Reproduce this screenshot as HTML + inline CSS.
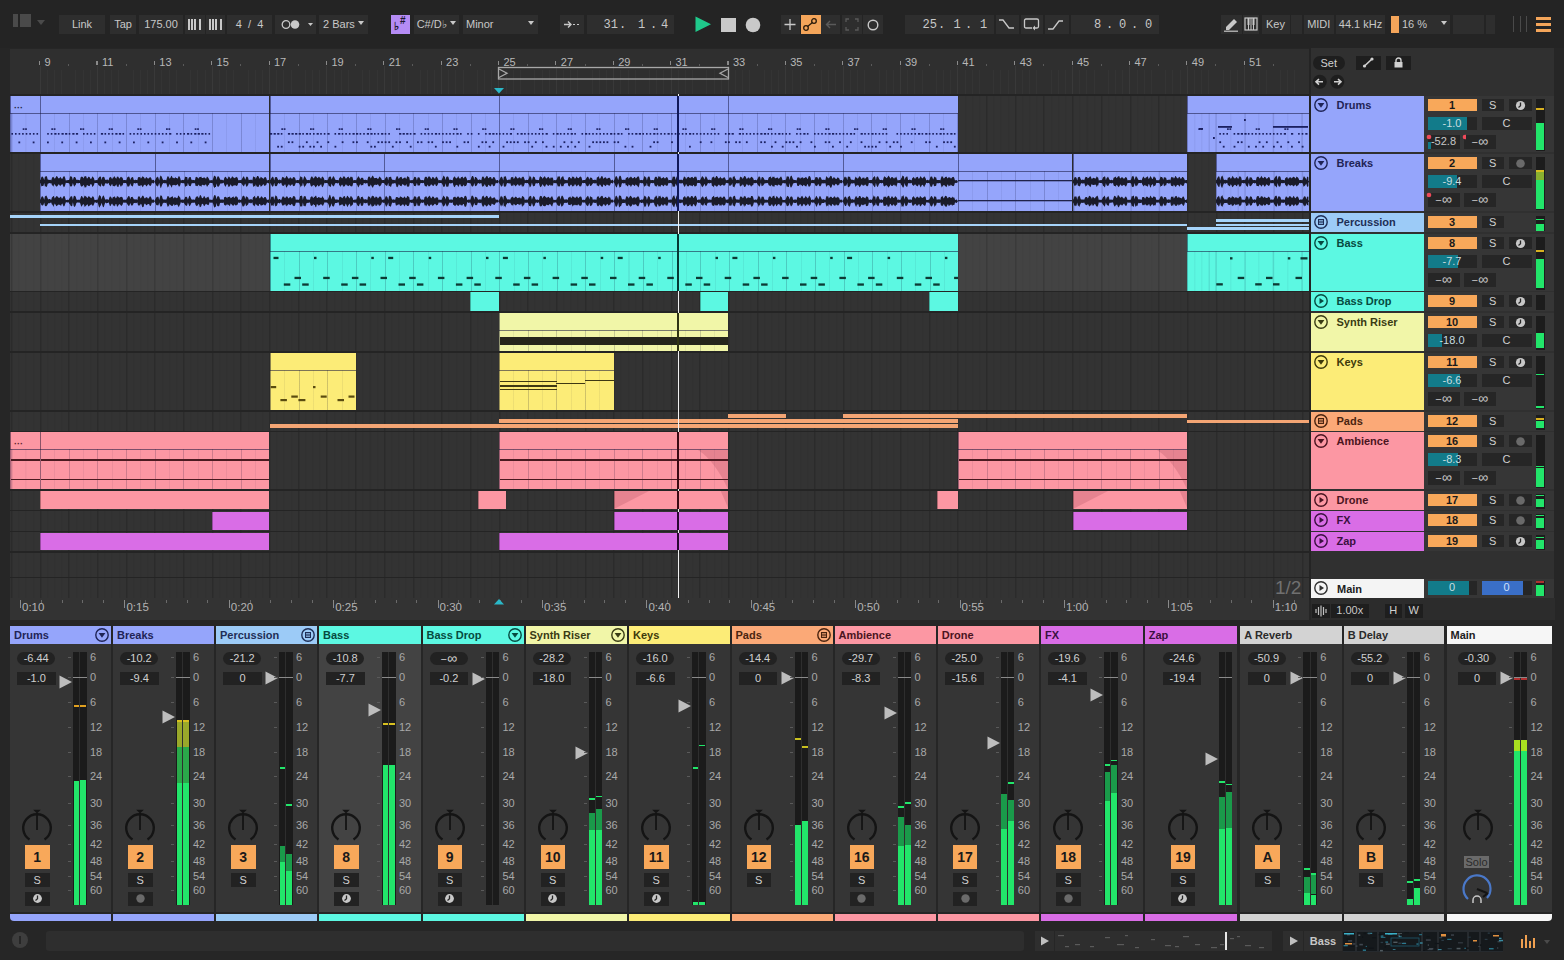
<!DOCTYPE html><html><head><meta charset="utf-8"><style>
*{margin:0;padding:0;box-sizing:border-box}
html,body{width:1564px;height:960px;overflow:hidden;background:#262626}
body{position:relative;font-family:"Liberation Sans",sans-serif}
div,svg{position:absolute}
</style></head><body><div style="left:0.0px;top:0.0px;width:1564.0px;height:48.0px;background:#242424;"></div><div style="left:13.0px;top:14.0px;width:5.0px;height:13.0px;background:#4a4a4a;"></div><div style="left:20.0px;top:14.0px;width:11.0px;height:13.0px;background:#4a4a4a;"></div><svg style="left:37px;top:20px" width="8" height="5"><path d="M0 0 L8 0 L4 5Z" fill="#4a4a4a"/></svg><div style="left:59.0px;top:15.0px;width:46.0px;height:19.0px;line-height:19.0px;background:#2e2e2e;color:#c8c8c8;font-size:11px;font-weight:normal;font-family:'Liberation Sans', sans-serif;text-align:center;white-space:nowrap;">Link</div><div style="left:110.0px;top:15.0px;width:26.0px;height:19.0px;line-height:19.0px;background:#2e2e2e;color:#c8c8c8;font-size:11px;font-weight:normal;font-family:'Liberation Sans', sans-serif;text-align:center;white-space:nowrap;">Tap</div><div style="left:139.0px;top:15.0px;width:44.0px;height:19.0px;line-height:19.0px;background:#2e2e2e;color:#c8c8c8;font-size:11px;font-weight:normal;font-family:'Liberation Sans', sans-serif;text-align:center;white-space:nowrap;">175.00</div><div style="left:184.5px;top:15.0px;width:20.0px;height:19.0px;background:#2e2e2e;"></div><div style="left:206.0px;top:15.0px;width:18.5px;height:19.0px;background:#2e2e2e;"></div><div style="left:188.0px;top:19.0px;width:1.6px;height:11.0px;background:#c8c8c8;"></div><div style="left:191.0px;top:19.0px;width:1.6px;height:11.0px;background:#c8c8c8;"></div><div style="left:194.0px;top:19.0px;width:1.6px;height:11.0px;background:#c8c8c8;"></div><div style="left:199.0px;top:19.0px;width:1.6px;height:11.0px;background:#c8c8c8;"></div><div style="left:209.0px;top:19.0px;width:1.6px;height:11.0px;background:#c8c8c8;"></div><div style="left:212.0px;top:19.0px;width:1.6px;height:11.0px;background:#c8c8c8;"></div><div style="left:215.0px;top:19.0px;width:1.6px;height:11.0px;background:#c8c8c8;"></div><div style="left:220.0px;top:19.0px;width:1.6px;height:11.0px;background:#c8c8c8;"></div><div style="left:227.0px;top:15.0px;width:45.0px;height:19.0px;line-height:19.0px;background:#2e2e2e;color:#c8c8c8;font-size:11px;font-weight:normal;font-family:'Liberation Sans', sans-serif;text-align:center;white-space:nowrap;">4&nbsp;&nbsp;/&nbsp;&nbsp;4</div><div style="left:275.0px;top:15.0px;width:40.5px;height:19.0px;background:#2e2e2e;"></div><svg style="left:281px;top:19px" width="40" height="11"><circle cx="5" cy="5.5" r="3.8" fill="none" stroke="#c8c8c8" stroke-width="1.3"/><circle cx="14" cy="5.5" r="4.3" fill="#c8c8c8"/><path d="M27 4 L32 4 L29.5 7Z" fill="#c8c8c8"/></svg><div style="left:319.0px;top:15.0px;width:49.0px;height:19.0px;line-height:19.0px;background:#2e2e2e;color:#c8c8c8;font-size:11px;font-weight:normal;font-family:'Liberation Sans', sans-serif;text-align:center;white-space:nowrap;">2 Bars&nbsp;&nbsp;&nbsp;</div><svg style="left:358px;top:21px" width="6" height="4"><path d="M0 0 L6 0 L3 4Z" fill="#c8c8c8"/></svg><div style="left:390.5px;top:15.0px;width:19.5px;height:18.5px;background:#b58cf5;"></div><div style="left:393.5px;top:20.5px;color:#1e1830;font-size:11px;font-weight:bold;font-family:'Liberation Sans', sans-serif;line-height:1;white-space:nowrap;">&#9837;</div><div style="left:400.0px;top:15.5px;color:#1e1830;font-size:10px;font-weight:bold;font-family:'Liberation Sans', sans-serif;line-height:1;white-space:nowrap;">#</div><div style="left:413.5px;top:15.0px;width:45.5px;height:19.0px;line-height:19.0px;background:#2e2e2e;color:#c8c8c8;font-size:11px;font-weight:normal;font-family:'Liberation Sans', sans-serif;text-align:center;white-space:nowrap;">C#/D&#9837;&nbsp;&nbsp;&nbsp;</div><svg style="left:450px;top:21px" width="6" height="4"><path d="M0 0 L6 0 L3 4Z" fill="#c8c8c8"/></svg><div style="left:462.5px;top:15.0px;width:75.0px;height:19.0px;background:#2e2e2e;"></div><div style="left:466.0px;top:19.0px;color:#c8c8c8;font-size:11px;font-weight:normal;font-family:'Liberation Sans', sans-serif;line-height:1;white-space:nowrap;">Minor</div><svg style="left:528px;top:21px" width="6" height="4"><path d="M0 0 L6 0 L3 4Z" fill="#c8c8c8"/></svg><div style="left:560.0px;top:15.0px;width:23.5px;height:19.0px;background:#2e2e2e;"></div><svg style="left:563px;top:19px" width="18" height="11"><path d="M1 5.5 L8 5.5 M5 2.5 L8 5.5 L5 8.5" stroke="#c8c8c8" stroke-width="1.4" fill="none"/><path d="M10 5.5 H12 M14 5.5 H16" stroke="#c8c8c8" stroke-width="1.2"/></svg><div style="left:587.0px;top:15.0px;width:87.0px;height:19.0px;background:#2e2e2e;"></div><div style="left:603.5px;top:19.0px;color:#c8c8c8;font-size:12px;font-weight:normal;font-family:'Liberation Mono', monospace;line-height:1;white-space:nowrap;">31</div><div style="left:619.0px;top:19.0px;color:#c8c8c8;font-size:12px;font-weight:normal;font-family:'Liberation Mono', monospace;line-height:1;white-space:nowrap;">.</div><div style="left:638.0px;top:19.0px;color:#c8c8c8;font-size:12px;font-weight:normal;font-family:'Liberation Mono', monospace;line-height:1;white-space:nowrap;">1</div><div style="left:650.0px;top:19.0px;color:#c8c8c8;font-size:12px;font-weight:normal;font-family:'Liberation Mono', monospace;line-height:1;white-space:nowrap;">.</div><div style="left:661.0px;top:19.0px;color:#c8c8c8;font-size:12px;font-weight:normal;font-family:'Liberation Mono', monospace;line-height:1;white-space:nowrap;">4</div><svg style="left:695px;top:16px" width="17" height="17"><path d="M0.5 0.5 L16 8.3 L0.5 16Z" fill="#1fc98b"/></svg><div style="left:721.0px;top:17.5px;width:14.5px;height:14.0px;background:#c9c9c9;"></div><svg style="left:745px;top:16.5px" width="16" height="16"><circle cx="8" cy="8" r="7.3" fill="#c9c9c9"/></svg><div style="left:780.5px;top:15.0px;width:19.0px;height:19.0px;background:#2e2e2e;"></div><svg style="left:783px;top:17px" width="14" height="15"><path d="M7 2 V13 M1.5 7.5 H12.5" stroke="#c8c8c8" stroke-width="1.3"/></svg><div style="left:800.5px;top:15.0px;width:20.0px;height:19.0px;background:#f4a55a;"></div><svg style="left:802px;top:17px" width="16" height="15"><circle cx="4" cy="11" r="2.3" fill="none" stroke="#2a1a0a" stroke-width="1.3"/><circle cx="12" cy="4" r="2.3" fill="none" stroke="#2a1a0a" stroke-width="1.3"/><path d="M5.6 9.4 L10.4 5.6" stroke="#2a1a0a" stroke-width="1.3"/></svg><div style="left:821.0px;top:15.0px;width:19.0px;height:19.0px;background:#2e2e2e;"></div><svg style="left:824px;top:18px" width="14" height="13"><path d="M12 6.5 H3 M6 3 L2.5 6.5 L6 10" stroke="#5a5a5a" stroke-width="1.4" fill="none"/></svg><div style="left:842.0px;top:15.0px;width:20.0px;height:19.0px;background:#2e2e2e;"></div><svg style="left:845px;top:18px" width="14" height="13"><path d="M1 4 V1 H4 M10 1 H13 V4 M13 9 V12 H10 M4 12 H1 V9" stroke="#5a5a5a" stroke-width="1.3" fill="none"/></svg><div style="left:863.0px;top:15.0px;width:20.0px;height:19.0px;background:#2e2e2e;"></div><svg style="left:866px;top:18px" width="14" height="14"><circle cx="7" cy="7" r="4.8" fill="none" stroke="#c8c8c8" stroke-width="1.4"/></svg><div style="left:904.5px;top:15.0px;width:89.0px;height:19.0px;background:#2e2e2e;"></div><div style="left:922.5px;top:19.0px;color:#c8c8c8;font-size:12px;font-weight:normal;font-family:'Liberation Mono', monospace;line-height:1;white-space:nowrap;">25</div><div style="left:938.0px;top:19.0px;color:#c8c8c8;font-size:12px;font-weight:normal;font-family:'Liberation Mono', monospace;line-height:1;white-space:nowrap;">.</div><div style="left:953.5px;top:19.0px;color:#c8c8c8;font-size:12px;font-weight:normal;font-family:'Liberation Mono', monospace;line-height:1;white-space:nowrap;">1</div><div style="left:965.0px;top:19.0px;color:#c8c8c8;font-size:12px;font-weight:normal;font-family:'Liberation Mono', monospace;line-height:1;white-space:nowrap;">.</div><div style="left:980.0px;top:19.0px;color:#c8c8c8;font-size:12px;font-weight:normal;font-family:'Liberation Mono', monospace;line-height:1;white-space:nowrap;">1</div><div style="left:995.5px;top:15.0px;width:23.5px;height:19.0px;background:#2e2e2e;"></div><svg style="left:998px;top:18px" width="18" height="13"><path d="M1 2 H5 L11 10 H16" stroke="#c8c8c8" stroke-width="1.3" fill="none"/></svg><div style="left:1021.0px;top:15.0px;width:21.5px;height:19.0px;background:#2e2e2e;"></div><svg style="left:1023px;top:17px" width="18" height="15"><path d="M9 11 H3 Q1.5 11 1.5 9.5 V3.5 Q1.5 2 3 2 H14 Q15.5 2 15.5 3.5 V9.5 Q15.5 11 14 11 H12" stroke="#c8c8c8" stroke-width="1.3" fill="none"/><path d="M12 8.5 L9.5 11 L12 13.5Z" fill="#c8c8c8"/></svg><div style="left:1044.5px;top:15.0px;width:24.5px;height:19.0px;background:#2e2e2e;"></div><svg style="left:1047px;top:18px" width="18" height="13"><path d="M1 11 H6 L12 3 H16" stroke="#c8c8c8" stroke-width="1.3" fill="none"/></svg><div style="left:1071.0px;top:15.0px;width:88.0px;height:19.0px;background:#2e2e2e;"></div><div style="left:1094.0px;top:19.0px;color:#c8c8c8;font-size:12px;font-weight:normal;font-family:'Liberation Mono', monospace;line-height:1;white-space:nowrap;">8</div><div style="left:1106.0px;top:19.0px;color:#c8c8c8;font-size:12px;font-weight:normal;font-family:'Liberation Mono', monospace;line-height:1;white-space:nowrap;">.</div><div style="left:1119.0px;top:19.0px;color:#c8c8c8;font-size:12px;font-weight:normal;font-family:'Liberation Mono', monospace;line-height:1;white-space:nowrap;">0</div><div style="left:1131.0px;top:19.0px;color:#c8c8c8;font-size:12px;font-weight:normal;font-family:'Liberation Mono', monospace;line-height:1;white-space:nowrap;">.</div><div style="left:1145.0px;top:19.0px;color:#c8c8c8;font-size:12px;font-weight:normal;font-family:'Liberation Mono', monospace;line-height:1;white-space:nowrap;">0</div><div style="left:1221.0px;top:15.0px;width:21.0px;height:19.0px;background:#2e2e2e;"></div><svg style="left:1223px;top:17px" width="17" height="15"><path d="M3 10 L11 2 L14 5 L6 13 L3 13Z" fill="#c8c8c8"/><path d="M1 14.2 H15" stroke="#c8c8c8" stroke-width="1.2"/></svg><div style="left:1243.0px;top:15.0px;width:16.0px;height:19.0px;background:#2e2e2e;"></div><svg style="left:1244px;top:17px" width="14" height="14"><rect x="1" y="1" width="12" height="12" fill="none" stroke="#c8c8c8" stroke-width="1.2"/><path d="M4.5 1 V13 M7 1 V13 M9.5 1 V13" stroke="#c8c8c8" stroke-width="1"/><rect x="3.5" y="1" width="2" height="7" fill="#c8c8c8"/><rect x="8.5" y="1" width="2" height="7" fill="#c8c8c8"/></svg><div style="left:1261.5px;top:15.0px;width:28.0px;height:19.0px;line-height:19.0px;background:#2e2e2e;color:#c8c8c8;font-size:11px;font-weight:normal;font-family:'Liberation Sans', sans-serif;text-align:center;white-space:nowrap;">Key</div><div style="left:1291.0px;top:15.0px;width:11.0px;height:19.0px;background:#2e2e2e;"></div><div style="left:1303.5px;top:15.0px;width:30.5px;height:19.0px;line-height:19.0px;background:#2e2e2e;color:#c8c8c8;font-size:11px;font-weight:normal;font-family:'Liberation Sans', sans-serif;text-align:center;white-space:nowrap;">MIDI</div><div style="left:1336.0px;top:15.0px;width:49.0px;height:19.0px;line-height:19.0px;background:#2e2e2e;color:#c8c8c8;font-size:11px;font-weight:normal;font-family:'Liberation Sans', sans-serif;text-align:center;white-space:nowrap;">44.1 kHz</div><div style="left:1390.5px;top:16.0px;width:8.5px;height:16.5px;background:#f4a55a;"></div><div style="left:1399.0px;top:15.0px;width:51.0px;height:19.0px;background:#2e2e2e;"></div><div style="left:1402.0px;top:19.0px;color:#c8c8c8;font-size:11px;font-weight:normal;font-family:'Liberation Sans', sans-serif;line-height:1;white-space:nowrap;">16 %</div><svg style="left:1441px;top:21px" width="6" height="4"><path d="M0 0 L6 0 L3 4Z" fill="#c8c8c8"/></svg><div style="left:1453.0px;top:15.0px;width:31.0px;height:19.0px;background:#2e2e2e;"></div><div style="left:1485.5px;top:15.0px;width:9.5px;height:19.0px;background:#2e2e2e;"></div><div style="left:1513.0px;top:16.0px;width:1.3px;height:16.0px;background:#4a4a4a;"></div><div style="left:1519.5px;top:16.0px;width:1.3px;height:16.0px;background:#4a4a4a;"></div><div style="left:1526.0px;top:16.0px;width:1.3px;height:16.0px;background:#4a4a4a;"></div><div style="left:1536.0px;top:16.5px;width:15.0px;height:3.0px;background:#f4a55a;"></div><div style="left:1536.0px;top:22.8px;width:15.0px;height:3.0px;background:#f4a55a;"></div><div style="left:1536.0px;top:29.0px;width:15.0px;height:3.0px;background:#f4a55a;"></div><div style="left:10.0px;top:49.0px;width:1544.0px;height:44.5px;background:#2f2f2f;"></div><div style="left:39.6px;top:66.0px;width:1.0px;height:27.5px;background:#393939;"></div><div style="left:44.6px;top:57.0px;color:#b8b8b8;font-size:11px;font-weight:normal;font-family:'Liberation Sans', sans-serif;line-height:1;white-space:nowrap;">9</div><div style="left:39.1px;top:61.0px;width:1.2px;height:4.0px;background:#8a8a8a;"></div><div style="left:68.2px;top:64.0px;width:1.0px;height:2.0px;background:#5a5a5a;"></div><div style="left:96.9px;top:66.0px;width:1.0px;height:27.5px;background:#393939;"></div><div style="left:101.9px;top:57.0px;color:#b8b8b8;font-size:11px;font-weight:normal;font-family:'Liberation Sans', sans-serif;line-height:1;white-space:nowrap;">11</div><div style="left:96.4px;top:61.0px;width:1.2px;height:4.0px;background:#8a8a8a;"></div><div style="left:125.6px;top:64.0px;width:1.0px;height:2.0px;background:#5a5a5a;"></div><div style="left:154.3px;top:66.0px;width:1.0px;height:27.5px;background:#393939;"></div><div style="left:159.3px;top:57.0px;color:#b8b8b8;font-size:11px;font-weight:normal;font-family:'Liberation Sans', sans-serif;line-height:1;white-space:nowrap;">13</div><div style="left:153.8px;top:61.0px;width:1.2px;height:4.0px;background:#8a8a8a;"></div><div style="left:183.0px;top:64.0px;width:1.0px;height:2.0px;background:#5a5a5a;"></div><div style="left:211.6px;top:66.0px;width:1.0px;height:27.5px;background:#393939;"></div><div style="left:216.6px;top:57.0px;color:#b8b8b8;font-size:11px;font-weight:normal;font-family:'Liberation Sans', sans-serif;line-height:1;white-space:nowrap;">15</div><div style="left:211.1px;top:61.0px;width:1.2px;height:4.0px;background:#8a8a8a;"></div><div style="left:240.3px;top:64.0px;width:1.0px;height:2.0px;background:#5a5a5a;"></div><div style="left:269.0px;top:66.0px;width:1.0px;height:27.5px;background:#393939;"></div><div style="left:274.0px;top:57.0px;color:#b8b8b8;font-size:11px;font-weight:normal;font-family:'Liberation Sans', sans-serif;line-height:1;white-space:nowrap;">17</div><div style="left:268.5px;top:61.0px;width:1.2px;height:4.0px;background:#8a8a8a;"></div><div style="left:297.7px;top:64.0px;width:1.0px;height:2.0px;background:#5a5a5a;"></div><div style="left:326.4px;top:66.0px;width:1.0px;height:27.5px;background:#393939;"></div><div style="left:331.4px;top:57.0px;color:#b8b8b8;font-size:11px;font-weight:normal;font-family:'Liberation Sans', sans-serif;line-height:1;white-space:nowrap;">19</div><div style="left:325.9px;top:61.0px;width:1.2px;height:4.0px;background:#8a8a8a;"></div><div style="left:355.0px;top:64.0px;width:1.0px;height:2.0px;background:#5a5a5a;"></div><div style="left:383.7px;top:66.0px;width:1.0px;height:27.5px;background:#393939;"></div><div style="left:388.7px;top:57.0px;color:#b8b8b8;font-size:11px;font-weight:normal;font-family:'Liberation Sans', sans-serif;line-height:1;white-space:nowrap;">21</div><div style="left:383.2px;top:61.0px;width:1.2px;height:4.0px;background:#8a8a8a;"></div><div style="left:412.4px;top:64.0px;width:1.0px;height:2.0px;background:#5a5a5a;"></div><div style="left:441.1px;top:66.0px;width:1.0px;height:27.5px;background:#393939;"></div><div style="left:446.1px;top:57.0px;color:#b8b8b8;font-size:11px;font-weight:normal;font-family:'Liberation Sans', sans-serif;line-height:1;white-space:nowrap;">23</div><div style="left:440.6px;top:61.0px;width:1.2px;height:4.0px;background:#8a8a8a;"></div><div style="left:469.8px;top:64.0px;width:1.0px;height:2.0px;background:#5a5a5a;"></div><div style="left:498.4px;top:66.0px;width:1.0px;height:27.5px;background:#393939;"></div><div style="left:503.4px;top:57.0px;color:#b8b8b8;font-size:11px;font-weight:normal;font-family:'Liberation Sans', sans-serif;line-height:1;white-space:nowrap;">25</div><div style="left:497.9px;top:61.0px;width:1.2px;height:4.0px;background:#8a8a8a;"></div><div style="left:527.1px;top:64.0px;width:1.0px;height:2.0px;background:#5a5a5a;"></div><div style="left:555.8px;top:66.0px;width:1.0px;height:27.5px;background:#393939;"></div><div style="left:560.8px;top:57.0px;color:#b8b8b8;font-size:11px;font-weight:normal;font-family:'Liberation Sans', sans-serif;line-height:1;white-space:nowrap;">27</div><div style="left:555.3px;top:61.0px;width:1.2px;height:4.0px;background:#8a8a8a;"></div><div style="left:584.5px;top:64.0px;width:1.0px;height:2.0px;background:#5a5a5a;"></div><div style="left:613.2px;top:66.0px;width:1.0px;height:27.5px;background:#393939;"></div><div style="left:618.2px;top:57.0px;color:#b8b8b8;font-size:11px;font-weight:normal;font-family:'Liberation Sans', sans-serif;line-height:1;white-space:nowrap;">29</div><div style="left:612.7px;top:61.0px;width:1.2px;height:4.0px;background:#8a8a8a;"></div><div style="left:641.8px;top:64.0px;width:1.0px;height:2.0px;background:#5a5a5a;"></div><div style="left:670.5px;top:66.0px;width:1.0px;height:27.5px;background:#393939;"></div><div style="left:675.5px;top:57.0px;color:#b8b8b8;font-size:11px;font-weight:normal;font-family:'Liberation Sans', sans-serif;line-height:1;white-space:nowrap;">31</div><div style="left:670.0px;top:61.0px;width:1.2px;height:4.0px;background:#8a8a8a;"></div><div style="left:699.2px;top:64.0px;width:1.0px;height:2.0px;background:#5a5a5a;"></div><div style="left:727.9px;top:66.0px;width:1.0px;height:27.5px;background:#393939;"></div><div style="left:732.9px;top:57.0px;color:#b8b8b8;font-size:11px;font-weight:normal;font-family:'Liberation Sans', sans-serif;line-height:1;white-space:nowrap;">33</div><div style="left:727.4px;top:61.0px;width:1.2px;height:4.0px;background:#8a8a8a;"></div><div style="left:756.6px;top:64.0px;width:1.0px;height:2.0px;background:#5a5a5a;"></div><div style="left:785.2px;top:66.0px;width:1.0px;height:27.5px;background:#393939;"></div><div style="left:790.2px;top:57.0px;color:#b8b8b8;font-size:11px;font-weight:normal;font-family:'Liberation Sans', sans-serif;line-height:1;white-space:nowrap;">35</div><div style="left:784.7px;top:61.0px;width:1.2px;height:4.0px;background:#8a8a8a;"></div><div style="left:813.9px;top:64.0px;width:1.0px;height:2.0px;background:#5a5a5a;"></div><div style="left:842.6px;top:66.0px;width:1.0px;height:27.5px;background:#393939;"></div><div style="left:847.6px;top:57.0px;color:#b8b8b8;font-size:11px;font-weight:normal;font-family:'Liberation Sans', sans-serif;line-height:1;white-space:nowrap;">37</div><div style="left:842.1px;top:61.0px;width:1.2px;height:4.0px;background:#8a8a8a;"></div><div style="left:871.3px;top:64.0px;width:1.0px;height:2.0px;background:#5a5a5a;"></div><div style="left:900.0px;top:66.0px;width:1.0px;height:27.5px;background:#393939;"></div><div style="left:905.0px;top:57.0px;color:#b8b8b8;font-size:11px;font-weight:normal;font-family:'Liberation Sans', sans-serif;line-height:1;white-space:nowrap;">39</div><div style="left:899.5px;top:61.0px;width:1.2px;height:4.0px;background:#8a8a8a;"></div><div style="left:928.6px;top:64.0px;width:1.0px;height:2.0px;background:#5a5a5a;"></div><div style="left:957.3px;top:66.0px;width:1.0px;height:27.5px;background:#393939;"></div><div style="left:962.3px;top:57.0px;color:#b8b8b8;font-size:11px;font-weight:normal;font-family:'Liberation Sans', sans-serif;line-height:1;white-space:nowrap;">41</div><div style="left:956.8px;top:61.0px;width:1.2px;height:4.0px;background:#8a8a8a;"></div><div style="left:986.0px;top:64.0px;width:1.0px;height:2.0px;background:#5a5a5a;"></div><div style="left:1014.7px;top:66.0px;width:1.0px;height:27.5px;background:#393939;"></div><div style="left:1019.7px;top:57.0px;color:#b8b8b8;font-size:11px;font-weight:normal;font-family:'Liberation Sans', sans-serif;line-height:1;white-space:nowrap;">43</div><div style="left:1014.2px;top:61.0px;width:1.2px;height:4.0px;background:#8a8a8a;"></div><div style="left:1043.4px;top:64.0px;width:1.0px;height:2.0px;background:#5a5a5a;"></div><div style="left:1072.0px;top:66.0px;width:1.0px;height:27.5px;background:#393939;"></div><div style="left:1077.0px;top:57.0px;color:#b8b8b8;font-size:11px;font-weight:normal;font-family:'Liberation Sans', sans-serif;line-height:1;white-space:nowrap;">45</div><div style="left:1071.5px;top:61.0px;width:1.2px;height:4.0px;background:#8a8a8a;"></div><div style="left:1100.7px;top:64.0px;width:1.0px;height:2.0px;background:#5a5a5a;"></div><div style="left:1129.4px;top:66.0px;width:1.0px;height:27.5px;background:#393939;"></div><div style="left:1134.4px;top:57.0px;color:#b8b8b8;font-size:11px;font-weight:normal;font-family:'Liberation Sans', sans-serif;line-height:1;white-space:nowrap;">47</div><div style="left:1128.9px;top:61.0px;width:1.2px;height:4.0px;background:#8a8a8a;"></div><div style="left:1158.1px;top:64.0px;width:1.0px;height:2.0px;background:#5a5a5a;"></div><div style="left:1186.8px;top:66.0px;width:1.0px;height:27.5px;background:#393939;"></div><div style="left:1191.8px;top:57.0px;color:#b8b8b8;font-size:11px;font-weight:normal;font-family:'Liberation Sans', sans-serif;line-height:1;white-space:nowrap;">49</div><div style="left:1186.3px;top:61.0px;width:1.2px;height:4.0px;background:#8a8a8a;"></div><div style="left:1215.4px;top:64.0px;width:1.0px;height:2.0px;background:#5a5a5a;"></div><div style="left:1244.1px;top:66.0px;width:1.0px;height:27.5px;background:#393939;"></div><div style="left:1249.1px;top:57.0px;color:#b8b8b8;font-size:11px;font-weight:normal;font-family:'Liberation Sans', sans-serif;line-height:1;white-space:nowrap;">51</div><div style="left:1243.6px;top:61.0px;width:1.2px;height:4.0px;background:#8a8a8a;"></div><div style="left:1272.8px;top:64.0px;width:1.0px;height:2.0px;background:#5a5a5a;"></div><div style="left:46.7px;top:70.0px;width:1.0px;height:23.5px;background:#343434;"></div><div style="left:53.9px;top:70.0px;width:1.0px;height:23.5px;background:#343434;"></div><div style="left:61.1px;top:70.0px;width:1.0px;height:23.5px;background:#343434;"></div><div style="left:75.4px;top:70.0px;width:1.0px;height:23.5px;background:#343434;"></div><div style="left:82.6px;top:70.0px;width:1.0px;height:23.5px;background:#343434;"></div><div style="left:89.8px;top:70.0px;width:1.0px;height:23.5px;background:#343434;"></div><div style="left:104.1px;top:70.0px;width:1.0px;height:23.5px;background:#343434;"></div><div style="left:111.3px;top:70.0px;width:1.0px;height:23.5px;background:#343434;"></div><div style="left:118.4px;top:70.0px;width:1.0px;height:23.5px;background:#343434;"></div><div style="left:132.8px;top:70.0px;width:1.0px;height:23.5px;background:#343434;"></div><div style="left:139.9px;top:70.0px;width:1.0px;height:23.5px;background:#343434;"></div><div style="left:147.1px;top:70.0px;width:1.0px;height:23.5px;background:#343434;"></div><div style="left:161.4px;top:70.0px;width:1.0px;height:23.5px;background:#343434;"></div><div style="left:168.6px;top:70.0px;width:1.0px;height:23.5px;background:#343434;"></div><div style="left:175.8px;top:70.0px;width:1.0px;height:23.5px;background:#343434;"></div><div style="left:190.1px;top:70.0px;width:1.0px;height:23.5px;background:#343434;"></div><div style="left:197.3px;top:70.0px;width:1.0px;height:23.5px;background:#343434;"></div><div style="left:204.5px;top:70.0px;width:1.0px;height:23.5px;background:#343434;"></div><div style="left:218.8px;top:70.0px;width:1.0px;height:23.5px;background:#343434;"></div><div style="left:226.0px;top:70.0px;width:1.0px;height:23.5px;background:#343434;"></div><div style="left:233.2px;top:70.0px;width:1.0px;height:23.5px;background:#343434;"></div><div style="left:247.5px;top:70.0px;width:1.0px;height:23.5px;background:#343434;"></div><div style="left:254.7px;top:70.0px;width:1.0px;height:23.5px;background:#343434;"></div><div style="left:261.8px;top:70.0px;width:1.0px;height:23.5px;background:#343434;"></div><div style="left:276.2px;top:70.0px;width:1.0px;height:23.5px;background:#343434;"></div><div style="left:283.3px;top:70.0px;width:1.0px;height:23.5px;background:#343434;"></div><div style="left:290.5px;top:70.0px;width:1.0px;height:23.5px;background:#343434;"></div><div style="left:304.9px;top:70.0px;width:1.0px;height:23.5px;background:#343434;"></div><div style="left:312.0px;top:70.0px;width:1.0px;height:23.5px;background:#343434;"></div><div style="left:319.2px;top:70.0px;width:1.0px;height:23.5px;background:#343434;"></div><div style="left:333.5px;top:70.0px;width:1.0px;height:23.5px;background:#343434;"></div><div style="left:340.7px;top:70.0px;width:1.0px;height:23.5px;background:#343434;"></div><div style="left:347.9px;top:70.0px;width:1.0px;height:23.5px;background:#343434;"></div><div style="left:362.2px;top:70.0px;width:1.0px;height:23.5px;background:#343434;"></div><div style="left:369.4px;top:70.0px;width:1.0px;height:23.5px;background:#343434;"></div><div style="left:376.6px;top:70.0px;width:1.0px;height:23.5px;background:#343434;"></div><div style="left:390.9px;top:70.0px;width:1.0px;height:23.5px;background:#343434;"></div><div style="left:398.1px;top:70.0px;width:1.0px;height:23.5px;background:#343434;"></div><div style="left:405.2px;top:70.0px;width:1.0px;height:23.5px;background:#343434;"></div><div style="left:419.6px;top:70.0px;width:1.0px;height:23.5px;background:#343434;"></div><div style="left:426.7px;top:70.0px;width:1.0px;height:23.5px;background:#343434;"></div><div style="left:433.9px;top:70.0px;width:1.0px;height:23.5px;background:#343434;"></div><div style="left:448.2px;top:70.0px;width:1.0px;height:23.5px;background:#343434;"></div><div style="left:455.4px;top:70.0px;width:1.0px;height:23.5px;background:#343434;"></div><div style="left:462.6px;top:70.0px;width:1.0px;height:23.5px;background:#343434;"></div><div style="left:476.9px;top:70.0px;width:1.0px;height:23.5px;background:#343434;"></div><div style="left:484.1px;top:70.0px;width:1.0px;height:23.5px;background:#343434;"></div><div style="left:491.3px;top:70.0px;width:1.0px;height:23.5px;background:#343434;"></div><div style="left:505.6px;top:70.0px;width:1.0px;height:23.5px;background:#343434;"></div><div style="left:512.8px;top:70.0px;width:1.0px;height:23.5px;background:#343434;"></div><div style="left:520.0px;top:70.0px;width:1.0px;height:23.5px;background:#343434;"></div><div style="left:534.3px;top:70.0px;width:1.0px;height:23.5px;background:#343434;"></div><div style="left:541.5px;top:70.0px;width:1.0px;height:23.5px;background:#343434;"></div><div style="left:548.6px;top:70.0px;width:1.0px;height:23.5px;background:#343434;"></div><div style="left:563.0px;top:70.0px;width:1.0px;height:23.5px;background:#343434;"></div><div style="left:570.1px;top:70.0px;width:1.0px;height:23.5px;background:#343434;"></div><div style="left:577.3px;top:70.0px;width:1.0px;height:23.5px;background:#343434;"></div><div style="left:591.6px;top:70.0px;width:1.0px;height:23.5px;background:#343434;"></div><div style="left:598.8px;top:70.0px;width:1.0px;height:23.5px;background:#343434;"></div><div style="left:606.0px;top:70.0px;width:1.0px;height:23.5px;background:#343434;"></div><div style="left:620.3px;top:70.0px;width:1.0px;height:23.5px;background:#343434;"></div><div style="left:627.5px;top:70.0px;width:1.0px;height:23.5px;background:#343434;"></div><div style="left:634.7px;top:70.0px;width:1.0px;height:23.5px;background:#343434;"></div><div style="left:649.0px;top:70.0px;width:1.0px;height:23.5px;background:#343434;"></div><div style="left:656.2px;top:70.0px;width:1.0px;height:23.5px;background:#343434;"></div><div style="left:663.4px;top:70.0px;width:1.0px;height:23.5px;background:#343434;"></div><div style="left:677.7px;top:70.0px;width:1.0px;height:23.5px;background:#343434;"></div><div style="left:684.9px;top:70.0px;width:1.0px;height:23.5px;background:#343434;"></div><div style="left:692.0px;top:70.0px;width:1.0px;height:23.5px;background:#343434;"></div><div style="left:706.4px;top:70.0px;width:1.0px;height:23.5px;background:#343434;"></div><div style="left:713.5px;top:70.0px;width:1.0px;height:23.5px;background:#343434;"></div><div style="left:720.7px;top:70.0px;width:1.0px;height:23.5px;background:#343434;"></div><div style="left:735.0px;top:70.0px;width:1.0px;height:23.5px;background:#343434;"></div><div style="left:742.2px;top:70.0px;width:1.0px;height:23.5px;background:#343434;"></div><div style="left:749.4px;top:70.0px;width:1.0px;height:23.5px;background:#343434;"></div><div style="left:763.7px;top:70.0px;width:1.0px;height:23.5px;background:#343434;"></div><div style="left:770.9px;top:70.0px;width:1.0px;height:23.5px;background:#343434;"></div><div style="left:778.1px;top:70.0px;width:1.0px;height:23.5px;background:#343434;"></div><div style="left:792.4px;top:70.0px;width:1.0px;height:23.5px;background:#343434;"></div><div style="left:799.6px;top:70.0px;width:1.0px;height:23.5px;background:#343434;"></div><div style="left:806.8px;top:70.0px;width:1.0px;height:23.5px;background:#343434;"></div><div style="left:821.1px;top:70.0px;width:1.0px;height:23.5px;background:#343434;"></div><div style="left:828.3px;top:70.0px;width:1.0px;height:23.5px;background:#343434;"></div><div style="left:835.4px;top:70.0px;width:1.0px;height:23.5px;background:#343434;"></div><div style="left:849.8px;top:70.0px;width:1.0px;height:23.5px;background:#343434;"></div><div style="left:856.9px;top:70.0px;width:1.0px;height:23.5px;background:#343434;"></div><div style="left:864.1px;top:70.0px;width:1.0px;height:23.5px;background:#343434;"></div><div style="left:878.5px;top:70.0px;width:1.0px;height:23.5px;background:#343434;"></div><div style="left:885.6px;top:70.0px;width:1.0px;height:23.5px;background:#343434;"></div><div style="left:892.8px;top:70.0px;width:1.0px;height:23.5px;background:#343434;"></div><div style="left:907.1px;top:70.0px;width:1.0px;height:23.5px;background:#343434;"></div><div style="left:914.3px;top:70.0px;width:1.0px;height:23.5px;background:#343434;"></div><div style="left:921.5px;top:70.0px;width:1.0px;height:23.5px;background:#343434;"></div><div style="left:935.8px;top:70.0px;width:1.0px;height:23.5px;background:#343434;"></div><div style="left:943.0px;top:70.0px;width:1.0px;height:23.5px;background:#343434;"></div><div style="left:950.1px;top:70.0px;width:1.0px;height:23.5px;background:#343434;"></div><div style="left:964.5px;top:70.0px;width:1.0px;height:23.5px;background:#343434;"></div><div style="left:971.7px;top:70.0px;width:1.0px;height:23.5px;background:#343434;"></div><div style="left:978.8px;top:70.0px;width:1.0px;height:23.5px;background:#343434;"></div><div style="left:993.2px;top:70.0px;width:1.0px;height:23.5px;background:#343434;"></div><div style="left:1000.3px;top:70.0px;width:1.0px;height:23.5px;background:#343434;"></div><div style="left:1007.5px;top:70.0px;width:1.0px;height:23.5px;background:#343434;"></div><div style="left:1021.9px;top:70.0px;width:1.0px;height:23.5px;background:#343434;"></div><div style="left:1029.0px;top:70.0px;width:1.0px;height:23.5px;background:#343434;"></div><div style="left:1036.2px;top:70.0px;width:1.0px;height:23.5px;background:#343434;"></div><div style="left:1050.5px;top:70.0px;width:1.0px;height:23.5px;background:#343434;"></div><div style="left:1057.7px;top:70.0px;width:1.0px;height:23.5px;background:#343434;"></div><div style="left:1064.9px;top:70.0px;width:1.0px;height:23.5px;background:#343434;"></div><div style="left:1079.2px;top:70.0px;width:1.0px;height:23.5px;background:#343434;"></div><div style="left:1086.4px;top:70.0px;width:1.0px;height:23.5px;background:#343434;"></div><div style="left:1093.5px;top:70.0px;width:1.0px;height:23.5px;background:#343434;"></div><div style="left:1107.9px;top:70.0px;width:1.0px;height:23.5px;background:#343434;"></div><div style="left:1115.1px;top:70.0px;width:1.0px;height:23.5px;background:#343434;"></div><div style="left:1122.2px;top:70.0px;width:1.0px;height:23.5px;background:#343434;"></div><div style="left:1136.6px;top:70.0px;width:1.0px;height:23.5px;background:#343434;"></div><div style="left:1143.7px;top:70.0px;width:1.0px;height:23.5px;background:#343434;"></div><div style="left:1150.9px;top:70.0px;width:1.0px;height:23.5px;background:#343434;"></div><div style="left:1165.2px;top:70.0px;width:1.0px;height:23.5px;background:#343434;"></div><div style="left:1172.4px;top:70.0px;width:1.0px;height:23.5px;background:#343434;"></div><div style="left:1179.6px;top:70.0px;width:1.0px;height:23.5px;background:#343434;"></div><div style="left:1193.9px;top:70.0px;width:1.0px;height:23.5px;background:#343434;"></div><div style="left:1201.1px;top:70.0px;width:1.0px;height:23.5px;background:#343434;"></div><div style="left:1208.3px;top:70.0px;width:1.0px;height:23.5px;background:#343434;"></div><div style="left:1222.6px;top:70.0px;width:1.0px;height:23.5px;background:#343434;"></div><div style="left:1229.8px;top:70.0px;width:1.0px;height:23.5px;background:#343434;"></div><div style="left:1237.0px;top:70.0px;width:1.0px;height:23.5px;background:#343434;"></div><div style="left:1251.3px;top:70.0px;width:1.0px;height:23.5px;background:#343434;"></div><div style="left:1258.5px;top:70.0px;width:1.0px;height:23.5px;background:#343434;"></div><div style="left:1265.6px;top:70.0px;width:1.0px;height:23.5px;background:#343434;"></div><div style="left:1280.0px;top:70.0px;width:1.0px;height:23.5px;background:#343434;"></div><div style="left:1287.1px;top:70.0px;width:1.0px;height:23.5px;background:#343434;"></div><div style="left:1294.3px;top:70.0px;width:1.0px;height:23.5px;background:#343434;"></div><div style="left:1308.7px;top:70.0px;width:1.0px;height:23.5px;background:#343434;"></div><div style="left:1315.8px;top:70.0px;width:1.0px;height:23.5px;background:#343434;"></div><div style="left:1323.0px;top:70.0px;width:1.0px;height:23.5px;background:#343434;"></div><svg style="left:497px;top:66px" width="234" height="16"><rect x="1.5" y="1.5" width="230" height="11.5" fill="none" stroke="#a8a8a8" stroke-width="1.3"/><path d="M2 3 L10 7.2 L2 11.5" fill="none" stroke="#a8a8a8" stroke-width="1.3"/><path d="M231 3 L223 7.2 L231 11.5" fill="none" stroke="#a8a8a8" stroke-width="1.3"/></svg><svg style="left:494px;top:88px" width="10" height="6"><path d="M0 0 L10 0 L5 5.5Z" fill="#2ab8c8"/></svg><div style="left:10.0px;top:94.0px;width:1299.0px;height:506.0px;background:#242424;"></div><div style="left:10.0px;top:96.0px;width:1299.0px;height:56.0px;background:#333333;"></div><div style="left:10px;top:96px;width:1299px;height:56px;background:repeating-linear-gradient(90deg, rgba(0,0,0,0.18) 0px, rgba(0,0,0,0.18) 1px, transparent 1px, transparent 28.68px),repeating-linear-gradient(90deg, rgba(0,0,0,0.06) 0px, rgba(0,0,0,0.06) 1px, transparent 1px, transparent 7.17px);background-position:1.38px 0;"></div><div style="left:10.0px;top:154.0px;width:1299.0px;height:57.0px;background:#333333;"></div><div style="left:10px;top:154px;width:1299px;height:57px;background:repeating-linear-gradient(90deg, rgba(0,0,0,0.18) 0px, rgba(0,0,0,0.18) 1px, transparent 1px, transparent 28.68px),repeating-linear-gradient(90deg, rgba(0,0,0,0.06) 0px, rgba(0,0,0,0.06) 1px, transparent 1px, transparent 7.17px);background-position:1.38px 0;"></div><div style="left:10.0px;top:213.0px;width:1299.0px;height:19.0px;background:#333333;"></div><div style="left:10px;top:213px;width:1299px;height:19px;background:repeating-linear-gradient(90deg, rgba(0,0,0,0.18) 0px, rgba(0,0,0,0.18) 1px, transparent 1px, transparent 28.68px),repeating-linear-gradient(90deg, rgba(0,0,0,0.06) 0px, rgba(0,0,0,0.06) 1px, transparent 1px, transparent 7.17px);background-position:1.38px 0;"></div><div style="left:10.0px;top:234.0px;width:1299.0px;height:57.0px;background:#434343;"></div><div style="left:10px;top:234px;width:1299px;height:57px;background:repeating-linear-gradient(90deg, rgba(0,0,0,0.18) 0px, rgba(0,0,0,0.18) 1px, transparent 1px, transparent 28.68px),repeating-linear-gradient(90deg, rgba(0,0,0,0.06) 0px, rgba(0,0,0,0.06) 1px, transparent 1px, transparent 7.17px);background-position:1.38px 0;"></div><div style="left:10.0px;top:292.0px;width:1299.0px;height:19.0px;background:#333333;"></div><div style="left:10px;top:292px;width:1299px;height:19px;background:repeating-linear-gradient(90deg, rgba(0,0,0,0.18) 0px, rgba(0,0,0,0.18) 1px, transparent 1px, transparent 28.68px),repeating-linear-gradient(90deg, rgba(0,0,0,0.06) 0px, rgba(0,0,0,0.06) 1px, transparent 1px, transparent 7.17px);background-position:1.38px 0;"></div><div style="left:10.0px;top:313.0px;width:1299.0px;height:38.0px;background:#333333;"></div><div style="left:10px;top:313px;width:1299px;height:38px;background:repeating-linear-gradient(90deg, rgba(0,0,0,0.18) 0px, rgba(0,0,0,0.18) 1px, transparent 1px, transparent 28.68px),repeating-linear-gradient(90deg, rgba(0,0,0,0.06) 0px, rgba(0,0,0,0.06) 1px, transparent 1px, transparent 7.17px);background-position:1.38px 0;"></div><div style="left:10.0px;top:353.0px;width:1299.0px;height:57.0px;background:#333333;"></div><div style="left:10px;top:353px;width:1299px;height:57px;background:repeating-linear-gradient(90deg, rgba(0,0,0,0.18) 0px, rgba(0,0,0,0.18) 1px, transparent 1px, transparent 28.68px),repeating-linear-gradient(90deg, rgba(0,0,0,0.06) 0px, rgba(0,0,0,0.06) 1px, transparent 1px, transparent 7.17px);background-position:1.38px 0;"></div><div style="left:10.0px;top:412.0px;width:1299.0px;height:19.0px;background:#333333;"></div><div style="left:10px;top:412px;width:1299px;height:19px;background:repeating-linear-gradient(90deg, rgba(0,0,0,0.18) 0px, rgba(0,0,0,0.18) 1px, transparent 1px, transparent 28.68px),repeating-linear-gradient(90deg, rgba(0,0,0,0.06) 0px, rgba(0,0,0,0.06) 1px, transparent 1px, transparent 7.17px);background-position:1.38px 0;"></div><div style="left:10.0px;top:432.0px;width:1299.0px;height:57.0px;background:#333333;"></div><div style="left:10px;top:432px;width:1299px;height:57px;background:repeating-linear-gradient(90deg, rgba(0,0,0,0.18) 0px, rgba(0,0,0,0.18) 1px, transparent 1px, transparent 28.68px),repeating-linear-gradient(90deg, rgba(0,0,0,0.06) 0px, rgba(0,0,0,0.06) 1px, transparent 1px, transparent 7.17px);background-position:1.38px 0;"></div><div style="left:10.0px;top:491.0px;width:1299.0px;height:19.0px;background:#333333;"></div><div style="left:10px;top:491px;width:1299px;height:19px;background:repeating-linear-gradient(90deg, rgba(0,0,0,0.18) 0px, rgba(0,0,0,0.18) 1px, transparent 1px, transparent 28.68px),repeating-linear-gradient(90deg, rgba(0,0,0,0.06) 0px, rgba(0,0,0,0.06) 1px, transparent 1px, transparent 7.17px);background-position:1.38px 0;"></div><div style="left:10.0px;top:511.0px;width:1299.0px;height:20.0px;background:#333333;"></div><div style="left:10px;top:511px;width:1299px;height:20px;background:repeating-linear-gradient(90deg, rgba(0,0,0,0.18) 0px, rgba(0,0,0,0.18) 1px, transparent 1px, transparent 28.68px),repeating-linear-gradient(90deg, rgba(0,0,0,0.06) 0px, rgba(0,0,0,0.06) 1px, transparent 1px, transparent 7.17px);background-position:1.38px 0;"></div><div style="left:10.0px;top:532.0px;width:1299.0px;height:19.0px;background:#333333;"></div><div style="left:10px;top:532px;width:1299px;height:19px;background:repeating-linear-gradient(90deg, rgba(0,0,0,0.18) 0px, rgba(0,0,0,0.18) 1px, transparent 1px, transparent 28.68px),repeating-linear-gradient(90deg, rgba(0,0,0,0.06) 0px, rgba(0,0,0,0.06) 1px, transparent 1px, transparent 7.17px);background-position:1.38px 0;"></div><div style="left:10.0px;top:553.0px;width:1299.0px;height:24.0px;background:#333333;"></div><div style="left:10px;top:553px;width:1299px;height:24px;background:repeating-linear-gradient(90deg, rgba(0,0,0,0.18) 0px, rgba(0,0,0,0.18) 1px, transparent 1px, transparent 28.68px),repeating-linear-gradient(90deg, rgba(0,0,0,0.06) 0px, rgba(0,0,0,0.06) 1px, transparent 1px, transparent 7.17px);background-position:1.38px 0;"></div><div style="left:10.0px;top:578.0px;width:1299.0px;height:20.0px;background:#333333;"></div><div style="left:10px;top:578px;width:1299px;height:20px;background:repeating-linear-gradient(90deg, rgba(0,0,0,0.18) 0px, rgba(0,0,0,0.18) 1px, transparent 1px, transparent 28.68px),repeating-linear-gradient(90deg, rgba(0,0,0,0.06) 0px, rgba(0,0,0,0.06) 1px, transparent 1px, transparent 7.17px);background-position:1.38px 0;"></div><div style="left:10.0px;top:96.0px;width:30.1px;height:56.0px;background:#95a5fb;"></div><div style="left:10.0px;top:113.0px;width:30.1px;height:39.0px;background:repeating-linear-gradient(90deg, rgba(0,0,40,0.06) 0px, rgba(0,0,40,0.06) 1px, transparent 1px, transparent 14.34px);background-position:1.38px 0"></div><div style="left:10.0px;top:113.0px;width:30.1px;height:39.0px;background:repeating-linear-gradient(90deg, rgba(0,0,40,0.13) 0px, rgba(0,0,40,0.13) 1px, transparent 1px, transparent 28.68px);background-position:1.38px 0"></div><div style="left:10.0px;top:113.0px;width:30.1px;height:1.0px;background:rgba(20,20,60,0.55);"></div><div style="left:10.0px;top:96.0px;width:1.0px;height:17.0px;background:rgba(0,0,30,0.45);"></div><div style="left:10.0px;top:113.0px;width:1.0px;height:39.0px;background:rgba(0,0,30,0.25);"></div><div style="left:14.0px;top:104.0px;color:#202040;font-size:9px;font-weight:bold;font-family:'Liberation Sans', sans-serif;line-height:1;white-space:nowrap;">&middot;&middot;&middot;</div><svg style="left:10.0px;top:96px" width="30.1" height="56" fill="#1b2060"><rect x="12.7" y="32.3" width="1.8" height="1.6"/><rect x="15.1" y="32.3" width="1.8" height="1.6"/><rect x="1.4" y="37" width="1.6" height="1.7"/><rect x="5.0" y="37" width="1.6" height="1.7"/><rect x="8.6" y="37" width="1.6" height="1.7"/><rect x="12.1" y="37" width="1.6" height="1.7"/><rect x="15.7" y="37" width="1.6" height="1.7"/><rect x="19.3" y="37" width="1.6" height="1.7"/><rect x="22.9" y="37" width="1.6" height="1.7"/><rect x="26.5" y="37" width="1.6" height="1.7"/><rect x="8.4" y="45.5" width="1.8" height="1.8"/><rect x="22.7" y="45.5" width="1.8" height="1.8"/></svg><div style="left:40.1px;top:96.0px;width:229.4px;height:56.0px;background:#95a5fb;"></div><div style="left:40.1px;top:113.0px;width:229.4px;height:39.0px;background:repeating-linear-gradient(90deg, rgba(0,0,40,0.06) 0px, rgba(0,0,40,0.06) 1px, transparent 1px, transparent 14.34px);background-position:0.00px 0"></div><div style="left:40.1px;top:113.0px;width:229.4px;height:39.0px;background:repeating-linear-gradient(90deg, rgba(0,0,40,0.13) 0px, rgba(0,0,40,0.13) 1px, transparent 1px, transparent 28.68px);background-position:0.00px 0"></div><div style="left:40.1px;top:113.0px;width:229.4px;height:1.0px;background:rgba(20,20,60,0.55);"></div><div style="left:40.1px;top:96.0px;width:1.0px;height:17.0px;background:rgba(0,0,30,0.45);"></div><div style="left:40.1px;top:113.0px;width:1.0px;height:39.0px;background:rgba(0,0,30,0.25);"></div><svg style="left:40.1px;top:96px" width="229.4" height="56" fill="#1b2060"><rect x="11.3" y="32.3" width="1.8" height="1.6"/><rect x="13.7" y="32.3" width="1.8" height="1.6"/><rect x="40.0" y="32.3" width="1.8" height="1.6"/><rect x="42.4" y="32.3" width="1.8" height="1.6"/><rect x="68.7" y="32.3" width="1.8" height="1.6"/><rect x="71.1" y="32.3" width="1.8" height="1.6"/><rect x="97.3" y="32.3" width="1.8" height="1.6"/><rect x="99.7" y="32.3" width="1.8" height="1.6"/><rect x="126.0" y="32.3" width="1.8" height="1.6"/><rect x="128.4" y="32.3" width="1.8" height="1.6"/><rect x="154.7" y="32.3" width="1.8" height="1.6"/><rect x="157.1" y="32.3" width="1.8" height="1.6"/><rect x="7.2" y="37" width="1.6" height="1.7"/><rect x="10.8" y="37" width="1.6" height="1.7"/><rect x="14.3" y="37" width="2.2" height="1.7"/><rect x="17.9" y="37" width="1.6" height="1.7"/><rect x="21.5" y="37" width="2.2" height="1.7"/><rect x="25.1" y="37" width="2.2" height="1.7"/><rect x="28.7" y="37" width="1.6" height="1.7"/><rect x="32.3" y="37" width="2.2" height="1.7"/><rect x="35.9" y="37" width="2.2" height="1.7"/><rect x="43.0" y="37" width="1.6" height="1.7"/><rect x="46.6" y="37" width="1.6" height="1.7"/><rect x="50.2" y="37" width="1.6" height="1.7"/><rect x="53.8" y="37" width="1.6" height="1.7"/><rect x="60.9" y="37" width="2.2" height="1.7"/><rect x="64.5" y="37" width="1.6" height="1.7"/><rect x="68.1" y="37" width="1.6" height="1.7"/><rect x="71.7" y="37" width="1.6" height="1.7"/><rect x="75.3" y="37" width="2.2" height="1.7"/><rect x="78.9" y="37" width="2.2" height="1.7"/><rect x="82.5" y="37" width="1.6" height="1.7"/><rect x="89.6" y="37" width="1.6" height="1.7"/><rect x="93.2" y="37" width="1.6" height="1.7"/><rect x="96.8" y="37" width="1.6" height="1.7"/><rect x="100.4" y="37" width="1.6" height="1.7"/><rect x="104.0" y="37" width="1.6" height="1.7"/><rect x="107.5" y="37" width="1.6" height="1.7"/><rect x="111.1" y="37" width="1.6" height="1.7"/><rect x="114.7" y="37" width="1.6" height="1.7"/><rect x="118.3" y="37" width="1.6" height="1.7"/><rect x="121.9" y="37" width="1.6" height="1.7"/><rect x="125.5" y="37" width="1.6" height="1.7"/><rect x="129.1" y="37" width="2.2" height="1.7"/><rect x="136.2" y="37" width="1.6" height="1.7"/><rect x="139.8" y="37" width="1.6" height="1.7"/><rect x="143.4" y="37" width="1.6" height="1.7"/><rect x="147.0" y="37" width="2.2" height="1.7"/><rect x="150.6" y="37" width="1.6" height="1.7"/><rect x="154.2" y="37" width="2.2" height="1.7"/><rect x="157.7" y="37" width="2.2" height="1.7"/><rect x="161.3" y="37" width="2.2" height="1.7"/><rect x="164.9" y="37" width="1.6" height="1.7"/><rect x="168.5" y="37" width="1.6" height="1.7"/><rect x="7.0" y="45.5" width="1.8" height="1.8"/><rect x="21.3" y="45.5" width="1.8" height="1.8"/><rect x="35.7" y="45.5" width="1.8" height="1.8"/><rect x="50.0" y="45.5" width="1.8" height="1.8"/><rect x="64.4" y="45.5" width="1.8" height="1.8"/><rect x="78.7" y="45.5" width="1.8" height="1.8"/><rect x="93.0" y="45.5" width="1.8" height="1.8"/><rect x="107.4" y="45.5" width="1.8" height="1.8"/><rect x="121.7" y="45.5" width="1.8" height="1.8"/><rect x="136.1" y="45.5" width="1.8" height="1.8"/><rect x="150.4" y="45.5" width="1.8" height="1.8"/><rect x="164.7" y="45.5" width="1.8" height="1.8"/></svg><div style="left:269.5px;top:96.0px;width:229.4px;height:56.0px;background:#95a5fb;"></div><div style="left:269.5px;top:113.0px;width:229.4px;height:39.0px;background:repeating-linear-gradient(90deg, rgba(0,0,40,0.06) 0px, rgba(0,0,40,0.06) 1px, transparent 1px, transparent 14.34px);background-position:0.00px 0"></div><div style="left:269.5px;top:113.0px;width:229.4px;height:39.0px;background:repeating-linear-gradient(90deg, rgba(0,0,40,0.13) 0px, rgba(0,0,40,0.13) 1px, transparent 1px, transparent 28.68px);background-position:0.00px 0"></div><div style="left:269.5px;top:113.0px;width:229.4px;height:1.0px;background:rgba(20,20,60,0.55);"></div><div style="left:269.5px;top:96.0px;width:1.0px;height:17.0px;background:rgba(0,0,30,0.45);"></div><div style="left:269.5px;top:113.0px;width:1.0px;height:39.0px;background:rgba(0,0,30,0.25);"></div><svg style="left:269.5px;top:96px" width="229.4" height="56" fill="#1b2060"><rect x="11.3" y="32.3" width="1.8" height="1.6"/><rect x="13.7" y="32.3" width="1.8" height="1.6"/><rect x="40.0" y="32.3" width="1.8" height="1.6"/><rect x="42.4" y="32.3" width="1.8" height="1.6"/><rect x="68.7" y="32.3" width="1.8" height="1.6"/><rect x="71.1" y="32.3" width="1.8" height="1.6"/><rect x="97.3" y="32.3" width="1.8" height="1.6"/><rect x="99.7" y="32.3" width="1.8" height="1.6"/><rect x="126.0" y="32.3" width="1.8" height="1.6"/><rect x="128.4" y="32.3" width="1.8" height="1.6"/><rect x="154.7" y="32.3" width="1.8" height="1.6"/><rect x="157.1" y="32.3" width="1.8" height="1.6"/><rect x="183.4" y="32.3" width="1.8" height="1.6"/><rect x="185.8" y="32.3" width="1.8" height="1.6"/><rect x="212.1" y="32.3" width="1.8" height="1.6"/><rect x="214.5" y="32.3" width="1.8" height="1.6"/><rect x="0.0" y="37" width="2.2" height="1.7"/><rect x="3.6" y="37" width="2.2" height="1.7"/><rect x="7.2" y="37" width="2.2" height="1.7"/><rect x="10.8" y="37" width="1.6" height="1.7"/><rect x="17.9" y="37" width="2.2" height="1.7"/><rect x="21.5" y="37" width="2.2" height="1.7"/><rect x="25.1" y="37" width="2.2" height="1.7"/><rect x="28.7" y="37" width="2.2" height="1.7"/><rect x="32.3" y="37" width="1.6" height="1.7"/><rect x="35.9" y="37" width="2.2" height="1.7"/><rect x="39.4" y="37" width="1.6" height="1.7"/><rect x="43.0" y="37" width="1.6" height="1.7"/><rect x="46.6" y="37" width="2.2" height="1.7"/><rect x="50.2" y="37" width="1.6" height="1.7"/><rect x="53.8" y="37" width="1.6" height="1.7"/><rect x="57.4" y="37" width="2.2" height="1.7"/><rect x="64.5" y="37" width="1.6" height="1.7"/><rect x="68.1" y="37" width="2.2" height="1.7"/><rect x="71.7" y="37" width="1.6" height="1.7"/><rect x="75.3" y="37" width="1.6" height="1.7"/><rect x="78.9" y="37" width="1.6" height="1.7"/><rect x="82.5" y="37" width="2.2" height="1.7"/><rect x="86.0" y="37" width="2.2" height="1.7"/><rect x="89.6" y="37" width="1.6" height="1.7"/><rect x="93.2" y="37" width="1.6" height="1.7"/><rect x="96.8" y="37" width="2.2" height="1.7"/><rect x="100.4" y="37" width="2.2" height="1.7"/><rect x="104.0" y="37" width="1.6" height="1.7"/><rect x="107.5" y="37" width="1.6" height="1.7"/><rect x="111.1" y="37" width="2.2" height="1.7"/><rect x="114.7" y="37" width="1.6" height="1.7"/><rect x="118.3" y="37" width="1.6" height="1.7"/><rect x="129.1" y="37" width="2.2" height="1.7"/><rect x="132.6" y="37" width="2.2" height="1.7"/><rect x="136.2" y="37" width="2.2" height="1.7"/><rect x="139.8" y="37" width="1.6" height="1.7"/><rect x="143.4" y="37" width="2.2" height="1.7"/><rect x="150.6" y="37" width="1.6" height="1.7"/><rect x="154.2" y="37" width="1.6" height="1.7"/><rect x="157.7" y="37" width="1.6" height="1.7"/><rect x="161.3" y="37" width="1.6" height="1.7"/><rect x="164.9" y="37" width="2.2" height="1.7"/><rect x="168.5" y="37" width="1.6" height="1.7"/><rect x="172.1" y="37" width="1.6" height="1.7"/><rect x="175.7" y="37" width="1.6" height="1.7"/><rect x="179.2" y="37" width="1.6" height="1.7"/><rect x="182.8" y="37" width="1.6" height="1.7"/><rect x="186.4" y="37" width="2.2" height="1.7"/><rect x="190.0" y="37" width="1.6" height="1.7"/><rect x="197.2" y="37" width="1.6" height="1.7"/><rect x="200.8" y="37" width="1.6" height="1.7"/><rect x="207.9" y="37" width="1.6" height="1.7"/><rect x="215.1" y="37" width="1.6" height="1.7"/><rect x="218.7" y="37" width="2.2" height="1.7"/><rect x="222.3" y="37" width="2.2" height="1.7"/><rect x="225.9" y="37" width="1.6" height="1.7"/><rect x="7.2" y="49.8" width="1.8" height="1.8"/><rect x="10.8" y="49.8" width="1.8" height="1.8"/><rect x="17.9" y="45.3" width="1.8" height="1.8"/><rect x="21.5" y="45.3" width="1.8" height="1.8"/><rect x="28.7" y="49.8" width="1.8" height="1.8"/><rect x="32.3" y="49.8" width="1.8" height="1.8"/><rect x="35.9" y="45.3" width="1.8" height="1.8"/><rect x="39.4" y="49.8" width="1.8" height="1.8"/><rect x="43.0" y="49.8" width="1.8" height="1.8"/><rect x="46.6" y="45.3" width="1.8" height="1.8"/><rect x="50.2" y="49.8" width="1.8" height="1.8"/><rect x="57.4" y="45.3" width="1.8" height="1.8"/><rect x="64.5" y="49.8" width="1.8" height="1.8"/><rect x="71.7" y="45.3" width="1.8" height="1.8"/><rect x="82.5" y="45.3" width="1.8" height="1.8"/><rect x="86.0" y="45.3" width="1.8" height="1.8"/><rect x="96.8" y="45.3" width="1.8" height="1.8"/><rect x="100.4" y="49.8" width="1.8" height="1.8"/><rect x="104.0" y="49.8" width="1.8" height="1.8"/><rect x="107.5" y="45.3" width="1.8" height="1.8"/><rect x="111.1" y="45.3" width="1.8" height="1.8"/><rect x="114.7" y="45.3" width="1.8" height="1.8"/><rect x="118.3" y="45.3" width="1.8" height="1.8"/><rect x="121.9" y="49.8" width="1.8" height="1.8"/><rect x="125.5" y="45.3" width="1.8" height="1.8"/><rect x="129.1" y="45.3" width="1.8" height="1.8"/><rect x="136.2" y="45.3" width="1.8" height="1.8"/><rect x="139.8" y="49.8" width="1.8" height="1.8"/><rect x="147.0" y="45.3" width="1.8" height="1.8"/><rect x="150.6" y="45.3" width="1.8" height="1.8"/><rect x="157.7" y="45.3" width="1.8" height="1.8"/><rect x="161.3" y="45.3" width="1.8" height="1.8"/><rect x="164.9" y="49.8" width="1.8" height="1.8"/><rect x="172.1" y="45.3" width="1.8" height="1.8"/><rect x="175.7" y="45.3" width="1.8" height="1.8"/><rect x="179.2" y="45.3" width="1.8" height="1.8"/><rect x="186.4" y="49.8" width="1.8" height="1.8"/><rect x="193.6" y="45.3" width="1.8" height="1.8"/><rect x="197.2" y="45.3" width="1.8" height="1.8"/><rect x="207.9" y="49.8" width="1.8" height="1.8"/><rect x="211.5" y="45.3" width="1.8" height="1.8"/><rect x="215.1" y="45.3" width="1.8" height="1.8"/><rect x="218.7" y="49.8" width="1.8" height="1.8"/><rect x="222.3" y="45.3" width="1.8" height="1.8"/></svg><div style="left:498.9px;top:96.0px;width:229.4px;height:56.0px;background:#95a5fb;"></div><div style="left:498.9px;top:113.0px;width:229.4px;height:39.0px;background:repeating-linear-gradient(90deg, rgba(0,0,40,0.06) 0px, rgba(0,0,40,0.06) 1px, transparent 1px, transparent 14.34px);background-position:0.00px 0"></div><div style="left:498.9px;top:113.0px;width:229.4px;height:39.0px;background:repeating-linear-gradient(90deg, rgba(0,0,40,0.13) 0px, rgba(0,0,40,0.13) 1px, transparent 1px, transparent 28.68px);background-position:0.00px 0"></div><div style="left:498.9px;top:113.0px;width:229.4px;height:1.0px;background:rgba(20,20,60,0.55);"></div><div style="left:498.9px;top:96.0px;width:1.0px;height:17.0px;background:rgba(0,0,30,0.45);"></div><div style="left:498.9px;top:113.0px;width:1.0px;height:39.0px;background:rgba(0,0,30,0.25);"></div><svg style="left:498.9px;top:96px" width="229.4" height="56" fill="#1b2060"><rect x="11.3" y="32.3" width="1.8" height="1.6"/><rect x="13.7" y="32.3" width="1.8" height="1.6"/><rect x="40.0" y="32.3" width="1.8" height="1.6"/><rect x="42.4" y="32.3" width="1.8" height="1.6"/><rect x="68.7" y="32.3" width="1.8" height="1.6"/><rect x="71.1" y="32.3" width="1.8" height="1.6"/><rect x="97.3" y="32.3" width="1.8" height="1.6"/><rect x="99.7" y="32.3" width="1.8" height="1.6"/><rect x="126.0" y="32.3" width="1.8" height="1.6"/><rect x="128.4" y="32.3" width="1.8" height="1.6"/><rect x="154.7" y="32.3" width="1.8" height="1.6"/><rect x="157.1" y="32.3" width="1.8" height="1.6"/><rect x="183.4" y="32.3" width="1.8" height="1.6"/><rect x="185.8" y="32.3" width="1.8" height="1.6"/><rect x="212.1" y="32.3" width="1.8" height="1.6"/><rect x="214.5" y="32.3" width="1.8" height="1.6"/><rect x="0.0" y="37" width="1.6" height="1.7"/><rect x="3.6" y="37" width="1.6" height="1.7"/><rect x="7.2" y="37" width="1.6" height="1.7"/><rect x="10.8" y="37" width="2.2" height="1.7"/><rect x="17.9" y="37" width="1.6" height="1.7"/><rect x="21.5" y="37" width="2.2" height="1.7"/><rect x="25.1" y="37" width="1.6" height="1.7"/><rect x="28.7" y="37" width="1.6" height="1.7"/><rect x="32.3" y="37" width="1.6" height="1.7"/><rect x="35.9" y="37" width="1.6" height="1.7"/><rect x="39.4" y="37" width="1.6" height="1.7"/><rect x="43.0" y="37" width="1.6" height="1.7"/><rect x="46.6" y="37" width="2.2" height="1.7"/><rect x="53.8" y="37" width="1.6" height="1.7"/><rect x="57.4" y="37" width="2.2" height="1.7"/><rect x="60.9" y="37" width="1.6" height="1.7"/><rect x="64.5" y="37" width="1.6" height="1.7"/><rect x="68.1" y="37" width="1.6" height="1.7"/><rect x="71.7" y="37" width="2.2" height="1.7"/><rect x="75.3" y="37" width="1.6" height="1.7"/><rect x="82.5" y="37" width="1.6" height="1.7"/><rect x="86.0" y="37" width="2.2" height="1.7"/><rect x="89.6" y="37" width="1.6" height="1.7"/><rect x="93.2" y="37" width="1.6" height="1.7"/><rect x="96.8" y="37" width="1.6" height="1.7"/><rect x="100.4" y="37" width="1.6" height="1.7"/><rect x="104.0" y="37" width="1.6" height="1.7"/><rect x="107.5" y="37" width="1.6" height="1.7"/><rect x="111.1" y="37" width="2.2" height="1.7"/><rect x="114.7" y="37" width="1.6" height="1.7"/><rect x="118.3" y="37" width="2.2" height="1.7"/><rect x="121.9" y="37" width="1.6" height="1.7"/><rect x="129.1" y="37" width="1.6" height="1.7"/><rect x="132.6" y="37" width="1.6" height="1.7"/><rect x="136.2" y="37" width="2.2" height="1.7"/><rect x="139.8" y="37" width="2.2" height="1.7"/><rect x="143.4" y="37" width="1.6" height="1.7"/><rect x="147.0" y="37" width="1.6" height="1.7"/><rect x="150.6" y="37" width="1.6" height="1.7"/><rect x="154.2" y="37" width="2.2" height="1.7"/><rect x="157.7" y="37" width="1.6" height="1.7"/><rect x="161.3" y="37" width="1.6" height="1.7"/><rect x="164.9" y="37" width="1.6" height="1.7"/><rect x="168.5" y="37" width="2.2" height="1.7"/><rect x="172.1" y="37" width="1.6" height="1.7"/><rect x="175.7" y="37" width="1.6" height="1.7"/><rect x="179.2" y="37" width="1.6" height="1.7"/><rect x="182.8" y="37" width="1.6" height="1.7"/><rect x="186.4" y="37" width="1.6" height="1.7"/><rect x="190.0" y="37" width="2.2" height="1.7"/><rect x="193.6" y="37" width="1.6" height="1.7"/><rect x="197.2" y="37" width="1.6" height="1.7"/><rect x="200.8" y="37" width="1.6" height="1.7"/><rect x="204.3" y="37" width="1.6" height="1.7"/><rect x="207.9" y="37" width="1.6" height="1.7"/><rect x="211.5" y="37" width="1.6" height="1.7"/><rect x="215.1" y="37" width="1.6" height="1.7"/><rect x="218.7" y="37" width="1.6" height="1.7"/><rect x="225.9" y="37" width="1.6" height="1.7"/><rect x="3.6" y="49.8" width="1.8" height="1.8"/><rect x="7.2" y="45.3" width="1.8" height="1.8"/><rect x="10.8" y="45.3" width="1.8" height="1.8"/><rect x="14.3" y="45.3" width="1.8" height="1.8"/><rect x="17.9" y="45.3" width="1.8" height="1.8"/><rect x="25.1" y="45.3" width="1.8" height="1.8"/><rect x="28.7" y="45.3" width="1.8" height="1.8"/><rect x="32.3" y="49.8" width="1.8" height="1.8"/><rect x="35.9" y="45.3" width="1.8" height="1.8"/><rect x="43.0" y="45.3" width="1.8" height="1.8"/><rect x="46.6" y="49.8" width="1.8" height="1.8"/><rect x="53.8" y="49.8" width="1.8" height="1.8"/><rect x="60.9" y="49.8" width="1.8" height="1.8"/><rect x="64.5" y="45.3" width="1.8" height="1.8"/><rect x="68.1" y="49.8" width="1.8" height="1.8"/><rect x="71.7" y="45.3" width="1.8" height="1.8"/><rect x="75.3" y="49.8" width="1.8" height="1.8"/><rect x="78.9" y="45.3" width="1.8" height="1.8"/><rect x="89.6" y="49.8" width="1.8" height="1.8"/><rect x="93.2" y="45.3" width="1.8" height="1.8"/><rect x="96.8" y="45.3" width="1.8" height="1.8"/><rect x="100.4" y="45.3" width="1.8" height="1.8"/><rect x="104.0" y="45.3" width="1.8" height="1.8"/><rect x="107.5" y="45.3" width="1.8" height="1.8"/><rect x="114.7" y="45.3" width="1.8" height="1.8"/><rect x="118.3" y="45.3" width="1.8" height="1.8"/><rect x="125.5" y="49.8" width="1.8" height="1.8"/><rect x="132.6" y="49.8" width="1.8" height="1.8"/><rect x="150.6" y="49.8" width="1.8" height="1.8"/><rect x="154.2" y="45.3" width="1.8" height="1.8"/><rect x="157.7" y="45.3" width="1.8" height="1.8"/><rect x="172.1" y="45.3" width="1.8" height="1.8"/><rect x="190.0" y="49.8" width="1.8" height="1.8"/><rect x="200.8" y="45.3" width="1.8" height="1.8"/><rect x="211.5" y="45.3" width="1.8" height="1.8"/><rect x="225.9" y="45.3" width="1.8" height="1.8"/></svg><div style="left:728.4px;top:96.0px;width:229.4px;height:56.0px;background:#95a5fb;"></div><div style="left:728.4px;top:113.0px;width:229.4px;height:39.0px;background:repeating-linear-gradient(90deg, rgba(0,0,40,0.06) 0px, rgba(0,0,40,0.06) 1px, transparent 1px, transparent 14.34px);background-position:0.00px 0"></div><div style="left:728.4px;top:113.0px;width:229.4px;height:39.0px;background:repeating-linear-gradient(90deg, rgba(0,0,40,0.13) 0px, rgba(0,0,40,0.13) 1px, transparent 1px, transparent 28.68px);background-position:0.00px 0"></div><div style="left:728.4px;top:113.0px;width:229.4px;height:1.0px;background:rgba(20,20,60,0.55);"></div><div style="left:728.4px;top:96.0px;width:1.0px;height:17.0px;background:rgba(0,0,30,0.45);"></div><div style="left:728.4px;top:113.0px;width:1.0px;height:39.0px;background:rgba(0,0,30,0.25);"></div><svg style="left:728.4px;top:96px" width="229.4" height="56" fill="#1b2060"><rect x="11.3" y="32.3" width="1.8" height="1.6"/><rect x="13.7" y="32.3" width="1.8" height="1.6"/><rect x="40.0" y="32.3" width="1.8" height="1.6"/><rect x="42.4" y="32.3" width="1.8" height="1.6"/><rect x="68.7" y="32.3" width="1.8" height="1.6"/><rect x="71.1" y="32.3" width="1.8" height="1.6"/><rect x="97.3" y="32.3" width="1.8" height="1.6"/><rect x="99.7" y="32.3" width="1.8" height="1.6"/><rect x="126.0" y="32.3" width="1.8" height="1.6"/><rect x="128.4" y="32.3" width="1.8" height="1.6"/><rect x="154.7" y="32.3" width="1.8" height="1.6"/><rect x="157.1" y="32.3" width="1.8" height="1.6"/><rect x="183.4" y="32.3" width="1.8" height="1.6"/><rect x="185.8" y="32.3" width="1.8" height="1.6"/><rect x="212.1" y="32.3" width="1.8" height="1.6"/><rect x="214.5" y="32.3" width="1.8" height="1.6"/><rect x="0.0" y="37" width="2.2" height="1.7"/><rect x="3.6" y="37" width="2.2" height="1.7"/><rect x="10.8" y="37" width="2.2" height="1.7"/><rect x="14.3" y="37" width="1.6" height="1.7"/><rect x="17.9" y="37" width="1.6" height="1.7"/><rect x="21.5" y="37" width="1.6" height="1.7"/><rect x="25.1" y="37" width="1.6" height="1.7"/><rect x="28.7" y="37" width="1.6" height="1.7"/><rect x="32.3" y="37" width="2.2" height="1.7"/><rect x="35.9" y="37" width="2.2" height="1.7"/><rect x="39.4" y="37" width="1.6" height="1.7"/><rect x="43.0" y="37" width="1.6" height="1.7"/><rect x="46.6" y="37" width="1.6" height="1.7"/><rect x="50.2" y="37" width="2.2" height="1.7"/><rect x="53.8" y="37" width="1.6" height="1.7"/><rect x="57.4" y="37" width="1.6" height="1.7"/><rect x="60.9" y="37" width="1.6" height="1.7"/><rect x="68.1" y="37" width="1.6" height="1.7"/><rect x="71.7" y="37" width="1.6" height="1.7"/><rect x="75.3" y="37" width="2.2" height="1.7"/><rect x="78.9" y="37" width="1.6" height="1.7"/><rect x="86.0" y="37" width="1.6" height="1.7"/><rect x="89.6" y="37" width="1.6" height="1.7"/><rect x="93.2" y="37" width="1.6" height="1.7"/><rect x="96.8" y="37" width="1.6" height="1.7"/><rect x="100.4" y="37" width="2.2" height="1.7"/><rect x="104.0" y="37" width="2.2" height="1.7"/><rect x="107.6" y="37" width="1.6" height="1.7"/><rect x="111.1" y="37" width="1.6" height="1.7"/><rect x="114.7" y="37" width="1.6" height="1.7"/><rect x="118.3" y="37" width="1.6" height="1.7"/><rect x="121.9" y="37" width="2.2" height="1.7"/><rect x="125.5" y="37" width="1.6" height="1.7"/><rect x="132.6" y="37" width="2.2" height="1.7"/><rect x="136.2" y="37" width="1.6" height="1.7"/><rect x="139.8" y="37" width="1.6" height="1.7"/><rect x="143.4" y="37" width="2.2" height="1.7"/><rect x="147.0" y="37" width="1.6" height="1.7"/><rect x="150.6" y="37" width="1.6" height="1.7"/><rect x="154.2" y="37" width="1.6" height="1.7"/><rect x="157.7" y="37" width="1.6" height="1.7"/><rect x="168.5" y="37" width="1.6" height="1.7"/><rect x="172.1" y="37" width="1.6" height="1.7"/><rect x="175.7" y="37" width="1.6" height="1.7"/><rect x="179.3" y="37" width="1.6" height="1.7"/><rect x="182.8" y="37" width="1.6" height="1.7"/><rect x="186.4" y="37" width="1.6" height="1.7"/><rect x="190.0" y="37" width="2.2" height="1.7"/><rect x="193.6" y="37" width="1.6" height="1.7"/><rect x="197.2" y="37" width="2.2" height="1.7"/><rect x="200.8" y="37" width="1.6" height="1.7"/><rect x="204.3" y="37" width="1.6" height="1.7"/><rect x="207.9" y="37" width="1.6" height="1.7"/><rect x="211.5" y="37" width="2.2" height="1.7"/><rect x="215.1" y="37" width="1.6" height="1.7"/><rect x="218.7" y="37" width="1.6" height="1.7"/><rect x="222.3" y="37" width="2.2" height="1.7"/><rect x="225.9" y="37" width="1.6" height="1.7"/><rect x="0.0" y="45.3" width="1.8" height="1.8"/><rect x="7.2" y="45.3" width="1.8" height="1.8"/><rect x="10.8" y="45.3" width="1.8" height="1.8"/><rect x="17.9" y="45.3" width="1.8" height="1.8"/><rect x="32.3" y="45.3" width="1.8" height="1.8"/><rect x="35.9" y="45.3" width="1.8" height="1.8"/><rect x="43.0" y="49.8" width="1.8" height="1.8"/><rect x="46.6" y="45.3" width="1.8" height="1.8"/><rect x="53.8" y="49.8" width="1.8" height="1.8"/><rect x="57.4" y="45.3" width="1.8" height="1.8"/><rect x="60.9" y="45.3" width="1.8" height="1.8"/><rect x="64.5" y="45.3" width="1.8" height="1.8"/><rect x="68.1" y="49.8" width="1.8" height="1.8"/><rect x="71.7" y="45.3" width="1.8" height="1.8"/><rect x="82.5" y="45.3" width="1.8" height="1.8"/><rect x="86.0" y="49.8" width="1.8" height="1.8"/><rect x="96.8" y="45.3" width="1.8" height="1.8"/><rect x="100.4" y="45.3" width="1.8" height="1.8"/><rect x="104.0" y="49.8" width="1.8" height="1.8"/><rect x="111.1" y="45.3" width="1.8" height="1.8"/><rect x="118.3" y="49.8" width="1.8" height="1.8"/><rect x="121.9" y="45.3" width="1.8" height="1.8"/><rect x="132.6" y="45.3" width="1.8" height="1.8"/><rect x="136.2" y="49.8" width="1.8" height="1.8"/><rect x="139.8" y="49.8" width="1.8" height="1.8"/><rect x="143.4" y="49.8" width="1.8" height="1.8"/><rect x="147.0" y="49.8" width="1.8" height="1.8"/><rect x="150.6" y="45.3" width="1.8" height="1.8"/><rect x="157.7" y="45.3" width="1.8" height="1.8"/><rect x="161.3" y="49.8" width="1.8" height="1.8"/><rect x="164.9" y="45.3" width="1.8" height="1.8"/><rect x="168.5" y="45.3" width="1.8" height="1.8"/><rect x="172.1" y="49.8" width="1.8" height="1.8"/><rect x="182.8" y="45.3" width="1.8" height="1.8"/><rect x="197.2" y="45.3" width="1.8" height="1.8"/><rect x="200.8" y="45.3" width="1.8" height="1.8"/><rect x="207.9" y="49.8" width="1.8" height="1.8"/><rect x="215.1" y="45.3" width="1.8" height="1.8"/><rect x="218.7" y="45.3" width="1.8" height="1.8"/><rect x="222.3" y="45.3" width="1.8" height="1.8"/><rect x="225.9" y="49.8" width="1.8" height="1.8"/></svg><div style="left:1187.3px;top:96.0px;width:121.7px;height:56.0px;background:#95a5fb;"></div><div style="left:1187.3px;top:113.0px;width:121.7px;height:39.0px;background:repeating-linear-gradient(90deg, rgba(0,0,40,0.06) 0px, rgba(0,0,40,0.06) 1px, transparent 1px, transparent 14.34px);background-position:14.34px 0"></div><div style="left:1187.3px;top:113.0px;width:121.7px;height:39.0px;background:repeating-linear-gradient(90deg, rgba(0,0,40,0.13) 0px, rgba(0,0,40,0.13) 1px, transparent 1px, transparent 28.68px);background-position:28.68px 0"></div><div style="left:1187.3px;top:113.0px;width:121.7px;height:1.0px;background:rgba(20,20,60,0.55);"></div><div style="left:1187.3px;top:96.0px;width:1.0px;height:17.0px;background:rgba(0,0,30,0.45);"></div><div style="left:1187.3px;top:113.0px;width:1.0px;height:39.0px;background:rgba(0,0,30,0.25);"></div><svg style="left:1187.3px;top:96px" width="121.7" height="56" fill="#1b2060"><rect x="11.3" y="32.3" width="1.8" height="1.6"/><rect x="13.7" y="32.3" width="1.8" height="1.6"/><rect x="40.0" y="32.3" width="1.8" height="1.6"/><rect x="42.4" y="32.3" width="1.8" height="1.6"/><rect x="68.7" y="32.3" width="1.8" height="1.6"/><rect x="71.1" y="32.3" width="1.8" height="1.6"/><rect x="97.3" y="32.3" width="1.8" height="1.6"/><rect x="99.7" y="32.3" width="1.8" height="1.6"/><rect x="32.3" y="37" width="1.6" height="1.7"/><rect x="35.8" y="37" width="1.6" height="1.7"/><rect x="39.4" y="37" width="1.6" height="1.7"/><rect x="46.6" y="37" width="1.6" height="1.7"/><rect x="50.2" y="37" width="2.2" height="1.7"/><rect x="53.8" y="37" width="2.2" height="1.7"/><rect x="57.4" y="37" width="2.2" height="1.7"/><rect x="60.9" y="37" width="1.6" height="1.7"/><rect x="64.5" y="37" width="1.6" height="1.7"/><rect x="68.1" y="37" width="1.6" height="1.7"/><rect x="71.7" y="37" width="1.6" height="1.7"/><rect x="75.3" y="37" width="1.6" height="1.7"/><rect x="78.9" y="37" width="1.6" height="1.7"/><rect x="82.5" y="37" width="1.6" height="1.7"/><rect x="86.0" y="37" width="1.6" height="1.7"/><rect x="89.6" y="37" width="1.6" height="1.7"/><rect x="93.2" y="37" width="1.6" height="1.7"/><rect x="96.8" y="37" width="2.2" height="1.7"/><rect x="104.0" y="37" width="2.2" height="1.7"/><rect x="111.1" y="37" width="1.6" height="1.7"/><rect x="114.7" y="37" width="1.6" height="1.7"/><rect x="118.3" y="37" width="2.2" height="1.7"/><rect x="32.3" y="45.3" width="1.8" height="1.8"/><rect x="35.8" y="49.8" width="1.8" height="1.8"/><rect x="46.6" y="49.8" width="1.8" height="1.8"/><rect x="50.2" y="45.3" width="1.8" height="1.8"/><rect x="53.8" y="45.3" width="1.8" height="1.8"/><rect x="60.9" y="49.8" width="1.8" height="1.8"/><rect x="68.1" y="49.8" width="1.8" height="1.8"/><rect x="71.7" y="45.3" width="1.8" height="1.8"/><rect x="75.3" y="49.8" width="1.8" height="1.8"/><rect x="78.9" y="45.3" width="1.8" height="1.8"/><rect x="86.0" y="49.8" width="1.8" height="1.8"/><rect x="89.6" y="45.3" width="1.8" height="1.8"/><rect x="93.2" y="49.8" width="1.8" height="1.8"/><rect x="100.4" y="45.3" width="1.8" height="1.8"/><rect x="104.0" y="49.8" width="1.8" height="1.8"/><rect x="111.1" y="45.3" width="1.8" height="1.8"/><rect x="114.7" y="49.8" width="1.8" height="1.8"/></svg><svg style="left:1187.3px;top:96px" width="122" height="56" fill="#1b2060"><rect x="31" y="30" width="14" height="1.8"/><rect x="86" y="30" width="35" height="1.8"/><rect x="12" y="32" width="4" height="1.8"/><rect x="57" y="23" width="1.8" height="2"/><rect x="26" y="41" width="1.8" height="2"/></svg><div style="left:40.1px;top:154.0px;width:114.7px;height:57.0px;background:#95a5fb;"></div><div style="left:40.1px;top:171.0px;width:114.7px;height:40.0px;background:repeating-linear-gradient(90deg, rgba(0,0,40,0.06) 0px, rgba(0,0,40,0.06) 1px, transparent 1px, transparent 14.34px);background-position:0.00px 0"></div><div style="left:40.1px;top:171.0px;width:114.7px;height:40.0px;background:repeating-linear-gradient(90deg, rgba(0,0,40,0.13) 0px, rgba(0,0,40,0.13) 1px, transparent 1px, transparent 28.68px);background-position:0.00px 0"></div><div style="left:40.1px;top:171.0px;width:114.7px;height:1.0px;background:rgba(20,20,60,0.55);"></div><div style="left:40.1px;top:154.0px;width:1.0px;height:17.0px;background:rgba(0,0,30,0.45);"></div><div style="left:40.1px;top:171.0px;width:1.0px;height:40.0px;background:rgba(0,0,30,0.25);"></div><svg style="left:40.1px;top:154px" width="114.7" height="57" fill="#1a1b2a"><polygon points="0.0,26.2 0.7,25.5 1.4,23.0 2.1,22.6 2.8,22.8 3.5,23.9 4.2,26.1 4.9,22.7 5.6,22.6 6.3,22.0 7.0,22.7 7.7,25.5 8.4,25.8 9.1,25.7 9.8,26.0 10.5,25.7 11.2,26.4 11.9,24.2 12.6,23.1 13.3,22.7 14.0,23.8 14.7,24.7 15.4,24.0 16.1,22.6 16.8,22.0 17.5,22.8 18.2,24.1 18.9,24.5 19.6,24.1 20.3,22.8 21.0,23.7 21.7,24.8 22.4,24.8 23.1,23.0 23.8,22.3 24.5,22.3 25.2,23.9 25.9,26.7 26.6,26.2 27.3,26.2 28.0,26.0 28.7,26.0 29.4,25.4 30.1,22.5 30.8,22.3 31.5,22.5 32.2,23.4 32.9,26.3 33.6,23.6 34.3,23.0 35.0,23.0 35.7,24.1 36.4,25.8 37.1,26.3 37.8,25.6 38.5,25.9 39.2,26.0 39.9,26.4 40.6,23.4 41.3,22.5 42.0,23.1 42.7,22.8 43.4,24.4 44.1,23.3 44.8,22.0 45.5,22.3 46.2,22.3 46.9,24.6 47.6,24.2 48.3,22.7 49.0,22.8 49.7,23.2 50.4,24.7 51.1,25.1 51.8,23.8 52.5,22.3 53.2,23.3 53.9,23.9 54.6,26.5 55.3,26.2 56.0,26.2 56.7,26.1 57.4,26.3 58.1,24.6 58.8,23.4 59.5,22.8 60.2,22.6 60.9,22.7 61.6,26.0 62.3,23.3 63.0,22.9 63.7,22.8 64.4,23.2 65.1,25.6 65.8,25.9 66.5,25.7 67.2,25.6 67.9,25.7 68.6,26.6 69.3,23.6 70.0,23.4 70.7,22.7 71.4,23.8 72.1,25.2 72.8,23.7 73.5,23.4 74.2,22.0 74.9,23.0 75.6,24.0 76.3,24.7 77.0,22.6 77.7,22.7 78.4,22.7 79.1,24.4 79.8,24.2 80.5,23.0 81.2,22.8 81.9,23.4 82.6,23.8 83.3,26.3 84.0,25.9 84.7,26.1 85.4,26.0 86.1,26.4 86.8,24.9 87.5,22.9 88.2,23.1 88.9,22.2 89.6,23.4 90.3,26.0 91.0,24.1 91.7,23.5 92.4,22.9 93.1,23.3 93.8,26.0 94.5,26.2 95.2,25.5 95.9,25.9 96.6,26.0 97.3,26.3 98.0,23.6 98.7,23.1 99.4,23.2 100.1,22.8 100.8,24.5 101.5,24.1 102.2,22.5 102.9,22.4 103.6,23.0 104.3,23.8 105.0,24.9 105.7,23.7 106.4,23.0 107.1,23.7 107.8,24.4 108.5,24.6 109.2,24.0 109.9,22.9 110.6,23.2 111.3,24.3 112.0,26.5 112.7,25.8 113.4,25.8 114.1,26.2 114.1,29.1 113.4,29.4 112.7,29.2 112.0,28.6 111.3,30.8 110.6,31.9 109.9,31.7 109.2,31.3 108.5,30.1 107.8,30.8 107.1,31.8 106.4,32.5 105.7,31.2 105.0,30.4 104.3,30.9 103.6,31.6 102.9,33.2 102.2,32.5 101.5,31.3 100.8,30.9 100.1,32.2 99.4,31.8 98.7,31.7 98.0,31.4 97.3,28.8 96.6,29.1 95.9,29.3 95.2,29.4 94.5,28.9 93.8,29.0 93.1,31.6 92.4,32.7 91.7,31.8 91.0,31.4 90.3,29.2 89.6,31.6 88.9,32.7 88.2,32.3 87.5,32.8 86.8,30.3 86.1,28.9 85.4,29.1 84.7,29.0 84.0,29.2 83.3,28.7 82.6,31.6 81.9,31.3 81.2,32.4 80.5,32.5 79.8,30.5 79.1,30.4 78.4,33.0 77.7,32.8 77.0,32.6 76.3,30.2 75.6,31.5 74.9,32.0 74.2,32.6 73.5,31.9 72.8,31.9 72.1,29.7 71.4,31.0 70.7,32.6 70.0,31.5 69.3,31.0 68.6,28.7 67.9,29.6 67.2,29.7 66.5,29.5 65.8,29.3 65.1,29.5 64.4,31.8 63.7,32.6 63.0,32.1 62.3,31.8 61.6,29.2 60.9,32.6 60.2,32.5 59.5,31.8 58.8,31.6 58.1,30.6 57.4,29.0 56.7,29.0 56.0,29.0 55.3,28.9 54.6,28.7 53.9,31.2 53.2,32.1 52.5,33.3 51.8,30.9 51.1,29.9 50.4,30.3 49.7,32.3 49.0,31.8 48.3,32.1 47.6,31.3 46.9,30.9 46.2,33.3 45.5,33.2 44.8,33.7 44.1,31.8 43.4,30.8 42.7,32.5 42.0,31.7 41.3,33.1 40.6,31.6 39.9,28.9 39.2,29.1 38.5,29.2 37.8,29.5 37.1,28.8 36.4,29.1 35.7,31.0 35.0,31.6 34.3,32.7 33.6,31.2 32.9,28.9 32.2,31.6 31.5,32.5 30.8,32.2 30.1,32.6 29.4,29.7 28.7,29.2 28.0,29.1 27.3,28.9 26.6,28.9 25.9,28.6 25.2,31.1 24.5,32.8 23.8,33.2 23.1,31.7 22.4,30.1 21.7,30.5 21.0,31.1 20.3,32.2 19.6,31.3 18.9,30.3 18.2,30.7 17.5,32.1 16.8,32.6 16.1,32.5 15.4,31.4 14.7,30.1 14.0,31.1 13.3,32.8 12.6,31.5 11.9,31.0 11.2,28.9 10.5,29.4 9.8,29.0 9.1,29.2 8.4,29.6 7.7,29.8 7.0,32.5 6.3,33.0 5.6,32.2 4.9,32.5 4.2,28.9 3.5,31.7 2.8,32.1 2.1,32.1 1.4,32.4 0.7,29.5 0.0,28.9"/><rect x="0" y="26.8" width="114.7" height="1.6"/><polygon points="0.0,45.7 0.7,44.9 1.4,43.1 2.1,42.3 2.8,42.6 3.5,43.8 4.2,45.7 4.9,42.6 5.6,42.1 6.3,41.6 7.0,42.8 7.7,44.4 8.4,45.5 9.1,45.1 9.8,45.1 10.5,45.6 11.2,46.0 11.9,43.6 12.6,43.1 13.3,41.9 14.0,42.3 14.7,44.5 15.4,43.6 16.1,42.5 16.8,41.9 17.5,42.5 18.2,43.3 18.9,44.0 19.6,43.8 20.3,43.0 21.0,42.6 21.7,44.5 22.4,44.4 23.1,43.1 23.8,41.9 24.5,42.0 25.2,43.9 25.9,46.2 26.6,45.9 27.3,45.7 28.0,45.8 28.7,46.0 29.4,44.6 30.1,43.4 30.8,42.3 31.5,42.2 32.2,42.6 32.9,46.0 33.6,42.5 34.3,41.8 35.0,42.0 35.7,42.8 36.4,45.3 37.1,45.9 37.8,45.7 38.5,45.8 39.2,45.5 39.9,46.0 40.6,43.7 41.3,42.1 42.0,41.9 42.7,43.3 43.4,44.5 44.1,42.8 44.8,41.6 45.5,42.3 46.2,42.6 46.9,43.4 47.6,44.1 48.3,42.5 49.0,42.1 49.7,43.1 50.4,43.6 51.1,44.2 51.8,43.5 52.5,42.2 53.2,42.6 53.9,43.6 54.6,45.9 55.3,46.0 56.0,45.7 56.7,45.7 57.4,46.0 58.1,44.6 58.8,42.3 59.5,41.1 60.2,41.7 60.9,42.5 61.6,45.5 62.3,43.1 63.0,41.8 63.7,41.5 64.4,43.3 65.1,45.3 65.8,45.8 66.5,45.2 67.2,45.2 67.9,45.4 68.6,46.1 69.3,43.8 70.0,42.2 70.7,42.7 71.4,43.6 72.1,44.9 72.8,43.2 73.5,42.9 74.2,42.8 74.9,42.2 75.6,44.2 76.3,44.1 77.0,42.0 77.7,42.4 78.4,42.8 79.1,43.8 79.8,43.6 80.5,42.9 81.2,42.7 81.9,43.0 82.6,43.4 83.3,45.9 84.0,45.6 84.7,45.7 85.4,45.7 86.1,45.8 86.8,45.0 87.5,43.4 88.2,42.2 88.9,42.0 89.6,42.5 90.3,45.3 91.0,43.0 91.7,43.1 92.4,42.7 93.1,43.8 93.8,45.3 94.5,45.3 95.2,45.6 95.9,45.3 96.6,45.3 97.3,46.2 98.0,43.0 98.7,42.3 99.4,42.2 100.1,43.5 100.8,44.5 101.5,43.3 102.2,42.0 102.9,41.5 103.6,42.2 104.3,44.0 105.0,44.4 105.7,43.5 106.4,43.3 107.1,43.3 107.8,44.5 108.5,44.5 109.2,43.6 109.9,42.3 110.6,42.5 111.3,43.7 112.0,45.9 112.7,45.5 113.4,45.5 114.1,45.7 114.1,48.6 113.4,48.7 112.7,49.1 112.0,48.3 111.3,50.4 110.6,52.0 109.9,52.0 109.2,50.2 108.5,50.1 107.8,50.0 107.1,50.9 106.4,51.3 105.7,50.5 105.0,49.6 104.3,50.0 103.6,52.7 102.9,53.3 102.2,52.9 101.5,50.6 100.8,49.7 100.1,51.0 99.4,51.5 98.7,51.5 98.0,51.3 97.3,48.2 96.6,49.1 95.9,49.3 95.2,48.8 94.5,49.1 93.8,49.1 93.1,50.6 92.4,51.5 91.7,51.7 91.0,50.8 90.3,49.0 89.6,51.3 88.9,52.0 88.2,51.6 87.5,50.5 86.8,49.2 86.1,48.5 85.4,48.7 84.7,48.6 84.0,49.0 83.3,48.3 82.6,50.5 81.9,51.6 81.2,52.0 80.5,50.9 79.8,50.3 79.1,50.2 78.4,51.2 77.7,52.4 77.0,52.4 76.3,50.1 75.6,50.0 74.9,52.4 74.2,51.5 73.5,51.8 72.8,50.7 72.1,49.4 71.4,50.3 70.7,51.7 70.0,52.2 69.3,50.3 68.6,48.3 67.9,48.9 67.2,48.9 66.5,49.4 65.8,48.5 65.1,49.1 64.4,51.1 63.7,53.2 63.0,53.1 62.3,51.2 61.6,48.7 60.9,51.3 60.2,51.9 59.5,53.8 58.8,52.4 58.1,50.0 57.4,48.3 56.7,48.9 56.0,48.8 55.3,48.3 54.6,48.4 53.9,50.5 53.2,51.8 52.5,51.8 51.8,50.5 51.1,50.5 50.4,51.0 49.7,51.6 49.0,52.1 48.3,52.4 47.6,50.3 46.9,50.7 46.2,51.6 45.5,52.0 44.8,53.2 44.1,51.0 43.4,50.1 42.7,50.7 42.0,51.9 41.3,52.7 40.6,50.6 39.9,48.5 39.2,48.7 38.5,48.5 37.8,48.5 37.1,48.4 36.4,49.0 35.7,51.3 35.0,52.5 34.3,53.0 33.6,51.8 32.9,48.3 32.2,51.9 31.5,52.2 30.8,51.9 30.1,50.5 29.4,49.9 28.7,48.3 28.0,48.4 27.3,48.4 26.6,48.3 25.9,48.2 25.2,50.1 24.5,52.0 23.8,52.4 23.1,51.6 22.4,49.6 21.7,50.1 21.0,52.2 20.3,51.0 19.6,50.9 18.9,50.2 18.2,50.9 17.5,51.2 16.8,52.3 16.1,51.8 15.4,50.4 14.7,49.6 14.0,51.3 13.3,52.9 12.6,50.8 11.9,50.6 11.2,48.5 10.5,48.7 9.8,49.1 9.1,49.4 8.4,48.9 7.7,50.2 7.0,51.5 6.3,52.3 5.6,52.3 4.9,51.7 4.2,48.5 3.5,50.8 2.8,51.5 2.1,51.4 1.4,51.0 0.7,49.3 0.0,48.7"/><rect x="0" y="46.400000000000006" width="114.7" height="1.6"/></svg><div style="left:154.8px;top:154.0px;width:114.7px;height:57.0px;background:#95a5fb;"></div><div style="left:154.8px;top:171.0px;width:114.7px;height:40.0px;background:repeating-linear-gradient(90deg, rgba(0,0,40,0.06) 0px, rgba(0,0,40,0.06) 1px, transparent 1px, transparent 14.34px);background-position:0.00px 0"></div><div style="left:154.8px;top:171.0px;width:114.7px;height:40.0px;background:repeating-linear-gradient(90deg, rgba(0,0,40,0.13) 0px, rgba(0,0,40,0.13) 1px, transparent 1px, transparent 28.68px);background-position:0.00px 0"></div><div style="left:154.8px;top:171.0px;width:114.7px;height:1.0px;background:rgba(20,20,60,0.55);"></div><div style="left:154.8px;top:154.0px;width:1.0px;height:17.0px;background:rgba(0,0,30,0.45);"></div><div style="left:154.8px;top:171.0px;width:1.0px;height:40.0px;background:rgba(0,0,30,0.25);"></div><svg style="left:154.8px;top:154px" width="114.7" height="57" fill="#1a1b2a"><polygon points="0.0,26.3 0.7,25.2 1.4,23.4 2.1,23.3 2.8,22.6 3.5,24.1 4.2,26.5 4.9,22.9 5.6,21.6 6.3,22.0 7.0,23.5 7.7,25.2 8.4,26.2 9.1,26.1 9.8,25.8 10.5,25.9 11.2,26.4 11.9,24.0 12.6,22.3 13.3,22.3 14.0,23.5 14.7,24.8 15.4,23.7 16.1,22.3 16.8,21.8 17.5,23.7 18.2,23.8 18.9,24.3 19.6,24.2 20.3,23.0 21.0,24.1 21.7,24.1 22.4,24.8 23.1,23.6 23.8,22.0 24.5,22.6 25.2,24.1 25.9,26.6 26.6,26.3 27.3,26.1 28.0,25.8 28.7,26.3 29.4,25.5 30.1,22.6 30.8,23.1 31.5,23.0 32.2,22.9 32.9,26.4 33.6,24.1 34.3,23.3 35.0,23.0 35.7,22.9 36.4,25.5 37.1,26.3 37.8,25.7 38.5,26.0 39.2,25.9 39.9,26.6 40.6,23.2 41.3,22.8 42.0,23.3 42.7,23.4 43.4,24.8 44.1,23.6 44.8,23.0 45.5,22.9 46.2,22.5 46.9,23.9 47.6,24.1 48.3,24.0 49.0,23.1 49.7,23.8 50.4,24.3 51.1,24.8 51.8,22.8 52.5,22.7 53.2,23.7 53.9,24.7 54.6,26.4 55.3,26.4 56.0,26.1 56.7,26.2 57.4,26.5 58.1,24.8 58.8,22.4 59.5,21.5 60.2,22.4 60.9,22.4 61.6,25.9 62.3,22.8 63.0,22.3 63.7,22.4 64.4,23.8 65.1,25.3 65.8,25.9 66.5,25.7 67.2,25.8 67.9,26.2 68.6,26.6 69.3,24.0 70.0,22.9 70.7,22.8 71.4,23.8 72.1,25.1 72.8,24.4 73.5,22.4 74.2,22.8 74.9,23.4 75.6,24.8 76.3,23.9 77.0,22.5 77.7,22.6 78.4,23.6 79.1,23.8 79.8,24.2 80.5,23.4 81.2,22.7 81.9,23.3 82.6,23.8 83.3,26.5 84.0,25.9 84.7,26.2 85.4,25.9 86.1,26.2 86.8,25.2 87.5,23.9 88.2,22.7 88.9,22.2 89.6,24.0 90.3,25.7 91.0,23.5 91.7,22.6 92.4,22.8 93.1,23.7 93.8,26.2 94.5,25.8 95.2,25.9 95.9,25.6 96.6,25.8 97.3,26.5 98.0,23.2 98.7,22.2 99.4,23.3 100.1,23.0 100.8,24.9 101.5,23.2 102.2,21.9 102.9,22.1 103.6,22.5 104.3,24.2 105.0,24.8 105.7,22.8 106.4,23.2 107.1,23.7 107.8,24.2 108.5,25.1 109.2,23.4 109.9,23.2 110.6,23.0 111.3,24.0 112.0,26.5 112.7,26.2 113.4,25.9 114.1,25.8 114.1,29.4 113.4,29.3 112.7,28.8 112.0,28.8 111.3,30.8 110.6,31.6 109.9,31.4 109.2,31.9 108.5,30.0 107.8,30.8 107.1,31.7 106.4,32.3 105.7,32.8 105.0,30.6 104.3,31.1 103.6,33.0 102.9,32.5 102.2,33.1 101.5,32.2 100.8,30.3 100.1,32.5 99.4,31.8 98.7,33.2 98.0,31.4 97.3,28.8 96.6,29.4 95.9,29.6 95.2,29.2 94.5,29.2 93.8,29.0 93.1,31.1 92.4,32.0 91.7,33.1 91.0,31.8 90.3,29.4 89.6,30.7 88.9,32.5 88.2,31.8 87.5,30.9 86.8,30.1 86.1,29.0 85.4,29.1 84.7,28.8 84.0,29.2 83.3,28.7 82.6,31.3 81.9,31.7 81.2,32.1 80.5,31.3 79.8,31.3 79.1,31.6 78.4,31.5 77.7,32.2 77.0,32.4 76.3,31.6 75.6,30.3 74.9,31.9 74.2,32.7 73.5,32.9 72.8,30.5 72.1,30.2 71.4,30.8 70.7,32.7 70.0,32.2 69.3,30.8 68.6,28.6 67.9,29.1 67.2,29.5 66.5,29.5 65.8,29.2 65.1,30.1 64.4,31.4 63.7,32.8 63.0,32.6 62.3,32.4 61.6,29.4 60.9,33.1 60.2,32.9 59.5,34.1 58.8,32.9 58.1,30.7 57.4,28.7 56.7,29.1 56.0,29.1 55.3,28.8 54.6,28.9 53.9,30.8 53.2,30.9 52.5,32.5 51.8,32.5 51.1,30.6 50.4,30.5 49.7,31.2 49.0,31.5 48.3,30.9 47.6,30.8 46.9,31.0 46.2,33.0 45.5,31.8 44.8,32.3 44.1,31.3 43.4,30.6 42.7,31.9 42.0,32.3 41.3,31.8 40.6,32.0 39.9,28.7 39.2,29.4 38.5,29.0 37.8,29.6 37.1,28.8 36.4,29.9 35.7,32.2 35.0,32.0 34.3,31.9 33.6,31.1 32.9,28.7 32.2,32.0 31.5,31.8 30.8,32.5 30.1,32.7 29.4,29.6 28.7,29.0 28.0,29.5 27.3,28.9 26.6,28.9 25.9,28.6 25.2,31.2 24.5,32.4 23.8,32.6 23.1,31.1 22.4,30.1 21.7,31.3 21.0,30.8 20.3,31.8 19.6,31.0 18.9,30.8 18.2,31.3 17.5,31.1 16.8,33.7 16.1,32.6 15.4,31.3 14.7,30.0 14.0,31.3 13.3,33.0 12.6,33.4 11.9,30.9 11.2,28.9 10.5,29.3 9.8,29.5 9.1,29.1 8.4,28.9 7.7,29.7 7.0,31.1 6.3,33.2 5.6,34.2 4.9,31.6 4.2,28.8 3.5,30.9 2.8,32.8 2.1,31.8 1.4,31.7 0.7,29.9 0.0,28.9"/><rect x="0" y="26.8" width="114.7" height="1.6"/><polygon points="0.0,45.7 0.7,44.8 1.4,43.2 2.1,42.9 2.8,42.6 3.5,42.9 4.2,45.9 4.9,43.2 5.6,41.3 6.3,41.4 7.0,42.2 7.7,44.7 8.4,45.4 9.1,45.6 9.8,45.4 10.5,45.6 11.2,45.8 11.9,44.1 12.6,42.0 13.3,42.1 14.0,42.9 14.7,43.9 15.4,43.4 16.1,43.0 16.8,42.7 17.5,42.1 18.2,43.7 18.9,44.4 19.6,43.0 20.3,43.4 21.0,43.4 21.7,44.2 22.4,44.0 23.1,41.9 23.8,41.4 24.5,42.9 25.2,43.6 25.9,46.2 26.6,45.5 27.3,45.5 28.0,45.7 28.7,45.8 29.4,44.9 30.1,42.9 30.8,42.7 31.5,42.7 32.2,43.4 32.9,45.8 33.6,43.8 34.3,41.8 35.0,42.0 35.7,43.7 36.4,45.2 37.1,45.7 37.8,45.5 38.5,45.5 39.2,45.6 39.9,46.0 40.6,43.5 41.3,42.9 42.0,42.1 42.7,42.5 43.4,43.8 44.1,43.7 44.8,41.4 45.5,41.1 46.2,42.1 46.9,44.0 47.6,44.2 48.3,43.6 49.0,42.1 49.7,42.6 50.4,44.0 51.1,44.4 51.8,43.3 52.5,43.3 53.2,42.6 53.9,43.8 54.6,46.0 55.3,45.8 56.0,45.6 56.7,46.0 57.4,46.0 58.1,44.8 58.8,42.3 59.5,41.1 60.2,41.1 60.9,42.4 61.6,45.3 62.3,42.4 63.0,42.2 63.7,42.2 64.4,43.2 65.1,45.4 65.8,45.5 66.5,45.5 67.2,45.4 67.9,45.6 68.6,46.1 69.3,43.1 70.0,43.1 70.7,42.7 71.4,43.3 72.1,44.5 72.8,43.1 73.5,43.0 74.2,43.1 74.9,42.2 75.6,44.3 76.3,43.9 77.0,43.3 77.7,42.9 78.4,42.2 79.1,43.9 79.8,43.6 80.5,42.4 81.2,42.1 81.9,43.2 82.6,43.3 83.3,46.0 84.0,45.6 84.7,45.5 85.4,45.9 86.1,46.0 86.8,44.5 87.5,42.3 88.2,42.1 88.9,41.5 89.6,42.8 90.3,45.1 91.0,42.6 91.7,42.4 92.4,43.1 93.1,43.8 93.8,45.7 94.5,45.5 95.2,45.6 95.9,45.1 96.6,45.3 97.3,46.2 98.0,43.2 98.7,43.1 99.4,41.7 100.1,42.8 100.8,44.5 101.5,43.8 102.2,42.6 102.9,41.8 103.6,42.0 104.3,44.1 105.0,44.5 105.7,43.0 106.4,42.2 107.1,42.7 107.8,43.8 108.5,44.4 109.2,43.2 109.9,42.9 110.6,43.0 111.3,44.3 112.0,45.9 112.7,45.8 113.4,45.4 114.1,45.7 114.1,48.6 113.4,48.9 112.7,48.6 112.0,48.5 111.3,50.1 110.6,51.3 109.9,51.6 109.2,50.7 108.5,50.2 107.8,50.9 107.1,51.3 106.4,51.6 105.7,51.5 105.0,50.0 104.3,50.1 103.6,51.9 102.9,52.0 102.2,51.3 101.5,50.9 100.8,49.6 100.1,51.1 99.4,52.5 98.7,51.3 98.0,51.2 97.3,48.2 96.6,48.9 95.9,49.4 95.2,48.7 94.5,48.9 93.8,48.5 93.1,50.6 92.4,50.9 91.7,51.8 91.0,52.1 90.3,49.3 89.6,51.3 88.9,52.6 88.2,52.2 87.5,52.5 86.8,50.1 86.1,48.3 85.4,48.5 84.7,48.7 84.0,49.0 83.3,48.3 82.6,50.7 81.9,50.8 81.2,51.6 80.5,51.6 79.8,50.4 79.1,50.4 78.4,52.1 77.7,51.4 77.0,51.1 76.3,50.1 75.6,49.6 74.9,52.3 74.2,51.4 73.5,50.8 72.8,51.1 72.1,49.9 71.4,51.1 70.7,51.7 70.0,51.1 69.3,51.3 68.6,48.4 67.9,48.7 67.2,49.1 66.5,48.7 65.8,48.9 65.1,48.8 64.4,51.6 63.7,52.6 63.0,52.0 62.3,52.2 61.6,49.0 60.9,52.4 60.2,53.0 59.5,53.7 58.8,52.3 58.1,49.7 57.4,48.5 56.7,48.4 56.0,48.9 55.3,48.6 54.6,48.3 53.9,50.4 53.2,51.3 52.5,50.8 51.8,50.6 51.1,49.7 50.4,50.6 49.7,51.8 49.0,52.3 48.3,50.4 47.6,49.8 46.9,50.0 46.2,52.3 45.5,52.9 44.8,53.2 44.1,50.6 43.4,50.1 42.7,51.3 42.0,52.3 41.3,51.7 40.6,50.9 39.9,48.5 39.2,48.7 38.5,48.7 37.8,48.8 37.1,48.7 36.4,49.0 35.7,50.5 35.0,51.8 34.3,52.3 33.6,50.3 32.9,48.6 32.2,51.2 31.5,52.1 30.8,51.4 30.1,51.1 29.4,49.8 28.7,48.7 28.0,48.8 27.3,49.0 26.6,48.7 25.9,48.1 25.2,50.3 24.5,51.5 23.8,53.2 23.1,51.9 22.4,50.7 21.7,50.5 21.0,51.1 20.3,51.1 19.6,51.7 18.9,49.7 18.2,51.0 17.5,52.1 16.8,52.1 16.1,51.6 15.4,51.1 14.7,50.1 14.0,51.4 13.3,52.4 12.6,52.8 11.9,50.3 11.2,48.4 10.5,48.9 9.8,48.9 9.1,48.6 8.4,49.0 7.7,49.5 7.0,51.7 6.3,52.6 5.6,52.7 4.9,51.3 4.2,48.4 3.5,51.3 2.8,51.4 2.1,51.1 1.4,51.2 0.7,49.5 0.0,48.5"/><rect x="0" y="46.400000000000006" width="114.7" height="1.6"/></svg><div style="left:269.5px;top:154.0px;width:114.7px;height:57.0px;background:#95a5fb;"></div><div style="left:269.5px;top:171.0px;width:114.7px;height:40.0px;background:repeating-linear-gradient(90deg, rgba(0,0,40,0.06) 0px, rgba(0,0,40,0.06) 1px, transparent 1px, transparent 14.34px);background-position:0.00px 0"></div><div style="left:269.5px;top:171.0px;width:114.7px;height:40.0px;background:repeating-linear-gradient(90deg, rgba(0,0,40,0.13) 0px, rgba(0,0,40,0.13) 1px, transparent 1px, transparent 28.68px);background-position:0.00px 0"></div><div style="left:269.5px;top:171.0px;width:114.7px;height:1.0px;background:rgba(20,20,60,0.55);"></div><div style="left:269.5px;top:154.0px;width:1.0px;height:17.0px;background:rgba(0,0,30,0.45);"></div><div style="left:269.5px;top:171.0px;width:1.0px;height:40.0px;background:rgba(0,0,30,0.25);"></div><svg style="left:269.5px;top:154px" width="114.7" height="57" fill="#1a1b2a"><polygon points="0.0,26.3 0.7,25.4 1.4,24.1 2.1,23.2 2.8,22.5 3.5,23.5 4.2,26.4 4.9,23.7 5.6,23.1 6.3,23.0 7.0,23.2 7.7,24.9 8.4,26.2 9.1,25.8 9.8,25.5 10.5,26.1 11.2,26.5 11.9,23.8 12.6,22.7 13.3,23.3 14.0,23.4 14.7,24.6 15.4,24.1 16.1,22.5 16.8,21.8 17.5,23.2 18.2,24.0 18.9,25.1 19.6,23.9 20.3,22.9 21.0,24.2 21.7,24.6 22.4,24.7 23.1,23.1 23.8,23.2 24.5,23.2 25.2,24.3 25.9,26.5 26.6,26.3 27.3,26.1 28.0,26.0 28.7,26.2 29.4,25.5 30.1,23.3 30.8,22.0 31.5,23.3 32.2,22.9 32.9,26.4 33.6,24.2 34.3,22.1 35.0,22.8 35.7,23.7 36.4,25.3 37.1,26.2 37.8,25.9 38.5,26.0 39.2,25.8 39.9,26.5 40.6,24.0 41.3,22.7 42.0,22.2 42.7,23.3 43.4,24.4 44.1,24.1 44.8,22.6 45.5,22.3 46.2,22.5 46.9,23.6 47.6,24.2 48.3,23.3 49.0,22.6 49.7,23.5 50.4,24.1 51.1,25.1 51.8,22.9 52.5,22.4 53.2,23.2 53.9,24.3 54.6,26.6 55.3,26.0 56.0,26.1 56.7,26.3 57.4,26.2 58.1,25.2 58.8,23.0 59.5,22.7 60.2,22.5 60.9,22.7 61.6,25.6 62.3,23.9 63.0,22.6 63.7,22.2 64.4,23.6 65.1,25.3 65.8,26.1 66.5,26.0 67.2,26.0 67.9,26.0 68.6,26.6 69.3,23.9 70.0,23.5 70.7,22.5 71.4,23.8 72.1,24.6 72.8,23.8 73.5,22.3 74.2,22.5 74.9,22.8 75.6,24.5 76.3,24.4 77.0,23.5 77.7,23.1 78.4,22.6 79.1,23.7 79.8,24.5 80.5,22.5 81.2,23.3 81.9,22.4 82.6,23.6 83.3,26.4 84.0,26.2 84.7,26.1 85.4,25.9 86.1,26.4 86.8,24.7 87.5,23.8 88.2,22.0 88.9,22.9 89.6,23.8 90.3,25.6 91.0,24.0 91.7,23.7 92.4,23.7 93.1,24.1 93.8,26.0 94.5,26.1 95.2,25.5 95.9,26.0 96.6,25.9 97.3,26.4 98.0,23.4 98.7,22.6 99.4,22.5 100.1,23.3 100.8,24.6 101.5,23.2 102.2,22.1 102.9,21.6 103.6,22.9 104.3,24.2 105.0,24.1 105.7,24.1 106.4,23.8 107.1,24.2 107.8,24.9 108.5,24.5 109.2,22.9 109.9,22.5 110.6,23.8 111.3,24.4 112.0,26.3 112.7,26.0 113.4,26.1 114.1,25.9 114.1,29.4 113.4,28.9 112.7,29.1 112.0,28.8 111.3,30.5 110.6,31.8 109.9,32.0 109.2,32.5 108.5,30.9 107.8,30.3 107.1,30.7 106.4,30.9 105.7,30.7 105.0,30.7 104.3,31.1 103.6,32.0 102.9,33.7 102.2,33.3 101.5,31.9 100.8,30.4 100.1,31.8 99.4,32.5 98.7,32.4 98.0,31.7 97.3,28.8 96.6,29.3 95.9,29.3 95.2,29.7 94.5,29.0 93.8,29.0 93.1,31.2 92.4,31.0 91.7,31.2 91.0,31.4 90.3,29.7 89.6,31.0 88.9,32.4 88.2,33.5 87.5,31.6 86.8,30.5 86.1,28.7 85.4,29.1 84.7,29.0 84.0,28.9 83.3,28.7 82.6,31.4 81.9,32.8 81.2,32.0 80.5,32.3 79.8,30.9 79.1,31.5 78.4,32.2 77.7,31.5 77.0,31.7 76.3,30.4 75.6,30.6 74.9,32.1 74.2,32.4 73.5,32.8 72.8,31.4 72.1,30.4 71.4,31.3 70.7,33.0 70.0,31.5 69.3,31.5 68.6,28.6 67.9,29.3 67.2,29.4 66.5,29.1 65.8,29.0 65.1,29.6 64.4,31.3 63.7,32.6 63.0,32.1 62.3,31.2 61.6,29.4 60.9,32.6 60.2,32.9 59.5,31.9 58.8,32.3 58.1,29.9 57.4,28.9 56.7,28.9 56.0,29.1 55.3,29.2 54.6,28.6 53.9,30.5 53.2,32.3 52.5,33.2 51.8,32.6 51.1,30.1 50.4,31.0 49.7,31.4 49.0,32.5 48.3,32.3 47.6,30.8 46.9,32.0 46.2,32.7 45.5,33.4 44.8,32.1 44.1,31.3 43.4,30.9 42.7,31.5 42.0,32.5 41.3,32.6 40.6,31.5 39.9,28.7 39.2,29.2 38.5,29.3 37.8,29.3 37.1,28.9 36.4,29.9 35.7,31.7 35.0,31.7 34.3,33.6 33.6,31.0 32.9,28.6 32.2,32.0 31.5,31.5 30.8,33.6 30.1,31.5 29.4,29.9 28.7,29.1 28.0,29.3 27.3,28.9 26.6,28.8 25.9,28.7 25.2,30.6 24.5,32.1 23.8,32.0 23.1,32.2 22.4,30.3 21.7,30.5 21.0,31.2 20.3,32.1 19.6,31.3 18.9,29.9 18.2,31.3 17.5,31.8 16.8,33.5 16.1,33.2 15.4,30.6 14.7,30.5 14.0,31.6 13.3,32.1 12.6,31.8 11.9,31.0 11.2,28.6 10.5,29.0 9.8,29.9 9.1,29.2 8.4,29.1 7.7,29.9 7.0,31.7 6.3,32.3 5.6,32.3 4.9,31.8 4.2,28.7 3.5,31.8 2.8,32.7 2.1,32.3 1.4,30.9 0.7,29.5 0.0,29.0"/><rect x="0" y="26.8" width="114.7" height="1.6"/><polygon points="0.0,45.9 0.7,45.0 1.4,42.5 2.1,42.9 2.8,42.5 3.5,42.6 4.2,45.9 4.9,43.2 5.6,41.3 6.3,42.0 7.0,42.4 7.7,45.1 8.4,45.7 9.1,45.1 9.8,45.1 10.5,45.7 11.2,45.9 11.9,44.2 12.6,42.4 13.3,42.4 14.0,42.8 14.7,44.1 15.4,43.9 16.1,42.3 16.8,42.7 17.5,42.4 18.2,44.3 18.9,44.2 19.6,43.2 20.3,43.0 21.0,43.2 21.7,44.6 22.4,43.9 23.1,41.9 23.8,42.3 24.5,42.3 25.2,42.9 25.9,46.0 26.6,45.6 27.3,45.8 28.0,45.6 28.7,45.9 29.4,44.9 30.1,42.0 30.8,42.1 31.5,41.6 32.2,42.3 32.9,45.9 33.6,42.7 34.3,42.2 35.0,41.9 35.7,42.5 36.4,45.0 37.1,45.7 37.8,45.4 38.5,45.7 39.2,45.6 39.9,46.0 40.6,42.9 41.3,42.7 42.0,42.1 42.7,43.2 43.4,44.2 44.1,43.1 44.8,42.8 45.5,41.7 46.2,41.8 46.9,44.1 47.6,43.9 48.3,43.1 49.0,43.3 49.7,43.4 50.4,43.8 51.1,44.1 51.8,43.4 52.5,41.9 53.2,43.4 53.9,44.2 54.6,46.1 55.3,45.7 56.0,45.6 56.7,45.9 57.4,45.8 58.1,44.7 58.8,43.0 59.5,40.8 60.2,41.0 60.9,43.3 61.6,45.4 62.3,42.3 63.0,42.9 63.7,42.0 64.4,43.2 65.1,45.4 65.8,45.6 66.5,45.4 67.2,45.5 67.9,45.8 68.6,46.2 69.3,43.3 70.0,42.4 70.7,43.1 71.4,43.3 72.1,44.2 72.8,43.7 73.5,42.4 74.2,42.2 74.9,42.1 75.6,44.5 76.3,43.7 77.0,42.0 77.7,41.7 78.4,42.9 79.1,43.6 79.8,44.4 80.5,42.2 81.2,41.9 81.9,43.2 82.6,43.7 83.3,46.1 84.0,45.9 84.7,45.5 85.4,45.5 86.1,45.8 86.8,44.4 87.5,42.3 88.2,42.0 88.9,41.8 89.6,43.6 90.3,45.4 91.0,42.9 91.7,42.9 92.4,42.4 93.1,43.8 93.8,45.6 94.5,45.4 95.2,45.1 95.9,45.4 96.6,45.5 97.3,45.9 98.0,42.7 98.7,42.2 99.4,42.7 100.1,43.3 100.8,44.7 101.5,42.8 102.2,41.5 102.9,42.3 103.6,42.0 104.3,43.5 105.0,44.1 105.7,42.6 106.4,42.8 107.1,42.9 107.8,44.4 108.5,43.9 109.2,42.6 109.9,42.8 110.6,42.5 111.3,43.6 112.0,45.9 112.7,45.7 113.4,45.5 114.1,45.4 114.1,48.9 113.4,48.8 112.7,48.5 112.0,48.3 111.3,50.3 110.6,51.2 109.9,51.3 109.2,52.2 108.5,50.7 107.8,49.9 107.1,51.4 106.4,51.7 105.7,52.1 105.0,49.9 104.3,51.2 103.6,52.3 102.9,51.8 102.2,53.1 101.5,51.9 100.8,49.6 100.1,51.2 99.4,51.6 98.7,51.8 98.0,51.5 97.3,48.4 96.6,48.9 95.9,49.2 95.2,49.3 94.5,49.1 93.8,48.6 93.1,50.9 92.4,52.0 91.7,51.7 91.0,51.8 90.3,48.8 89.6,50.3 88.9,52.3 88.2,52.1 87.5,51.5 86.8,50.0 86.1,48.5 85.4,48.8 84.7,48.9 84.0,48.3 83.3,48.4 82.6,51.0 81.9,51.2 81.2,51.9 80.5,52.7 79.8,49.6 79.1,50.6 78.4,51.1 77.7,53.0 77.0,52.3 76.3,50.6 75.6,49.6 74.9,52.0 74.2,52.3 73.5,51.9 72.8,50.7 72.1,50.3 71.4,50.7 70.7,51.1 70.0,51.6 69.3,51.4 68.6,48.2 67.9,48.4 67.2,48.7 66.5,49.1 65.8,48.9 65.1,49.0 64.4,50.9 63.7,52.9 63.0,51.8 62.3,52.4 61.6,49.2 60.9,51.5 60.2,52.8 59.5,54.2 58.8,50.9 58.1,49.5 57.4,48.8 56.7,48.4 56.0,48.6 55.3,48.6 54.6,48.2 53.9,49.8 53.2,51.4 52.5,51.8 51.8,51.1 51.1,50.1 50.4,50.6 49.7,51.0 49.0,51.5 48.3,51.6 47.6,50.4 46.9,50.0 46.2,53.0 45.5,53.2 44.8,51.0 44.1,51.0 43.4,50.1 42.7,51.0 42.0,51.9 41.3,51.7 40.6,51.2 39.9,48.3 39.2,48.7 38.5,48.8 37.8,48.9 37.1,48.7 36.4,49.6 35.7,52.1 35.0,52.6 34.3,51.8 33.6,52.0 32.9,48.5 32.2,52.4 31.5,52.3 30.8,52.7 30.1,52.1 29.4,49.1 28.7,48.4 28.0,48.9 27.3,48.5 26.6,48.7 25.9,48.4 25.2,51.0 24.5,52.2 23.8,51.8 23.1,52.2 22.4,50.6 21.7,49.8 21.0,50.8 20.3,51.3 19.6,50.7 18.9,50.2 18.2,50.2 17.5,51.5 16.8,51.5 16.1,52.4 15.4,50.2 14.7,50.6 14.0,51.1 13.3,51.5 12.6,51.8 11.9,50.4 11.2,48.5 10.5,48.5 9.8,49.4 9.1,49.2 8.4,48.7 7.7,49.3 7.0,51.5 6.3,52.1 5.6,52.5 4.9,51.2 4.2,48.4 3.5,52.0 2.8,51.7 2.1,51.1 1.4,52.1 0.7,49.4 0.0,48.6"/><rect x="0" y="46.400000000000006" width="114.7" height="1.6"/></svg><div style="left:384.2px;top:154.0px;width:114.7px;height:57.0px;background:#95a5fb;"></div><div style="left:384.2px;top:171.0px;width:114.7px;height:40.0px;background:repeating-linear-gradient(90deg, rgba(0,0,40,0.06) 0px, rgba(0,0,40,0.06) 1px, transparent 1px, transparent 14.34px);background-position:14.34px 0"></div><div style="left:384.2px;top:171.0px;width:114.7px;height:40.0px;background:repeating-linear-gradient(90deg, rgba(0,0,40,0.13) 0px, rgba(0,0,40,0.13) 1px, transparent 1px, transparent 28.68px);background-position:28.68px 0"></div><div style="left:384.2px;top:171.0px;width:114.7px;height:1.0px;background:rgba(20,20,60,0.55);"></div><div style="left:384.2px;top:154.0px;width:1.0px;height:17.0px;background:rgba(0,0,30,0.45);"></div><div style="left:384.2px;top:171.0px;width:1.0px;height:40.0px;background:rgba(0,0,30,0.25);"></div><svg style="left:384.2px;top:154px" width="114.7" height="57" fill="#1a1b2a"><polygon points="0.0,26.4 0.7,25.4 1.4,23.9 2.1,23.3 2.8,22.5 3.5,23.5 4.2,26.4 4.9,22.7 5.6,23.2 6.3,22.9 7.0,22.6 7.7,24.9 8.4,25.8 9.1,25.9 9.8,25.8 10.5,25.9 11.2,26.4 11.9,24.2 12.6,22.6 13.3,22.1 14.0,23.2 14.7,25.0 15.4,24.0 16.1,23.3 16.8,23.0 17.5,22.8 18.2,24.6 18.9,25.0 19.6,24.1 20.3,23.9 21.0,23.0 21.7,24.3 22.4,24.9 23.1,22.5 23.8,22.3 24.5,22.9 25.2,23.3 25.9,26.6 26.6,26.2 27.3,26.2 28.0,26.0 28.7,26.3 29.4,25.2 30.1,23.3 30.8,22.7 31.5,23.0 32.2,23.8 32.9,26.5 33.6,23.5 34.3,23.6 35.0,23.1 35.7,24.1 36.4,25.8 37.1,26.2 37.8,26.1 38.5,26.0 39.2,26.3 39.9,26.5 40.6,23.7 41.3,22.4 42.0,23.3 42.7,22.4 43.4,24.8 44.1,23.2 44.8,22.3 45.5,22.6 46.2,23.1 46.9,24.6 47.6,24.9 48.3,23.2 49.0,22.7 49.7,23.4 50.4,24.5 51.1,24.7 51.8,22.9 52.5,22.5 53.2,23.5 53.9,24.7 54.6,26.6 55.3,26.0 56.0,26.3 56.7,26.3 57.4,26.4 58.1,24.9 58.8,23.5 59.5,21.4 60.2,22.2 60.9,23.3 61.6,26.0 62.3,23.0 63.0,22.5 63.7,22.6 64.4,23.0 65.1,25.3 65.8,26.2 66.5,25.6 67.2,25.9 67.9,26.1 68.6,26.6 69.3,23.8 70.0,22.9 70.7,22.3 71.4,23.6 72.1,24.6 72.8,24.3 73.5,23.6 74.2,22.0 74.9,23.5 75.6,24.5 76.3,24.7 77.0,23.3 77.7,23.1 78.4,22.5 79.1,23.7 79.8,24.4 80.5,23.1 81.2,22.6 81.9,23.1 82.6,24.3 83.3,26.6 84.0,26.3 84.7,26.0 85.4,25.9 86.1,26.2 86.8,25.3 87.5,23.0 88.2,21.9 88.9,22.1 89.6,23.1 90.3,26.0 91.0,23.1 91.7,23.0 92.4,23.4 93.1,24.3 93.8,25.8 94.5,26.1 95.2,25.6 95.9,25.5 96.6,26.1 97.3,26.3 98.0,23.3 98.7,22.5 99.4,22.5 100.1,23.7 100.8,24.7 101.5,23.5 102.2,22.6 102.9,21.7 103.6,22.4 104.3,24.2 105.0,24.0 105.7,22.9 106.4,23.0 107.1,23.3 107.8,25.0 108.5,24.7 109.2,23.1 109.9,23.2 110.6,23.3 111.3,24.8 112.0,26.5 112.7,26.2 113.4,26.1 114.1,26.1 114.1,29.0 113.4,29.2 112.7,29.2 112.0,28.6 111.3,30.2 110.6,32.1 109.9,31.8 109.2,32.5 108.5,30.6 107.8,30.1 107.1,31.7 106.4,32.6 105.7,32.0 105.0,31.0 104.3,30.8 103.6,32.7 102.9,33.1 102.2,32.8 101.5,31.7 100.8,30.1 100.1,31.6 99.4,32.2 98.7,32.8 98.0,32.0 97.3,29.0 96.6,29.2 95.9,29.8 95.2,29.5 94.5,28.9 93.8,29.3 93.1,30.8 92.4,31.7 91.7,32.2 91.0,31.7 90.3,29.1 89.6,31.6 88.9,32.5 88.2,32.5 87.5,32.0 86.8,30.0 86.1,29.0 85.4,29.3 84.7,29.1 84.0,28.8 83.3,28.6 82.6,30.9 81.9,32.0 81.2,32.1 80.5,32.4 79.8,30.5 79.1,31.7 78.4,32.4 77.7,32.3 77.0,32.3 76.3,30.2 75.6,30.2 74.9,31.9 74.2,33.0 73.5,31.3 72.8,31.1 72.1,30.7 71.4,31.7 70.7,33.2 70.0,32.7 69.3,31.0 68.6,28.5 67.9,28.9 67.2,29.4 66.5,29.5 65.8,29.0 65.1,29.6 64.4,32.4 63.7,32.6 63.0,33.1 62.3,32.6 61.6,29.2 60.9,32.2 60.2,32.7 59.5,33.1 58.8,31.3 58.1,30.0 57.4,28.9 56.7,29.0 56.0,28.9 55.3,29.3 54.6,28.6 53.9,30.2 53.2,31.5 52.5,32.2 51.8,31.7 51.1,30.1 50.4,30.4 49.7,31.8 49.0,32.0 48.3,31.3 47.6,30.4 46.9,30.5 46.2,31.8 45.5,32.2 44.8,32.5 44.1,31.6 43.4,30.5 42.7,33.0 42.0,31.8 41.3,32.4 40.6,31.4 39.9,28.9 39.2,28.8 38.5,29.3 37.8,29.0 37.1,29.0 36.4,29.3 35.7,31.4 35.0,31.5 34.3,31.5 33.6,31.6 32.9,28.7 32.2,31.0 31.5,32.3 30.8,32.1 30.1,32.0 29.4,30.0 28.7,28.9 28.0,29.3 27.3,29.2 26.6,29.1 25.9,28.7 25.2,32.2 24.5,32.7 23.8,32.3 23.1,33.0 22.4,30.0 21.7,31.2 21.0,31.9 20.3,31.3 19.6,30.9 18.9,30.0 18.2,30.5 17.5,32.2 16.8,32.1 16.1,31.8 15.4,30.8 14.7,30.3 14.0,32.2 13.3,33.2 12.6,32.9 11.9,30.6 11.2,28.7 10.5,29.3 9.8,29.5 9.1,29.4 8.4,29.5 7.7,30.4 7.0,32.9 6.3,32.6 5.6,31.7 4.9,32.5 4.2,28.8 3.5,31.3 2.8,32.1 2.1,31.5 1.4,31.0 0.7,29.9 0.0,28.9"/><rect x="0" y="26.8" width="114.7" height="1.6"/><polygon points="0.0,46.1 0.7,45.0 1.4,43.0 2.1,41.8 2.8,42.7 3.5,43.2 4.2,45.9 4.9,42.8 5.6,41.6 6.3,42.2 7.0,42.2 7.7,44.7 8.4,45.8 9.1,45.5 9.8,45.2 10.5,45.7 11.2,45.8 11.9,43.2 12.6,43.1 13.3,42.9 14.0,43.5 14.7,44.1 15.4,44.0 16.1,42.3 16.8,42.7 17.5,43.1 18.2,43.6 18.9,43.9 19.6,43.7 20.3,42.4 21.0,42.8 21.7,44.3 22.4,43.9 23.1,42.2 23.8,41.9 24.5,42.7 25.2,43.1 25.9,46.2 26.6,45.7 27.3,45.7 28.0,45.7 28.7,45.6 29.4,44.8 30.1,42.2 30.8,42.5 31.5,42.5 32.2,42.9 32.9,45.7 33.6,43.1 34.3,42.8 35.0,41.8 35.7,42.6 36.4,44.8 37.1,45.5 37.8,45.7 38.5,45.5 39.2,45.6 39.9,46.1 40.6,43.1 41.3,43.0 42.0,41.8 42.7,42.9 43.4,44.6 44.1,42.7 44.8,42.7 45.5,41.6 46.2,42.6 46.9,44.1 47.6,44.2 48.3,42.3 49.0,42.9 49.7,42.4 50.4,44.3 51.1,44.5 51.8,43.4 52.5,43.3 53.2,43.4 53.9,43.6 54.6,46.0 55.3,45.8 56.0,45.6 56.7,45.9 57.4,45.9 58.1,44.6 58.8,43.0 59.5,41.6 60.2,42.5 60.9,43.3 61.6,45.4 62.3,42.6 63.0,42.1 63.7,42.7 64.4,42.9 65.1,45.4 65.8,45.8 66.5,45.5 67.2,45.4 67.9,45.6 68.6,46.1 69.3,43.3 70.0,43.0 70.7,42.8 71.4,42.8 72.1,44.1 72.8,43.5 73.5,42.4 74.2,42.4 74.9,42.7 75.6,43.9 76.3,43.8 77.0,42.8 77.7,43.1 78.4,43.1 79.1,44.3 79.8,44.2 80.5,42.2 81.2,41.7 81.9,41.9 82.6,43.1 83.3,46.2 84.0,45.7 84.7,45.4 85.4,45.4 86.1,46.1 86.8,44.4 87.5,42.1 88.2,41.5 88.9,41.9 89.6,42.9 90.3,45.7 91.0,43.0 91.7,42.8 92.4,43.3 93.1,43.4 93.8,45.3 94.5,45.8 95.2,45.5 95.9,45.3 96.6,45.4 97.3,45.8 98.0,43.1 98.7,42.0 99.4,41.6 100.1,43.1 100.8,43.9 101.5,43.1 102.2,41.9 102.9,41.7 103.6,42.5 104.3,44.2 105.0,44.0 105.7,43.1 106.4,42.2 107.1,42.8 107.8,44.6 108.5,44.3 109.2,43.7 109.9,43.4 110.6,43.2 111.3,44.4 112.0,45.9 112.7,45.6 113.4,45.7 114.1,45.8 114.1,48.4 113.4,48.5 112.7,48.6 112.0,48.4 111.3,49.7 110.6,50.9 109.9,50.7 109.2,50.6 108.5,50.0 107.8,49.5 107.1,51.5 106.4,52.3 105.7,51.4 105.0,50.7 104.3,50.3 103.6,51.8 102.9,52.2 102.2,52.6 101.5,51.2 100.8,50.6 100.1,51.5 99.4,52.7 98.7,52.6 98.0,50.9 97.3,48.4 96.6,49.1 95.9,49.2 95.2,48.7 94.5,48.7 93.8,48.8 93.1,51.1 92.4,51.3 91.7,51.0 91.0,51.2 90.3,48.8 89.6,51.1 88.9,52.5 88.2,53.5 87.5,51.6 86.8,49.8 86.1,48.3 85.4,48.8 84.7,49.0 84.0,48.6 83.3,48.1 82.6,50.9 81.9,53.0 81.2,52.6 80.5,52.4 79.8,50.1 79.1,50.1 78.4,51.4 77.7,51.3 77.0,51.5 76.3,50.6 75.6,50.5 74.9,51.5 74.2,52.1 73.5,51.4 72.8,50.7 72.1,50.4 71.4,51.9 70.7,52.0 70.0,51.1 69.3,51.1 68.6,48.2 67.9,48.7 67.2,48.9 66.5,48.8 65.8,48.6 65.1,49.0 64.4,51.0 63.7,51.7 63.0,52.8 62.3,51.6 61.6,49.0 60.9,51.4 60.2,51.6 59.5,52.8 58.8,51.8 58.1,49.7 57.4,48.4 56.7,48.5 56.0,48.7 55.3,48.6 54.6,48.5 53.9,50.8 53.2,50.9 52.5,51.4 51.8,50.4 51.1,49.7 50.4,49.9 49.7,51.5 49.0,51.0 48.3,52.2 47.6,50.4 46.9,50.4 46.2,51.1 45.5,52.4 44.8,51.8 44.1,51.4 43.4,49.8 42.7,51.5 42.0,52.4 41.3,51.0 40.6,51.4 39.9,48.2 39.2,48.7 38.5,48.9 37.8,48.6 37.1,48.8 36.4,49.6 35.7,51.8 35.0,52.3 34.3,51.5 33.6,51.7 32.9,48.6 32.2,51.2 31.5,52.2 30.8,52.0 30.1,52.5 29.4,49.3 28.7,48.7 28.0,48.7 27.3,48.9 26.6,48.6 25.9,48.2 25.2,50.7 24.5,51.9 23.8,52.0 23.1,52.1 22.4,50.7 21.7,50.3 21.0,51.6 20.3,52.4 19.6,50.8 18.9,50.2 18.2,50.8 17.5,51.6 16.8,51.8 16.1,52.1 15.4,50.2 14.7,50.5 14.0,50.5 13.3,51.3 12.6,51.6 11.9,51.5 11.2,48.5 10.5,48.8 9.8,48.9 9.1,48.7 8.4,48.5 7.7,49.8 7.0,52.2 6.3,52.7 5.6,52.0 4.9,51.9 4.2,48.4 3.5,50.9 2.8,51.7 2.1,52.9 1.4,51.0 0.7,49.1 0.0,48.4"/><rect x="0" y="46.400000000000006" width="114.7" height="1.6"/></svg><div style="left:498.9px;top:154.0px;width:114.7px;height:57.0px;background:#95a5fb;"></div><div style="left:498.9px;top:171.0px;width:114.7px;height:40.0px;background:repeating-linear-gradient(90deg, rgba(0,0,40,0.06) 0px, rgba(0,0,40,0.06) 1px, transparent 1px, transparent 14.34px);background-position:0.00px 0"></div><div style="left:498.9px;top:171.0px;width:114.7px;height:40.0px;background:repeating-linear-gradient(90deg, rgba(0,0,40,0.13) 0px, rgba(0,0,40,0.13) 1px, transparent 1px, transparent 28.68px);background-position:0.00px 0"></div><div style="left:498.9px;top:171.0px;width:114.7px;height:1.0px;background:rgba(20,20,60,0.55);"></div><div style="left:498.9px;top:154.0px;width:1.0px;height:17.0px;background:rgba(0,0,30,0.45);"></div><div style="left:498.9px;top:171.0px;width:1.0px;height:40.0px;background:rgba(0,0,30,0.25);"></div><svg style="left:498.9px;top:154px" width="114.7" height="57" fill="#1a1b2a"><polygon points="0.0,26.4 0.7,25.4 1.4,23.8 2.1,22.4 2.8,23.1 3.5,23.7 4.2,26.5 4.9,22.6 5.6,22.8 6.3,22.1 7.0,22.9 7.7,25.5 8.4,26.2 9.1,26.0 9.8,25.5 10.5,25.6 11.2,26.3 11.9,23.8 12.6,22.9 13.3,23.3 14.0,22.8 14.7,24.9 15.4,24.3 16.1,22.9 16.8,22.0 17.5,23.3 18.2,24.0 18.9,24.7 19.6,23.7 20.3,23.3 21.0,23.6 21.7,24.4 22.4,24.5 23.1,22.4 23.8,23.2 24.5,22.4 25.2,24.3 25.9,26.3 26.6,26.2 27.3,25.8 28.0,26.1 28.7,26.1 29.4,25.4 30.1,23.8 30.8,21.6 31.5,22.8 32.2,23.5 32.9,26.5 33.6,24.0 34.3,22.3 35.0,23.2 35.7,22.9 36.4,25.4 37.1,26.1 37.8,25.7 38.5,25.9 39.2,26.1 39.9,26.3 40.6,23.3 41.3,22.1 42.0,22.9 42.7,23.0 43.4,24.8 44.1,24.1 44.8,23.1 45.5,22.3 46.2,22.8 46.9,24.3 47.6,24.6 48.3,23.8 49.0,22.7 49.7,23.1 50.4,24.2 51.1,24.8 51.8,23.2 52.5,23.7 53.2,23.5 53.9,23.7 54.6,26.7 55.3,26.0 56.0,26.3 56.7,26.2 57.4,26.1 58.1,24.6 58.8,22.3 59.5,22.7 60.2,22.0 60.9,23.1 61.6,25.9 62.3,23.5 63.0,22.9 63.7,22.3 64.4,22.5 65.1,25.3 65.8,25.8 66.5,25.9 67.2,25.9 67.9,26.2 68.6,26.3 69.3,23.8 70.0,23.1 70.7,23.1 71.4,24.0 72.1,24.8 72.8,24.1 73.5,22.3 74.2,23.2 74.9,22.6 75.6,24.6 76.3,24.6 77.0,23.5 77.7,22.2 78.4,23.7 79.1,24.1 79.8,24.2 80.5,22.9 81.2,22.8 81.9,22.5 82.6,23.7 83.3,26.5 84.0,26.2 84.7,26.0 85.4,26.1 86.1,26.1 86.8,25.3 87.5,23.7 88.2,23.0 88.9,22.6 89.6,23.5 90.3,25.8 91.0,23.8 91.7,23.5 92.4,23.7 93.1,24.2 93.8,25.9 94.5,26.1 95.2,25.7 95.9,25.8 96.6,25.7 97.3,26.5 98.0,23.1 98.7,23.6 99.4,22.1 100.1,23.6 100.8,25.1 101.5,24.0 102.2,22.5 102.9,21.9 103.6,22.4 104.3,24.8 105.0,24.2 105.7,23.4 106.4,23.2 107.1,23.7 107.8,24.9 108.5,24.5 109.2,24.1 109.9,23.7 110.6,23.8 111.3,24.7 112.0,26.4 112.7,26.3 113.4,25.7 114.1,25.8 114.1,29.3 113.4,29.4 112.7,28.9 112.0,28.7 111.3,30.4 110.6,31.7 109.9,31.4 109.2,31.3 108.5,30.8 107.8,30.5 107.1,31.5 106.4,32.2 105.7,31.4 105.0,30.7 104.3,30.6 103.6,33.0 102.9,33.1 102.2,32.1 101.5,31.0 100.8,30.2 100.1,31.8 99.4,32.6 98.7,31.3 98.0,31.9 97.3,28.8 96.6,29.5 95.9,29.3 95.2,29.5 94.5,29.1 93.8,29.4 93.1,30.6 92.4,31.4 91.7,31.9 91.0,31.7 90.3,29.4 89.6,31.8 88.9,32.0 88.2,32.6 87.5,31.7 86.8,29.9 86.1,29.0 85.4,29.0 84.7,29.2 84.0,29.0 83.3,28.7 82.6,31.1 81.9,32.7 81.2,32.0 80.5,32.5 79.8,31.0 79.1,30.6 78.4,31.8 77.7,32.5 77.0,31.4 76.3,30.3 75.6,30.6 74.9,32.4 74.2,31.4 73.5,32.7 72.8,31.2 72.1,30.5 71.4,31.0 70.7,32.4 70.0,32.3 69.3,31.8 68.6,29.0 67.9,28.8 67.2,29.5 66.5,29.3 65.8,29.5 65.1,30.1 64.4,32.2 63.7,32.1 63.0,32.4 62.3,32.0 61.6,29.3 60.9,32.3 60.2,32.4 59.5,32.2 58.8,32.5 58.1,30.2 57.4,29.1 56.7,29.2 56.0,29.0 55.3,29.2 54.6,28.6 53.9,31.8 53.2,31.5 52.5,31.3 51.8,32.0 51.1,30.6 50.4,31.0 49.7,31.7 49.0,31.9 48.3,31.0 47.6,30.3 46.9,30.7 46.2,32.6 45.5,32.8 44.8,31.7 44.1,31.2 43.4,30.1 42.7,31.9 42.0,32.7 41.3,33.2 40.6,31.6 39.9,28.9 39.2,29.0 38.5,29.4 37.8,29.6 37.1,29.1 36.4,29.7 35.7,31.9 35.0,32.0 34.3,32.5 33.6,30.9 32.9,28.6 32.2,31.4 31.5,32.8 30.8,33.5 30.1,31.1 29.4,29.7 28.7,29.0 28.0,28.9 27.3,29.3 26.6,29.0 25.9,28.8 25.2,31.0 24.5,32.8 23.8,31.5 23.1,33.2 22.4,30.4 21.7,30.4 21.0,31.4 20.3,31.7 19.6,31.6 18.9,30.1 18.2,30.8 17.5,31.3 16.8,32.5 16.1,31.8 15.4,31.1 14.7,30.2 14.0,32.3 13.3,31.3 12.6,32.3 11.9,31.0 11.2,29.0 10.5,29.5 9.8,29.6 9.1,29.0 8.4,28.9 7.7,29.8 7.0,32.3 6.3,32.5 5.6,32.7 4.9,32.3 4.2,28.6 3.5,31.7 2.8,32.2 2.1,32.8 1.4,31.1 0.7,30.0 0.0,28.8"/><rect x="0" y="26.8" width="114.7" height="1.6"/><polygon points="0.0,46.0 0.7,45.0 1.4,42.9 2.1,41.7 2.8,42.7 3.5,42.7 4.2,46.0 4.9,42.1 5.6,42.0 6.3,41.5 7.0,42.9 7.7,44.5 8.4,45.4 9.1,45.5 9.8,45.2 10.5,45.6 11.2,45.8 11.9,44.0 12.6,43.2 13.3,42.8 14.0,42.8 14.7,44.3 15.4,44.0 16.1,42.7 16.8,42.8 17.5,43.0 18.2,44.3 18.9,44.1 19.6,43.8 20.3,43.5 21.0,43.5 21.7,44.6 22.4,44.6 23.1,41.9 23.8,42.2 24.5,42.7 25.2,43.4 25.9,46.2 26.6,45.5 27.3,45.6 28.0,45.8 28.7,45.8 29.4,44.5 30.1,42.4 30.8,42.5 31.5,41.7 32.2,42.3 32.9,45.7 33.6,43.7 34.3,41.9 35.0,42.5 35.7,42.9 36.4,45.2 37.1,45.8 37.8,45.8 38.5,45.4 39.2,45.8 39.9,46.2 40.6,43.1 41.3,41.7 42.0,42.2 42.7,42.0 43.4,44.4 44.1,43.0 44.8,42.3 45.5,41.7 46.2,42.5 46.9,43.3 47.6,43.8 48.3,43.6 49.0,43.1 49.7,42.7 50.4,43.7 51.1,44.6 51.8,43.2 52.5,42.4 53.2,42.3 53.9,44.0 54.6,46.1 55.3,45.9 56.0,45.7 56.7,45.9 57.4,45.8 58.1,44.2 58.8,42.7 59.5,42.5 60.2,41.7 60.9,43.1 61.6,45.5 62.3,42.4 63.0,41.4 63.7,41.9 64.4,43.2 65.1,45.5 65.8,45.6 66.5,45.5 67.2,45.3 67.9,45.4 68.6,46.1 69.3,43.4 70.0,43.4 70.7,42.7 71.4,42.5 72.1,44.3 72.8,43.4 73.5,42.1 74.2,43.1 74.9,42.6 75.6,43.7 76.3,44.0 77.0,42.9 77.7,42.6 78.4,42.6 79.1,44.3 79.8,43.8 80.5,42.7 81.2,42.7 81.9,42.3 82.6,43.5 83.3,46.2 84.0,45.8 84.7,45.8 85.4,45.9 86.1,45.8 86.8,44.3 87.5,43.3 88.2,42.5 88.9,41.8 89.6,42.7 90.3,45.4 91.0,42.7 91.7,42.2 92.4,43.2 93.1,43.0 93.8,45.8 94.5,45.5 95.2,45.4 95.9,45.5 96.6,45.4 97.3,45.9 98.0,43.0 98.7,42.5 99.4,42.0 100.1,43.4 100.8,44.2 101.5,42.8 102.2,42.3 102.9,41.7 103.6,42.0 104.3,43.9 105.0,44.2 105.7,43.5 106.4,42.7 107.1,43.2 107.8,44.0 108.5,44.2 109.2,43.4 109.9,42.3 110.6,43.5 111.3,43.6 112.0,46.1 112.7,45.6 113.4,45.7 114.1,45.5 114.1,48.7 113.4,48.5 112.7,48.6 112.0,48.4 111.3,50.5 110.6,50.8 109.9,51.5 109.2,51.3 108.5,49.7 107.8,50.3 107.1,51.3 106.4,52.1 105.7,51.2 105.0,50.0 104.3,50.4 103.6,51.7 102.9,52.7 102.2,52.1 101.5,52.0 100.8,50.4 100.1,51.2 99.4,52.2 98.7,52.2 98.0,51.2 97.3,48.4 96.6,49.0 95.9,49.0 95.2,48.8 94.5,48.6 93.8,48.7 93.1,51.1 92.4,51.5 91.7,52.3 91.0,51.4 90.3,48.8 89.6,51.1 88.9,52.3 88.2,51.7 87.5,51.3 86.8,50.0 86.1,48.5 85.4,48.4 84.7,48.5 84.0,48.7 83.3,48.1 82.6,50.7 81.9,51.9 81.2,51.6 80.5,51.7 79.8,50.7 79.1,50.2 78.4,51.6 77.7,51.1 77.0,51.5 76.3,50.7 75.6,50.7 74.9,51.8 74.2,51.0 73.5,52.8 72.8,50.5 72.1,50.1 71.4,51.3 70.7,51.1 70.0,51.1 69.3,50.8 68.6,48.3 67.9,48.8 67.2,48.9 66.5,48.7 65.8,48.9 65.1,48.7 64.4,51.0 63.7,51.8 63.0,52.5 62.3,52.4 61.6,49.0 60.9,51.6 60.2,52.0 59.5,51.7 58.8,51.6 58.1,50.4 57.4,48.7 56.7,48.3 56.0,48.8 55.3,48.5 54.6,48.4 53.9,50.0 53.2,52.4 52.5,51.9 51.8,51.1 51.1,49.9 50.4,50.2 49.7,51.2 49.0,51.3 48.3,51.0 47.6,50.6 46.9,51.4 46.2,52.2 45.5,52.3 44.8,51.9 44.1,51.8 43.4,50.2 42.7,52.5 42.0,51.8 41.3,52.7 40.6,51.6 39.9,48.0 39.2,48.7 38.5,49.0 37.8,48.5 37.1,48.5 36.4,49.0 35.7,51.6 35.0,51.9 34.3,52.8 33.6,50.9 32.9,48.7 32.2,51.6 31.5,52.6 30.8,52.1 30.1,52.0 29.4,49.9 28.7,48.4 28.0,48.7 27.3,48.7 26.6,49.1 25.9,48.2 25.2,50.7 24.5,51.6 23.8,51.8 23.1,52.9 22.4,49.7 21.7,49.8 21.0,51.2 20.3,50.4 19.6,50.5 18.9,50.1 18.2,50.1 17.5,51.0 16.8,51.3 16.1,51.3 15.4,50.2 14.7,49.8 14.0,51.9 13.3,51.1 12.6,51.3 11.9,49.9 11.2,48.7 10.5,48.7 9.8,49.4 9.1,49.0 8.4,49.0 7.7,50.0 7.0,51.3 6.3,53.4 5.6,51.7 4.9,52.7 4.2,48.3 3.5,52.0 2.8,51.1 2.1,52.8 1.4,51.0 0.7,49.2 0.0,48.3"/><rect x="0" y="46.400000000000006" width="114.7" height="1.6"/></svg><div style="left:613.7px;top:154.0px;width:114.7px;height:57.0px;background:#95a5fb;"></div><div style="left:613.7px;top:171.0px;width:114.7px;height:40.0px;background:repeating-linear-gradient(90deg, rgba(0,0,40,0.06) 0px, rgba(0,0,40,0.06) 1px, transparent 1px, transparent 14.34px);background-position:0.00px 0"></div><div style="left:613.7px;top:171.0px;width:114.7px;height:40.0px;background:repeating-linear-gradient(90deg, rgba(0,0,40,0.13) 0px, rgba(0,0,40,0.13) 1px, transparent 1px, transparent 28.68px);background-position:0.00px 0"></div><div style="left:613.7px;top:171.0px;width:114.7px;height:1.0px;background:rgba(20,20,60,0.55);"></div><div style="left:613.7px;top:154.0px;width:1.0px;height:17.0px;background:rgba(0,0,30,0.45);"></div><div style="left:613.7px;top:171.0px;width:1.0px;height:40.0px;background:rgba(0,0,30,0.25);"></div><svg style="left:613.7px;top:154px" width="114.7" height="57" fill="#1a1b2a"><polygon points="0.0,26.1 0.7,25.4 1.4,22.8 2.1,22.2 2.8,22.3 3.5,23.9 4.2,26.2 4.9,23.5 5.6,21.8 6.3,21.8 7.0,22.4 7.7,25.4 8.4,26.1 9.1,25.7 9.8,25.7 10.5,25.8 11.2,26.2 11.9,24.0 12.6,23.7 13.3,23.3 14.0,23.0 14.7,24.9 15.4,23.5 16.1,23.4 16.8,22.6 17.5,22.9 18.2,24.2 18.9,24.3 19.6,24.0 20.3,22.9 21.0,23.1 21.7,24.6 22.4,24.1 23.1,23.0 23.8,22.5 24.5,22.2 25.2,23.4 25.9,26.6 26.6,25.9 27.3,26.0 28.0,25.8 28.7,26.4 29.4,25.2 30.1,22.7 30.8,22.1 31.5,23.2 32.2,23.5 32.9,26.4 33.6,23.4 34.3,22.7 35.0,22.3 35.7,23.0 36.4,25.9 37.1,26.2 37.8,25.9 38.5,26.0 39.2,26.1 39.9,26.4 40.6,23.9 41.3,22.4 42.0,23.2 42.7,22.5 43.4,24.9 44.1,23.6 44.8,21.8 45.5,22.9 46.2,22.2 46.9,24.1 47.6,24.6 48.3,24.0 49.0,23.6 49.7,22.9 50.4,24.3 51.1,24.4 51.8,23.8 52.5,23.0 53.2,23.2 53.9,24.5 54.6,26.4 55.3,26.0 56.0,26.0 56.7,26.2 57.4,26.4 58.1,25.3 58.8,22.5 59.5,22.8 60.2,22.7 60.9,22.6 61.6,25.9 62.3,23.6 63.0,21.9 63.7,22.6 64.4,22.7 65.1,25.5 65.8,26.1 66.5,25.8 67.2,25.8 67.9,25.7 68.6,26.5 69.3,24.6 70.0,22.6 70.7,22.8 71.4,23.3 72.1,25.3 72.8,24.1 73.5,23.2 74.2,22.9 74.9,22.8 75.6,24.0 76.3,24.2 77.0,23.0 77.7,23.2 78.4,22.7 79.1,24.0 79.8,24.2 80.5,22.6 81.2,23.2 81.9,22.3 82.6,23.5 83.3,26.5 84.0,25.9 84.7,25.9 85.4,26.2 86.1,26.0 86.8,24.8 87.5,23.3 88.2,22.1 88.9,22.7 89.6,23.6 90.3,25.6 91.0,23.9 91.7,22.3 92.4,22.8 93.1,24.1 93.8,25.8 94.5,25.9 95.2,25.6 95.9,25.9 96.6,26.0 97.3,26.5 98.0,23.3 98.7,23.4 99.4,22.4 100.1,23.1 100.8,24.5 101.5,23.4 102.2,22.1 102.9,21.9 103.6,23.1 104.3,24.3 105.0,24.4 105.7,23.7 106.4,22.6 107.1,24.2 107.8,24.2 108.5,24.5 109.2,24.1 109.9,23.3 110.6,23.2 111.3,24.5 112.0,26.3 112.7,26.2 113.4,25.8 114.1,26.2 114.1,28.9 113.4,29.2 112.7,28.9 112.0,28.8 111.3,30.8 110.6,31.4 109.9,31.4 109.2,31.4 108.5,30.5 107.8,31.2 107.1,31.3 106.4,32.3 105.7,31.6 105.0,30.6 104.3,30.9 103.6,31.9 102.9,32.7 102.2,32.3 101.5,31.8 100.8,30.8 100.1,32.0 99.4,33.2 98.7,31.8 98.0,32.2 97.3,28.6 96.6,29.1 95.9,29.2 95.2,29.6 94.5,29.1 93.8,29.2 93.1,30.7 92.4,31.8 91.7,32.6 91.0,31.1 90.3,29.7 89.6,31.8 88.9,32.5 88.2,33.2 87.5,31.9 86.8,30.2 86.1,29.2 85.4,29.1 84.7,29.1 84.0,29.1 83.3,28.7 82.6,31.8 81.9,32.3 81.2,32.3 80.5,32.5 79.8,30.7 79.1,31.2 78.4,32.4 77.7,31.6 77.0,32.1 76.3,31.3 75.6,31.1 74.9,31.9 74.2,32.4 73.5,32.3 72.8,31.3 72.1,29.8 71.4,31.7 70.7,32.9 70.0,32.1 69.3,30.4 68.6,28.8 67.9,29.6 67.2,29.3 66.5,29.4 65.8,29.1 65.1,29.6 64.4,32.2 63.7,32.3 63.0,32.5 62.3,31.1 61.6,29.5 60.9,32.7 60.2,32.6 59.5,32.5 58.8,33.0 58.1,30.0 57.4,28.9 56.7,28.8 56.0,29.1 55.3,29.3 54.6,28.7 53.9,30.8 53.2,31.9 52.5,31.7 51.8,31.4 51.1,30.6 50.4,30.9 49.7,32.4 49.0,31.7 48.3,31.3 47.6,30.8 46.9,31.4 46.2,32.9 45.5,32.0 44.8,32.7 44.1,31.4 43.4,30.4 42.7,32.9 42.0,31.5 41.3,32.5 40.6,31.3 39.9,28.7 39.2,29.2 38.5,29.3 37.8,29.1 37.1,28.9 36.4,29.4 35.7,32.6 35.0,33.1 34.3,32.1 33.6,31.9 32.9,28.8 32.2,31.7 31.5,31.4 30.8,32.6 30.1,32.5 29.4,29.9 28.7,28.9 28.0,29.2 27.3,29.2 26.6,29.1 25.9,28.6 25.2,31.4 24.5,33.5 23.8,32.4 23.1,31.6 22.4,31.3 21.7,30.2 21.0,31.8 20.3,31.9 19.6,30.9 18.9,30.7 18.2,30.6 17.5,32.1 16.8,32.9 16.1,31.2 15.4,31.2 14.7,30.3 14.0,32.3 13.3,32.2 12.6,31.0 11.9,31.5 11.2,29.1 10.5,29.3 9.8,29.6 9.1,29.3 8.4,28.9 7.7,29.7 7.0,32.7 6.3,32.9 5.6,33.8 4.9,31.3 4.2,28.9 3.5,31.1 2.8,33.4 2.1,33.1 1.4,31.7 0.7,29.6 0.0,28.9"/><rect x="0" y="26.8" width="114.7" height="1.6"/><polygon points="0.0,45.7 0.7,45.4 1.4,42.7 2.1,41.6 2.8,42.2 3.5,43.2 4.2,46.0 4.9,42.3 5.6,41.2 6.3,41.8 7.0,42.1 7.7,44.5 8.4,45.5 9.1,45.2 9.8,45.2 10.5,45.4 11.2,45.8 11.9,43.5 12.6,42.1 13.3,42.6 14.0,42.9 14.7,44.5 15.4,43.1 16.1,41.9 16.8,41.8 17.5,42.8 18.2,43.7 18.9,44.5 19.6,43.2 20.3,43.6 21.0,43.1 21.7,44.5 22.4,43.6 23.1,42.9 23.8,42.3 24.5,42.6 25.2,43.7 25.9,46.2 26.6,45.9 27.3,45.4 28.0,45.4 28.7,45.8 29.4,45.0 30.1,42.6 30.8,41.4 31.5,42.4 32.2,43.1 32.9,46.1 33.6,43.7 34.3,41.9 35.0,42.4 35.7,43.1 36.4,45.4 37.1,45.6 37.8,45.3 38.5,45.7 39.2,45.5 39.9,46.0 40.6,43.2 41.3,43.0 42.0,41.6 42.7,41.9 43.4,44.5 44.1,43.9 44.8,41.4 45.5,42.5 46.2,41.6 46.9,43.3 47.6,44.5 48.3,42.3 49.0,43.4 49.7,42.7 50.4,44.3 51.1,44.3 51.8,42.8 52.5,42.8 53.2,42.5 53.9,44.0 54.6,46.3 55.3,45.8 56.0,45.5 56.7,45.6 57.4,46.0 58.1,44.4 58.8,42.7 59.5,41.7 60.2,41.2 60.9,43.4 61.6,45.5 62.3,42.4 63.0,41.3 63.7,42.5 64.4,42.7 65.1,45.3 65.8,45.6 66.5,45.4 67.2,45.4 67.9,45.8 68.6,46.1 69.3,43.3 70.0,43.0 70.7,42.0 71.4,42.8 72.1,44.5 72.8,43.0 73.5,42.2 74.2,42.3 74.9,42.6 75.6,43.7 76.3,43.8 77.0,42.3 77.7,42.0 78.4,41.9 79.1,43.4 79.8,44.0 80.5,42.6 81.2,41.8 81.9,42.0 82.6,43.5 83.3,46.2 84.0,45.7 84.7,45.4 85.4,45.6 86.1,45.7 86.8,44.9 87.5,43.3 88.2,43.0 88.9,42.1 89.6,43.4 90.3,45.5 91.0,43.0 91.7,43.1 92.4,42.0 93.1,43.9 93.8,45.4 94.5,45.7 95.2,45.4 95.9,45.5 96.6,45.7 97.3,46.1 98.0,43.2 98.7,42.9 99.4,41.8 100.1,42.5 100.8,43.9 101.5,43.1 102.2,42.9 102.9,42.7 103.6,42.4 104.3,43.6 105.0,44.2 105.7,42.8 106.4,42.8 107.1,42.6 107.8,44.0 108.5,44.1 109.2,42.5 109.9,42.8 110.6,42.5 111.3,43.9 112.0,46.1 112.7,45.6 113.4,45.4 114.1,45.4 114.1,49.0 113.4,49.2 112.7,49.0 112.0,48.3 111.3,50.4 110.6,51.3 109.9,51.6 109.2,51.6 108.5,50.6 107.8,50.6 107.1,52.2 106.4,51.1 105.7,51.9 105.0,49.8 104.3,50.3 103.6,51.4 102.9,51.3 102.2,51.5 101.5,51.5 100.8,50.3 100.1,51.7 99.4,51.9 98.7,51.6 98.0,51.4 97.3,48.2 96.6,48.7 95.9,48.6 95.2,48.8 94.5,48.7 93.8,48.8 93.1,50.1 92.4,52.3 91.7,50.8 91.0,51.5 90.3,48.7 89.6,51.1 88.9,52.1 88.2,51.1 87.5,51.0 86.8,49.4 86.1,48.8 85.4,48.7 84.7,49.0 84.0,48.5 83.3,48.1 82.6,50.5 81.9,52.0 81.2,52.5 80.5,51.3 79.8,50.1 79.1,50.6 78.4,52.4 77.7,51.9 77.0,52.6 76.3,50.3 75.6,50.7 74.9,51.9 74.2,52.0 73.5,52.6 72.8,51.3 72.1,49.7 71.4,51.0 70.7,52.1 70.0,51.4 69.3,51.0 68.6,48.4 67.9,48.4 67.2,49.1 66.5,49.2 65.8,48.8 65.1,49.2 64.4,51.7 63.7,52.3 63.0,53.5 62.3,52.2 61.6,49.0 60.9,51.1 60.2,53.3 59.5,52.7 58.8,51.6 58.1,50.2 57.4,48.3 56.7,48.8 56.0,48.9 55.3,48.4 54.6,48.2 53.9,50.2 53.2,51.9 52.5,51.4 51.8,51.4 51.1,50.0 50.4,50.2 49.7,52.1 49.0,50.5 48.3,51.8 47.6,49.9 46.9,51.2 46.2,52.3 45.5,52.2 44.8,52.5 44.1,50.6 43.4,49.9 42.7,52.7 42.0,53.2 41.3,51.7 40.6,51.3 39.9,48.4 39.2,49.0 38.5,48.5 37.8,49.3 37.1,48.8 36.4,49.0 35.7,50.7 35.0,52.2 34.3,52.9 33.6,50.3 32.9,48.4 32.2,51.2 31.5,52.4 30.8,53.3 30.1,51.7 29.4,49.3 28.7,48.6 28.0,49.0 27.3,49.1 26.6,48.5 25.9,48.2 25.2,50.2 24.5,52.2 23.8,52.3 23.1,51.9 22.4,51.1 21.7,50.1 21.0,50.7 20.3,50.4 19.6,51.2 18.9,49.7 18.2,51.0 17.5,51.9 16.8,52.4 16.1,52.4 15.4,51.4 14.7,50.0 14.0,51.6 13.3,52.1 12.6,52.0 11.9,50.6 11.2,48.6 10.5,49.1 9.8,49.1 9.1,49.1 8.4,48.9 7.7,50.0 7.0,52.2 6.3,52.0 5.6,53.4 4.9,52.4 4.2,48.2 3.5,51.2 2.8,52.3 2.1,52.9 1.4,52.0 0.7,48.8 0.0,48.6"/><rect x="0" y="46.400000000000006" width="114.7" height="1.6"/></svg><div style="left:728.4px;top:154.0px;width:114.7px;height:57.0px;background:#95a5fb;"></div><div style="left:728.4px;top:171.0px;width:114.7px;height:40.0px;background:repeating-linear-gradient(90deg, rgba(0,0,40,0.06) 0px, rgba(0,0,40,0.06) 1px, transparent 1px, transparent 14.34px);background-position:0.00px 0"></div><div style="left:728.4px;top:171.0px;width:114.7px;height:40.0px;background:repeating-linear-gradient(90deg, rgba(0,0,40,0.13) 0px, rgba(0,0,40,0.13) 1px, transparent 1px, transparent 28.68px);background-position:0.00px 0"></div><div style="left:728.4px;top:171.0px;width:114.7px;height:1.0px;background:rgba(20,20,60,0.55);"></div><div style="left:728.4px;top:154.0px;width:1.0px;height:17.0px;background:rgba(0,0,30,0.45);"></div><div style="left:728.4px;top:171.0px;width:1.0px;height:40.0px;background:rgba(0,0,30,0.25);"></div><svg style="left:728.4px;top:154px" width="114.7" height="57" fill="#1a1b2a"><polygon points="0.0,26.3 0.7,25.6 1.4,23.6 2.1,23.2 2.8,23.6 3.5,23.8 4.2,26.2 4.9,22.8 5.6,22.8 6.3,21.8 7.0,23.7 7.7,25.1 8.4,26.2 9.1,25.9 9.8,25.8 10.5,25.8 11.2,26.4 11.9,23.4 12.6,22.6 13.3,23.2 14.0,23.5 14.7,25.1 15.4,23.7 16.1,22.3 16.8,21.9 17.5,22.5 18.2,24.1 18.9,25.2 19.6,24.0 20.3,23.5 21.0,23.4 21.7,24.7 22.4,24.0 23.1,22.7 23.8,22.9 24.5,23.4 25.2,24.3 25.9,26.3 26.6,26.0 27.3,25.8 28.0,25.9 28.7,26.4 29.4,25.2 30.1,23.7 30.8,22.6 31.5,22.5 32.2,23.3 32.9,26.5 33.6,23.4 34.3,22.9 35.0,23.3 35.7,24.0 36.4,25.6 37.1,26.2 37.8,25.7 38.5,26.0 39.2,25.9 39.9,26.3 40.6,23.8 41.3,23.0 42.0,23.1 42.7,22.3 43.4,24.5 44.1,23.7 44.8,22.5 45.5,22.9 46.2,22.4 46.9,24.3 47.6,24.2 48.3,24.0 49.0,23.5 49.7,23.5 50.4,24.7 51.1,24.5 51.8,23.8 52.5,22.8 53.2,22.6 53.9,24.0 54.6,26.4 55.3,26.3 56.0,25.9 56.7,26.0 57.4,26.2 58.1,24.9 58.8,22.3 59.5,22.6 60.2,22.4 60.9,22.7 61.6,26.1 62.3,22.7 63.0,21.7 63.7,21.8 64.4,23.7 65.1,25.4 65.8,25.8 66.5,26.0 67.2,26.0 67.9,26.2 68.6,26.6 69.3,23.7 70.0,23.3 70.7,23.6 71.4,23.6 72.1,25.0 72.8,23.7 73.5,23.7 74.2,23.4 74.9,23.3 75.6,24.4 76.3,24.0 77.0,23.7 77.7,23.0 78.4,23.2 79.1,24.6 79.8,24.9 80.5,22.6 81.2,22.0 81.9,22.2 82.6,23.5 83.3,26.4 84.0,25.9 84.7,25.8 85.4,25.9 86.1,26.2 86.8,25.2 87.5,23.1 88.2,23.2 88.9,23.0 89.6,23.6 90.3,25.7 91.0,23.5 91.7,23.3 92.4,23.1 93.1,24.2 93.8,25.7 94.5,26.1 95.2,25.5 95.9,26.0 96.6,25.7 97.3,26.3 98.0,23.3 98.7,22.1 99.4,23.5 100.1,23.8 100.8,24.4 101.5,23.2 102.2,22.2 102.9,21.8 103.6,22.3 104.3,24.5 105.0,24.6 105.7,23.1 106.4,23.6 107.1,24.1 107.8,25.1 108.5,25.0 109.2,23.8 109.9,23.2 110.6,24.1 111.3,24.6 112.0,26.5 112.7,26.1 113.4,25.9 114.1,26.1 114.1,28.9 113.4,29.2 112.7,29.3 112.0,28.6 111.3,30.5 110.6,30.7 109.9,31.8 109.2,30.9 108.5,30.3 107.8,29.8 107.1,30.6 106.4,31.7 105.7,31.6 105.0,30.4 104.3,30.4 103.6,33.1 102.9,33.9 102.2,33.2 101.5,31.8 100.8,31.1 100.1,31.2 99.4,31.3 98.7,32.9 98.0,31.5 97.3,28.9 96.6,29.4 95.9,29.0 95.2,29.8 94.5,29.2 93.8,29.3 93.1,31.2 92.4,32.2 91.7,32.3 91.0,31.4 90.3,29.7 89.6,31.1 88.9,32.2 88.2,31.8 87.5,31.8 86.8,30.0 86.1,29.1 85.4,29.3 84.7,29.1 84.0,29.2 83.3,28.8 82.6,31.3 81.9,32.4 81.2,32.6 80.5,32.4 79.8,30.2 79.1,30.2 78.4,32.4 77.7,32.3 77.0,31.9 76.3,31.2 75.6,30.7 74.9,32.1 74.2,32.2 73.5,31.1 72.8,31.2 72.1,30.0 71.4,31.1 70.7,31.9 70.0,32.1 69.3,31.7 68.6,28.7 67.9,28.8 67.2,29.0 66.5,29.1 65.8,29.2 65.1,29.5 64.4,31.6 63.7,32.8 63.0,33.8 62.3,32.7 61.6,28.9 60.9,32.9 60.2,32.9 59.5,32.6 58.8,32.8 58.1,30.3 57.4,29.1 56.7,29.2 56.0,29.4 55.3,28.8 54.6,28.9 53.9,30.8 53.2,31.8 52.5,31.7 51.8,31.2 51.1,30.8 50.4,30.4 49.7,31.5 49.0,31.8 48.3,31.0 47.6,31.1 46.9,30.8 46.2,33.0 45.5,32.3 44.8,32.6 44.1,31.5 43.4,30.6 42.7,32.5 42.0,31.5 41.3,31.8 40.6,30.9 39.9,28.8 39.2,29.3 38.5,29.0 37.8,29.4 37.1,29.0 36.4,29.7 35.7,30.8 35.0,31.7 34.3,31.7 33.6,32.2 32.9,28.6 32.2,31.3 31.5,32.8 30.8,31.9 30.1,31.1 29.4,30.2 28.7,28.7 28.0,29.1 27.3,29.2 26.6,29.3 25.9,28.7 25.2,30.9 24.5,31.3 23.8,31.7 23.1,32.7 22.4,31.4 21.7,30.4 21.0,31.6 20.3,31.6 19.6,31.0 18.9,29.8 18.2,31.0 17.5,32.5 16.8,33.1 16.1,32.7 15.4,30.9 14.7,30.2 14.0,31.5 13.3,31.5 12.6,32.5 11.9,32.0 11.2,28.6 10.5,29.5 9.8,29.3 9.1,29.4 8.4,28.9 7.7,29.9 7.0,31.4 6.3,33.5 5.6,32.8 4.9,32.8 4.2,28.9 3.5,31.0 2.8,31.3 2.1,32.1 1.4,31.7 0.7,29.5 0.0,28.8"/><rect x="0" y="26.8" width="114.7" height="1.6"/><polygon points="0.0,45.7 0.7,45.0 1.4,42.9 2.1,42.4 2.8,42.8 3.5,43.0 4.2,45.9 4.9,43.1 5.6,42.3 6.3,41.8 7.0,42.1 7.7,44.7 8.4,45.6 9.1,45.4 9.8,45.4 10.5,45.4 11.2,46.0 11.9,43.4 12.6,42.3 13.3,42.7 14.0,42.7 14.7,44.3 15.4,43.7 16.1,41.8 16.8,42.5 17.5,42.2 18.2,44.3 18.9,44.6 19.6,43.6 20.3,43.6 21.0,43.2 21.7,44.0 22.4,44.1 23.1,41.9 23.8,42.0 24.5,42.1 25.2,43.5 25.9,46.0 26.6,45.8 27.3,45.6 28.0,45.5 28.7,45.9 29.4,45.1 30.1,42.9 30.8,41.5 31.5,42.8 32.2,43.5 32.9,45.8 33.6,42.8 34.3,42.7 35.0,42.6 35.7,43.0 36.4,45.4 37.1,45.8 37.8,45.8 38.5,45.7 39.2,45.7 39.9,46.2 40.6,43.3 41.3,42.4 42.0,42.3 42.7,42.7 43.4,43.9 44.1,43.7 44.8,42.1 45.5,42.0 46.2,41.5 46.9,43.9 47.6,44.4 48.3,42.3 49.0,42.2 49.7,43.3 50.4,44.0 51.1,44.7 51.8,43.2 52.5,42.0 53.2,42.8 53.9,43.5 54.6,46.1 55.3,45.9 56.0,45.9 56.7,46.0 57.4,45.8 58.1,44.3 58.8,42.4 59.5,41.7 60.2,42.5 60.9,42.9 61.6,45.6 62.3,42.9 63.0,42.4 63.7,42.6 64.4,43.1 65.1,45.5 65.8,45.9 66.5,45.5 67.2,45.5 67.9,45.5 68.6,46.0 69.3,43.2 70.0,42.3 70.7,43.2 71.4,43.7 72.1,44.2 72.8,43.4 73.5,42.2 74.2,41.7 74.9,43.0 75.6,44.5 76.3,44.0 77.0,43.2 77.7,41.8 78.4,42.9 79.1,43.5 79.8,44.4 80.5,43.3 81.2,41.6 81.9,42.5 82.6,43.8 83.3,46.2 84.0,45.8 84.7,45.5 85.4,45.7 86.1,46.0 86.8,44.6 87.5,43.4 88.2,41.8 88.9,42.5 89.6,43.7 90.3,45.6 91.0,43.7 91.7,42.0 92.4,42.3 93.1,43.7 93.8,45.3 94.5,45.4 95.2,45.2 95.9,45.1 96.6,45.7 97.3,46.2 98.0,43.4 98.7,41.8 99.4,42.6 100.1,42.2 100.8,44.4 101.5,43.4 102.2,42.9 102.9,42.4 103.6,42.9 104.3,44.1 105.0,43.9 105.7,43.1 106.4,42.3 107.1,42.7 107.8,44.1 108.5,43.8 109.2,42.5 109.9,43.4 110.6,43.2 111.3,44.2 112.0,46.2 112.7,45.6 113.4,45.8 114.1,45.4 114.1,48.8 113.4,48.5 112.7,48.6 112.0,48.2 111.3,50.1 110.6,51.5 109.9,51.0 109.2,51.8 108.5,50.4 107.8,50.6 107.1,52.1 106.4,51.6 105.7,51.3 105.0,50.2 104.3,50.1 103.6,51.9 102.9,52.2 102.2,51.0 101.5,50.8 100.8,49.9 100.1,52.4 99.4,51.2 98.7,52.8 98.0,50.9 97.3,48.1 96.6,48.6 95.9,49.0 95.2,48.9 94.5,48.9 93.8,49.1 93.1,50.4 92.4,51.4 91.7,51.7 91.0,50.8 90.3,48.5 89.6,50.8 88.9,52.1 88.2,52.9 87.5,50.6 86.8,49.4 86.1,48.4 85.4,48.5 84.7,48.7 84.0,48.6 83.3,48.1 82.6,50.4 81.9,51.8 81.2,52.1 80.5,50.6 79.8,49.6 79.1,51.0 78.4,51.2 77.7,52.3 77.0,50.9 76.3,50.2 75.6,49.8 74.9,51.3 74.2,52.2 73.5,52.3 72.8,50.6 72.1,49.8 71.4,50.9 70.7,51.4 70.0,52.3 69.3,51.1 68.6,48.3 67.9,48.9 67.2,48.9 66.5,48.9 65.8,48.5 65.1,48.7 64.4,51.0 63.7,51.7 63.0,52.4 62.3,50.9 61.6,48.6 60.9,51.5 60.2,51.4 59.5,52.2 58.8,52.1 58.1,50.0 57.4,48.7 56.7,48.4 56.0,48.5 55.3,48.4 54.6,48.2 53.9,50.7 53.2,51.8 52.5,51.7 51.8,51.3 51.1,49.8 50.4,50.2 49.7,50.6 49.0,51.8 48.3,52.3 47.6,50.1 46.9,50.4 46.2,52.1 45.5,52.6 44.8,51.9 44.1,50.3 43.4,50.4 42.7,51.7 42.0,51.9 41.3,51.8 40.6,51.2 39.9,48.3 39.2,48.7 38.5,48.5 37.8,48.7 37.1,48.6 36.4,48.9 35.7,50.9 35.0,51.8 34.3,51.5 33.6,51.1 32.9,48.4 32.2,50.8 31.5,51.1 30.8,53.1 30.1,51.0 29.4,49.5 28.7,48.4 28.0,48.8 27.3,48.6 26.6,48.5 25.9,48.5 25.2,50.9 24.5,52.2 23.8,52.8 23.1,52.2 22.4,50.3 21.7,50.6 21.0,50.6 20.3,51.0 19.6,50.7 18.9,50.0 18.2,49.9 17.5,52.0 16.8,51.3 16.1,52.9 15.4,50.5 14.7,49.8 14.0,51.1 13.3,51.7 12.6,52.3 11.9,50.8 11.2,48.3 10.5,48.9 9.8,48.8 9.1,48.8 8.4,48.6 7.7,49.6 7.0,52.1 6.3,52.5 5.6,51.5 4.9,51.5 4.2,48.5 3.5,51.6 2.8,51.4 2.1,51.8 1.4,51.7 0.7,49.1 0.0,48.7"/><rect x="0" y="46.400000000000006" width="114.7" height="1.6"/></svg><div style="left:843.1px;top:154.0px;width:114.7px;height:57.0px;background:#95a5fb;"></div><div style="left:843.1px;top:171.0px;width:114.7px;height:40.0px;background:repeating-linear-gradient(90deg, rgba(0,0,40,0.06) 0px, rgba(0,0,40,0.06) 1px, transparent 1px, transparent 14.34px);background-position:0.00px 0"></div><div style="left:843.1px;top:171.0px;width:114.7px;height:40.0px;background:repeating-linear-gradient(90deg, rgba(0,0,40,0.13) 0px, rgba(0,0,40,0.13) 1px, transparent 1px, transparent 28.68px);background-position:0.00px 0"></div><div style="left:843.1px;top:171.0px;width:114.7px;height:1.0px;background:rgba(20,20,60,0.55);"></div><div style="left:843.1px;top:154.0px;width:1.0px;height:17.0px;background:rgba(0,0,30,0.45);"></div><div style="left:843.1px;top:171.0px;width:1.0px;height:40.0px;background:rgba(0,0,30,0.25);"></div><svg style="left:843.1px;top:154px" width="114.7" height="57" fill="#1a1b2a"><polygon points="0.0,26.2 0.7,25.2 1.4,23.1 2.1,22.6 2.8,23.6 3.5,23.2 4.2,26.3 4.9,22.7 5.6,22.5 6.3,23.1 7.0,22.5 7.7,25.0 8.4,25.8 9.1,25.8 9.8,25.7 10.5,26.1 11.2,26.4 11.9,24.4 12.6,22.6 13.3,23.6 14.0,23.9 14.7,24.8 15.4,24.1 16.1,22.3 16.8,22.5 17.5,22.9 18.2,24.5 18.9,25.0 19.6,23.6 20.3,23.9 21.0,23.1 21.7,24.7 22.4,24.4 23.1,23.7 23.8,22.8 24.5,23.1 25.2,23.4 25.9,26.6 26.6,25.9 27.3,26.0 28.0,26.1 28.7,26.0 29.4,25.3 30.1,23.5 30.8,23.1 31.5,21.9 32.2,22.9 32.9,26.2 33.6,23.0 34.3,22.5 35.0,22.6 35.7,24.0 36.4,25.4 37.1,26.1 37.8,26.1 38.5,25.8 39.2,26.1 39.9,26.4 40.6,23.8 41.3,22.3 42.0,22.8 42.7,23.2 43.4,24.3 44.1,23.8 44.8,22.8 45.5,21.4 46.2,22.4 46.9,23.5 47.6,24.7 48.3,23.2 49.0,23.0 49.7,23.2 50.4,24.1 51.1,24.7 51.8,23.4 52.5,23.7 53.2,22.5 53.9,24.2 54.6,26.6 55.3,26.2 56.0,26.3 56.7,25.9 57.4,26.1 58.1,24.6 58.8,23.5 59.5,21.6 60.2,21.9 60.9,22.6 61.6,26.1 62.3,23.7 63.0,22.9 63.7,22.4 64.4,22.6 65.1,25.9 65.8,26.1 66.5,25.6 67.2,25.7 67.9,26.1 68.6,26.4 69.3,24.0 70.0,23.7 70.7,22.7 71.4,23.9 72.1,25.1 72.8,23.7 73.5,23.3 74.2,22.7 74.9,23.1 75.6,24.8 76.3,24.6 77.0,23.3 77.7,22.1 78.4,23.2 79.1,24.6 79.8,24.1 80.5,23.3 81.2,22.3 81.9,23.2 82.6,24.2 83.3,26.6 84.0,26.1 84.7,25.8 85.4,26.2 86.1,26.4 86.8,24.9 87.5,22.6 88.2,22.9 88.9,22.0 89.6,24.0 90.3,25.6 91.0,23.5 91.7,22.6 92.4,23.4 93.1,23.3 93.8,26.1 94.5,26.0 95.2,25.9 95.9,26.0 96.6,26.1 97.3,26.4 98.0,24.0 98.7,22.2 99.4,22.3 100.1,23.6 100.8,24.4 101.5,24.0 102.2,22.8 102.9,22.9 103.6,22.4 104.3,24.3 105.0,24.3 105.7,23.0 106.4,23.6 107.1,23.5 107.8,24.4 108.5,24.2 109.2,23.0 109.9,23.2 110.6,22.7 111.3,23.9 112.0,26.6 112.7,26.2 113.4,26.2 114.1,26.0 114.1,29.0 113.4,28.8 112.7,28.9 112.0,28.6 111.3,31.0 110.6,32.3 109.9,31.8 109.2,32.0 108.5,31.2 107.8,30.5 107.1,31.9 106.4,31.4 105.7,32.4 105.0,30.5 104.3,30.7 103.6,33.2 102.9,32.5 102.2,32.2 101.5,31.2 100.8,31.0 100.1,31.4 99.4,32.4 98.7,33.4 98.0,30.9 97.3,28.7 96.6,29.1 95.9,29.2 95.2,29.2 94.5,29.3 93.8,28.9 93.1,31.8 92.4,32.0 91.7,32.2 91.0,31.9 90.3,29.7 89.6,30.8 88.9,33.1 88.2,32.6 87.5,32.8 86.8,30.2 86.1,28.7 85.4,29.1 84.7,29.3 84.0,29.0 83.3,28.4 82.6,30.6 81.9,31.6 81.2,33.2 80.5,32.0 79.8,30.9 79.1,30.7 78.4,32.0 77.7,33.5 77.0,32.1 76.3,30.6 75.6,30.4 74.9,32.3 74.2,32.2 73.5,31.7 72.8,31.1 72.1,30.3 71.4,31.1 70.7,32.1 70.0,31.2 69.3,30.9 68.6,28.7 67.9,29.0 67.2,29.4 66.5,29.3 65.8,29.1 65.1,29.4 64.4,32.4 63.7,33.1 63.0,32.0 62.3,31.4 61.6,29.1 60.9,32.4 60.2,33.7 59.5,33.0 58.8,31.6 58.1,30.8 57.4,28.9 56.7,29.3 56.0,28.8 55.3,29.0 54.6,28.5 53.9,31.2 53.2,33.0 52.5,31.2 51.8,31.7 51.1,30.4 50.4,31.0 49.7,32.1 49.0,31.7 48.3,31.9 47.6,30.3 46.9,31.9 46.2,32.5 45.5,33.7 44.8,32.4 44.1,31.7 43.4,30.9 42.7,31.4 42.0,31.9 41.3,32.4 40.6,31.8 39.9,28.7 39.2,29.1 38.5,29.4 37.8,29.0 37.1,29.0 36.4,29.6 35.7,30.7 35.0,32.4 34.3,33.1 33.6,31.6 32.9,28.8 32.2,32.7 31.5,33.2 30.8,31.7 30.1,31.3 29.4,29.6 28.7,29.2 28.0,29.2 27.3,29.3 26.6,29.0 25.9,28.7 25.2,31.4 24.5,32.2 23.8,32.3 23.1,31.6 22.4,30.6 21.7,30.7 21.0,31.8 20.3,31.4 19.6,31.5 18.9,30.2 18.2,30.9 17.5,32.0 16.8,33.2 16.1,32.4 15.4,31.2 14.7,30.7 14.0,31.4 13.3,31.4 12.6,33.0 11.9,31.0 11.2,28.9 10.5,29.2 9.8,29.4 9.1,29.6 8.4,29.2 7.7,30.1 7.0,32.2 6.3,32.4 5.6,33.2 4.9,32.9 4.2,28.8 3.5,31.6 2.8,31.4 2.1,32.0 1.4,32.2 0.7,29.8 0.0,29.0"/><rect x="0" y="26.8" width="114.7" height="1.6"/><polygon points="0.0,46.0 0.7,45.2 1.4,43.2 2.1,42.4 2.8,42.7 3.5,43.8 4.2,45.9 4.9,43.0 5.6,42.8 6.3,41.7 7.0,42.4 7.7,44.8 8.4,45.4 9.1,45.6 9.8,45.1 10.5,45.8 11.2,46.0 11.9,43.9 12.6,42.6 13.3,42.1 14.0,43.6 14.7,43.9 15.4,43.8 16.1,41.9 16.8,41.9 17.5,42.2 18.2,43.9 18.9,44.2 19.6,42.8 20.3,43.0 21.0,43.7 21.7,43.7 22.4,44.5 23.1,42.4 23.8,42.4 24.5,42.7 25.2,43.4 25.9,45.9 26.6,45.7 27.3,45.6 28.0,45.4 28.7,45.9 29.4,44.9 30.1,43.0 30.8,41.2 31.5,42.7 32.2,42.6 32.9,46.0 33.6,43.2 34.3,42.3 35.0,42.3 35.7,42.4 36.4,45.1 37.1,45.8 37.8,45.5 38.5,45.3 39.2,45.8 39.9,45.9 40.6,42.7 41.3,42.8 42.0,42.7 42.7,42.5 43.4,43.7 44.1,43.4 44.8,41.9 45.5,41.8 46.2,41.9 46.9,44.1 47.6,44.5 48.3,42.9 49.0,42.1 49.7,42.9 50.4,43.9 51.1,44.0 51.8,42.8 52.5,41.9 53.2,43.5 53.9,43.2 54.6,46.3 55.3,45.6 56.0,45.6 56.7,45.9 57.4,46.1 58.1,44.4 58.8,41.9 59.5,42.5 60.2,41.1 60.9,42.8 61.6,45.6 62.3,42.6 63.0,42.6 63.7,42.8 64.4,43.4 65.1,45.3 65.8,45.8 66.5,45.4 67.2,45.4 67.9,45.5 68.6,46.2 69.3,43.2 70.0,43.0 70.7,42.1 71.4,43.3 72.1,44.4 72.8,44.2 73.5,42.9 74.2,42.4 74.9,43.0 75.6,43.7 76.3,44.0 77.0,42.1 77.7,42.4 78.4,43.3 79.1,43.9 79.8,43.8 80.5,43.3 81.2,42.8 81.9,42.3 82.6,43.0 83.3,46.0 84.0,45.9 84.7,45.9 85.4,45.7 86.1,45.8 86.8,44.5 87.5,42.9 88.2,41.9 88.9,42.2 89.6,43.3 90.3,45.3 91.0,43.2 91.7,41.9 92.4,42.7 93.1,42.7 93.8,45.8 94.5,45.5 95.2,45.3 95.9,45.5 96.6,45.3 97.3,46.0 98.0,43.1 98.7,42.7 99.4,41.8 100.1,43.4 100.8,44.6 101.5,43.0 102.2,42.0 102.9,41.8 103.6,42.2 104.3,43.7 105.0,44.4 105.7,42.9 106.4,42.9 107.1,43.2 107.8,43.9 108.5,44.1 109.2,42.6 109.9,43.4 110.6,43.6 111.3,43.6 112.0,45.8 112.7,45.9 113.4,45.4 114.1,45.8 114.1,48.7 113.4,49.1 112.7,48.4 112.0,48.5 111.3,51.0 110.6,51.0 109.9,50.7 109.2,52.0 108.5,50.5 107.8,50.8 107.1,50.8 106.4,51.7 105.7,51.9 105.0,50.0 104.3,51.0 103.6,52.7 102.9,52.7 102.2,52.3 101.5,51.6 100.8,49.7 100.1,51.3 99.4,52.1 98.7,51.8 98.0,51.6 97.3,48.3 96.6,49.1 95.9,48.8 95.2,48.9 94.5,48.7 93.8,48.8 93.1,51.3 92.4,51.4 91.7,53.0 91.0,50.9 90.3,49.0 89.6,51.3 88.9,52.2 88.2,52.6 87.5,51.7 86.8,49.7 86.1,48.6 85.4,48.7 84.7,48.4 84.0,48.4 83.3,48.3 82.6,50.9 81.9,52.0 81.2,51.4 80.5,50.9 79.8,50.2 79.1,50.0 78.4,51.2 77.7,52.2 77.0,52.2 76.3,50.1 75.6,50.6 74.9,51.1 74.2,52.1 73.5,51.4 72.8,50.3 72.1,49.7 71.4,50.7 70.7,51.7 70.0,51.4 69.3,51.5 68.6,48.2 67.9,48.8 67.2,49.1 66.5,49.1 65.8,48.4 65.1,48.8 64.4,51.0 63.7,51.7 63.0,52.2 62.3,51.4 61.6,48.6 60.9,51.1 60.2,53.0 59.5,52.1 58.8,52.9 58.1,50.1 57.4,48.4 56.7,48.5 56.0,48.9 55.3,48.8 54.6,48.2 53.9,51.3 53.2,50.6 52.5,52.2 51.8,52.0 51.1,50.7 50.4,50.3 49.7,51.6 49.0,51.8 48.3,51.3 47.6,49.7 46.9,50.3 46.2,52.4 45.5,52.6 44.8,52.7 44.1,50.7 43.4,50.6 42.7,51.8 42.0,51.9 41.3,51.8 40.6,51.8 39.9,48.4 39.2,48.5 38.5,48.9 37.8,48.7 37.1,48.4 36.4,49.0 35.7,51.8 35.0,52.2 34.3,51.4 33.6,51.1 32.9,48.5 32.2,51.2 31.5,51.1 30.8,52.7 30.1,51.4 29.4,49.7 28.7,48.4 28.0,48.9 27.3,48.9 26.6,48.7 25.9,48.5 25.2,51.2 24.5,52.1 23.8,52.1 23.1,52.3 22.4,49.8 21.7,50.5 21.0,50.4 20.3,51.2 19.6,51.3 18.9,50.4 18.2,50.7 17.5,52.4 16.8,52.7 16.1,53.0 15.4,50.3 14.7,50.5 14.0,50.6 13.3,52.7 12.6,52.2 11.9,50.3 11.2,48.3 10.5,48.5 9.8,49.3 9.1,48.6 8.4,49.1 7.7,49.6 7.0,52.4 6.3,52.7 5.6,51.7 4.9,51.3 4.2,48.3 3.5,51.0 2.8,52.0 2.1,52.0 1.4,50.7 0.7,49.0 0.0,48.3"/><rect x="0" y="46.400000000000006" width="114.7" height="1.6"/></svg><div style="left:957.8px;top:154.0px;width:114.7px;height:57.0px;background:#95a5fb;"></div><div style="left:957.8px;top:171.0px;width:114.7px;height:40.0px;background:repeating-linear-gradient(90deg, rgba(0,0,40,0.06) 0px, rgba(0,0,40,0.06) 1px, transparent 1px, transparent 14.34px);background-position:0.00px 0"></div><div style="left:957.8px;top:171.0px;width:114.7px;height:40.0px;background:repeating-linear-gradient(90deg, rgba(0,0,40,0.13) 0px, rgba(0,0,40,0.13) 1px, transparent 1px, transparent 28.68px);background-position:0.00px 0"></div><div style="left:957.8px;top:171.0px;width:114.7px;height:1.0px;background:rgba(20,20,60,0.55);"></div><div style="left:957.8px;top:154.0px;width:1.0px;height:17.0px;background:rgba(0,0,30,0.45);"></div><div style="left:957.8px;top:171.0px;width:1.0px;height:40.0px;background:rgba(0,0,30,0.25);"></div><svg style="left:957.8px;top:154px" width="114.7" height="57"><rect x="0" y="26" width="114.7" height="1.3" fill="#20234a"/><rect x="0" y="46" width="114.7" height="1.3" fill="#20234a"/></svg><div style="left:1072.5px;top:154.0px;width:114.7px;height:57.0px;background:#95a5fb;"></div><div style="left:1072.5px;top:171.0px;width:114.7px;height:40.0px;background:repeating-linear-gradient(90deg, rgba(0,0,40,0.06) 0px, rgba(0,0,40,0.06) 1px, transparent 1px, transparent 14.34px);background-position:14.34px 0"></div><div style="left:1072.5px;top:171.0px;width:114.7px;height:40.0px;background:repeating-linear-gradient(90deg, rgba(0,0,40,0.13) 0px, rgba(0,0,40,0.13) 1px, transparent 1px, transparent 28.68px);background-position:28.68px 0"></div><div style="left:1072.5px;top:171.0px;width:114.7px;height:1.0px;background:rgba(20,20,60,0.55);"></div><div style="left:1072.5px;top:154.0px;width:1.0px;height:17.0px;background:rgba(0,0,30,0.45);"></div><div style="left:1072.5px;top:171.0px;width:1.0px;height:40.0px;background:rgba(0,0,30,0.25);"></div><svg style="left:1072.5px;top:154px" width="114.7" height="57" fill="#1a1b2a"><polygon points="0.0,26.2 0.7,25.5 1.4,23.6 2.1,23.1 2.8,23.2 3.5,23.8 4.2,26.5 4.9,23.5 5.6,22.9 6.3,22.8 7.0,23.2 7.7,25.0 8.4,26.2 9.1,25.6 9.8,25.7 10.5,25.7 11.2,26.2 11.9,24.3 12.6,22.7 13.3,23.0 14.0,23.1 14.7,24.5 15.4,24.0 16.1,23.4 16.8,22.6 17.5,22.3 18.2,23.8 18.9,25.2 19.6,24.2 20.3,23.7 21.0,23.9 21.7,24.3 22.4,24.7 23.1,23.7 23.8,22.2 24.5,23.3 25.2,23.7 25.9,26.7 26.6,26.2 27.3,26.2 28.0,26.0 28.7,26.2 29.4,25.1 30.1,22.9 30.8,23.2 31.5,22.2 32.2,22.7 32.9,26.3 33.6,24.0 34.3,23.5 35.0,22.6 35.7,23.9 36.4,25.4 37.1,26.2 37.8,26.0 38.5,25.8 39.2,26.0 39.9,26.5 40.6,23.8 41.3,23.4 42.0,23.1 42.7,22.4 43.4,24.2 44.1,23.7 44.8,22.8 45.5,22.3 46.2,21.9 46.9,23.9 47.6,24.6 48.3,23.6 49.0,23.2 49.7,23.5 50.4,24.6 51.1,24.8 51.8,23.9 52.5,22.9 53.2,23.2 53.9,24.0 54.6,26.4 55.3,26.3 56.0,25.9 56.7,26.3 57.4,26.3 58.1,25.3 58.8,22.7 59.5,22.3 60.2,21.8 60.9,23.3 61.6,26.0 62.3,23.5 63.0,22.0 63.7,23.0 64.4,23.7 65.1,25.6 65.8,26.1 66.5,26.1 67.2,25.9 67.9,25.8 68.6,26.6 69.3,24.4 70.0,23.0 70.7,22.6 71.4,24.0 72.1,24.5 72.8,23.6 73.5,23.3 74.2,22.4 74.9,22.5 75.6,24.9 76.3,24.3 77.0,22.9 77.7,22.1 78.4,23.4 79.1,24.7 79.8,24.9 80.5,22.8 81.2,22.6 81.9,23.6 82.6,23.7 83.3,26.3 84.0,26.3 84.7,26.2 85.4,26.2 86.1,26.3 86.8,25.0 87.5,22.5 88.2,23.1 88.9,23.0 89.6,23.8 90.3,25.8 91.0,23.0 91.7,23.4 92.4,23.5 93.1,23.8 93.8,26.2 94.5,26.1 95.2,25.7 95.9,25.8 96.6,25.6 97.3,26.5 98.0,23.7 98.7,22.7 99.4,23.5 100.1,22.9 100.8,24.5 101.5,24.1 102.2,22.0 102.9,22.2 103.6,23.6 104.3,24.1 105.0,24.7 105.7,23.3 106.4,22.8 107.1,23.7 107.8,25.0 108.5,24.3 109.2,22.9 109.9,22.9 110.6,23.8 111.3,24.8 112.0,26.5 112.7,26.1 113.4,25.9 114.1,26.0 114.1,29.0 113.4,29.4 112.7,29.1 112.0,28.6 111.3,30.1 110.6,31.7 109.9,32.1 109.2,31.7 108.5,31.2 107.8,29.9 107.1,31.5 106.4,32.8 105.7,31.6 105.0,30.7 104.3,30.9 103.6,31.6 102.9,32.9 102.2,32.5 101.5,31.4 100.8,30.6 100.1,32.6 99.4,32.1 98.7,32.0 98.0,31.5 97.3,28.6 96.6,29.5 95.9,29.4 95.2,29.6 94.5,28.9 93.8,29.1 93.1,31.5 92.4,31.3 91.7,31.8 91.0,32.4 90.3,29.2 89.6,31.1 88.9,32.1 88.2,32.1 87.5,32.9 86.8,29.9 86.1,28.8 85.4,29.0 84.7,28.9 84.0,29.0 83.3,28.8 82.6,31.2 81.9,31.8 81.2,31.9 80.5,32.8 79.8,29.9 79.1,30.8 78.4,31.3 77.7,33.7 77.0,32.8 76.3,30.4 75.6,29.9 74.9,32.5 74.2,32.6 73.5,31.8 72.8,31.9 72.1,30.8 71.4,31.2 70.7,32.4 70.0,31.6 69.3,30.5 68.6,28.6 67.9,29.3 67.2,29.1 66.5,29.0 65.8,29.1 65.1,29.8 64.4,31.4 63.7,31.6 63.0,32.5 62.3,31.6 61.6,29.1 60.9,32.3 60.2,32.9 59.5,33.1 58.8,32.5 58.1,29.8 57.4,28.9 56.7,28.8 56.0,29.1 55.3,28.9 54.6,28.8 53.9,30.7 53.2,32.3 52.5,32.4 51.8,31.4 51.1,30.7 50.4,30.9 49.7,31.4 49.0,31.9 48.3,31.4 47.6,30.2 46.9,31.3 46.2,32.6 45.5,33.2 44.8,32.1 44.1,31.3 43.4,30.7 42.7,32.7 42.0,32.0 41.3,32.1 40.6,31.3 39.9,28.6 39.2,29.3 38.5,29.6 37.8,29.3 37.1,29.0 36.4,29.6 35.7,31.2 35.0,32.1 34.3,31.8 33.6,31.2 32.9,29.1 32.2,32.5 31.5,33.4 30.8,31.7 30.1,32.3 29.4,29.8 28.7,29.1 28.0,29.0 27.3,28.9 26.6,28.8 25.9,28.5 25.2,31.5 24.5,31.3 23.8,33.2 23.1,31.2 22.4,30.6 21.7,30.8 21.0,31.1 20.3,31.0 19.6,31.1 18.9,29.9 18.2,31.1 17.5,33.2 16.8,32.4 16.1,31.6 15.4,31.1 14.7,30.3 14.0,31.5 13.3,31.7 12.6,32.8 11.9,30.9 11.2,29.1 10.5,29.6 9.8,29.4 9.1,29.5 8.4,29.0 7.7,30.1 7.0,32.2 6.3,32.3 5.6,31.7 4.9,31.7 4.2,28.7 3.5,31.1 2.8,31.6 2.1,31.6 1.4,32.0 0.7,29.6 0.0,29.1"/><rect x="0" y="26.8" width="114.7" height="1.6"/><polygon points="0.0,45.7 0.7,44.9 1.4,42.4 2.1,42.5 2.8,42.5 3.5,42.5 4.2,45.8 4.9,42.7 5.6,42.4 6.3,41.5 7.0,42.8 7.7,45.2 8.4,45.6 9.1,45.4 9.8,45.5 10.5,45.6 11.2,45.8 11.9,43.9 12.6,43.1 13.3,42.9 14.0,43.1 14.7,44.4 15.4,43.6 16.1,41.7 16.8,41.9 17.5,42.5 18.2,43.3 18.9,44.8 19.6,42.7 20.3,42.9 21.0,43.7 21.7,44.5 22.4,43.6 23.1,42.5 23.8,42.2 24.5,41.6 25.2,43.5 25.9,46.2 26.6,45.5 27.3,45.8 28.0,45.9 28.7,45.7 29.4,44.6 30.1,43.1 30.8,42.7 31.5,41.4 32.2,42.9 32.9,45.9 33.6,43.5 34.3,43.2 35.0,42.3 35.7,42.6 36.4,45.4 37.1,45.9 37.8,45.3 38.5,45.7 39.2,45.4 39.9,46.1 40.6,43.6 41.3,41.8 42.0,42.1 42.7,42.6 43.4,43.8 44.1,43.8 44.8,41.3 45.5,41.3 46.2,42.3 46.9,43.3 47.6,43.7 48.3,43.0 49.0,42.5 49.7,43.4 50.4,44.2 51.1,44.7 51.8,43.6 52.5,42.5 53.2,42.7 53.9,43.9 54.6,46.0 55.3,46.0 56.0,45.5 56.7,45.9 57.4,45.9 58.1,44.7 58.8,42.0 59.5,42.4 60.2,41.6 60.9,42.1 61.6,45.3 62.3,42.2 63.0,42.2 63.7,42.6 64.4,42.7 65.1,44.9 65.8,45.6 66.5,45.2 67.2,45.5 67.9,45.4 68.6,45.9 69.3,43.1 70.0,43.0 70.7,43.0 71.4,43.6 72.1,44.8 72.8,43.6 73.5,42.6 74.2,42.7 74.9,42.9 75.6,43.9 76.3,44.1 77.0,42.4 77.7,41.6 78.4,43.2 79.1,43.9 79.8,43.7 80.5,42.2 81.2,42.7 81.9,42.7 82.6,43.3 83.3,46.1 84.0,45.5 84.7,45.9 85.4,45.8 86.1,45.7 86.8,44.3 87.5,42.6 88.2,42.6 88.9,42.1 89.6,42.9 90.3,45.2 91.0,43.3 91.7,43.1 92.4,42.9 93.1,43.4 93.8,45.6 94.5,45.7 95.2,45.5 95.9,45.3 96.6,45.6 97.3,46.2 98.0,43.3 98.7,42.6 99.4,43.0 100.1,42.3 100.8,44.6 101.5,43.7 102.2,42.1 102.9,42.5 103.6,41.7 104.3,43.4 105.0,43.9 105.7,42.4 106.4,43.5 107.1,43.7 107.8,44.0 108.5,44.4 109.2,43.6 109.9,42.6 110.6,42.5 111.3,44.0 112.0,46.0 112.7,45.9 113.4,45.4 114.1,45.5 114.1,49.0 113.4,49.1 112.7,48.6 112.0,48.3 111.3,50.7 110.6,52.1 109.9,51.4 109.2,50.3 108.5,49.6 107.8,50.5 107.1,50.2 106.4,51.1 105.7,51.7 105.0,50.1 104.3,51.0 103.6,52.1 102.9,51.6 102.2,52.1 101.5,50.5 100.8,49.7 100.1,51.8 99.4,51.2 98.7,51.9 98.0,51.4 97.3,48.3 96.6,48.7 95.9,48.9 95.2,49.0 94.5,48.6 93.8,48.9 93.1,51.4 92.4,51.4 91.7,51.7 91.0,51.0 90.3,49.2 89.6,51.7 88.9,52.7 88.2,51.4 87.5,52.2 86.8,50.2 86.1,48.5 85.4,48.6 84.7,48.6 84.0,48.7 83.3,48.3 82.6,51.2 81.9,51.4 81.2,51.0 80.5,52.0 79.8,50.4 79.1,50.2 78.4,51.0 77.7,52.1 77.0,52.4 76.3,50.2 75.6,50.2 74.9,51.8 74.2,51.1 73.5,51.4 72.8,50.9 72.1,49.8 71.4,51.2 70.7,50.8 70.0,51.6 69.3,50.8 68.6,48.4 67.9,48.9 67.2,49.0 66.5,49.3 65.8,48.8 65.1,49.5 64.4,51.9 63.7,51.6 63.0,52.4 62.3,52.6 61.6,48.8 60.9,52.2 60.2,53.0 59.5,51.8 58.8,52.6 58.1,49.6 57.4,48.4 56.7,48.5 56.0,49.0 55.3,48.5 54.6,48.3 53.9,50.7 53.2,52.0 52.5,51.7 51.8,50.7 51.1,49.6 50.4,50.1 49.7,51.0 49.0,51.7 48.3,50.8 47.6,50.5 46.9,51.1 46.2,52.4 45.5,53.5 44.8,52.3 44.1,50.6 43.4,50.7 42.7,51.2 42.0,52.5 41.3,52.3 40.6,50.6 39.9,48.1 39.2,48.7 38.5,48.5 37.8,49.1 37.1,48.4 36.4,49.0 35.7,51.9 35.0,51.5 34.3,51.3 33.6,50.5 32.9,48.5 32.2,51.2 31.5,52.8 30.8,51.6 30.1,50.8 29.4,49.8 28.7,48.6 28.0,48.6 27.3,48.6 26.6,48.7 25.9,48.1 25.2,51.1 24.5,52.8 23.8,52.5 23.1,52.0 22.4,50.6 21.7,49.7 21.0,50.8 20.3,51.8 19.6,51.8 18.9,49.4 18.2,51.4 17.5,51.2 16.8,52.2 16.1,52.2 15.4,50.5 14.7,49.9 14.0,51.2 13.3,51.0 12.6,50.8 11.9,50.0 11.2,48.6 10.5,48.8 9.8,49.1 9.1,48.7 8.4,48.7 7.7,49.4 7.0,51.0 6.3,53.0 5.6,51.8 4.9,51.5 4.2,48.5 3.5,51.5 2.8,52.3 2.1,51.3 1.4,51.9 0.7,49.4 0.0,48.6"/><rect x="0" y="46.400000000000006" width="114.7" height="1.6"/></svg><div style="left:1215.9px;top:154.0px;width:93.1px;height:57.0px;background:#95a5fb;"></div><div style="left:1215.9px;top:171.0px;width:93.1px;height:40.0px;background:repeating-linear-gradient(90deg, rgba(0,0,40,0.06) 0px, rgba(0,0,40,0.06) 1px, transparent 1px, transparent 14.34px);background-position:14.34px 0"></div><div style="left:1215.9px;top:171.0px;width:93.1px;height:40.0px;background:repeating-linear-gradient(90deg, rgba(0,0,40,0.13) 0px, rgba(0,0,40,0.13) 1px, transparent 1px, transparent 28.68px);background-position:28.68px 0"></div><div style="left:1215.9px;top:171.0px;width:93.1px;height:1.0px;background:rgba(20,20,60,0.55);"></div><div style="left:1215.9px;top:154.0px;width:1.0px;height:17.0px;background:rgba(0,0,30,0.45);"></div><div style="left:1215.9px;top:171.0px;width:1.0px;height:40.0px;background:rgba(0,0,30,0.25);"></div><svg style="left:1215.9px;top:154px" width="93.1" height="57" fill="#1a1b2a"><polygon points="0.0,26.2 0.7,25.8 1.4,23.8 2.1,23.0 2.8,22.1 3.5,22.9 4.2,26.4 4.9,23.7 5.6,22.2 6.3,21.5 7.0,23.0 7.7,25.6 8.4,25.9 9.1,25.7 9.8,25.7 10.5,26.1 11.2,26.4 11.9,23.5 12.6,23.7 13.3,23.1 14.0,23.4 14.7,24.8 15.4,24.3 16.1,22.8 16.8,21.8 17.5,23.6 18.2,23.7 18.9,24.7 19.6,24.0 20.3,23.1 21.0,23.4 21.7,24.5 22.4,24.7 23.1,23.2 23.8,22.1 24.5,22.7 25.2,23.6 25.9,26.4 26.6,26.0 27.3,26.0 28.0,25.8 28.7,26.3 29.4,25.5 30.1,23.8 30.8,22.8 31.5,22.0 32.2,23.9 32.9,26.5 33.6,23.6 34.3,23.2 35.0,23.4 35.7,23.6 36.4,25.3 37.1,26.3 37.8,25.9 38.5,25.9 39.2,26.1 39.9,26.4 40.6,23.5 41.3,23.0 42.0,22.6 42.7,23.0 43.4,24.5 44.1,24.0 44.8,23.1 45.5,21.8 46.2,23.2 46.9,24.0 47.6,24.3 48.3,23.0 49.0,22.7 49.7,23.6 50.4,24.7 51.1,24.5 51.8,23.9 52.5,22.9 53.2,23.0 53.9,24.5 54.6,26.6 55.3,26.2 56.0,25.9 56.7,26.0 57.4,26.4 58.1,24.8 58.8,23.4 59.5,22.8 60.2,21.4 60.9,22.5 61.6,26.1 62.3,22.9 63.0,22.1 63.7,22.5 64.4,22.8 65.1,25.6 65.8,25.9 66.5,25.8 67.2,26.0 67.9,26.1 68.6,26.4 69.3,24.0 70.0,23.8 70.7,23.0 71.4,23.3 72.1,25.2 72.8,24.1 73.5,23.6 74.2,23.4 74.9,23.3 75.6,24.4 76.3,23.8 77.0,22.9 77.7,22.8 78.4,23.1 79.1,24.3 79.8,24.2 80.5,22.4 81.2,23.1 81.9,23.6 82.6,24.4 83.3,26.3 84.0,26.1 84.7,26.0 85.4,26.0 86.1,26.4 86.8,25.4 87.5,22.7 88.2,22.2 88.9,23.4 89.6,24.0 90.3,25.9 91.0,23.3 91.7,22.5 92.4,23.5 92.4,32.1 91.7,33.1 91.0,32.2 90.3,29.4 89.6,30.8 88.9,31.7 88.2,32.3 87.5,32.8 86.8,29.8 86.1,28.9 85.4,29.0 84.7,29.3 84.0,29.2 83.3,28.9 82.6,30.8 81.9,31.6 81.2,31.7 80.5,32.5 79.8,31.2 79.1,30.5 78.4,31.8 77.7,32.2 77.0,32.3 76.3,30.9 75.6,31.0 74.9,31.4 74.2,31.8 73.5,31.2 72.8,30.8 72.1,30.0 71.4,32.0 70.7,32.5 70.0,31.6 69.3,31.0 68.6,28.8 67.9,29.1 67.2,29.2 66.5,29.2 65.8,29.1 65.1,29.3 64.4,32.2 63.7,32.4 63.0,32.8 62.3,31.6 61.6,29.1 60.9,32.7 60.2,33.5 59.5,31.7 58.8,32.2 58.1,30.3 57.4,28.7 56.7,29.0 56.0,29.4 55.3,28.9 54.6,28.6 53.9,30.5 53.2,31.7 52.5,31.9 51.8,31.2 51.1,30.7 50.4,30.2 49.7,31.6 49.0,32.4 48.3,32.4 47.6,30.9 46.9,30.6 46.2,31.5 45.5,32.7 44.8,31.6 44.1,31.1 43.4,30.4 42.7,32.4 42.0,32.0 41.3,32.1 40.6,32.0 39.9,28.9 39.2,29.2 38.5,29.4 37.8,29.1 37.1,28.9 36.4,30.1 35.7,31.1 35.0,32.1 34.3,32.2 33.6,31.9 32.9,28.8 32.2,31.1 31.5,33.2 30.8,32.1 30.1,31.4 29.4,29.5 28.7,28.9 28.0,29.4 27.3,29.3 26.6,29.1 25.9,28.8 25.2,31.4 24.5,32.2 23.8,33.1 23.1,31.8 22.4,30.2 21.7,30.5 21.0,32.1 20.3,32.2 19.6,30.9 18.9,30.7 18.2,31.3 17.5,32.0 16.8,33.3 16.1,32.7 15.4,30.9 14.7,30.3 14.0,32.0 13.3,32.3 12.6,31.2 11.9,31.3 11.2,28.8 10.5,29.0 9.8,29.7 9.1,29.5 8.4,29.3 7.7,29.7 7.0,31.6 6.3,33.8 5.6,33.4 4.9,31.8 4.2,28.6 3.5,32.7 2.8,32.9 2.1,32.3 1.4,31.0 0.7,29.4 0.0,28.9"/><rect x="0" y="26.8" width="93.1" height="1.6"/><polygon points="0.0,45.8 0.7,45.0 1.4,42.9 2.1,42.8 2.8,41.7 3.5,43.1 4.2,46.1 4.9,42.6 5.6,42.2 6.3,41.1 7.0,43.3 7.7,44.5 8.4,45.5 9.1,45.4 9.8,45.3 10.5,45.5 11.2,45.8 11.9,44.0 12.6,43.2 13.3,43.0 14.0,43.0 14.7,44.3 15.4,43.7 16.1,42.1 16.8,42.7 17.5,42.9 18.2,43.4 18.9,44.4 19.6,43.1 20.3,43.4 21.0,43.4 21.7,44.2 22.4,44.3 23.1,43.1 23.8,42.4 24.5,42.3 25.2,43.2 25.9,46.1 26.6,45.6 27.3,45.8 28.0,45.8 28.7,45.9 29.4,45.1 30.1,42.2 30.8,42.3 31.5,42.6 32.2,43.2 32.9,45.7 33.6,43.7 34.3,42.1 35.0,43.0 35.7,42.5 36.4,44.9 37.1,45.7 37.8,45.8 38.5,45.3 39.2,45.6 39.9,46.1 40.6,43.1 41.3,41.9 42.0,42.2 42.7,42.1 43.4,44.1 44.1,43.9 44.8,42.5 45.5,42.2 46.2,42.3 46.9,43.2 47.6,44.1 48.3,42.4 49.0,43.4 49.7,43.4 50.4,44.1 51.1,44.1 51.8,43.5 52.5,42.5 53.2,43.2 53.9,43.7 54.6,46.0 55.3,45.6 56.0,45.6 56.7,45.7 57.4,45.8 58.1,44.5 58.8,42.5 59.5,41.9 60.2,41.4 60.9,42.6 61.6,45.3 62.3,42.3 63.0,42.6 63.7,42.6 64.4,43.0 65.1,45.2 65.8,45.8 66.5,45.6 67.2,45.5 67.9,45.6 68.6,46.0 69.3,43.7 70.0,42.2 70.7,42.8 71.4,43.4 72.1,44.1 72.8,43.2 73.5,42.1 74.2,42.6 74.9,42.6 75.6,43.7 76.3,44.1 77.0,42.7 77.7,41.8 78.4,43.0 79.1,44.2 79.8,44.0 80.5,42.7 81.2,42.6 81.9,42.8 82.6,44.0 83.3,46.2 84.0,45.5 84.7,45.6 85.4,45.5 86.1,45.8 86.8,45.0 87.5,43.4 88.2,42.0 88.9,42.7 89.6,42.5 90.3,45.4 91.0,43.0 91.7,42.6 92.4,42.8 92.4,51.8 91.7,51.1 91.0,51.2 90.3,48.9 89.6,52.2 88.9,51.2 88.2,52.6 87.5,51.1 86.8,49.4 86.1,48.7 85.4,49.1 84.7,48.8 84.0,49.0 83.3,48.2 82.6,50.3 81.9,51.1 81.2,51.4 80.5,51.7 79.8,50.4 79.1,50.2 78.4,51.4 77.7,52.3 77.0,51.2 76.3,50.5 75.6,50.4 74.9,51.9 74.2,52.2 73.5,52.6 72.8,50.8 72.1,50.3 71.4,51.1 70.7,51.6 70.0,52.0 69.3,50.5 68.6,48.3 67.9,48.8 67.2,48.9 66.5,48.7 65.8,48.6 65.1,49.0 64.4,51.8 63.7,51.9 63.0,51.2 62.3,52.5 61.6,48.9 60.9,52.0 60.2,52.8 59.5,51.9 58.8,51.2 58.1,50.1 57.4,48.5 56.7,48.6 56.0,48.9 55.3,48.7 54.6,48.4 53.9,50.5 53.2,50.9 52.5,51.3 51.8,50.4 51.1,50.2 50.4,49.8 49.7,51.4 49.0,51.1 48.3,51.7 47.6,49.9 46.9,51.4 46.2,51.7 45.5,51.6 44.8,51.5 44.1,50.4 43.4,49.9 42.7,51.8 42.0,51.9 41.3,52.6 40.6,50.9 39.9,48.2 39.2,48.7 38.5,49.3 37.8,48.6 37.1,48.8 36.4,49.2 35.7,51.4 35.0,51.1 34.3,51.9 33.6,50.3 32.9,48.7 32.2,51.5 31.5,51.3 30.8,52.1 30.1,51.7 29.4,49.1 28.7,48.3 28.0,48.6 27.3,48.5 26.6,48.6 25.9,48.2 25.2,50.9 24.5,51.4 23.8,52.2 23.1,51.3 22.4,50.0 21.7,50.2 21.0,50.9 20.3,50.6 19.6,51.6 18.9,49.8 18.2,50.6 17.5,51.5 16.8,51.4 16.1,52.2 15.4,50.3 14.7,50.3 14.0,50.9 13.3,50.9 12.6,50.8 11.9,50.6 11.2,48.7 10.5,49.0 9.8,49.1 9.1,49.0 8.4,49.0 7.7,49.7 7.0,51.3 6.3,52.9 5.6,52.0 4.9,51.4 4.2,48.4 3.5,51.4 2.8,52.8 2.1,51.3 1.4,50.9 0.7,49.6 0.0,48.4"/><rect x="0" y="46.400000000000006" width="93.1" height="1.6"/></svg><div style="left:10.0px;top:215.3px;width:488.9px;height:2.5px;background:#a6d4fa;"></div><div style="left:40.1px;top:224.0px;width:1147.2px;height:2.0px;background:#a6d4fa;"></div><div style="left:1215.9px;top:219.2px;width:93.1px;height:3.0px;background:#a6d4fa;"></div><div style="left:1215.9px;top:224.0px;width:93.1px;height:2.0px;background:#a6d4fa;"></div><div style="left:1187.3px;top:227.3px;width:121.7px;height:2.5px;background:#a6d4fa;"></div><div style="left:269.5px;top:234.0px;width:688.3px;height:57.0px;background:#5cf8e2;"></div><div style="left:269.5px;top:251.0px;width:688.3px;height:40.0px;background:repeating-linear-gradient(90deg, rgba(0,0,40,0.06) 0px, rgba(0,0,40,0.06) 1px, transparent 1px, transparent 14.34px);background-position:0.00px 0"></div><div style="left:269.5px;top:251.0px;width:688.3px;height:40.0px;background:repeating-linear-gradient(90deg, rgba(0,0,40,0.13) 0px, rgba(0,0,40,0.13) 1px, transparent 1px, transparent 28.68px);background-position:0.00px 0"></div><div style="left:269.5px;top:251.0px;width:688.3px;height:1.0px;background:rgba(20,20,60,0.55);"></div><div style="left:269.5px;top:234.0px;width:1.0px;height:17.0px;background:rgba(0,0,30,0.45);"></div><div style="left:269.5px;top:251.0px;width:1.0px;height:40.0px;background:rgba(0,0,30,0.25);"></div><svg style="left:269.5px;top:234px" width="688.3" height="57" fill="#0d3a34"><rect x="3.5" y="22.8" width="5.0" height="2.3"/><rect x="44.0" y="22.8" width="2.5" height="2.3"/><rect x="101.3" y="22.8" width="2.5" height="2.3"/><rect x="118.2" y="22.8" width="5.0" height="2.3"/><rect x="158.7" y="22.8" width="2.5" height="2.3"/><rect x="216.0" y="22.8" width="2.5" height="2.3"/><rect x="232.9" y="22.8" width="5.0" height="2.3"/><rect x="273.4" y="22.8" width="2.5" height="2.3"/><rect x="330.7" y="22.8" width="2.5" height="2.3"/><rect x="347.7" y="22.8" width="5.0" height="2.3"/><rect x="388.2" y="22.8" width="2.5" height="2.3"/><rect x="445.5" y="22.8" width="2.5" height="2.3"/><rect x="462.4" y="22.8" width="5.0" height="2.3"/><rect x="502.9" y="22.8" width="2.5" height="2.3"/><rect x="560.2" y="22.8" width="2.5" height="2.3"/><rect x="577.1" y="22.8" width="5.0" height="2.3"/><rect x="617.6" y="22.8" width="2.5" height="2.3"/><rect x="674.9" y="22.8" width="2.5" height="2.3"/><rect x="24.5" y="42.8" width="6.5" height="2.3"/><rect x="53.2" y="42.8" width="6.5" height="2.3"/><rect x="81.9" y="42.8" width="6.5" height="2.3"/><rect x="110.5" y="42.8" width="6.5" height="2.3"/><rect x="139.2" y="42.8" width="6.5" height="2.3"/><rect x="167.9" y="42.8" width="6.5" height="2.3"/><rect x="196.6" y="42.8" width="6.5" height="2.3"/><rect x="225.3" y="42.8" width="6.5" height="2.3"/><rect x="253.9" y="42.8" width="6.5" height="2.3"/><rect x="282.6" y="42.8" width="6.5" height="2.3"/><rect x="311.3" y="42.8" width="6.5" height="2.3"/><rect x="340.0" y="42.8" width="6.5" height="2.3"/><rect x="368.7" y="42.8" width="6.5" height="2.3"/><rect x="397.3" y="42.8" width="6.5" height="2.3"/><rect x="426.0" y="42.8" width="6.5" height="2.3"/><rect x="454.7" y="42.8" width="6.5" height="2.3"/><rect x="483.4" y="42.8" width="6.5" height="2.3"/><rect x="512.1" y="42.8" width="6.5" height="2.3"/><rect x="540.7" y="42.8" width="6.5" height="2.3"/><rect x="569.4" y="42.8" width="6.5" height="2.3"/><rect x="598.1" y="42.8" width="6.5" height="2.3"/><rect x="626.8" y="42.8" width="6.5" height="2.3"/><rect x="655.5" y="42.8" width="6.5" height="2.3"/><rect x="684.1" y="42.8" width="4.2" height="2.3"/><rect x="13.8" y="49.4" width="6.5" height="2.3"/><rect x="32.2" y="49.4" width="6.5" height="2.3"/><rect x="71.2" y="49.4" width="6.5" height="2.3"/><rect x="89.6" y="49.4" width="6.5" height="2.3"/><rect x="128.5" y="49.4" width="6.5" height="2.3"/><rect x="146.9" y="49.4" width="6.5" height="2.3"/><rect x="185.9" y="49.4" width="6.5" height="2.3"/><rect x="204.3" y="49.4" width="6.5" height="2.3"/><rect x="243.2" y="49.4" width="6.5" height="2.3"/><rect x="261.6" y="49.4" width="6.5" height="2.3"/><rect x="300.6" y="49.4" width="6.5" height="2.3"/><rect x="319.0" y="49.4" width="6.5" height="2.3"/><rect x="358.0" y="49.4" width="6.5" height="2.3"/><rect x="376.4" y="49.4" width="6.5" height="2.3"/><rect x="415.3" y="49.4" width="6.5" height="2.3"/><rect x="433.7" y="49.4" width="6.5" height="2.3"/><rect x="472.7" y="49.4" width="6.5" height="2.3"/><rect x="491.1" y="49.4" width="6.5" height="2.3"/><rect x="530.0" y="49.4" width="6.5" height="2.3"/><rect x="548.4" y="49.4" width="6.5" height="2.3"/><rect x="587.4" y="49.4" width="6.5" height="2.3"/><rect x="605.8" y="49.4" width="6.5" height="2.3"/><rect x="644.8" y="49.4" width="6.5" height="2.3"/><rect x="663.2" y="49.4" width="6.5" height="2.3"/></svg><div style="left:1187.3px;top:234.0px;width:121.7px;height:57.0px;background:#5cf8e2;"></div><div style="left:1187.3px;top:251.0px;width:121.7px;height:40.0px;background:repeating-linear-gradient(90deg, rgba(0,0,40,0.06) 0px, rgba(0,0,40,0.06) 1px, transparent 1px, transparent 14.34px);background-position:14.34px 0"></div><div style="left:1187.3px;top:251.0px;width:121.7px;height:40.0px;background:repeating-linear-gradient(90deg, rgba(0,0,40,0.13) 0px, rgba(0,0,40,0.13) 1px, transparent 1px, transparent 28.68px);background-position:28.68px 0"></div><div style="left:1187.3px;top:251.0px;width:121.7px;height:1.0px;background:rgba(20,20,60,0.55);"></div><div style="left:1187.3px;top:234.0px;width:1.0px;height:17.0px;background:rgba(0,0,30,0.45);"></div><div style="left:1187.3px;top:251.0px;width:1.0px;height:40.0px;background:rgba(0,0,30,0.25);"></div><svg style="left:1187.3px;top:234px" width="122" height="57" fill="#0d3a34"><rect x="43" y="23.2" width="2.5" height="2.3"/><rect x="100.8" y="23.2" width="2.5" height="2.3"/><rect x="113.5" y="23.2" width="7" height="2.3"/><rect x="50.7" y="42.8" width="6.5" height="2.3"/><rect x="79" y="42.8" width="6.5" height="2.3"/><rect x="108.5" y="42.8" width="6.5" height="2.3"/><rect x="29.3" y="49.2" width="6.5" height="2.3"/><rect x="68.2" y="49.2" width="6.5" height="2.3"/><rect x="86" y="49.2" width="6.5" height="2.3"/></svg><div style="left:470.3px;top:292.0px;width:28.7px;height:18.5px;background:#5cf8e2;"></div><div style="left:470.3px;top:292.0px;width:1.0px;height:18.5px;background:rgba(0,0,0,0.3);"></div><div style="left:699.7px;top:292.0px;width:28.7px;height:18.5px;background:#5cf8e2;"></div><div style="left:699.7px;top:292.0px;width:1.0px;height:18.5px;background:rgba(0,0,0,0.3);"></div><div style="left:929.1px;top:292.0px;width:28.7px;height:18.5px;background:#5cf8e2;"></div><div style="left:929.1px;top:292.0px;width:1.0px;height:18.5px;background:rgba(0,0,0,0.3);"></div><div style="left:498.9px;top:313.0px;width:229.4px;height:38.0px;background:#f1f6a8;"></div><div style="left:498.9px;top:330.0px;width:229.4px;height:21.0px;background:repeating-linear-gradient(90deg, rgba(0,0,40,0.06) 0px, rgba(0,0,40,0.06) 1px, transparent 1px, transparent 14.34px);background-position:0.00px 0"></div><div style="left:498.9px;top:330.0px;width:229.4px;height:21.0px;background:repeating-linear-gradient(90deg, rgba(0,0,40,0.13) 0px, rgba(0,0,40,0.13) 1px, transparent 1px, transparent 28.68px);background-position:0.00px 0"></div><div style="left:498.9px;top:330.0px;width:229.4px;height:1.0px;background:rgba(20,20,60,0.55);"></div><div style="left:498.9px;top:313.0px;width:1.0px;height:17.0px;background:rgba(0,0,30,0.45);"></div><div style="left:498.9px;top:330.0px;width:1.0px;height:21.0px;background:rgba(0,0,30,0.25);"></div><div style="left:499.9px;top:337.0px;width:228.4px;height:7.5px;background:#25261c;"></div><div style="left:269.5px;top:353.0px;width:86.0px;height:57.0px;background:#fcec77;"></div><div style="left:269.5px;top:370.0px;width:86.0px;height:40.0px;background:repeating-linear-gradient(90deg, rgba(0,0,40,0.06) 0px, rgba(0,0,40,0.06) 1px, transparent 1px, transparent 14.34px);background-position:0.00px 0"></div><div style="left:269.5px;top:370.0px;width:86.0px;height:40.0px;background:repeating-linear-gradient(90deg, rgba(0,0,40,0.13) 0px, rgba(0,0,40,0.13) 1px, transparent 1px, transparent 28.68px);background-position:0.00px 0"></div><div style="left:269.5px;top:370.0px;width:86.0px;height:1.0px;background:rgba(20,20,60,0.55);"></div><div style="left:269.5px;top:353.0px;width:1.0px;height:17.0px;background:rgba(0,0,30,0.45);"></div><div style="left:269.5px;top:370.0px;width:1.0px;height:40.0px;background:rgba(0,0,30,0.25);"></div><svg style="left:269.5px;top:353px" width="90" height="57" fill="#5a4c10"><rect x="0.7" y="33" width="5.5" height="2.2"/><rect x="43" y="33" width="2.5" height="2.2"/><rect x="21.3" y="42.5" width="6.5" height="2.2"/><rect x="50.7" y="42.5" width="6" height="2.2"/><rect x="78.5" y="42.5" width="6" height="2.2"/><rect x="10.4" y="46" width="6.5" height="2.2"/><rect x="28.4" y="46" width="7" height="2.2"/><rect x="67.5" y="46" width="6.5" height="2.2"/></svg><div style="left:498.9px;top:353.0px;width:114.7px;height:57.0px;background:#fcec77;"></div><div style="left:498.9px;top:370.0px;width:114.7px;height:40.0px;background:repeating-linear-gradient(90deg, rgba(0,0,40,0.06) 0px, rgba(0,0,40,0.06) 1px, transparent 1px, transparent 14.34px);background-position:0.00px 0"></div><div style="left:498.9px;top:370.0px;width:114.7px;height:40.0px;background:repeating-linear-gradient(90deg, rgba(0,0,40,0.13) 0px, rgba(0,0,40,0.13) 1px, transparent 1px, transparent 28.68px);background-position:0.00px 0"></div><div style="left:498.9px;top:370.0px;width:114.7px;height:1.0px;background:rgba(20,20,60,0.55);"></div><div style="left:498.9px;top:353.0px;width:1.0px;height:17.0px;background:rgba(0,0,30,0.45);"></div><div style="left:498.9px;top:370.0px;width:1.0px;height:40.0px;background:rgba(0,0,30,0.25);"></div><div style="left:499.9px;top:380.5px;width:57.4px;height:1.5px;background:#3e3812;"></div><div style="left:499.9px;top:385.0px;width:57.4px;height:1.5px;background:#3e3812;"></div><div style="left:499.9px;top:388.7px;width:57.4px;height:1.5px;background:#3e3812;"></div><div style="left:556.3px;top:382.8px;width:28.7px;height:1.5px;background:#3e3812;"></div><div style="left:585.0px;top:379.6px;width:28.7px;height:1.5px;background:#3e3812;"></div><div style="left:728.4px;top:414.3px;width:57.4px;height:3.5px;background:#f4a574;"></div><div style="left:843.1px;top:414.3px;width:344.2px;height:3.5px;background:#f4a574;"></div><div style="left:498.9px;top:419.2px;width:458.9px;height:3.5px;background:#f4a574;"></div><div style="left:269.5px;top:424.2px;width:688.3px;height:4.0px;background:#f4a574;"></div><div style="left:1187.3px;top:419.5px;width:121.7px;height:3.8px;background:#f4a574;"></div><div style="left:10.0px;top:432.0px;width:30.1px;height:57.0px;background:#fc97a3;"></div><div style="left:10.0px;top:449.0px;width:30.1px;height:40.0px;background:repeating-linear-gradient(90deg, rgba(0,0,40,0.06) 0px, rgba(0,0,40,0.06) 1px, transparent 1px, transparent 14.34px);background-position:1.38px 0"></div><div style="left:10.0px;top:449.0px;width:30.1px;height:40.0px;background:repeating-linear-gradient(90deg, rgba(0,0,40,0.13) 0px, rgba(0,0,40,0.13) 1px, transparent 1px, transparent 28.68px);background-position:1.38px 0"></div><div style="left:10.0px;top:449.0px;width:30.1px;height:1.0px;background:rgba(20,20,60,0.55);"></div><div style="left:10.0px;top:432.0px;width:1.0px;height:17.0px;background:rgba(0,0,30,0.45);"></div><div style="left:10.0px;top:449.0px;width:1.0px;height:40.0px;background:rgba(0,0,30,0.25);"></div><div style="left:14.0px;top:440.0px;color:#5a1a28;font-size:9px;font-weight:bold;font-family:'Liberation Sans', sans-serif;line-height:1;white-space:nowrap;">&middot;&middot;&middot;</div><div style="left:11.0px;top:459.2px;width:29.1px;height:1.6px;background:#4a1a20;"></div><div style="left:11.0px;top:478.5px;width:29.1px;height:1.6px;background:#4a1a20;"></div><div style="left:40.1px;top:432.0px;width:229.4px;height:57.0px;background:#fc97a3;"></div><div style="left:40.1px;top:449.0px;width:229.4px;height:40.0px;background:repeating-linear-gradient(90deg, rgba(0,0,40,0.06) 0px, rgba(0,0,40,0.06) 1px, transparent 1px, transparent 14.34px);background-position:0.00px 0"></div><div style="left:40.1px;top:449.0px;width:229.4px;height:40.0px;background:repeating-linear-gradient(90deg, rgba(0,0,40,0.13) 0px, rgba(0,0,40,0.13) 1px, transparent 1px, transparent 28.68px);background-position:0.00px 0"></div><div style="left:40.1px;top:449.0px;width:229.4px;height:1.0px;background:rgba(20,20,60,0.55);"></div><div style="left:40.1px;top:432.0px;width:1.0px;height:17.0px;background:rgba(0,0,30,0.45);"></div><div style="left:40.1px;top:449.0px;width:1.0px;height:40.0px;background:rgba(0,0,30,0.25);"></div><div style="left:41.1px;top:459.2px;width:228.4px;height:1.6px;background:#4a1a20;"></div><div style="left:41.1px;top:478.5px;width:228.4px;height:1.6px;background:#4a1a20;"></div><div style="left:498.9px;top:432.0px;width:229.4px;height:57.0px;background:#fc97a3;"></div><div style="left:498.9px;top:449.0px;width:229.4px;height:40.0px;background:repeating-linear-gradient(90deg, rgba(0,0,40,0.06) 0px, rgba(0,0,40,0.06) 1px, transparent 1px, transparent 14.34px);background-position:0.00px 0"></div><div style="left:498.9px;top:449.0px;width:229.4px;height:40.0px;background:repeating-linear-gradient(90deg, rgba(0,0,40,0.13) 0px, rgba(0,0,40,0.13) 1px, transparent 1px, transparent 28.68px);background-position:0.00px 0"></div><div style="left:498.9px;top:449.0px;width:229.4px;height:1.0px;background:rgba(20,20,60,0.55);"></div><div style="left:498.9px;top:432.0px;width:1.0px;height:17.0px;background:rgba(0,0,30,0.45);"></div><div style="left:498.9px;top:449.0px;width:1.0px;height:40.0px;background:rgba(0,0,30,0.25);"></div><div style="left:499.9px;top:459.2px;width:228.4px;height:1.6px;background:#4a1a20;"></div><div style="left:499.9px;top:478.5px;width:228.4px;height:1.6px;background:#4a1a20;"></div><svg style="left:694.4px;top:450px" width="34" height="39"><path d="M4 0 L34 0 L34 39 Q20 10 4 0Z" fill="rgba(120,30,50,0.16)"/></svg><div style="left:957.8px;top:432.0px;width:229.4px;height:57.0px;background:#fc97a3;"></div><div style="left:957.8px;top:449.0px;width:229.4px;height:40.0px;background:repeating-linear-gradient(90deg, rgba(0,0,40,0.06) 0px, rgba(0,0,40,0.06) 1px, transparent 1px, transparent 14.34px);background-position:0.00px 0"></div><div style="left:957.8px;top:449.0px;width:229.4px;height:40.0px;background:repeating-linear-gradient(90deg, rgba(0,0,40,0.13) 0px, rgba(0,0,40,0.13) 1px, transparent 1px, transparent 28.68px);background-position:0.00px 0"></div><div style="left:957.8px;top:449.0px;width:229.4px;height:1.0px;background:rgba(20,20,60,0.55);"></div><div style="left:957.8px;top:432.0px;width:1.0px;height:17.0px;background:rgba(0,0,30,0.45);"></div><div style="left:957.8px;top:449.0px;width:1.0px;height:40.0px;background:rgba(0,0,30,0.25);"></div><div style="left:958.8px;top:459.2px;width:228.4px;height:1.6px;background:#4a1a20;"></div><div style="left:958.8px;top:478.5px;width:228.4px;height:1.6px;background:#4a1a20;"></div><svg style="left:1153.3px;top:450px" width="34" height="39"><path d="M4 0 L34 0 L34 39 Q20 10 4 0Z" fill="rgba(120,30,50,0.16)"/></svg><div style="left:40.1px;top:491.0px;width:229.4px;height:18.0px;background:#fc97a3;"></div><div style="left:40.1px;top:491.0px;width:1.0px;height:18.0px;background:rgba(0,0,0,0.3);"></div><svg style="left:40.1px;top:491px" width="229.4" height="18"></svg><div style="left:478.0px;top:491.0px;width:28.0px;height:18.0px;background:#fc97a3;"></div><div style="left:478.0px;top:491.0px;width:1.0px;height:18.0px;background:rgba(0,0,0,0.3);"></div><svg style="left:478.0px;top:491px" width="28.0" height="18"></svg><div style="left:613.7px;top:491.0px;width:114.7px;height:18.0px;background:#fc97a3;"></div><div style="left:613.7px;top:491.0px;width:1.0px;height:18.0px;background:rgba(0,0,0,0.3);"></div><svg style="left:613.7px;top:491px" width="114.7" height="18"><path d="M0 0 L35.0 0 L0 18Z" fill="rgba(120,30,50,0.16)"/><path d="M106.7 0 L114.7 0 L114.7 18Z" fill="rgba(120,30,50,0.16)"/></svg><div style="left:936.5px;top:491.0px;width:21.3px;height:18.0px;background:#fc97a3;"></div><div style="left:936.5px;top:491.0px;width:1.0px;height:18.0px;background:rgba(0,0,0,0.3);"></div><svg style="left:936.5px;top:491px" width="21.3" height="18"></svg><div style="left:1072.5px;top:491.0px;width:114.7px;height:18.0px;background:#fc97a3;"></div><div style="left:1072.5px;top:491.0px;width:1.0px;height:18.0px;background:rgba(0,0,0,0.3);"></div><svg style="left:1072.5px;top:491px" width="114.7" height="18"><path d="M0 0 L35.0 0 L0 18Z" fill="rgba(120,30,50,0.16)"/><path d="M106.7 0 L114.7 0 L114.7 18Z" fill="rgba(120,30,50,0.16)"/></svg><div style="left:212.1px;top:511.5px;width:57.4px;height:18.0px;background:#d96de6;"></div><div style="left:212.1px;top:511.5px;width:1.0px;height:18.0px;background:rgba(0,0,0,0.3);"></div><div style="left:613.7px;top:511.5px;width:114.7px;height:18.0px;background:#d96de6;"></div><div style="left:613.7px;top:511.5px;width:1.0px;height:18.0px;background:rgba(0,0,0,0.3);"></div><div style="left:1072.5px;top:511.5px;width:114.7px;height:18.0px;background:#d96de6;"></div><div style="left:1072.5px;top:511.5px;width:1.0px;height:18.0px;background:rgba(0,0,0,0.3);"></div><div style="left:40.1px;top:532.5px;width:229.4px;height:17.5px;background:#d96de6;"></div><div style="left:40.1px;top:532.5px;width:1.0px;height:17.5px;background:rgba(0,0,0,0.3);"></div><div style="left:498.9px;top:532.5px;width:229.4px;height:17.5px;background:#d96de6;"></div><div style="left:498.9px;top:532.5px;width:1.0px;height:17.5px;background:rgba(0,0,0,0.3);"></div><div style="left:677.6px;top:94.0px;width:1.6px;height:504.0px;background:#f2f2f2;"></div><div style="left:677.4px;top:96.0px;width:2.0px;height:56.0px;background:#10185a;"></div><div style="left:677.4px;top:154.0px;width:2.0px;height:57.0px;background:#10185a;"></div><div style="left:677.4px;top:234.0px;width:2.0px;height:57.0px;background:#063a34;"></div><div style="left:677.4px;top:313.0px;width:2.0px;height:38.0px;background:#303414;"></div><div style="left:677.4px;top:432.0px;width:2.0px;height:57.0px;background:#3a0a14;"></div><div style="left:677.4px;top:491.0px;width:2.0px;height:18.0px;background:#3a0a14;"></div><div style="left:677.4px;top:511.5px;width:2.0px;height:18.0px;background:#2a0830;"></div><div style="left:677.4px;top:532.5px;width:2.0px;height:17.5px;background:#2a0830;"></div><div style="left:1309.0px;top:48.0px;width:3.0px;height:552.0px;background:#242424;"></div><div style="left:1310.5px;top:48.0px;width:244.0px;height:552.0px;background:#303030;"></div><div style="left:1554.0px;top:48.0px;width:10.0px;height:912.0px;background:#262626;"></div><div style="left:1313px;top:55.5px;width:31.5px;height:14px;border-radius:7px;background:#1e1e1e;color:#d0d0d0;font-size:11px;line-height:14px;text-align:center;font-family:'Liberation Sans',sans-serif">Set</div><div style="left:1356.0px;top:55.5px;width:25.0px;height:14.5px;background:#1e1e1e;"></div><svg style="left:1362px;top:57px" width="13" height="11"><path d="M2.5 9 L10 2" stroke="#d0d0d0" stroke-width="1.6"/><circle cx="2.5" cy="9" r="1.6" fill="#d0d0d0"/><circle cx="10" cy="2" r="1.6" fill="#d0d0d0"/></svg><div style="left:1386.0px;top:55.5px;width:25.0px;height:14.5px;background:#1e1e1e;"></div><svg style="left:1393px;top:57px" width="11" height="11"><path d="M3 5 V3.5 A2.5 2.5 0 0 1 8 3.5 V5" stroke="#d0d0d0" stroke-width="1.4" fill="none"/><rect x="1.5" y="5" width="8" height="5.5" fill="#d0d0d0"/></svg><svg style="left:1312px;top:74px" width="34" height="16"><circle cx="7.8" cy="7.8" r="7" fill="#1e1e1e"/><circle cx="25.3" cy="7.8" r="7" fill="#1e1e1e"/><path d="M4 7.8 H11 M7 5 L4 7.8 L7 10.6" stroke="#d0d0d0" stroke-width="1.6" fill="none"/><path d="M22 7.8 H29 M26 5 L29 7.8 L26 10.6" stroke="#d0d0d0" stroke-width="1.6" fill="none"/></svg><div style="left:1310.5px;top:96.0px;width:113.0px;height:56.0px;background:#95a5fb;"></div><svg style="left:1314px;top:98px" width="14" height="14"><circle cx="7" cy="7" r="6.2" fill="none" stroke="#1f2456" stroke-width="1.4"/><path d="M3.6 5 L10.4 5 L7 9.8Z" fill="#1f2456"/></svg><div style="left:1336.5px;top:100.0px;color:#1f2456;font-size:11px;font-weight:bold;font-family:'Liberation Sans', sans-serif;line-height:1;white-space:nowrap;">Drums</div><div style="left:1424.0px;top:96.0px;width:130.0px;height:56.0px;background:#363636;"></div><div style="left:1427.5px;top:98.5px;width:49.0px;height:12.5px;line-height:12.5px;background:#f8a85a;color:#1a1a1a;font-size:11px;font-weight:bold;font-family:'Liberation Sans', sans-serif;text-align:center;white-space:nowrap;">1</div><div style="left:1481.5px;top:98.5px;width:22.5px;height:12.5px;line-height:12.5px;background:#262626;color:#d0d0d0;font-size:11px;font-weight:normal;font-family:'Liberation Sans', sans-serif;text-align:center;white-space:nowrap;">S</div><div style="left:1509.0px;top:98.5px;width:22.5px;height:12.5px;background:#262626;"></div><svg style="left:1515px;top:99.5px" width="11" height="11"><circle cx="5.5" cy="5.5" r="4.6" fill="#c8c8c8"/><path d="M5.5 2.5 V5.8 L3.5 7.5" stroke="#262626" stroke-width="1.3" fill="none"/></svg><div style="left:1427.5px;top:117.0px;width:49.0px;height:12.5px;background:#262626;"></div><div style="left:1427.5px;top:117.0px;width:39.2px;height:12.5px;background:#127b8a;"></div><div style="left:1427.5px;top:117.0px;width:49.0px;height:12.5px;line-height:12.5px;background:transparent;color:#c8dde0;font-size:11px;font-weight:normal;font-family:'Liberation Sans', sans-serif;text-align:center;white-space:nowrap;">-1.0</div><div style="left:1481.5px;top:117.0px;width:50.0px;height:12.5px;line-height:12.5px;background:#262626;color:#d0d0d0;font-size:11px;font-weight:normal;font-family:'Liberation Sans', sans-serif;text-align:center;white-space:nowrap;">C</div><div style="left:1427.5px;top:135.0px;width:32.0px;height:13.5px;background:#262626;"></div><div style="left:1463.5px;top:135.0px;width:32.5px;height:13.5px;background:#262626;"></div><div style="left:1427.5px;top:135.0px;width:32.0px;height:13.5px;line-height:13.5px;background:transparent;color:#c8c8c8;font-size:11px;font-weight:normal;font-family:'Liberation Sans', sans-serif;text-align:center;white-space:nowrap;">-52.8</div><div style="left:1463.5px;top:135.0px;width:32.5px;height:13.5px;line-height:13.5px;background:transparent;color:#c8c8c8;font-size:11px;font-weight:normal;font-family:'Liberation Sans', sans-serif;text-align:center;white-space:nowrap;">−<span style="font-size:14px">∞</span></div><div style="left:1427.5px;top:142.0px;width:3.0px;height:7.0px;background:#127b8a;"></div><svg style="left:1426px;top:134px" width="40" height="6"><circle cx="3" cy="3" r="2.3" fill="#f04a5a"/><circle cx="39" cy="3" r="2.3" fill="#f04a5a"/></svg><div style="left:1535.5px;top:98.5px;width:9.0px;height:52.0px;background:#1c1c1c;"></div><div style="left:1536.0px;top:108.2px;width:3.5px;height:1.4px;background:#d8b020;"></div><div style="left:1540.3px;top:108.2px;width:3.5px;height:1.4px;background:#d8b020;"></div><div style="left:1536.0px;top:123.3px;width:3.5px;height:26.7px;background:#22e56a;"></div><div style="left:1540.3px;top:123.3px;width:3.5px;height:26.7px;background:#22e56a;"></div><div style="left:1310.5px;top:154.0px;width:113.0px;height:57.0px;background:#95a5fb;"></div><svg style="left:1314px;top:156px" width="14" height="14"><circle cx="7" cy="7" r="6.2" fill="none" stroke="#1f2456" stroke-width="1.4"/><path d="M3.6 5 L10.4 5 L7 9.8Z" fill="#1f2456"/></svg><div style="left:1336.5px;top:158.0px;color:#1f2456;font-size:11px;font-weight:bold;font-family:'Liberation Sans', sans-serif;line-height:1;white-space:nowrap;">Breaks</div><div style="left:1424.0px;top:154.0px;width:130.0px;height:57.0px;background:#363636;"></div><div style="left:1427.5px;top:156.5px;width:49.0px;height:12.5px;line-height:12.5px;background:#f8a85a;color:#1a1a1a;font-size:11px;font-weight:bold;font-family:'Liberation Sans', sans-serif;text-align:center;white-space:nowrap;">2</div><div style="left:1481.5px;top:156.5px;width:22.5px;height:12.5px;line-height:12.5px;background:#262626;color:#d0d0d0;font-size:11px;font-weight:normal;font-family:'Liberation Sans', sans-serif;text-align:center;white-space:nowrap;">S</div><div style="left:1509.0px;top:156.5px;width:22.5px;height:12.5px;background:#262626;"></div><svg style="left:1515px;top:157.5px" width="11" height="11"><circle cx="5.5" cy="5.5" r="4.3" fill="#6a6a6a"/></svg><div style="left:1427.5px;top:175.0px;width:49.0px;height:12.5px;background:#262626;"></div><div style="left:1427.5px;top:175.0px;width:29.4px;height:12.5px;background:#127b8a;"></div><div style="left:1427.5px;top:175.0px;width:49.0px;height:12.5px;line-height:12.5px;background:transparent;color:#c8dde0;font-size:11px;font-weight:normal;font-family:'Liberation Sans', sans-serif;text-align:center;white-space:nowrap;">-9.4</div><div style="left:1481.5px;top:175.0px;width:50.0px;height:12.5px;line-height:12.5px;background:#262626;color:#d0d0d0;font-size:11px;font-weight:normal;font-family:'Liberation Sans', sans-serif;text-align:center;white-space:nowrap;">C</div><div style="left:1427.5px;top:193.0px;width:32.0px;height:13.5px;background:#262626;"></div><div style="left:1463.5px;top:193.0px;width:32.5px;height:13.5px;background:#262626;"></div><div style="left:1427.5px;top:193.0px;width:32.0px;height:13.5px;line-height:13.5px;background:transparent;color:#c8c8c8;font-size:11px;font-weight:normal;font-family:'Liberation Sans', sans-serif;text-align:center;white-space:nowrap;">−<span style="font-size:14px">∞</span></div><div style="left:1463.5px;top:193.0px;width:32.5px;height:13.5px;line-height:13.5px;background:transparent;color:#c8c8c8;font-size:11px;font-weight:normal;font-family:'Liberation Sans', sans-serif;text-align:center;white-space:nowrap;">−<span style="font-size:14px">∞</span></div><svg style="left:1426px;top:192px" width="6" height="6"><circle cx="3" cy="3" r="2.3" fill="#f04a5a"/></svg><div style="left:1535.5px;top:156.5px;width:9.0px;height:53.0px;background:#1c1c1c;"></div><div style="left:1536.0px;top:170.0px;width:3.5px;height:2.0px;background:#d8c020;"></div><div style="left:1540.3px;top:170.0px;width:3.5px;height:2.0px;background:#d8c020;"></div><div style="left:1536.0px;top:172.0px;width:3.5px;height:8.0px;background:#8ab030;"></div><div style="left:1540.3px;top:172.0px;width:3.5px;height:8.0px;background:#8ab030;"></div><div style="left:1536.0px;top:180.0px;width:3.5px;height:28.5px;background:#22e56a;"></div><div style="left:1540.3px;top:180.0px;width:3.5px;height:28.5px;background:#22e56a;"></div><div style="left:1310.5px;top:213.0px;width:113.0px;height:19.0px;background:#9ccbf7;"></div><svg style="left:1314px;top:215px" width="14" height="14"><circle cx="7" cy="7" r="6.2" fill="none" stroke="#1f2f56" stroke-width="1.4"/><rect x="4.5" y="4.5" width="5" height="5" fill="none" stroke="#1f2f56" stroke-width="1"/><path d="M4.5 6.2 H9.5 M4.5 7.8 H9.5" stroke="#1f2f56" stroke-width="0.9"/></svg><div style="left:1336.5px;top:217.0px;color:#1f2f56;font-size:11px;font-weight:bold;font-family:'Liberation Sans', sans-serif;line-height:1;white-space:nowrap;">Percussion</div><div style="left:1424.0px;top:213.0px;width:130.0px;height:19.0px;background:#363636;"></div><div style="left:1427.5px;top:215.5px;width:49.0px;height:12.5px;line-height:12.5px;background:#f8a85a;color:#1a1a1a;font-size:11px;font-weight:bold;font-family:'Liberation Sans', sans-serif;text-align:center;white-space:nowrap;">3</div><div style="left:1481.5px;top:215.5px;width:22.5px;height:12.5px;line-height:12.5px;background:#262626;color:#d0d0d0;font-size:11px;font-weight:normal;font-family:'Liberation Sans', sans-serif;text-align:center;white-space:nowrap;">S</div><div style="left:1535.5px;top:215.5px;width:9.0px;height:15.0px;background:#1c1c1c;"></div><div style="left:1536.0px;top:218.5px;width:3.5px;height:1.5px;background:#22e56a;"></div><div style="left:1540.3px;top:218.5px;width:3.5px;height:1.5px;background:#22e56a;"></div><div style="left:1536.0px;top:224.0px;width:3.5px;height:6.5px;background:#22e56a;"></div><div style="left:1540.3px;top:224.0px;width:3.5px;height:6.5px;background:#22e56a;"></div><div style="left:1310.5px;top:234.0px;width:113.0px;height:57.0px;background:#5cf8e2;"></div><svg style="left:1314px;top:236px" width="14" height="14"><circle cx="7" cy="7" r="6.2" fill="none" stroke="#064a40" stroke-width="1.4"/><path d="M3.6 5 L10.4 5 L7 9.8Z" fill="#064a40"/></svg><div style="left:1336.5px;top:238.0px;color:#064a40;font-size:11px;font-weight:bold;font-family:'Liberation Sans', sans-serif;line-height:1;white-space:nowrap;">Bass</div><div style="left:1424.0px;top:234.0px;width:130.0px;height:57.0px;background:#363636;"></div><div style="left:1427.5px;top:236.5px;width:49.0px;height:12.5px;line-height:12.5px;background:#f8a85a;color:#1a1a1a;font-size:11px;font-weight:bold;font-family:'Liberation Sans', sans-serif;text-align:center;white-space:nowrap;">8</div><div style="left:1481.5px;top:236.5px;width:22.5px;height:12.5px;line-height:12.5px;background:#262626;color:#d0d0d0;font-size:11px;font-weight:normal;font-family:'Liberation Sans', sans-serif;text-align:center;white-space:nowrap;">S</div><div style="left:1509.0px;top:236.5px;width:22.5px;height:12.5px;background:#262626;"></div><svg style="left:1515px;top:237.5px" width="11" height="11"><circle cx="5.5" cy="5.5" r="4.6" fill="#c8c8c8"/><path d="M5.5 2.5 V5.8 L3.5 7.5" stroke="#262626" stroke-width="1.3" fill="none"/></svg><div style="left:1427.5px;top:255.0px;width:49.0px;height:12.5px;background:#262626;"></div><div style="left:1427.5px;top:255.0px;width:30.4px;height:12.5px;background:#127b8a;"></div><div style="left:1427.5px;top:255.0px;width:49.0px;height:12.5px;line-height:12.5px;background:transparent;color:#c8dde0;font-size:11px;font-weight:normal;font-family:'Liberation Sans', sans-serif;text-align:center;white-space:nowrap;">-7.7</div><div style="left:1481.5px;top:255.0px;width:50.0px;height:12.5px;line-height:12.5px;background:#262626;color:#d0d0d0;font-size:11px;font-weight:normal;font-family:'Liberation Sans', sans-serif;text-align:center;white-space:nowrap;">C</div><div style="left:1427.5px;top:273.0px;width:32.0px;height:13.5px;background:#262626;"></div><div style="left:1463.5px;top:273.0px;width:32.5px;height:13.5px;background:#262626;"></div><div style="left:1427.5px;top:273.0px;width:32.0px;height:13.5px;line-height:13.5px;background:transparent;color:#c8c8c8;font-size:11px;font-weight:normal;font-family:'Liberation Sans', sans-serif;text-align:center;white-space:nowrap;">−<span style="font-size:14px">∞</span></div><div style="left:1463.5px;top:273.0px;width:32.5px;height:13.5px;line-height:13.5px;background:transparent;color:#c8c8c8;font-size:11px;font-weight:normal;font-family:'Liberation Sans', sans-serif;text-align:center;white-space:nowrap;">−<span style="font-size:14px">∞</span></div><div style="left:1535.5px;top:236.5px;width:9.0px;height:53.0px;background:#1c1c1c;"></div><div style="left:1536.0px;top:250.0px;width:3.5px;height:1.5px;background:#d8b020;"></div><div style="left:1540.3px;top:250.0px;width:3.5px;height:1.5px;background:#d8b020;"></div><div style="left:1536.0px;top:258.7px;width:3.5px;height:29.3px;background:#22e56a;"></div><div style="left:1540.3px;top:258.7px;width:3.5px;height:29.3px;background:#22e56a;"></div><div style="left:1310.5px;top:292.0px;width:113.0px;height:19.0px;background:#5cf8e2;"></div><svg style="left:1314px;top:294px" width="14" height="14"><circle cx="7" cy="7" r="6.2" fill="none" stroke="#064a40" stroke-width="1.4"/><path d="M5.5 4 L10 7 L5.5 10Z" fill="#064a40"/></svg><div style="left:1336.5px;top:296.0px;color:#064a40;font-size:11px;font-weight:bold;font-family:'Liberation Sans', sans-serif;line-height:1;white-space:nowrap;">Bass Drop</div><div style="left:1424.0px;top:292.0px;width:130.0px;height:19.0px;background:#363636;"></div><div style="left:1427.5px;top:294.5px;width:49.0px;height:12.5px;line-height:12.5px;background:#f8a85a;color:#1a1a1a;font-size:11px;font-weight:bold;font-family:'Liberation Sans', sans-serif;text-align:center;white-space:nowrap;">9</div><div style="left:1481.5px;top:294.5px;width:22.5px;height:12.5px;line-height:12.5px;background:#262626;color:#d0d0d0;font-size:11px;font-weight:normal;font-family:'Liberation Sans', sans-serif;text-align:center;white-space:nowrap;">S</div><div style="left:1509.0px;top:294.5px;width:22.5px;height:12.5px;background:#262626;"></div><svg style="left:1515px;top:295.5px" width="11" height="11"><circle cx="5.5" cy="5.5" r="4.6" fill="#c8c8c8"/><path d="M5.5 2.5 V5.8 L3.5 7.5" stroke="#262626" stroke-width="1.3" fill="none"/></svg><div style="left:1535.5px;top:294.5px;width:9.0px;height:15.0px;background:#1c1c1c;"></div><div style="left:1310.5px;top:313.0px;width:113.0px;height:38.0px;background:#f1f6a8;"></div><svg style="left:1314px;top:315px" width="14" height="14"><circle cx="7" cy="7" r="6.2" fill="none" stroke="#3a3c14" stroke-width="1.4"/><path d="M3.6 5 L10.4 5 L7 9.8Z" fill="#3a3c14"/></svg><div style="left:1336.5px;top:317.0px;color:#3a3c14;font-size:11px;font-weight:bold;font-family:'Liberation Sans', sans-serif;line-height:1;white-space:nowrap;">Synth Riser</div><div style="left:1424.0px;top:313.0px;width:130.0px;height:38.0px;background:#363636;"></div><div style="left:1427.5px;top:315.5px;width:49.0px;height:12.5px;line-height:12.5px;background:#f8a85a;color:#1a1a1a;font-size:11px;font-weight:bold;font-family:'Liberation Sans', sans-serif;text-align:center;white-space:nowrap;">10</div><div style="left:1481.5px;top:315.5px;width:22.5px;height:12.5px;line-height:12.5px;background:#262626;color:#d0d0d0;font-size:11px;font-weight:normal;font-family:'Liberation Sans', sans-serif;text-align:center;white-space:nowrap;">S</div><div style="left:1509.0px;top:315.5px;width:22.5px;height:12.5px;background:#262626;"></div><svg style="left:1515px;top:316.5px" width="11" height="11"><circle cx="5.5" cy="5.5" r="4.6" fill="#c8c8c8"/><path d="M5.5 2.5 V5.8 L3.5 7.5" stroke="#262626" stroke-width="1.3" fill="none"/></svg><div style="left:1427.5px;top:334.0px;width:49.0px;height:12.5px;background:#262626;"></div><div style="left:1427.5px;top:334.0px;width:14.7px;height:12.5px;background:#127b8a;"></div><div style="left:1427.5px;top:334.0px;width:49.0px;height:12.5px;line-height:12.5px;background:transparent;color:#c8dde0;font-size:11px;font-weight:normal;font-family:'Liberation Sans', sans-serif;text-align:center;white-space:nowrap;">-18.0</div><div style="left:1481.5px;top:334.0px;width:50.0px;height:12.5px;line-height:12.5px;background:#262626;color:#d0d0d0;font-size:11px;font-weight:normal;font-family:'Liberation Sans', sans-serif;text-align:center;white-space:nowrap;">C</div><div style="left:1535.5px;top:315.5px;width:9.0px;height:34.0px;background:#1c1c1c;"></div><div style="left:1536.0px;top:333.0px;width:3.5px;height:15.0px;background:#22e56a;"></div><div style="left:1540.3px;top:333.0px;width:3.5px;height:15.0px;background:#22e56a;"></div><div style="left:1310.5px;top:353.0px;width:113.0px;height:57.0px;background:#fcec77;"></div><svg style="left:1314px;top:355px" width="14" height="14"><circle cx="7" cy="7" r="6.2" fill="none" stroke="#3e3a0a" stroke-width="1.4"/><path d="M3.6 5 L10.4 5 L7 9.8Z" fill="#3e3a0a"/></svg><div style="left:1336.5px;top:357.0px;color:#3e3a0a;font-size:11px;font-weight:bold;font-family:'Liberation Sans', sans-serif;line-height:1;white-space:nowrap;">Keys</div><div style="left:1424.0px;top:353.0px;width:130.0px;height:57.0px;background:#363636;"></div><div style="left:1427.5px;top:355.5px;width:49.0px;height:12.5px;line-height:12.5px;background:#f8a85a;color:#1a1a1a;font-size:11px;font-weight:bold;font-family:'Liberation Sans', sans-serif;text-align:center;white-space:nowrap;">11</div><div style="left:1481.5px;top:355.5px;width:22.5px;height:12.5px;line-height:12.5px;background:#262626;color:#d0d0d0;font-size:11px;font-weight:normal;font-family:'Liberation Sans', sans-serif;text-align:center;white-space:nowrap;">S</div><div style="left:1509.0px;top:355.5px;width:22.5px;height:12.5px;background:#262626;"></div><svg style="left:1515px;top:356.5px" width="11" height="11"><circle cx="5.5" cy="5.5" r="4.6" fill="#c8c8c8"/><path d="M5.5 2.5 V5.8 L3.5 7.5" stroke="#262626" stroke-width="1.3" fill="none"/></svg><div style="left:1427.5px;top:374.0px;width:49.0px;height:12.5px;background:#262626;"></div><div style="left:1427.5px;top:374.0px;width:32.3px;height:12.5px;background:#127b8a;"></div><div style="left:1427.5px;top:374.0px;width:49.0px;height:12.5px;line-height:12.5px;background:transparent;color:#c8dde0;font-size:11px;font-weight:normal;font-family:'Liberation Sans', sans-serif;text-align:center;white-space:nowrap;">-6.6</div><div style="left:1481.5px;top:374.0px;width:50.0px;height:12.5px;line-height:12.5px;background:#262626;color:#d0d0d0;font-size:11px;font-weight:normal;font-family:'Liberation Sans', sans-serif;text-align:center;white-space:nowrap;">C</div><div style="left:1427.5px;top:392.0px;width:32.0px;height:13.5px;background:#262626;"></div><div style="left:1463.5px;top:392.0px;width:32.5px;height:13.5px;background:#262626;"></div><div style="left:1427.5px;top:392.0px;width:32.0px;height:13.5px;line-height:13.5px;background:transparent;color:#c8c8c8;font-size:11px;font-weight:normal;font-family:'Liberation Sans', sans-serif;text-align:center;white-space:nowrap;">−<span style="font-size:14px">∞</span></div><div style="left:1463.5px;top:392.0px;width:32.5px;height:13.5px;line-height:13.5px;background:transparent;color:#c8c8c8;font-size:11px;font-weight:normal;font-family:'Liberation Sans', sans-serif;text-align:center;white-space:nowrap;">−<span style="font-size:14px">∞</span></div><div style="left:1535.5px;top:355.5px;width:9.0px;height:53.0px;background:#1c1c1c;"></div><div style="left:1536.0px;top:373.6px;width:3.5px;height:1.4px;background:#22e56a;"></div><div style="left:1540.3px;top:373.6px;width:3.5px;height:1.4px;background:#22e56a;"></div><div style="left:1536.0px;top:406.0px;width:3.5px;height:2.0px;background:#22e56a;"></div><div style="left:1540.3px;top:406.0px;width:3.5px;height:2.0px;background:#22e56a;"></div><div style="left:1310.5px;top:412.0px;width:113.0px;height:19.0px;background:#fba977;"></div><svg style="left:1314px;top:414px" width="14" height="14"><circle cx="7" cy="7" r="6.2" fill="none" stroke="#4a2410" stroke-width="1.4"/><rect x="4.5" y="4.5" width="5" height="5" fill="none" stroke="#4a2410" stroke-width="1"/><path d="M4.5 6.2 H9.5 M4.5 7.8 H9.5" stroke="#4a2410" stroke-width="0.9"/></svg><div style="left:1336.5px;top:416.0px;color:#4a2410;font-size:11px;font-weight:bold;font-family:'Liberation Sans', sans-serif;line-height:1;white-space:nowrap;">Pads</div><div style="left:1424.0px;top:412.0px;width:130.0px;height:19.0px;background:#363636;"></div><div style="left:1427.5px;top:414.5px;width:49.0px;height:12.5px;line-height:12.5px;background:#f8a85a;color:#1a1a1a;font-size:11px;font-weight:bold;font-family:'Liberation Sans', sans-serif;text-align:center;white-space:nowrap;">12</div><div style="left:1481.5px;top:414.5px;width:22.5px;height:12.5px;line-height:12.5px;background:#262626;color:#d0d0d0;font-size:11px;font-weight:normal;font-family:'Liberation Sans', sans-serif;text-align:center;white-space:nowrap;">S</div><div style="left:1535.5px;top:414.5px;width:9.0px;height:15.0px;background:#1c1c1c;"></div><div style="left:1536.0px;top:418.0px;width:3.5px;height:1.5px;background:#d8b020;"></div><div style="left:1540.3px;top:418.0px;width:3.5px;height:1.5px;background:#d8b020;"></div><div style="left:1536.0px;top:421.4px;width:3.5px;height:7.0px;background:#22e56a;"></div><div style="left:1540.3px;top:421.4px;width:3.5px;height:7.0px;background:#22e56a;"></div><div style="left:1310.5px;top:432.0px;width:113.0px;height:57.0px;background:#fc97a3;"></div><svg style="left:1314px;top:434px" width="14" height="14"><circle cx="7" cy="7" r="6.2" fill="none" stroke="#4a1420" stroke-width="1.4"/><path d="M3.6 5 L10.4 5 L7 9.8Z" fill="#4a1420"/></svg><div style="left:1336.5px;top:436.0px;color:#4a1420;font-size:11px;font-weight:bold;font-family:'Liberation Sans', sans-serif;line-height:1;white-space:nowrap;">Ambience</div><div style="left:1424.0px;top:432.0px;width:130.0px;height:57.0px;background:#363636;"></div><div style="left:1427.5px;top:434.5px;width:49.0px;height:12.5px;line-height:12.5px;background:#f8a85a;color:#1a1a1a;font-size:11px;font-weight:bold;font-family:'Liberation Sans', sans-serif;text-align:center;white-space:nowrap;">16</div><div style="left:1481.5px;top:434.5px;width:22.5px;height:12.5px;line-height:12.5px;background:#262626;color:#d0d0d0;font-size:11px;font-weight:normal;font-family:'Liberation Sans', sans-serif;text-align:center;white-space:nowrap;">S</div><div style="left:1509.0px;top:434.5px;width:22.5px;height:12.5px;background:#262626;"></div><svg style="left:1515px;top:435.5px" width="11" height="11"><circle cx="5.5" cy="5.5" r="4.3" fill="#6a6a6a"/></svg><div style="left:1427.5px;top:453.0px;width:49.0px;height:12.5px;background:#262626;"></div><div style="left:1427.5px;top:453.0px;width:30.4px;height:12.5px;background:#127b8a;"></div><div style="left:1427.5px;top:453.0px;width:49.0px;height:12.5px;line-height:12.5px;background:transparent;color:#c8dde0;font-size:11px;font-weight:normal;font-family:'Liberation Sans', sans-serif;text-align:center;white-space:nowrap;">-8.3</div><div style="left:1481.5px;top:453.0px;width:50.0px;height:12.5px;line-height:12.5px;background:#262626;color:#d0d0d0;font-size:11px;font-weight:normal;font-family:'Liberation Sans', sans-serif;text-align:center;white-space:nowrap;">C</div><div style="left:1427.5px;top:471.0px;width:32.0px;height:13.5px;background:#262626;"></div><div style="left:1463.5px;top:471.0px;width:32.5px;height:13.5px;background:#262626;"></div><div style="left:1427.5px;top:471.0px;width:32.0px;height:13.5px;line-height:13.5px;background:transparent;color:#c8c8c8;font-size:11px;font-weight:normal;font-family:'Liberation Sans', sans-serif;text-align:center;white-space:nowrap;">−<span style="font-size:14px">∞</span></div><div style="left:1463.5px;top:471.0px;width:32.5px;height:13.5px;line-height:13.5px;background:transparent;color:#c8c8c8;font-size:11px;font-weight:normal;font-family:'Liberation Sans', sans-serif;text-align:center;white-space:nowrap;">−<span style="font-size:14px">∞</span></div><div style="left:1535.5px;top:434.5px;width:9.0px;height:53.0px;background:#1c1c1c;"></div><div style="left:1536.0px;top:465.5px;width:3.5px;height:1.5px;background:#22e56a;"></div><div style="left:1540.3px;top:465.5px;width:3.5px;height:1.5px;background:#22e56a;"></div><div style="left:1536.0px;top:467.8px;width:3.5px;height:19.2px;background:#22e56a;"></div><div style="left:1540.3px;top:467.8px;width:3.5px;height:19.2px;background:#22e56a;"></div><div style="left:1310.5px;top:491.0px;width:113.0px;height:19.0px;background:#fc97a3;"></div><svg style="left:1314px;top:493px" width="14" height="14"><circle cx="7" cy="7" r="6.2" fill="none" stroke="#4a1420" stroke-width="1.4"/><path d="M5.5 4 L10 7 L5.5 10Z" fill="#4a1420"/></svg><div style="left:1336.5px;top:495.0px;color:#4a1420;font-size:11px;font-weight:bold;font-family:'Liberation Sans', sans-serif;line-height:1;white-space:nowrap;">Drone</div><div style="left:1424.0px;top:491.0px;width:130.0px;height:19.0px;background:#363636;"></div><div style="left:1427.5px;top:493.5px;width:49.0px;height:12.5px;line-height:12.5px;background:#f8a85a;color:#1a1a1a;font-size:11px;font-weight:bold;font-family:'Liberation Sans', sans-serif;text-align:center;white-space:nowrap;">17</div><div style="left:1481.5px;top:493.5px;width:22.5px;height:12.5px;line-height:12.5px;background:#262626;color:#d0d0d0;font-size:11px;font-weight:normal;font-family:'Liberation Sans', sans-serif;text-align:center;white-space:nowrap;">S</div><div style="left:1509.0px;top:493.5px;width:22.5px;height:12.5px;background:#262626;"></div><svg style="left:1515px;top:494.5px" width="11" height="11"><circle cx="5.5" cy="5.5" r="4.3" fill="#6a6a6a"/></svg><div style="left:1535.5px;top:493.5px;width:9.0px;height:15.0px;background:#1c1c1c;"></div><div style="left:1536.0px;top:495.0px;width:3.5px;height:1.3px;background:#22e56a;"></div><div style="left:1540.3px;top:495.0px;width:3.5px;height:1.3px;background:#22e56a;"></div><div style="left:1536.0px;top:498.7px;width:3.5px;height:8.3px;background:#22e56a;"></div><div style="left:1540.3px;top:498.7px;width:3.5px;height:8.3px;background:#22e56a;"></div><div style="left:1310.5px;top:511.0px;width:113.0px;height:20.0px;background:#d96de6;"></div><svg style="left:1314px;top:513px" width="14" height="14"><circle cx="7" cy="7" r="6.2" fill="none" stroke="#3a1040" stroke-width="1.4"/><path d="M5.5 4 L10 7 L5.5 10Z" fill="#3a1040"/></svg><div style="left:1336.5px;top:515.0px;color:#3a1040;font-size:11px;font-weight:bold;font-family:'Liberation Sans', sans-serif;line-height:1;white-space:nowrap;">FX</div><div style="left:1424.0px;top:511.0px;width:130.0px;height:20.0px;background:#363636;"></div><div style="left:1427.5px;top:513.5px;width:49.0px;height:12.5px;line-height:12.5px;background:#f8a85a;color:#1a1a1a;font-size:11px;font-weight:bold;font-family:'Liberation Sans', sans-serif;text-align:center;white-space:nowrap;">18</div><div style="left:1481.5px;top:513.5px;width:22.5px;height:12.5px;line-height:12.5px;background:#262626;color:#d0d0d0;font-size:11px;font-weight:normal;font-family:'Liberation Sans', sans-serif;text-align:center;white-space:nowrap;">S</div><div style="left:1509.0px;top:513.5px;width:22.5px;height:12.5px;background:#262626;"></div><svg style="left:1515px;top:514.5px" width="11" height="11"><circle cx="5.5" cy="5.5" r="4.3" fill="#6a6a6a"/></svg><div style="left:1535.5px;top:513.5px;width:9.0px;height:16.0px;background:#1c1c1c;"></div><div style="left:1536.0px;top:515.0px;width:3.5px;height:1.3px;background:#22e56a;"></div><div style="left:1540.3px;top:515.0px;width:3.5px;height:1.3px;background:#22e56a;"></div><div style="left:1536.0px;top:518.4px;width:3.5px;height:9.6px;background:#22e56a;"></div><div style="left:1540.3px;top:518.4px;width:3.5px;height:9.6px;background:#22e56a;"></div><div style="left:1310.5px;top:532.0px;width:113.0px;height:19.0px;background:#d96de6;"></div><svg style="left:1314px;top:534px" width="14" height="14"><circle cx="7" cy="7" r="6.2" fill="none" stroke="#3a1040" stroke-width="1.4"/><path d="M5.5 4 L10 7 L5.5 10Z" fill="#3a1040"/></svg><div style="left:1336.5px;top:536.0px;color:#3a1040;font-size:11px;font-weight:bold;font-family:'Liberation Sans', sans-serif;line-height:1;white-space:nowrap;">Zap</div><div style="left:1424.0px;top:532.0px;width:130.0px;height:19.0px;background:#363636;"></div><div style="left:1427.5px;top:534.5px;width:49.0px;height:12.5px;line-height:12.5px;background:#f8a85a;color:#1a1a1a;font-size:11px;font-weight:bold;font-family:'Liberation Sans', sans-serif;text-align:center;white-space:nowrap;">19</div><div style="left:1481.5px;top:534.5px;width:22.5px;height:12.5px;line-height:12.5px;background:#262626;color:#d0d0d0;font-size:11px;font-weight:normal;font-family:'Liberation Sans', sans-serif;text-align:center;white-space:nowrap;">S</div><div style="left:1509.0px;top:534.5px;width:22.5px;height:12.5px;background:#262626;"></div><svg style="left:1515px;top:535.5px" width="11" height="11"><circle cx="5.5" cy="5.5" r="4.6" fill="#c8c8c8"/><path d="M5.5 2.5 V5.8 L3.5 7.5" stroke="#262626" stroke-width="1.3" fill="none"/></svg><div style="left:1535.5px;top:534.5px;width:9.0px;height:15.0px;background:#1c1c1c;"></div><div style="left:1536.0px;top:536.7px;width:3.5px;height:1.3px;background:#22e56a;"></div><div style="left:1540.3px;top:536.7px;width:3.5px;height:1.3px;background:#22e56a;"></div><div style="left:1536.0px;top:540.3px;width:3.5px;height:9.0px;background:#22e56a;"></div><div style="left:1540.3px;top:540.3px;width:3.5px;height:9.0px;background:#22e56a;"></div><div style="left:1310.5px;top:578.5px;width:113.0px;height:19.5px;background:#f4f4f4;"></div><svg style="left:1314px;top:581px" width="14" height="14"><circle cx="7" cy="7" r="6.2" fill="none" stroke="#303030" stroke-width="1.4"/><path d="M5.5 4 L10 7 L5.5 10Z" fill="#303030"/></svg><div style="left:1337.0px;top:583.5px;color:#202020;font-size:11px;font-weight:bold;font-family:'Liberation Sans', sans-serif;line-height:1;white-space:nowrap;">Main</div><div style="left:1424.0px;top:578.5px;width:130.0px;height:19.5px;background:#363636;"></div><div style="left:1427.5px;top:581.0px;width:49.0px;height:13.5px;background:#262626;"></div><div style="left:1427.5px;top:581.0px;width:41.0px;height:13.5px;background:#127b8a;"></div><div style="left:1427.5px;top:581.0px;width:49.0px;height:13.5px;line-height:13.5px;background:transparent;color:#c8dde0;font-size:11px;font-weight:normal;font-family:'Liberation Sans', sans-serif;text-align:center;white-space:nowrap;">0</div><div style="left:1481.5px;top:581.0px;width:50.0px;height:13.5px;background:#262626;"></div><div style="left:1481.5px;top:581.0px;width:41.0px;height:13.5px;background:#3a6fc8;"></div><div style="left:1481.5px;top:581.0px;width:50.0px;height:13.5px;line-height:13.5px;background:transparent;color:#d0e0f8;font-size:11px;font-weight:normal;font-family:'Liberation Sans', sans-serif;text-align:center;white-space:nowrap;">0</div><div style="left:1535.5px;top:581.0px;width:9.0px;height:15.0px;background:#1c1c1c;"></div><div style="left:1536.0px;top:581.0px;width:3.5px;height:1.5px;background:#b03030;"></div><div style="left:1540.3px;top:581.0px;width:3.5px;height:1.5px;background:#b03030;"></div><div style="left:1536.0px;top:584.5px;width:3.5px;height:11.2px;background:#22e56a;"></div><div style="left:1540.3px;top:584.5px;width:3.5px;height:11.2px;background:#22e56a;"></div><div style="left:1275.0px;top:578.0px;color:#707070;font-size:19px;font-weight:normal;font-family:'Liberation Sans', sans-serif;line-height:1;white-space:nowrap;">1/2</div><div style="left:10.0px;top:598.0px;width:1299.0px;height:24.5px;background:#333333;"></div><div style="left:20.0px;top:600.0px;width:1.0px;height:8.0px;background:#8a8a8a;"></div><div style="left:22.0px;top:602.0px;color:#b4b4b4;font-size:11.5px;font-weight:normal;font-family:'Liberation Sans', sans-serif;line-height:1;white-space:nowrap;">0:10</div><div style="left:40.8px;top:600.0px;width:1.0px;height:3.0px;background:#6a6a6a;"></div><div style="left:61.5px;top:600.0px;width:1.0px;height:3.0px;background:#6a6a6a;"></div><div style="left:82.3px;top:600.0px;width:1.0px;height:3.0px;background:#6a6a6a;"></div><div style="left:103.0px;top:600.0px;width:1.0px;height:3.0px;background:#6a6a6a;"></div><div style="left:124.4px;top:600.0px;width:1.0px;height:8.0px;background:#8a8a8a;"></div><div style="left:126.4px;top:602.0px;color:#b4b4b4;font-size:11.5px;font-weight:normal;font-family:'Liberation Sans', sans-serif;line-height:1;white-space:nowrap;">0:15</div><div style="left:145.2px;top:600.0px;width:1.0px;height:3.0px;background:#6a6a6a;"></div><div style="left:165.9px;top:600.0px;width:1.0px;height:3.0px;background:#6a6a6a;"></div><div style="left:186.7px;top:600.0px;width:1.0px;height:3.0px;background:#6a6a6a;"></div><div style="left:207.4px;top:600.0px;width:1.0px;height:3.0px;background:#6a6a6a;"></div><div style="left:228.8px;top:600.0px;width:1.0px;height:8.0px;background:#8a8a8a;"></div><div style="left:230.8px;top:602.0px;color:#b4b4b4;font-size:11.5px;font-weight:normal;font-family:'Liberation Sans', sans-serif;line-height:1;white-space:nowrap;">0:20</div><div style="left:249.6px;top:600.0px;width:1.0px;height:3.0px;background:#6a6a6a;"></div><div style="left:270.3px;top:600.0px;width:1.0px;height:3.0px;background:#6a6a6a;"></div><div style="left:291.1px;top:600.0px;width:1.0px;height:3.0px;background:#6a6a6a;"></div><div style="left:311.8px;top:600.0px;width:1.0px;height:3.0px;background:#6a6a6a;"></div><div style="left:333.2px;top:600.0px;width:1.0px;height:8.0px;background:#8a8a8a;"></div><div style="left:335.2px;top:602.0px;color:#b4b4b4;font-size:11.5px;font-weight:normal;font-family:'Liberation Sans', sans-serif;line-height:1;white-space:nowrap;">0:25</div><div style="left:354.0px;top:600.0px;width:1.0px;height:3.0px;background:#6a6a6a;"></div><div style="left:374.7px;top:600.0px;width:1.0px;height:3.0px;background:#6a6a6a;"></div><div style="left:395.5px;top:600.0px;width:1.0px;height:3.0px;background:#6a6a6a;"></div><div style="left:416.2px;top:600.0px;width:1.0px;height:3.0px;background:#6a6a6a;"></div><div style="left:437.6px;top:600.0px;width:1.0px;height:8.0px;background:#8a8a8a;"></div><div style="left:439.6px;top:602.0px;color:#b4b4b4;font-size:11.5px;font-weight:normal;font-family:'Liberation Sans', sans-serif;line-height:1;white-space:nowrap;">0:30</div><div style="left:458.4px;top:600.0px;width:1.0px;height:3.0px;background:#6a6a6a;"></div><div style="left:479.1px;top:600.0px;width:1.0px;height:3.0px;background:#6a6a6a;"></div><div style="left:499.9px;top:600.0px;width:1.0px;height:3.0px;background:#6a6a6a;"></div><div style="left:520.6px;top:600.0px;width:1.0px;height:3.0px;background:#6a6a6a;"></div><div style="left:542.0px;top:600.0px;width:1.0px;height:8.0px;background:#8a8a8a;"></div><div style="left:544.0px;top:602.0px;color:#b4b4b4;font-size:11.5px;font-weight:normal;font-family:'Liberation Sans', sans-serif;line-height:1;white-space:nowrap;">0:35</div><div style="left:562.8px;top:600.0px;width:1.0px;height:3.0px;background:#6a6a6a;"></div><div style="left:583.5px;top:600.0px;width:1.0px;height:3.0px;background:#6a6a6a;"></div><div style="left:604.3px;top:600.0px;width:1.0px;height:3.0px;background:#6a6a6a;"></div><div style="left:625.0px;top:600.0px;width:1.0px;height:3.0px;background:#6a6a6a;"></div><div style="left:646.4px;top:600.0px;width:1.0px;height:8.0px;background:#8a8a8a;"></div><div style="left:648.4px;top:602.0px;color:#b4b4b4;font-size:11.5px;font-weight:normal;font-family:'Liberation Sans', sans-serif;line-height:1;white-space:nowrap;">0:40</div><div style="left:667.2px;top:600.0px;width:1.0px;height:3.0px;background:#6a6a6a;"></div><div style="left:687.9px;top:600.0px;width:1.0px;height:3.0px;background:#6a6a6a;"></div><div style="left:708.7px;top:600.0px;width:1.0px;height:3.0px;background:#6a6a6a;"></div><div style="left:729.4px;top:600.0px;width:1.0px;height:3.0px;background:#6a6a6a;"></div><div style="left:750.8px;top:600.0px;width:1.0px;height:8.0px;background:#8a8a8a;"></div><div style="left:752.8px;top:602.0px;color:#b4b4b4;font-size:11.5px;font-weight:normal;font-family:'Liberation Sans', sans-serif;line-height:1;white-space:nowrap;">0:45</div><div style="left:771.6px;top:600.0px;width:1.0px;height:3.0px;background:#6a6a6a;"></div><div style="left:792.3px;top:600.0px;width:1.0px;height:3.0px;background:#6a6a6a;"></div><div style="left:813.1px;top:600.0px;width:1.0px;height:3.0px;background:#6a6a6a;"></div><div style="left:833.8px;top:600.0px;width:1.0px;height:3.0px;background:#6a6a6a;"></div><div style="left:855.2px;top:600.0px;width:1.0px;height:8.0px;background:#8a8a8a;"></div><div style="left:857.2px;top:602.0px;color:#b4b4b4;font-size:11.5px;font-weight:normal;font-family:'Liberation Sans', sans-serif;line-height:1;white-space:nowrap;">0:50</div><div style="left:876.0px;top:600.0px;width:1.0px;height:3.0px;background:#6a6a6a;"></div><div style="left:896.7px;top:600.0px;width:1.0px;height:3.0px;background:#6a6a6a;"></div><div style="left:917.5px;top:600.0px;width:1.0px;height:3.0px;background:#6a6a6a;"></div><div style="left:938.2px;top:600.0px;width:1.0px;height:3.0px;background:#6a6a6a;"></div><div style="left:959.6px;top:600.0px;width:1.0px;height:8.0px;background:#8a8a8a;"></div><div style="left:961.6px;top:602.0px;color:#b4b4b4;font-size:11.5px;font-weight:normal;font-family:'Liberation Sans', sans-serif;line-height:1;white-space:nowrap;">0:55</div><div style="left:980.4px;top:600.0px;width:1.0px;height:3.0px;background:#6a6a6a;"></div><div style="left:1001.1px;top:600.0px;width:1.0px;height:3.0px;background:#6a6a6a;"></div><div style="left:1021.9px;top:600.0px;width:1.0px;height:3.0px;background:#6a6a6a;"></div><div style="left:1042.6px;top:600.0px;width:1.0px;height:3.0px;background:#6a6a6a;"></div><div style="left:1064.0px;top:600.0px;width:1.0px;height:8.0px;background:#8a8a8a;"></div><div style="left:1066.0px;top:602.0px;color:#b4b4b4;font-size:11.5px;font-weight:normal;font-family:'Liberation Sans', sans-serif;line-height:1;white-space:nowrap;">1:00</div><div style="left:1084.8px;top:600.0px;width:1.0px;height:3.0px;background:#6a6a6a;"></div><div style="left:1105.5px;top:600.0px;width:1.0px;height:3.0px;background:#6a6a6a;"></div><div style="left:1126.3px;top:600.0px;width:1.0px;height:3.0px;background:#6a6a6a;"></div><div style="left:1147.0px;top:600.0px;width:1.0px;height:3.0px;background:#6a6a6a;"></div><div style="left:1168.4px;top:600.0px;width:1.0px;height:8.0px;background:#8a8a8a;"></div><div style="left:1170.4px;top:602.0px;color:#b4b4b4;font-size:11.5px;font-weight:normal;font-family:'Liberation Sans', sans-serif;line-height:1;white-space:nowrap;">1:05</div><div style="left:1189.2px;top:600.0px;width:1.0px;height:3.0px;background:#6a6a6a;"></div><div style="left:1209.9px;top:600.0px;width:1.0px;height:3.0px;background:#6a6a6a;"></div><div style="left:1230.7px;top:600.0px;width:1.0px;height:3.0px;background:#6a6a6a;"></div><div style="left:1251.4px;top:600.0px;width:1.0px;height:3.0px;background:#6a6a6a;"></div><div style="left:1272.8px;top:600.0px;width:1.0px;height:8.0px;background:#8a8a8a;"></div><div style="left:1274.8px;top:602.0px;color:#b4b4b4;font-size:11.5px;font-weight:normal;font-family:'Liberation Sans', sans-serif;line-height:1;white-space:nowrap;">1:10</div><div style="left:1293.6px;top:600.0px;width:1.0px;height:3.0px;background:#6a6a6a;"></div><div style="left:1314.3px;top:600.0px;width:1.0px;height:3.0px;background:#6a6a6a;"></div><div style="left:1335.1px;top:600.0px;width:1.0px;height:3.0px;background:#6a6a6a;"></div><div style="left:1355.8px;top:600.0px;width:1.0px;height:3.0px;background:#6a6a6a;"></div><svg style="left:494px;top:599px" width="10" height="6"><path d="M0 5.5 L10 5.5 L5 0Z" fill="#2ab8c8"/></svg><div style="left:1310.5px;top:598.0px;width:244.0px;height:27.0px;background:#2c2c2c;"></div><div style="left:1312.0px;top:604.0px;width:18.0px;height:13.5px;background:#1e1e1e;"></div><svg style="left:1314px;top:605px" width="14" height="12"><path d="M2 4 V8 M4.5 2 V10 M7 0.5 V11.5 M9.5 2 V10 M12 4 V8" stroke="#c0c0c0" stroke-width="1.2"/></svg><div style="left:1331.0px;top:604.0px;width:37.5px;height:13.5px;line-height:13.5px;background:#1e1e1e;color:#c8c8c8;font-size:11px;font-weight:normal;font-family:'Liberation Sans', sans-serif;text-align:center;white-space:nowrap;">1.00x</div><div style="left:1385.0px;top:604.0px;width:16.5px;height:13.5px;line-height:13.5px;background:#1e1e1e;color:#d0d0d0;font-size:11px;font-weight:normal;font-family:'Liberation Sans', sans-serif;text-align:center;white-space:nowrap;">H</div><div style="left:1405.0px;top:604.0px;width:17.5px;height:13.5px;line-height:13.5px;background:#1e1e1e;color:#d0d0d0;font-size:11px;font-weight:normal;font-family:'Liberation Sans', sans-serif;text-align:center;white-space:nowrap;">W</div><div style="left:0.0px;top:620.0px;width:1564.0px;height:340.0px;background:#262626;"></div><div style="left:10.0px;top:625.5px;width:101.0px;height:286.0px;background:#353535;"></div><div style="left:10.0px;top:625.5px;width:101.0px;height:18.5px;background:#95a5fb;"></div><div style="left:14.0px;top:630.0px;color:#1f2456;font-size:11px;font-weight:bold;font-family:'Liberation Sans', sans-serif;line-height:1;white-space:nowrap;">Drums</div><svg style="left:95px;top:627.5px" width="14" height="14"><circle cx="7" cy="7" r="6.2" fill="none" stroke="#1f2456" stroke-width="1.4"/><path d="M3.6 5 L10.4 5 L7 9.8Z" fill="#1f2456"/></svg><div style="left:17.2px;top:652px;width:38px;height:13px;border-radius:6.5px;background:#222;color:#d0d0d0;font-size:11px;line-height:13px;text-align:center;font-family:'Liberation Sans',sans-serif">-6.44</div><div style="left:17.2px;top:671.5px;width:38.5px;height:13.0px;line-height:13.0px;background:#222;color:#d0d0d0;font-size:11px;font-weight:normal;font-family:'Liberation Sans', sans-serif;text-align:center;white-space:nowrap;">-1.0</div><svg style="left:59.3px;top:675.2px" width="14" height="14"><path d="M0.5 0.5 L13 7 L0.5 13.5Z" fill="#bdbdbd"/></svg><div style="left:73.0px;top:652.0px;width:13.5px;height:253.0px;background:#1b1b1b;"></div><div style="left:73.5px;top:705.0px;width:6.0px;height:1.5px;background:#e0a020;"></div><div style="left:73.5px;top:780.6px;width:6.0px;height:124.4px;background:#22e56a;"></div><div style="left:80.0px;top:705.0px;width:6.0px;height:1.5px;background:#e0a020;"></div><div style="left:80.0px;top:779.8px;width:6.0px;height:125.2px;background:#22e56a;"></div><div style="left:79.2px;top:652.0px;width:1.0px;height:253.0px;background:#2e2e2e;"></div><div style="left:73.0px;top:677.2px;width:13.5px;height:1.0px;background:#8a8a8a;"></div><div style="left:90.0px;top:651.5px;color:#a8a8a8;font-size:11px;font-weight:normal;font-family:'Liberation Sans', sans-serif;line-height:1;white-space:nowrap;">6</div><div style="left:68.0px;top:656.5px;width:3.0px;height:1.0px;background:#5a5a5a;"></div><div style="left:90.0px;top:672.2px;color:#a8a8a8;font-size:11px;font-weight:normal;font-family:'Liberation Sans', sans-serif;line-height:1;white-space:nowrap;">0</div><div style="left:68.0px;top:677.2px;width:3.0px;height:1.0px;background:#5a5a5a;"></div><div style="left:90.0px;top:697.2px;color:#a8a8a8;font-size:11px;font-weight:normal;font-family:'Liberation Sans', sans-serif;line-height:1;white-space:nowrap;">6</div><div style="left:68.0px;top:702.2px;width:3.0px;height:1.0px;background:#5a5a5a;"></div><div style="left:90.0px;top:722.1px;color:#a8a8a8;font-size:11px;font-weight:normal;font-family:'Liberation Sans', sans-serif;line-height:1;white-space:nowrap;">12</div><div style="left:68.0px;top:727.1px;width:3.0px;height:1.0px;background:#5a5a5a;"></div><div style="left:90.0px;top:747.0px;color:#a8a8a8;font-size:11px;font-weight:normal;font-family:'Liberation Sans', sans-serif;line-height:1;white-space:nowrap;">18</div><div style="left:68.0px;top:752.0px;width:3.0px;height:1.0px;background:#5a5a5a;"></div><div style="left:90.0px;top:771.1px;color:#a8a8a8;font-size:11px;font-weight:normal;font-family:'Liberation Sans', sans-serif;line-height:1;white-space:nowrap;">24</div><div style="left:68.0px;top:776.1px;width:3.0px;height:1.0px;background:#5a5a5a;"></div><div style="left:90.0px;top:797.5px;color:#a8a8a8;font-size:11px;font-weight:normal;font-family:'Liberation Sans', sans-serif;line-height:1;white-space:nowrap;">30</div><div style="left:68.0px;top:802.5px;width:3.0px;height:1.0px;background:#5a5a5a;"></div><div style="left:90.0px;top:819.5px;color:#a8a8a8;font-size:11px;font-weight:normal;font-family:'Liberation Sans', sans-serif;line-height:1;white-space:nowrap;">36</div><div style="left:68.0px;top:824.5px;width:3.0px;height:1.0px;background:#5a5a5a;"></div><div style="left:90.0px;top:838.5px;color:#a8a8a8;font-size:11px;font-weight:normal;font-family:'Liberation Sans', sans-serif;line-height:1;white-space:nowrap;">42</div><div style="left:68.0px;top:843.5px;width:3.0px;height:1.0px;background:#5a5a5a;"></div><div style="left:90.0px;top:855.5px;color:#a8a8a8;font-size:11px;font-weight:normal;font-family:'Liberation Sans', sans-serif;line-height:1;white-space:nowrap;">48</div><div style="left:68.0px;top:860.5px;width:3.0px;height:1.0px;background:#5a5a5a;"></div><div style="left:90.0px;top:870.5px;color:#a8a8a8;font-size:11px;font-weight:normal;font-family:'Liberation Sans', sans-serif;line-height:1;white-space:nowrap;">54</div><div style="left:68.0px;top:875.5px;width:3.0px;height:1.0px;background:#5a5a5a;"></div><div style="left:90.0px;top:884.5px;color:#a8a8a8;font-size:11px;font-weight:normal;font-family:'Liberation Sans', sans-serif;line-height:1;white-space:nowrap;">60</div><div style="left:68.0px;top:889.5px;width:3.0px;height:1.0px;background:#5a5a5a;"></div><svg style="left:21px;top:808.5px" width="32" height="34"><path d="M8.48 30.57 A13.8 13.8 0 1 1 23.52 30.57" fill="none" stroke="#141414" stroke-width="2.4"/><path d="M16 4.5 V21" stroke="#141414" stroke-width="1.8"/><path d="M12.2 0.8 H19.8 L16 4.5Z" fill="#141414"/></svg><div style="left:25.0px;top:844.5px;width:24.5px;height:24.0px;line-height:24.0px;background:#f8a85a;color:#1a1a1a;font-size:14px;font-weight:bold;font-family:'Liberation Sans', sans-serif;text-align:center;white-space:nowrap;">1</div><div style="left:25.0px;top:873.0px;width:24.5px;height:14.0px;line-height:14.0px;background:#222;color:#d0d0d0;font-size:11px;font-weight:normal;font-family:'Liberation Sans', sans-serif;text-align:center;white-space:nowrap;">S</div><div style="left:25.0px;top:892.0px;width:24.5px;height:13.5px;background:#222;"></div><svg style="left:31.7px;top:893.3px" width="11" height="11"><circle cx="5.5" cy="5.5" r="4.4" fill="#c8c8c8"/><path d="M5.5 2.5 V5.8 L3.5 7.5" stroke="#262626" stroke-width="1.3" fill="none"/></svg><div style="left:10.0px;top:914px;width:101.0px;height:6.5px;background:#95a5fb;border-radius:0 0 0 4px"></div><div style="left:113.0px;top:625.5px;width:101.0px;height:286.0px;background:#353535;"></div><div style="left:113.0px;top:625.5px;width:101.0px;height:18.5px;background:#95a5fb;"></div><div style="left:117.0px;top:630.0px;color:#1f2456;font-size:11px;font-weight:bold;font-family:'Liberation Sans', sans-serif;line-height:1;white-space:nowrap;">Breaks</div><div style="left:120.2px;top:652px;width:38px;height:13px;border-radius:6.5px;background:#222;color:#d0d0d0;font-size:11px;line-height:13px;text-align:center;font-family:'Liberation Sans',sans-serif">-10.2</div><div style="left:120.2px;top:671.5px;width:38.5px;height:13.0px;line-height:13.0px;background:#222;color:#d0d0d0;font-size:11px;font-weight:normal;font-family:'Liberation Sans', sans-serif;text-align:center;white-space:nowrap;">-9.4</div><svg style="left:162.3px;top:709.8px" width="14" height="14"><path d="M0.5 0.5 L13 7 L0.5 13.5Z" fill="#bdbdbd"/></svg><div style="left:176.0px;top:652.0px;width:13.5px;height:253.0px;background:#1b1b1b;"></div><div style="left:176.5px;top:720.0px;width:6.0px;height:2.0px;background:#d8c020;"></div><div style="left:176.5px;top:722.0px;width:6.0px;height:25.0px;background:#9aa82a;"></div><div style="left:176.5px;top:747.0px;width:6.0px;height:36.0px;background:#2aa84a;"></div><div style="left:176.5px;top:783.4px;width:6.0px;height:121.6px;background:#22e56a;"></div><div style="left:183.0px;top:720.0px;width:6.0px;height:2.0px;background:#d8c020;"></div><div style="left:183.0px;top:722.0px;width:6.0px;height:25.0px;background:#9aa82a;"></div><div style="left:183.0px;top:747.0px;width:6.0px;height:36.0px;background:#2aa84a;"></div><div style="left:183.0px;top:783.4px;width:6.0px;height:121.6px;background:#22e56a;"></div><div style="left:182.2px;top:652.0px;width:1.0px;height:253.0px;background:#2e2e2e;"></div><div style="left:176.0px;top:677.2px;width:13.5px;height:1.0px;background:#8a8a8a;"></div><div style="left:193.0px;top:651.5px;color:#a8a8a8;font-size:11px;font-weight:normal;font-family:'Liberation Sans', sans-serif;line-height:1;white-space:nowrap;">6</div><div style="left:171.0px;top:656.5px;width:3.0px;height:1.0px;background:#5a5a5a;"></div><div style="left:193.0px;top:672.2px;color:#a8a8a8;font-size:11px;font-weight:normal;font-family:'Liberation Sans', sans-serif;line-height:1;white-space:nowrap;">0</div><div style="left:171.0px;top:677.2px;width:3.0px;height:1.0px;background:#5a5a5a;"></div><div style="left:193.0px;top:697.2px;color:#a8a8a8;font-size:11px;font-weight:normal;font-family:'Liberation Sans', sans-serif;line-height:1;white-space:nowrap;">6</div><div style="left:171.0px;top:702.2px;width:3.0px;height:1.0px;background:#5a5a5a;"></div><div style="left:193.0px;top:722.1px;color:#a8a8a8;font-size:11px;font-weight:normal;font-family:'Liberation Sans', sans-serif;line-height:1;white-space:nowrap;">12</div><div style="left:171.0px;top:727.1px;width:3.0px;height:1.0px;background:#5a5a5a;"></div><div style="left:193.0px;top:747.0px;color:#a8a8a8;font-size:11px;font-weight:normal;font-family:'Liberation Sans', sans-serif;line-height:1;white-space:nowrap;">18</div><div style="left:171.0px;top:752.0px;width:3.0px;height:1.0px;background:#5a5a5a;"></div><div style="left:193.0px;top:771.1px;color:#a8a8a8;font-size:11px;font-weight:normal;font-family:'Liberation Sans', sans-serif;line-height:1;white-space:nowrap;">24</div><div style="left:171.0px;top:776.1px;width:3.0px;height:1.0px;background:#5a5a5a;"></div><div style="left:193.0px;top:797.5px;color:#a8a8a8;font-size:11px;font-weight:normal;font-family:'Liberation Sans', sans-serif;line-height:1;white-space:nowrap;">30</div><div style="left:171.0px;top:802.5px;width:3.0px;height:1.0px;background:#5a5a5a;"></div><div style="left:193.0px;top:819.5px;color:#a8a8a8;font-size:11px;font-weight:normal;font-family:'Liberation Sans', sans-serif;line-height:1;white-space:nowrap;">36</div><div style="left:171.0px;top:824.5px;width:3.0px;height:1.0px;background:#5a5a5a;"></div><div style="left:193.0px;top:838.5px;color:#a8a8a8;font-size:11px;font-weight:normal;font-family:'Liberation Sans', sans-serif;line-height:1;white-space:nowrap;">42</div><div style="left:171.0px;top:843.5px;width:3.0px;height:1.0px;background:#5a5a5a;"></div><div style="left:193.0px;top:855.5px;color:#a8a8a8;font-size:11px;font-weight:normal;font-family:'Liberation Sans', sans-serif;line-height:1;white-space:nowrap;">48</div><div style="left:171.0px;top:860.5px;width:3.0px;height:1.0px;background:#5a5a5a;"></div><div style="left:193.0px;top:870.5px;color:#a8a8a8;font-size:11px;font-weight:normal;font-family:'Liberation Sans', sans-serif;line-height:1;white-space:nowrap;">54</div><div style="left:171.0px;top:875.5px;width:3.0px;height:1.0px;background:#5a5a5a;"></div><div style="left:193.0px;top:884.5px;color:#a8a8a8;font-size:11px;font-weight:normal;font-family:'Liberation Sans', sans-serif;line-height:1;white-space:nowrap;">60</div><div style="left:171.0px;top:889.5px;width:3.0px;height:1.0px;background:#5a5a5a;"></div><svg style="left:124px;top:808.5px" width="32" height="34"><path d="M8.48 30.57 A13.8 13.8 0 1 1 23.52 30.57" fill="none" stroke="#141414" stroke-width="2.4"/><path d="M16 4.5 V21" stroke="#141414" stroke-width="1.8"/><path d="M12.2 0.8 H19.8 L16 4.5Z" fill="#141414"/></svg><div style="left:128.0px;top:844.5px;width:24.5px;height:24.0px;line-height:24.0px;background:#f8a85a;color:#1a1a1a;font-size:14px;font-weight:bold;font-family:'Liberation Sans', sans-serif;text-align:center;white-space:nowrap;">2</div><div style="left:128.0px;top:873.0px;width:24.5px;height:14.0px;line-height:14.0px;background:#222;color:#d0d0d0;font-size:11px;font-weight:normal;font-family:'Liberation Sans', sans-serif;text-align:center;white-space:nowrap;">S</div><div style="left:128.0px;top:892.0px;width:24.5px;height:13.5px;background:#222;"></div><svg style="left:134.7px;top:893.3px" width="11" height="11"><circle cx="5.5" cy="5.5" r="4.2" fill="#6a6a6a"/></svg><div style="left:113.0px;top:914px;width:101.0px;height:6.5px;background:#95a5fb;border-radius:0"></div><div style="left:216.0px;top:625.5px;width:101.0px;height:286.0px;background:#353535;"></div><div style="left:216.0px;top:625.5px;width:101.0px;height:18.5px;background:#9ccbf7;"></div><div style="left:220.0px;top:630.0px;color:#1f2f56;font-size:11px;font-weight:bold;font-family:'Liberation Sans', sans-serif;line-height:1;white-space:nowrap;">Percussion</div><svg style="left:301px;top:627.5px" width="14" height="14"><circle cx="7" cy="7" r="6.2" fill="none" stroke="#1f2f56" stroke-width="1.4"/><rect x="4.5" y="4.5" width="5" height="5" fill="none" stroke="#1f2f56" stroke-width="1"/><path d="M4.5 6.2 H9.5 M4.5 7.8 H9.5" stroke="#1f2f56" stroke-width="0.9"/></svg><div style="left:223.2px;top:652px;width:38px;height:13px;border-radius:6.5px;background:#222;color:#d0d0d0;font-size:11px;line-height:13px;text-align:center;font-family:'Liberation Sans',sans-serif">-21.2</div><div style="left:223.2px;top:671.5px;width:38.5px;height:13.0px;line-height:13.0px;background:#222;color:#d0d0d0;font-size:11px;font-weight:normal;font-family:'Liberation Sans', sans-serif;text-align:center;white-space:nowrap;">0</div><svg style="left:265.3px;top:670.7px" width="14" height="14"><path d="M0.5 0.5 L13 7 L0.5 13.5Z" fill="#bdbdbd"/></svg><div style="left:279.0px;top:652.0px;width:13.5px;height:253.0px;background:#1b1b1b;"></div><div style="left:279.5px;top:767.0px;width:6.0px;height:1.5px;background:#22e56a;"></div><div style="left:279.5px;top:845.8px;width:6.0px;height:16.2px;background:#1a9a4a;"></div><div style="left:279.5px;top:862.0px;width:6.0px;height:43.0px;background:#22e56a;"></div><div style="left:286.0px;top:804.0px;width:6.0px;height:1.5px;background:#22e56a;"></div><div style="left:286.0px;top:853.7px;width:6.0px;height:16.9px;background:#1a9a4a;"></div><div style="left:286.0px;top:870.6px;width:6.0px;height:34.4px;background:#22e56a;"></div><div style="left:285.2px;top:652.0px;width:1.0px;height:253.0px;background:#2e2e2e;"></div><div style="left:279.0px;top:677.2px;width:13.5px;height:1.0px;background:#8a8a8a;"></div><div style="left:296.0px;top:651.5px;color:#a8a8a8;font-size:11px;font-weight:normal;font-family:'Liberation Sans', sans-serif;line-height:1;white-space:nowrap;">6</div><div style="left:274.0px;top:656.5px;width:3.0px;height:1.0px;background:#5a5a5a;"></div><div style="left:296.0px;top:672.2px;color:#a8a8a8;font-size:11px;font-weight:normal;font-family:'Liberation Sans', sans-serif;line-height:1;white-space:nowrap;">0</div><div style="left:274.0px;top:677.2px;width:3.0px;height:1.0px;background:#5a5a5a;"></div><div style="left:296.0px;top:697.2px;color:#a8a8a8;font-size:11px;font-weight:normal;font-family:'Liberation Sans', sans-serif;line-height:1;white-space:nowrap;">6</div><div style="left:274.0px;top:702.2px;width:3.0px;height:1.0px;background:#5a5a5a;"></div><div style="left:296.0px;top:722.1px;color:#a8a8a8;font-size:11px;font-weight:normal;font-family:'Liberation Sans', sans-serif;line-height:1;white-space:nowrap;">12</div><div style="left:274.0px;top:727.1px;width:3.0px;height:1.0px;background:#5a5a5a;"></div><div style="left:296.0px;top:747.0px;color:#a8a8a8;font-size:11px;font-weight:normal;font-family:'Liberation Sans', sans-serif;line-height:1;white-space:nowrap;">18</div><div style="left:274.0px;top:752.0px;width:3.0px;height:1.0px;background:#5a5a5a;"></div><div style="left:296.0px;top:771.1px;color:#a8a8a8;font-size:11px;font-weight:normal;font-family:'Liberation Sans', sans-serif;line-height:1;white-space:nowrap;">24</div><div style="left:274.0px;top:776.1px;width:3.0px;height:1.0px;background:#5a5a5a;"></div><div style="left:296.0px;top:797.5px;color:#a8a8a8;font-size:11px;font-weight:normal;font-family:'Liberation Sans', sans-serif;line-height:1;white-space:nowrap;">30</div><div style="left:274.0px;top:802.5px;width:3.0px;height:1.0px;background:#5a5a5a;"></div><div style="left:296.0px;top:819.5px;color:#a8a8a8;font-size:11px;font-weight:normal;font-family:'Liberation Sans', sans-serif;line-height:1;white-space:nowrap;">36</div><div style="left:274.0px;top:824.5px;width:3.0px;height:1.0px;background:#5a5a5a;"></div><div style="left:296.0px;top:838.5px;color:#a8a8a8;font-size:11px;font-weight:normal;font-family:'Liberation Sans', sans-serif;line-height:1;white-space:nowrap;">42</div><div style="left:274.0px;top:843.5px;width:3.0px;height:1.0px;background:#5a5a5a;"></div><div style="left:296.0px;top:855.5px;color:#a8a8a8;font-size:11px;font-weight:normal;font-family:'Liberation Sans', sans-serif;line-height:1;white-space:nowrap;">48</div><div style="left:274.0px;top:860.5px;width:3.0px;height:1.0px;background:#5a5a5a;"></div><div style="left:296.0px;top:870.5px;color:#a8a8a8;font-size:11px;font-weight:normal;font-family:'Liberation Sans', sans-serif;line-height:1;white-space:nowrap;">54</div><div style="left:274.0px;top:875.5px;width:3.0px;height:1.0px;background:#5a5a5a;"></div><div style="left:296.0px;top:884.5px;color:#a8a8a8;font-size:11px;font-weight:normal;font-family:'Liberation Sans', sans-serif;line-height:1;white-space:nowrap;">60</div><div style="left:274.0px;top:889.5px;width:3.0px;height:1.0px;background:#5a5a5a;"></div><svg style="left:227px;top:808.5px" width="32" height="34"><path d="M8.48 30.57 A13.8 13.8 0 1 1 23.52 30.57" fill="none" stroke="#141414" stroke-width="2.4"/><path d="M16 4.5 V21" stroke="#141414" stroke-width="1.8"/><path d="M12.2 0.8 H19.8 L16 4.5Z" fill="#141414"/></svg><div style="left:231.0px;top:844.5px;width:24.5px;height:24.0px;line-height:24.0px;background:#f8a85a;color:#1a1a1a;font-size:14px;font-weight:bold;font-family:'Liberation Sans', sans-serif;text-align:center;white-space:nowrap;">3</div><div style="left:231.0px;top:873.0px;width:24.5px;height:14.0px;line-height:14.0px;background:#222;color:#d0d0d0;font-size:11px;font-weight:normal;font-family:'Liberation Sans', sans-serif;text-align:center;white-space:nowrap;">S</div><div style="left:216.0px;top:914px;width:101.0px;height:6.5px;background:#9ccbf7;border-radius:0"></div><div style="left:319.0px;top:625.5px;width:101.5px;height:286.0px;background:#434343;"></div><div style="left:319.0px;top:625.5px;width:101.5px;height:18.5px;background:#5cf8e2;"></div><div style="left:323.0px;top:630.0px;color:#064a40;font-size:11px;font-weight:bold;font-family:'Liberation Sans', sans-serif;line-height:1;white-space:nowrap;">Bass</div><div style="left:326.2px;top:652px;width:38px;height:13px;border-radius:6.5px;background:#222;color:#d0d0d0;font-size:11px;line-height:13px;text-align:center;font-family:'Liberation Sans',sans-serif">-10.8</div><div style="left:326.2px;top:671.5px;width:38.5px;height:13.0px;line-height:13.0px;background:#222;color:#d0d0d0;font-size:11px;font-weight:normal;font-family:'Liberation Sans', sans-serif;text-align:center;white-space:nowrap;">-7.7</div><svg style="left:368.3px;top:703.3px" width="14" height="14"><path d="M0.5 0.5 L13 7 L0.5 13.5Z" fill="#bdbdbd"/></svg><div style="left:382.0px;top:652.0px;width:13.5px;height:253.0px;background:#1b1b1b;"></div><div style="left:382.5px;top:723.0px;width:6.0px;height:1.5px;background:#d8c020;"></div><div style="left:382.5px;top:765.0px;width:6.0px;height:140.0px;background:#22e56a;"></div><div style="left:389.0px;top:723.0px;width:6.0px;height:1.5px;background:#d8c020;"></div><div style="left:389.0px;top:765.0px;width:6.0px;height:140.0px;background:#22e56a;"></div><div style="left:388.2px;top:652.0px;width:1.0px;height:253.0px;background:#2e2e2e;"></div><div style="left:382.0px;top:677.2px;width:13.5px;height:1.0px;background:#8a8a8a;"></div><div style="left:399.0px;top:651.5px;color:#a8a8a8;font-size:11px;font-weight:normal;font-family:'Liberation Sans', sans-serif;line-height:1;white-space:nowrap;">6</div><div style="left:377.0px;top:656.5px;width:3.0px;height:1.0px;background:#5a5a5a;"></div><div style="left:399.0px;top:672.2px;color:#a8a8a8;font-size:11px;font-weight:normal;font-family:'Liberation Sans', sans-serif;line-height:1;white-space:nowrap;">0</div><div style="left:377.0px;top:677.2px;width:3.0px;height:1.0px;background:#5a5a5a;"></div><div style="left:399.0px;top:697.2px;color:#a8a8a8;font-size:11px;font-weight:normal;font-family:'Liberation Sans', sans-serif;line-height:1;white-space:nowrap;">6</div><div style="left:377.0px;top:702.2px;width:3.0px;height:1.0px;background:#5a5a5a;"></div><div style="left:399.0px;top:722.1px;color:#a8a8a8;font-size:11px;font-weight:normal;font-family:'Liberation Sans', sans-serif;line-height:1;white-space:nowrap;">12</div><div style="left:377.0px;top:727.1px;width:3.0px;height:1.0px;background:#5a5a5a;"></div><div style="left:399.0px;top:747.0px;color:#a8a8a8;font-size:11px;font-weight:normal;font-family:'Liberation Sans', sans-serif;line-height:1;white-space:nowrap;">18</div><div style="left:377.0px;top:752.0px;width:3.0px;height:1.0px;background:#5a5a5a;"></div><div style="left:399.0px;top:771.1px;color:#a8a8a8;font-size:11px;font-weight:normal;font-family:'Liberation Sans', sans-serif;line-height:1;white-space:nowrap;">24</div><div style="left:377.0px;top:776.1px;width:3.0px;height:1.0px;background:#5a5a5a;"></div><div style="left:399.0px;top:797.5px;color:#a8a8a8;font-size:11px;font-weight:normal;font-family:'Liberation Sans', sans-serif;line-height:1;white-space:nowrap;">30</div><div style="left:377.0px;top:802.5px;width:3.0px;height:1.0px;background:#5a5a5a;"></div><div style="left:399.0px;top:819.5px;color:#a8a8a8;font-size:11px;font-weight:normal;font-family:'Liberation Sans', sans-serif;line-height:1;white-space:nowrap;">36</div><div style="left:377.0px;top:824.5px;width:3.0px;height:1.0px;background:#5a5a5a;"></div><div style="left:399.0px;top:838.5px;color:#a8a8a8;font-size:11px;font-weight:normal;font-family:'Liberation Sans', sans-serif;line-height:1;white-space:nowrap;">42</div><div style="left:377.0px;top:843.5px;width:3.0px;height:1.0px;background:#5a5a5a;"></div><div style="left:399.0px;top:855.5px;color:#a8a8a8;font-size:11px;font-weight:normal;font-family:'Liberation Sans', sans-serif;line-height:1;white-space:nowrap;">48</div><div style="left:377.0px;top:860.5px;width:3.0px;height:1.0px;background:#5a5a5a;"></div><div style="left:399.0px;top:870.5px;color:#a8a8a8;font-size:11px;font-weight:normal;font-family:'Liberation Sans', sans-serif;line-height:1;white-space:nowrap;">54</div><div style="left:377.0px;top:875.5px;width:3.0px;height:1.0px;background:#5a5a5a;"></div><div style="left:399.0px;top:884.5px;color:#a8a8a8;font-size:11px;font-weight:normal;font-family:'Liberation Sans', sans-serif;line-height:1;white-space:nowrap;">60</div><div style="left:377.0px;top:889.5px;width:3.0px;height:1.0px;background:#5a5a5a;"></div><svg style="left:330px;top:808.5px" width="32" height="34"><path d="M8.48 30.57 A13.8 13.8 0 1 1 23.52 30.57" fill="none" stroke="#141414" stroke-width="2.4"/><path d="M16 4.5 V21" stroke="#141414" stroke-width="1.8"/><path d="M12.2 0.8 H19.8 L16 4.5Z" fill="#141414"/></svg><div style="left:334.0px;top:844.5px;width:24.5px;height:24.0px;line-height:24.0px;background:#f8a85a;color:#1a1a1a;font-size:14px;font-weight:bold;font-family:'Liberation Sans', sans-serif;text-align:center;white-space:nowrap;">8</div><div style="left:334.0px;top:873.0px;width:24.5px;height:14.0px;line-height:14.0px;background:#222;color:#d0d0d0;font-size:11px;font-weight:normal;font-family:'Liberation Sans', sans-serif;text-align:center;white-space:nowrap;">S</div><div style="left:334.0px;top:892.0px;width:24.5px;height:13.5px;background:#222;"></div><svg style="left:340.7px;top:893.3px" width="11" height="11"><circle cx="5.5" cy="5.5" r="4.4" fill="#c8c8c8"/><path d="M5.5 2.5 V5.8 L3.5 7.5" stroke="#262626" stroke-width="1.3" fill="none"/></svg><div style="left:319.0px;top:914px;width:101.5px;height:6.5px;background:#5cf8e2;border-radius:0"></div><div style="left:422.5px;top:625.5px;width:101.0px;height:286.0px;background:#353535;"></div><div style="left:422.5px;top:625.5px;width:101.0px;height:18.5px;background:#5cf8e2;"></div><div style="left:426.5px;top:630.0px;color:#064a40;font-size:11px;font-weight:bold;font-family:'Liberation Sans', sans-serif;line-height:1;white-space:nowrap;">Bass Drop</div><svg style="left:507.5px;top:627.5px" width="14" height="14"><circle cx="7" cy="7" r="6.2" fill="none" stroke="#064a40" stroke-width="1.4"/><path d="M3.6 5 L10.4 5 L7 9.8Z" fill="#064a40"/></svg><div style="left:429.7px;top:652px;width:38px;height:13px;border-radius:6.5px;background:#222;color:#d0d0d0;font-size:11px;line-height:13px;text-align:center;font-family:'Liberation Sans',sans-serif">−<span style="font-size:14px">∞</span></div><div style="left:429.7px;top:671.5px;width:38.5px;height:13.0px;line-height:13.0px;background:#222;color:#d0d0d0;font-size:11px;font-weight:normal;font-family:'Liberation Sans', sans-serif;text-align:center;white-space:nowrap;">-0.2</div><svg style="left:471.8px;top:671.5px" width="14" height="14"><path d="M0.5 0.5 L13 7 L0.5 13.5Z" fill="#bdbdbd"/></svg><div style="left:485.5px;top:652.0px;width:13.5px;height:253.0px;background:#1b1b1b;"></div><div style="left:491.8px;top:652.0px;width:1.0px;height:253.0px;background:#2e2e2e;"></div><div style="left:485.5px;top:677.2px;width:13.5px;height:1.0px;background:#8a8a8a;"></div><div style="left:502.5px;top:651.5px;color:#a8a8a8;font-size:11px;font-weight:normal;font-family:'Liberation Sans', sans-serif;line-height:1;white-space:nowrap;">6</div><div style="left:480.5px;top:656.5px;width:3.0px;height:1.0px;background:#5a5a5a;"></div><div style="left:502.5px;top:672.2px;color:#a8a8a8;font-size:11px;font-weight:normal;font-family:'Liberation Sans', sans-serif;line-height:1;white-space:nowrap;">0</div><div style="left:480.5px;top:677.2px;width:3.0px;height:1.0px;background:#5a5a5a;"></div><div style="left:502.5px;top:697.2px;color:#a8a8a8;font-size:11px;font-weight:normal;font-family:'Liberation Sans', sans-serif;line-height:1;white-space:nowrap;">6</div><div style="left:480.5px;top:702.2px;width:3.0px;height:1.0px;background:#5a5a5a;"></div><div style="left:502.5px;top:722.1px;color:#a8a8a8;font-size:11px;font-weight:normal;font-family:'Liberation Sans', sans-serif;line-height:1;white-space:nowrap;">12</div><div style="left:480.5px;top:727.1px;width:3.0px;height:1.0px;background:#5a5a5a;"></div><div style="left:502.5px;top:747.0px;color:#a8a8a8;font-size:11px;font-weight:normal;font-family:'Liberation Sans', sans-serif;line-height:1;white-space:nowrap;">18</div><div style="left:480.5px;top:752.0px;width:3.0px;height:1.0px;background:#5a5a5a;"></div><div style="left:502.5px;top:771.1px;color:#a8a8a8;font-size:11px;font-weight:normal;font-family:'Liberation Sans', sans-serif;line-height:1;white-space:nowrap;">24</div><div style="left:480.5px;top:776.1px;width:3.0px;height:1.0px;background:#5a5a5a;"></div><div style="left:502.5px;top:797.5px;color:#a8a8a8;font-size:11px;font-weight:normal;font-family:'Liberation Sans', sans-serif;line-height:1;white-space:nowrap;">30</div><div style="left:480.5px;top:802.5px;width:3.0px;height:1.0px;background:#5a5a5a;"></div><div style="left:502.5px;top:819.5px;color:#a8a8a8;font-size:11px;font-weight:normal;font-family:'Liberation Sans', sans-serif;line-height:1;white-space:nowrap;">36</div><div style="left:480.5px;top:824.5px;width:3.0px;height:1.0px;background:#5a5a5a;"></div><div style="left:502.5px;top:838.5px;color:#a8a8a8;font-size:11px;font-weight:normal;font-family:'Liberation Sans', sans-serif;line-height:1;white-space:nowrap;">42</div><div style="left:480.5px;top:843.5px;width:3.0px;height:1.0px;background:#5a5a5a;"></div><div style="left:502.5px;top:855.5px;color:#a8a8a8;font-size:11px;font-weight:normal;font-family:'Liberation Sans', sans-serif;line-height:1;white-space:nowrap;">48</div><div style="left:480.5px;top:860.5px;width:3.0px;height:1.0px;background:#5a5a5a;"></div><div style="left:502.5px;top:870.5px;color:#a8a8a8;font-size:11px;font-weight:normal;font-family:'Liberation Sans', sans-serif;line-height:1;white-space:nowrap;">54</div><div style="left:480.5px;top:875.5px;width:3.0px;height:1.0px;background:#5a5a5a;"></div><div style="left:502.5px;top:884.5px;color:#a8a8a8;font-size:11px;font-weight:normal;font-family:'Liberation Sans', sans-serif;line-height:1;white-space:nowrap;">60</div><div style="left:480.5px;top:889.5px;width:3.0px;height:1.0px;background:#5a5a5a;"></div><svg style="left:433.5px;top:808.5px" width="32" height="34"><path d="M8.48 30.57 A13.8 13.8 0 1 1 23.52 30.57" fill="none" stroke="#141414" stroke-width="2.4"/><path d="M16 4.5 V21" stroke="#141414" stroke-width="1.8"/><path d="M12.2 0.8 H19.8 L16 4.5Z" fill="#141414"/></svg><div style="left:437.5px;top:844.5px;width:24.5px;height:24.0px;line-height:24.0px;background:#f8a85a;color:#1a1a1a;font-size:14px;font-weight:bold;font-family:'Liberation Sans', sans-serif;text-align:center;white-space:nowrap;">9</div><div style="left:437.5px;top:873.0px;width:24.5px;height:14.0px;line-height:14.0px;background:#222;color:#d0d0d0;font-size:11px;font-weight:normal;font-family:'Liberation Sans', sans-serif;text-align:center;white-space:nowrap;">S</div><div style="left:437.5px;top:892.0px;width:24.5px;height:13.5px;background:#222;"></div><svg style="left:444.2px;top:893.3px" width="11" height="11"><circle cx="5.5" cy="5.5" r="4.4" fill="#c8c8c8"/><path d="M5.5 2.5 V5.8 L3.5 7.5" stroke="#262626" stroke-width="1.3" fill="none"/></svg><div style="left:422.5px;top:914px;width:101.0px;height:6.5px;background:#5cf8e2;border-radius:0"></div><div style="left:525.5px;top:625.5px;width:101.5px;height:286.0px;background:#353535;"></div><div style="left:525.5px;top:625.5px;width:101.5px;height:18.5px;background:#f1f6a8;"></div><div style="left:529.5px;top:630.0px;color:#3a3c14;font-size:11px;font-weight:bold;font-family:'Liberation Sans', sans-serif;line-height:1;white-space:nowrap;">Synth Riser</div><svg style="left:611px;top:627.5px" width="14" height="14"><circle cx="7" cy="7" r="6.2" fill="none" stroke="#3a3c14" stroke-width="1.4"/><path d="M3.6 5 L10.4 5 L7 9.8Z" fill="#3a3c14"/></svg><div style="left:532.7px;top:652px;width:38px;height:13px;border-radius:6.5px;background:#222;color:#d0d0d0;font-size:11px;line-height:13px;text-align:center;font-family:'Liberation Sans',sans-serif">-28.2</div><div style="left:532.7px;top:671.5px;width:38.5px;height:13.0px;line-height:13.0px;background:#222;color:#d0d0d0;font-size:11px;font-weight:normal;font-family:'Liberation Sans', sans-serif;text-align:center;white-space:nowrap;">-18.0</div><svg style="left:574.8px;top:745.5px" width="14" height="14"><path d="M0.5 0.5 L13 7 L0.5 13.5Z" fill="#bdbdbd"/></svg><div style="left:588.5px;top:652.0px;width:13.5px;height:253.0px;background:#1b1b1b;"></div><div style="left:589.0px;top:798.0px;width:6.0px;height:1.5px;background:#22e56a;"></div><div style="left:589.0px;top:813.0px;width:6.0px;height:17.0px;background:#1a9a4a;"></div><div style="left:589.0px;top:830.0px;width:6.0px;height:75.0px;background:#22e56a;"></div><div style="left:595.5px;top:795.5px;width:6.0px;height:1.5px;background:#22e56a;"></div><div style="left:595.5px;top:809.0px;width:6.0px;height:21.0px;background:#1a9a4a;"></div><div style="left:595.5px;top:830.0px;width:6.0px;height:75.0px;background:#22e56a;"></div><div style="left:594.8px;top:652.0px;width:1.0px;height:253.0px;background:#2e2e2e;"></div><div style="left:588.5px;top:677.2px;width:13.5px;height:1.0px;background:#8a8a8a;"></div><div style="left:605.5px;top:651.5px;color:#a8a8a8;font-size:11px;font-weight:normal;font-family:'Liberation Sans', sans-serif;line-height:1;white-space:nowrap;">6</div><div style="left:583.5px;top:656.5px;width:3.0px;height:1.0px;background:#5a5a5a;"></div><div style="left:605.5px;top:672.2px;color:#a8a8a8;font-size:11px;font-weight:normal;font-family:'Liberation Sans', sans-serif;line-height:1;white-space:nowrap;">0</div><div style="left:583.5px;top:677.2px;width:3.0px;height:1.0px;background:#5a5a5a;"></div><div style="left:605.5px;top:697.2px;color:#a8a8a8;font-size:11px;font-weight:normal;font-family:'Liberation Sans', sans-serif;line-height:1;white-space:nowrap;">6</div><div style="left:583.5px;top:702.2px;width:3.0px;height:1.0px;background:#5a5a5a;"></div><div style="left:605.5px;top:722.1px;color:#a8a8a8;font-size:11px;font-weight:normal;font-family:'Liberation Sans', sans-serif;line-height:1;white-space:nowrap;">12</div><div style="left:583.5px;top:727.1px;width:3.0px;height:1.0px;background:#5a5a5a;"></div><div style="left:605.5px;top:747.0px;color:#a8a8a8;font-size:11px;font-weight:normal;font-family:'Liberation Sans', sans-serif;line-height:1;white-space:nowrap;">18</div><div style="left:583.5px;top:752.0px;width:3.0px;height:1.0px;background:#5a5a5a;"></div><div style="left:605.5px;top:771.1px;color:#a8a8a8;font-size:11px;font-weight:normal;font-family:'Liberation Sans', sans-serif;line-height:1;white-space:nowrap;">24</div><div style="left:583.5px;top:776.1px;width:3.0px;height:1.0px;background:#5a5a5a;"></div><div style="left:605.5px;top:797.5px;color:#a8a8a8;font-size:11px;font-weight:normal;font-family:'Liberation Sans', sans-serif;line-height:1;white-space:nowrap;">30</div><div style="left:583.5px;top:802.5px;width:3.0px;height:1.0px;background:#5a5a5a;"></div><div style="left:605.5px;top:819.5px;color:#a8a8a8;font-size:11px;font-weight:normal;font-family:'Liberation Sans', sans-serif;line-height:1;white-space:nowrap;">36</div><div style="left:583.5px;top:824.5px;width:3.0px;height:1.0px;background:#5a5a5a;"></div><div style="left:605.5px;top:838.5px;color:#a8a8a8;font-size:11px;font-weight:normal;font-family:'Liberation Sans', sans-serif;line-height:1;white-space:nowrap;">42</div><div style="left:583.5px;top:843.5px;width:3.0px;height:1.0px;background:#5a5a5a;"></div><div style="left:605.5px;top:855.5px;color:#a8a8a8;font-size:11px;font-weight:normal;font-family:'Liberation Sans', sans-serif;line-height:1;white-space:nowrap;">48</div><div style="left:583.5px;top:860.5px;width:3.0px;height:1.0px;background:#5a5a5a;"></div><div style="left:605.5px;top:870.5px;color:#a8a8a8;font-size:11px;font-weight:normal;font-family:'Liberation Sans', sans-serif;line-height:1;white-space:nowrap;">54</div><div style="left:583.5px;top:875.5px;width:3.0px;height:1.0px;background:#5a5a5a;"></div><div style="left:605.5px;top:884.5px;color:#a8a8a8;font-size:11px;font-weight:normal;font-family:'Liberation Sans', sans-serif;line-height:1;white-space:nowrap;">60</div><div style="left:583.5px;top:889.5px;width:3.0px;height:1.0px;background:#5a5a5a;"></div><svg style="left:536.5px;top:808.5px" width="32" height="34"><path d="M8.48 30.57 A13.8 13.8 0 1 1 23.52 30.57" fill="none" stroke="#141414" stroke-width="2.4"/><path d="M16 4.5 V21" stroke="#141414" stroke-width="1.8"/><path d="M12.2 0.8 H19.8 L16 4.5Z" fill="#141414"/></svg><div style="left:540.5px;top:844.5px;width:24.5px;height:24.0px;line-height:24.0px;background:#f8a85a;color:#1a1a1a;font-size:14px;font-weight:bold;font-family:'Liberation Sans', sans-serif;text-align:center;white-space:nowrap;">10</div><div style="left:540.5px;top:873.0px;width:24.5px;height:14.0px;line-height:14.0px;background:#222;color:#d0d0d0;font-size:11px;font-weight:normal;font-family:'Liberation Sans', sans-serif;text-align:center;white-space:nowrap;">S</div><div style="left:540.5px;top:892.0px;width:24.5px;height:13.5px;background:#222;"></div><svg style="left:547.2px;top:893.3px" width="11" height="11"><circle cx="5.5" cy="5.5" r="4.4" fill="#c8c8c8"/><path d="M5.5 2.5 V5.8 L3.5 7.5" stroke="#262626" stroke-width="1.3" fill="none"/></svg><div style="left:525.5px;top:914px;width:101.5px;height:6.5px;background:#f1f6a8;border-radius:0"></div><div style="left:629.0px;top:625.5px;width:100.5px;height:286.0px;background:#353535;"></div><div style="left:629.0px;top:625.5px;width:100.5px;height:18.5px;background:#fcec77;"></div><div style="left:633.0px;top:630.0px;color:#3e3a0a;font-size:11px;font-weight:bold;font-family:'Liberation Sans', sans-serif;line-height:1;white-space:nowrap;">Keys</div><div style="left:636.2px;top:652px;width:38px;height:13px;border-radius:6.5px;background:#222;color:#d0d0d0;font-size:11px;line-height:13px;text-align:center;font-family:'Liberation Sans',sans-serif">-16.0</div><div style="left:636.2px;top:671.5px;width:38.5px;height:13.0px;line-height:13.0px;background:#222;color:#d0d0d0;font-size:11px;font-weight:normal;font-family:'Liberation Sans', sans-serif;text-align:center;white-space:nowrap;">-6.6</div><svg style="left:678.3px;top:699.0px" width="14" height="14"><path d="M0.5 0.5 L13 7 L0.5 13.5Z" fill="#bdbdbd"/></svg><div style="left:692.0px;top:652.0px;width:13.5px;height:253.0px;background:#1b1b1b;"></div><div style="left:692.5px;top:767.0px;width:6.0px;height:1.5px;background:#22e56a;"></div><div style="left:692.5px;top:902.0px;width:6.0px;height:3.0px;background:#22e56a;"></div><div style="left:699.0px;top:744.6px;width:6.0px;height:1.4px;background:#22e56a;"></div><div style="left:699.0px;top:902.0px;width:6.0px;height:3.0px;background:#22e56a;"></div><div style="left:698.2px;top:652.0px;width:1.0px;height:253.0px;background:#2e2e2e;"></div><div style="left:692.0px;top:677.2px;width:13.5px;height:1.0px;background:#8a8a8a;"></div><div style="left:709.0px;top:651.5px;color:#a8a8a8;font-size:11px;font-weight:normal;font-family:'Liberation Sans', sans-serif;line-height:1;white-space:nowrap;">6</div><div style="left:687.0px;top:656.5px;width:3.0px;height:1.0px;background:#5a5a5a;"></div><div style="left:709.0px;top:672.2px;color:#a8a8a8;font-size:11px;font-weight:normal;font-family:'Liberation Sans', sans-serif;line-height:1;white-space:nowrap;">0</div><div style="left:687.0px;top:677.2px;width:3.0px;height:1.0px;background:#5a5a5a;"></div><div style="left:709.0px;top:697.2px;color:#a8a8a8;font-size:11px;font-weight:normal;font-family:'Liberation Sans', sans-serif;line-height:1;white-space:nowrap;">6</div><div style="left:687.0px;top:702.2px;width:3.0px;height:1.0px;background:#5a5a5a;"></div><div style="left:709.0px;top:722.1px;color:#a8a8a8;font-size:11px;font-weight:normal;font-family:'Liberation Sans', sans-serif;line-height:1;white-space:nowrap;">12</div><div style="left:687.0px;top:727.1px;width:3.0px;height:1.0px;background:#5a5a5a;"></div><div style="left:709.0px;top:747.0px;color:#a8a8a8;font-size:11px;font-weight:normal;font-family:'Liberation Sans', sans-serif;line-height:1;white-space:nowrap;">18</div><div style="left:687.0px;top:752.0px;width:3.0px;height:1.0px;background:#5a5a5a;"></div><div style="left:709.0px;top:771.1px;color:#a8a8a8;font-size:11px;font-weight:normal;font-family:'Liberation Sans', sans-serif;line-height:1;white-space:nowrap;">24</div><div style="left:687.0px;top:776.1px;width:3.0px;height:1.0px;background:#5a5a5a;"></div><div style="left:709.0px;top:797.5px;color:#a8a8a8;font-size:11px;font-weight:normal;font-family:'Liberation Sans', sans-serif;line-height:1;white-space:nowrap;">30</div><div style="left:687.0px;top:802.5px;width:3.0px;height:1.0px;background:#5a5a5a;"></div><div style="left:709.0px;top:819.5px;color:#a8a8a8;font-size:11px;font-weight:normal;font-family:'Liberation Sans', sans-serif;line-height:1;white-space:nowrap;">36</div><div style="left:687.0px;top:824.5px;width:3.0px;height:1.0px;background:#5a5a5a;"></div><div style="left:709.0px;top:838.5px;color:#a8a8a8;font-size:11px;font-weight:normal;font-family:'Liberation Sans', sans-serif;line-height:1;white-space:nowrap;">42</div><div style="left:687.0px;top:843.5px;width:3.0px;height:1.0px;background:#5a5a5a;"></div><div style="left:709.0px;top:855.5px;color:#a8a8a8;font-size:11px;font-weight:normal;font-family:'Liberation Sans', sans-serif;line-height:1;white-space:nowrap;">48</div><div style="left:687.0px;top:860.5px;width:3.0px;height:1.0px;background:#5a5a5a;"></div><div style="left:709.0px;top:870.5px;color:#a8a8a8;font-size:11px;font-weight:normal;font-family:'Liberation Sans', sans-serif;line-height:1;white-space:nowrap;">54</div><div style="left:687.0px;top:875.5px;width:3.0px;height:1.0px;background:#5a5a5a;"></div><div style="left:709.0px;top:884.5px;color:#a8a8a8;font-size:11px;font-weight:normal;font-family:'Liberation Sans', sans-serif;line-height:1;white-space:nowrap;">60</div><div style="left:687.0px;top:889.5px;width:3.0px;height:1.0px;background:#5a5a5a;"></div><svg style="left:640px;top:808.5px" width="32" height="34"><path d="M8.48 30.57 A13.8 13.8 0 1 1 23.52 30.57" fill="none" stroke="#141414" stroke-width="2.4"/><path d="M16 4.5 V21" stroke="#141414" stroke-width="1.8"/><path d="M12.2 0.8 H19.8 L16 4.5Z" fill="#141414"/></svg><div style="left:644.0px;top:844.5px;width:24.5px;height:24.0px;line-height:24.0px;background:#f8a85a;color:#1a1a1a;font-size:14px;font-weight:bold;font-family:'Liberation Sans', sans-serif;text-align:center;white-space:nowrap;">11</div><div style="left:644.0px;top:873.0px;width:24.5px;height:14.0px;line-height:14.0px;background:#222;color:#d0d0d0;font-size:11px;font-weight:normal;font-family:'Liberation Sans', sans-serif;text-align:center;white-space:nowrap;">S</div><div style="left:644.0px;top:892.0px;width:24.5px;height:13.5px;background:#222;"></div><svg style="left:650.7px;top:893.3px" width="11" height="11"><circle cx="5.5" cy="5.5" r="4.4" fill="#c8c8c8"/><path d="M5.5 2.5 V5.8 L3.5 7.5" stroke="#262626" stroke-width="1.3" fill="none"/></svg><div style="left:629.0px;top:914px;width:100.5px;height:6.5px;background:#fcec77;border-radius:0"></div><div style="left:731.5px;top:625.5px;width:101.0px;height:286.0px;background:#353535;"></div><div style="left:731.5px;top:625.5px;width:101.0px;height:18.5px;background:#fba977;"></div><div style="left:735.5px;top:630.0px;color:#4a2410;font-size:11px;font-weight:bold;font-family:'Liberation Sans', sans-serif;line-height:1;white-space:nowrap;">Pads</div><svg style="left:816.5px;top:627.5px" width="14" height="14"><circle cx="7" cy="7" r="6.2" fill="none" stroke="#4a2410" stroke-width="1.4"/><rect x="4.5" y="4.5" width="5" height="5" fill="none" stroke="#4a2410" stroke-width="1"/><path d="M4.5 6.2 H9.5 M4.5 7.8 H9.5" stroke="#4a2410" stroke-width="0.9"/></svg><div style="left:738.7px;top:652px;width:38px;height:13px;border-radius:6.5px;background:#222;color:#d0d0d0;font-size:11px;line-height:13px;text-align:center;font-family:'Liberation Sans',sans-serif">-14.4</div><div style="left:738.7px;top:671.5px;width:38.5px;height:13.0px;line-height:13.0px;background:#222;color:#d0d0d0;font-size:11px;font-weight:normal;font-family:'Liberation Sans', sans-serif;text-align:center;white-space:nowrap;">0</div><svg style="left:780.8px;top:670.7px" width="14" height="14"><path d="M0.5 0.5 L13 7 L0.5 13.5Z" fill="#bdbdbd"/></svg><div style="left:794.5px;top:652.0px;width:13.5px;height:253.0px;background:#1b1b1b;"></div><div style="left:795.0px;top:738.0px;width:6.0px;height:1.5px;background:#c8c020;"></div><div style="left:795.0px;top:825.3px;width:6.0px;height:79.7px;background:#22e56a;"></div><div style="left:801.5px;top:746.0px;width:6.0px;height:1.5px;background:#c8c020;"></div><div style="left:801.5px;top:820.7px;width:6.0px;height:84.3px;background:#22e56a;"></div><div style="left:800.8px;top:652.0px;width:1.0px;height:253.0px;background:#2e2e2e;"></div><div style="left:794.5px;top:677.2px;width:13.5px;height:1.0px;background:#8a8a8a;"></div><div style="left:811.5px;top:651.5px;color:#a8a8a8;font-size:11px;font-weight:normal;font-family:'Liberation Sans', sans-serif;line-height:1;white-space:nowrap;">6</div><div style="left:789.5px;top:656.5px;width:3.0px;height:1.0px;background:#5a5a5a;"></div><div style="left:811.5px;top:672.2px;color:#a8a8a8;font-size:11px;font-weight:normal;font-family:'Liberation Sans', sans-serif;line-height:1;white-space:nowrap;">0</div><div style="left:789.5px;top:677.2px;width:3.0px;height:1.0px;background:#5a5a5a;"></div><div style="left:811.5px;top:697.2px;color:#a8a8a8;font-size:11px;font-weight:normal;font-family:'Liberation Sans', sans-serif;line-height:1;white-space:nowrap;">6</div><div style="left:789.5px;top:702.2px;width:3.0px;height:1.0px;background:#5a5a5a;"></div><div style="left:811.5px;top:722.1px;color:#a8a8a8;font-size:11px;font-weight:normal;font-family:'Liberation Sans', sans-serif;line-height:1;white-space:nowrap;">12</div><div style="left:789.5px;top:727.1px;width:3.0px;height:1.0px;background:#5a5a5a;"></div><div style="left:811.5px;top:747.0px;color:#a8a8a8;font-size:11px;font-weight:normal;font-family:'Liberation Sans', sans-serif;line-height:1;white-space:nowrap;">18</div><div style="left:789.5px;top:752.0px;width:3.0px;height:1.0px;background:#5a5a5a;"></div><div style="left:811.5px;top:771.1px;color:#a8a8a8;font-size:11px;font-weight:normal;font-family:'Liberation Sans', sans-serif;line-height:1;white-space:nowrap;">24</div><div style="left:789.5px;top:776.1px;width:3.0px;height:1.0px;background:#5a5a5a;"></div><div style="left:811.5px;top:797.5px;color:#a8a8a8;font-size:11px;font-weight:normal;font-family:'Liberation Sans', sans-serif;line-height:1;white-space:nowrap;">30</div><div style="left:789.5px;top:802.5px;width:3.0px;height:1.0px;background:#5a5a5a;"></div><div style="left:811.5px;top:819.5px;color:#a8a8a8;font-size:11px;font-weight:normal;font-family:'Liberation Sans', sans-serif;line-height:1;white-space:nowrap;">36</div><div style="left:789.5px;top:824.5px;width:3.0px;height:1.0px;background:#5a5a5a;"></div><div style="left:811.5px;top:838.5px;color:#a8a8a8;font-size:11px;font-weight:normal;font-family:'Liberation Sans', sans-serif;line-height:1;white-space:nowrap;">42</div><div style="left:789.5px;top:843.5px;width:3.0px;height:1.0px;background:#5a5a5a;"></div><div style="left:811.5px;top:855.5px;color:#a8a8a8;font-size:11px;font-weight:normal;font-family:'Liberation Sans', sans-serif;line-height:1;white-space:nowrap;">48</div><div style="left:789.5px;top:860.5px;width:3.0px;height:1.0px;background:#5a5a5a;"></div><div style="left:811.5px;top:870.5px;color:#a8a8a8;font-size:11px;font-weight:normal;font-family:'Liberation Sans', sans-serif;line-height:1;white-space:nowrap;">54</div><div style="left:789.5px;top:875.5px;width:3.0px;height:1.0px;background:#5a5a5a;"></div><div style="left:811.5px;top:884.5px;color:#a8a8a8;font-size:11px;font-weight:normal;font-family:'Liberation Sans', sans-serif;line-height:1;white-space:nowrap;">60</div><div style="left:789.5px;top:889.5px;width:3.0px;height:1.0px;background:#5a5a5a;"></div><svg style="left:742.5px;top:808.5px" width="32" height="34"><path d="M8.48 30.57 A13.8 13.8 0 1 1 23.52 30.57" fill="none" stroke="#141414" stroke-width="2.4"/><path d="M16 4.5 V21" stroke="#141414" stroke-width="1.8"/><path d="M12.2 0.8 H19.8 L16 4.5Z" fill="#141414"/></svg><div style="left:746.5px;top:844.5px;width:24.5px;height:24.0px;line-height:24.0px;background:#f8a85a;color:#1a1a1a;font-size:14px;font-weight:bold;font-family:'Liberation Sans', sans-serif;text-align:center;white-space:nowrap;">12</div><div style="left:746.5px;top:873.0px;width:24.5px;height:14.0px;line-height:14.0px;background:#222;color:#d0d0d0;font-size:11px;font-weight:normal;font-family:'Liberation Sans', sans-serif;text-align:center;white-space:nowrap;">S</div><div style="left:731.5px;top:914px;width:101.0px;height:6.5px;background:#fba977;border-radius:0"></div><div style="left:834.5px;top:625.5px;width:101.3px;height:286.0px;background:#353535;"></div><div style="left:834.5px;top:625.5px;width:101.3px;height:18.5px;background:#fc97a3;"></div><div style="left:838.5px;top:630.0px;color:#4a1420;font-size:11px;font-weight:bold;font-family:'Liberation Sans', sans-serif;line-height:1;white-space:nowrap;">Ambience</div><div style="left:841.7px;top:652px;width:38px;height:13px;border-radius:6.5px;background:#222;color:#d0d0d0;font-size:11px;line-height:13px;text-align:center;font-family:'Liberation Sans',sans-serif">-29.7</div><div style="left:841.7px;top:671.5px;width:38.5px;height:13.0px;line-height:13.0px;background:#222;color:#d0d0d0;font-size:11px;font-weight:normal;font-family:'Liberation Sans', sans-serif;text-align:center;white-space:nowrap;">-8.3</div><svg style="left:883.8px;top:705.7px" width="14" height="14"><path d="M0.5 0.5 L13 7 L0.5 13.5Z" fill="#bdbdbd"/></svg><div style="left:897.5px;top:652.0px;width:13.5px;height:253.0px;background:#1b1b1b;"></div><div style="left:898.0px;top:806.0px;width:6.0px;height:1.5px;background:#22e56a;"></div><div style="left:898.0px;top:816.5px;width:6.0px;height:29.3px;background:#1a9a4a;"></div><div style="left:898.0px;top:845.8px;width:6.0px;height:59.2px;background:#22e56a;"></div><div style="left:904.5px;top:802.0px;width:6.0px;height:1.5px;background:#22e56a;"></div><div style="left:904.5px;top:824.6px;width:6.0px;height:20.4px;background:#1a9a4a;"></div><div style="left:904.5px;top:845.0px;width:6.0px;height:60.0px;background:#22e56a;"></div><div style="left:903.8px;top:652.0px;width:1.0px;height:253.0px;background:#2e2e2e;"></div><div style="left:897.5px;top:677.2px;width:13.5px;height:1.0px;background:#8a8a8a;"></div><div style="left:914.5px;top:651.5px;color:#a8a8a8;font-size:11px;font-weight:normal;font-family:'Liberation Sans', sans-serif;line-height:1;white-space:nowrap;">6</div><div style="left:892.5px;top:656.5px;width:3.0px;height:1.0px;background:#5a5a5a;"></div><div style="left:914.5px;top:672.2px;color:#a8a8a8;font-size:11px;font-weight:normal;font-family:'Liberation Sans', sans-serif;line-height:1;white-space:nowrap;">0</div><div style="left:892.5px;top:677.2px;width:3.0px;height:1.0px;background:#5a5a5a;"></div><div style="left:914.5px;top:697.2px;color:#a8a8a8;font-size:11px;font-weight:normal;font-family:'Liberation Sans', sans-serif;line-height:1;white-space:nowrap;">6</div><div style="left:892.5px;top:702.2px;width:3.0px;height:1.0px;background:#5a5a5a;"></div><div style="left:914.5px;top:722.1px;color:#a8a8a8;font-size:11px;font-weight:normal;font-family:'Liberation Sans', sans-serif;line-height:1;white-space:nowrap;">12</div><div style="left:892.5px;top:727.1px;width:3.0px;height:1.0px;background:#5a5a5a;"></div><div style="left:914.5px;top:747.0px;color:#a8a8a8;font-size:11px;font-weight:normal;font-family:'Liberation Sans', sans-serif;line-height:1;white-space:nowrap;">18</div><div style="left:892.5px;top:752.0px;width:3.0px;height:1.0px;background:#5a5a5a;"></div><div style="left:914.5px;top:771.1px;color:#a8a8a8;font-size:11px;font-weight:normal;font-family:'Liberation Sans', sans-serif;line-height:1;white-space:nowrap;">24</div><div style="left:892.5px;top:776.1px;width:3.0px;height:1.0px;background:#5a5a5a;"></div><div style="left:914.5px;top:797.5px;color:#a8a8a8;font-size:11px;font-weight:normal;font-family:'Liberation Sans', sans-serif;line-height:1;white-space:nowrap;">30</div><div style="left:892.5px;top:802.5px;width:3.0px;height:1.0px;background:#5a5a5a;"></div><div style="left:914.5px;top:819.5px;color:#a8a8a8;font-size:11px;font-weight:normal;font-family:'Liberation Sans', sans-serif;line-height:1;white-space:nowrap;">36</div><div style="left:892.5px;top:824.5px;width:3.0px;height:1.0px;background:#5a5a5a;"></div><div style="left:914.5px;top:838.5px;color:#a8a8a8;font-size:11px;font-weight:normal;font-family:'Liberation Sans', sans-serif;line-height:1;white-space:nowrap;">42</div><div style="left:892.5px;top:843.5px;width:3.0px;height:1.0px;background:#5a5a5a;"></div><div style="left:914.5px;top:855.5px;color:#a8a8a8;font-size:11px;font-weight:normal;font-family:'Liberation Sans', sans-serif;line-height:1;white-space:nowrap;">48</div><div style="left:892.5px;top:860.5px;width:3.0px;height:1.0px;background:#5a5a5a;"></div><div style="left:914.5px;top:870.5px;color:#a8a8a8;font-size:11px;font-weight:normal;font-family:'Liberation Sans', sans-serif;line-height:1;white-space:nowrap;">54</div><div style="left:892.5px;top:875.5px;width:3.0px;height:1.0px;background:#5a5a5a;"></div><div style="left:914.5px;top:884.5px;color:#a8a8a8;font-size:11px;font-weight:normal;font-family:'Liberation Sans', sans-serif;line-height:1;white-space:nowrap;">60</div><div style="left:892.5px;top:889.5px;width:3.0px;height:1.0px;background:#5a5a5a;"></div><svg style="left:845.5px;top:808.5px" width="32" height="34"><path d="M8.48 30.57 A13.8 13.8 0 1 1 23.52 30.57" fill="none" stroke="#141414" stroke-width="2.4"/><path d="M16 4.5 V21" stroke="#141414" stroke-width="1.8"/><path d="M12.2 0.8 H19.8 L16 4.5Z" fill="#141414"/></svg><div style="left:849.5px;top:844.5px;width:24.5px;height:24.0px;line-height:24.0px;background:#f8a85a;color:#1a1a1a;font-size:14px;font-weight:bold;font-family:'Liberation Sans', sans-serif;text-align:center;white-space:nowrap;">16</div><div style="left:849.5px;top:873.0px;width:24.5px;height:14.0px;line-height:14.0px;background:#222;color:#d0d0d0;font-size:11px;font-weight:normal;font-family:'Liberation Sans', sans-serif;text-align:center;white-space:nowrap;">S</div><div style="left:849.5px;top:892.0px;width:24.5px;height:13.5px;background:#222;"></div><svg style="left:856.2px;top:893.3px" width="11" height="11"><circle cx="5.5" cy="5.5" r="4.2" fill="#6a6a6a"/></svg><div style="left:834.5px;top:914px;width:101.3px;height:6.5px;background:#fc97a3;border-radius:0"></div><div style="left:937.8px;top:625.5px;width:101.2px;height:286.0px;background:#353535;"></div><div style="left:937.8px;top:625.5px;width:101.2px;height:18.5px;background:#fc97a3;"></div><div style="left:941.8px;top:630.0px;color:#4a1420;font-size:11px;font-weight:bold;font-family:'Liberation Sans', sans-serif;line-height:1;white-space:nowrap;">Drone</div><div style="left:945.0px;top:652px;width:38px;height:13px;border-radius:6.5px;background:#222;color:#d0d0d0;font-size:11px;line-height:13px;text-align:center;font-family:'Liberation Sans',sans-serif">-25.0</div><div style="left:945.0px;top:671.5px;width:38.5px;height:13.0px;line-height:13.0px;background:#222;color:#d0d0d0;font-size:11px;font-weight:normal;font-family:'Liberation Sans', sans-serif;text-align:center;white-space:nowrap;">-15.6</div><svg style="left:987.1px;top:736.2px" width="14" height="14"><path d="M0.5 0.5 L13 7 L0.5 13.5Z" fill="#bdbdbd"/></svg><div style="left:1000.8px;top:652.0px;width:13.5px;height:253.0px;background:#1b1b1b;"></div><div style="left:1001.3px;top:793.5px;width:6.0px;height:35.3px;background:#1a9a4a;"></div><div style="left:1001.3px;top:828.8px;width:6.0px;height:76.2px;background:#22e56a;"></div><div style="left:1007.8px;top:782.0px;width:6.0px;height:1.5px;background:#22e56a;"></div><div style="left:1007.8px;top:799.8px;width:6.0px;height:20.9px;background:#1a9a4a;"></div><div style="left:1007.8px;top:820.7px;width:6.0px;height:84.3px;background:#22e56a;"></div><div style="left:1007.0px;top:652.0px;width:1.0px;height:253.0px;background:#2e2e2e;"></div><div style="left:1000.8px;top:677.2px;width:13.5px;height:1.0px;background:#8a8a8a;"></div><div style="left:1017.8px;top:651.5px;color:#a8a8a8;font-size:11px;font-weight:normal;font-family:'Liberation Sans', sans-serif;line-height:1;white-space:nowrap;">6</div><div style="left:995.8px;top:656.5px;width:3.0px;height:1.0px;background:#5a5a5a;"></div><div style="left:1017.8px;top:672.2px;color:#a8a8a8;font-size:11px;font-weight:normal;font-family:'Liberation Sans', sans-serif;line-height:1;white-space:nowrap;">0</div><div style="left:995.8px;top:677.2px;width:3.0px;height:1.0px;background:#5a5a5a;"></div><div style="left:1017.8px;top:697.2px;color:#a8a8a8;font-size:11px;font-weight:normal;font-family:'Liberation Sans', sans-serif;line-height:1;white-space:nowrap;">6</div><div style="left:995.8px;top:702.2px;width:3.0px;height:1.0px;background:#5a5a5a;"></div><div style="left:1017.8px;top:722.1px;color:#a8a8a8;font-size:11px;font-weight:normal;font-family:'Liberation Sans', sans-serif;line-height:1;white-space:nowrap;">12</div><div style="left:995.8px;top:727.1px;width:3.0px;height:1.0px;background:#5a5a5a;"></div><div style="left:1017.8px;top:747.0px;color:#a8a8a8;font-size:11px;font-weight:normal;font-family:'Liberation Sans', sans-serif;line-height:1;white-space:nowrap;">18</div><div style="left:995.8px;top:752.0px;width:3.0px;height:1.0px;background:#5a5a5a;"></div><div style="left:1017.8px;top:771.1px;color:#a8a8a8;font-size:11px;font-weight:normal;font-family:'Liberation Sans', sans-serif;line-height:1;white-space:nowrap;">24</div><div style="left:995.8px;top:776.1px;width:3.0px;height:1.0px;background:#5a5a5a;"></div><div style="left:1017.8px;top:797.5px;color:#a8a8a8;font-size:11px;font-weight:normal;font-family:'Liberation Sans', sans-serif;line-height:1;white-space:nowrap;">30</div><div style="left:995.8px;top:802.5px;width:3.0px;height:1.0px;background:#5a5a5a;"></div><div style="left:1017.8px;top:819.5px;color:#a8a8a8;font-size:11px;font-weight:normal;font-family:'Liberation Sans', sans-serif;line-height:1;white-space:nowrap;">36</div><div style="left:995.8px;top:824.5px;width:3.0px;height:1.0px;background:#5a5a5a;"></div><div style="left:1017.8px;top:838.5px;color:#a8a8a8;font-size:11px;font-weight:normal;font-family:'Liberation Sans', sans-serif;line-height:1;white-space:nowrap;">42</div><div style="left:995.8px;top:843.5px;width:3.0px;height:1.0px;background:#5a5a5a;"></div><div style="left:1017.8px;top:855.5px;color:#a8a8a8;font-size:11px;font-weight:normal;font-family:'Liberation Sans', sans-serif;line-height:1;white-space:nowrap;">48</div><div style="left:995.8px;top:860.5px;width:3.0px;height:1.0px;background:#5a5a5a;"></div><div style="left:1017.8px;top:870.5px;color:#a8a8a8;font-size:11px;font-weight:normal;font-family:'Liberation Sans', sans-serif;line-height:1;white-space:nowrap;">54</div><div style="left:995.8px;top:875.5px;width:3.0px;height:1.0px;background:#5a5a5a;"></div><div style="left:1017.8px;top:884.5px;color:#a8a8a8;font-size:11px;font-weight:normal;font-family:'Liberation Sans', sans-serif;line-height:1;white-space:nowrap;">60</div><div style="left:995.8px;top:889.5px;width:3.0px;height:1.0px;background:#5a5a5a;"></div><svg style="left:948.8px;top:808.5px" width="32" height="34"><path d="M8.48 30.57 A13.8 13.8 0 1 1 23.52 30.57" fill="none" stroke="#141414" stroke-width="2.4"/><path d="M16 4.5 V21" stroke="#141414" stroke-width="1.8"/><path d="M12.2 0.8 H19.8 L16 4.5Z" fill="#141414"/></svg><div style="left:952.8px;top:844.5px;width:24.5px;height:24.0px;line-height:24.0px;background:#f8a85a;color:#1a1a1a;font-size:14px;font-weight:bold;font-family:'Liberation Sans', sans-serif;text-align:center;white-space:nowrap;">17</div><div style="left:952.8px;top:873.0px;width:24.5px;height:14.0px;line-height:14.0px;background:#222;color:#d0d0d0;font-size:11px;font-weight:normal;font-family:'Liberation Sans', sans-serif;text-align:center;white-space:nowrap;">S</div><div style="left:952.8px;top:892.0px;width:24.5px;height:13.5px;background:#222;"></div><svg style="left:959.5px;top:893.3px" width="11" height="11"><circle cx="5.5" cy="5.5" r="4.2" fill="#6a6a6a"/></svg><div style="left:937.8px;top:914px;width:101.2px;height:6.5px;background:#fc97a3;border-radius:0"></div><div style="left:1041.0px;top:625.5px;width:101.7px;height:286.0px;background:#353535;"></div><div style="left:1041.0px;top:625.5px;width:101.7px;height:18.5px;background:#d96de6;"></div><div style="left:1045.0px;top:630.0px;color:#3a1040;font-size:11px;font-weight:bold;font-family:'Liberation Sans', sans-serif;line-height:1;white-space:nowrap;">FX</div><div style="left:1048.2px;top:652px;width:38px;height:13px;border-radius:6.5px;background:#222;color:#d0d0d0;font-size:11px;line-height:13px;text-align:center;font-family:'Liberation Sans',sans-serif">-19.6</div><div style="left:1048.2px;top:671.5px;width:38.5px;height:13.0px;line-height:13.0px;background:#222;color:#d0d0d0;font-size:11px;font-weight:normal;font-family:'Liberation Sans', sans-serif;text-align:center;white-space:nowrap;">-4.1</div><svg style="left:1090.3px;top:688.4px" width="14" height="14"><path d="M0.5 0.5 L13 7 L0.5 13.5Z" fill="#bdbdbd"/></svg><div style="left:1104.0px;top:652.0px;width:13.5px;height:253.0px;background:#1b1b1b;"></div><div style="left:1104.5px;top:764.4px;width:6.0px;height:1.6px;background:#22e56a;"></div><div style="left:1104.5px;top:771.5px;width:6.0px;height:29.7px;background:#1a9a4a;"></div><div style="left:1104.5px;top:801.2px;width:6.0px;height:103.8px;background:#22e56a;"></div><div style="left:1111.0px;top:759.8px;width:6.0px;height:1.5px;background:#22e56a;"></div><div style="left:1111.0px;top:765.0px;width:6.0px;height:27.7px;background:#1a9a4a;"></div><div style="left:1111.0px;top:792.7px;width:6.0px;height:112.3px;background:#22e56a;"></div><div style="left:1110.2px;top:652.0px;width:1.0px;height:253.0px;background:#2e2e2e;"></div><div style="left:1104.0px;top:677.2px;width:13.5px;height:1.0px;background:#8a8a8a;"></div><div style="left:1121.0px;top:651.5px;color:#a8a8a8;font-size:11px;font-weight:normal;font-family:'Liberation Sans', sans-serif;line-height:1;white-space:nowrap;">6</div><div style="left:1099.0px;top:656.5px;width:3.0px;height:1.0px;background:#5a5a5a;"></div><div style="left:1121.0px;top:672.2px;color:#a8a8a8;font-size:11px;font-weight:normal;font-family:'Liberation Sans', sans-serif;line-height:1;white-space:nowrap;">0</div><div style="left:1099.0px;top:677.2px;width:3.0px;height:1.0px;background:#5a5a5a;"></div><div style="left:1121.0px;top:697.2px;color:#a8a8a8;font-size:11px;font-weight:normal;font-family:'Liberation Sans', sans-serif;line-height:1;white-space:nowrap;">6</div><div style="left:1099.0px;top:702.2px;width:3.0px;height:1.0px;background:#5a5a5a;"></div><div style="left:1121.0px;top:722.1px;color:#a8a8a8;font-size:11px;font-weight:normal;font-family:'Liberation Sans', sans-serif;line-height:1;white-space:nowrap;">12</div><div style="left:1099.0px;top:727.1px;width:3.0px;height:1.0px;background:#5a5a5a;"></div><div style="left:1121.0px;top:747.0px;color:#a8a8a8;font-size:11px;font-weight:normal;font-family:'Liberation Sans', sans-serif;line-height:1;white-space:nowrap;">18</div><div style="left:1099.0px;top:752.0px;width:3.0px;height:1.0px;background:#5a5a5a;"></div><div style="left:1121.0px;top:771.1px;color:#a8a8a8;font-size:11px;font-weight:normal;font-family:'Liberation Sans', sans-serif;line-height:1;white-space:nowrap;">24</div><div style="left:1099.0px;top:776.1px;width:3.0px;height:1.0px;background:#5a5a5a;"></div><div style="left:1121.0px;top:797.5px;color:#a8a8a8;font-size:11px;font-weight:normal;font-family:'Liberation Sans', sans-serif;line-height:1;white-space:nowrap;">30</div><div style="left:1099.0px;top:802.5px;width:3.0px;height:1.0px;background:#5a5a5a;"></div><div style="left:1121.0px;top:819.5px;color:#a8a8a8;font-size:11px;font-weight:normal;font-family:'Liberation Sans', sans-serif;line-height:1;white-space:nowrap;">36</div><div style="left:1099.0px;top:824.5px;width:3.0px;height:1.0px;background:#5a5a5a;"></div><div style="left:1121.0px;top:838.5px;color:#a8a8a8;font-size:11px;font-weight:normal;font-family:'Liberation Sans', sans-serif;line-height:1;white-space:nowrap;">42</div><div style="left:1099.0px;top:843.5px;width:3.0px;height:1.0px;background:#5a5a5a;"></div><div style="left:1121.0px;top:855.5px;color:#a8a8a8;font-size:11px;font-weight:normal;font-family:'Liberation Sans', sans-serif;line-height:1;white-space:nowrap;">48</div><div style="left:1099.0px;top:860.5px;width:3.0px;height:1.0px;background:#5a5a5a;"></div><div style="left:1121.0px;top:870.5px;color:#a8a8a8;font-size:11px;font-weight:normal;font-family:'Liberation Sans', sans-serif;line-height:1;white-space:nowrap;">54</div><div style="left:1099.0px;top:875.5px;width:3.0px;height:1.0px;background:#5a5a5a;"></div><div style="left:1121.0px;top:884.5px;color:#a8a8a8;font-size:11px;font-weight:normal;font-family:'Liberation Sans', sans-serif;line-height:1;white-space:nowrap;">60</div><div style="left:1099.0px;top:889.5px;width:3.0px;height:1.0px;background:#5a5a5a;"></div><svg style="left:1052px;top:808.5px" width="32" height="34"><path d="M8.48 30.57 A13.8 13.8 0 1 1 23.52 30.57" fill="none" stroke="#141414" stroke-width="2.4"/><path d="M16 4.5 V21" stroke="#141414" stroke-width="1.8"/><path d="M12.2 0.8 H19.8 L16 4.5Z" fill="#141414"/></svg><div style="left:1056.0px;top:844.5px;width:24.5px;height:24.0px;line-height:24.0px;background:#f8a85a;color:#1a1a1a;font-size:14px;font-weight:bold;font-family:'Liberation Sans', sans-serif;text-align:center;white-space:nowrap;">18</div><div style="left:1056.0px;top:873.0px;width:24.5px;height:14.0px;line-height:14.0px;background:#222;color:#d0d0d0;font-size:11px;font-weight:normal;font-family:'Liberation Sans', sans-serif;text-align:center;white-space:nowrap;">S</div><div style="left:1056.0px;top:892.0px;width:24.5px;height:13.5px;background:#222;"></div><svg style="left:1062.7px;top:893.3px" width="11" height="11"><circle cx="5.5" cy="5.5" r="4.2" fill="#6a6a6a"/></svg><div style="left:1041.0px;top:914px;width:101.7px;height:6.5px;background:#d96de6;border-radius:0"></div><div style="left:1144.7px;top:625.5px;width:92.8px;height:286.0px;background:#353535;"></div><div style="left:1144.7px;top:625.5px;width:92.8px;height:18.5px;background:#d96de6;"></div><div style="left:1148.7px;top:630.0px;color:#3a1040;font-size:11px;font-weight:bold;font-family:'Liberation Sans', sans-serif;line-height:1;white-space:nowrap;">Zap</div><div style="left:1162.9px;top:652px;width:38px;height:13px;border-radius:6.5px;background:#222;color:#d0d0d0;font-size:11px;line-height:13px;text-align:center;font-family:'Liberation Sans',sans-serif">-24.6</div><div style="left:1162.9px;top:671.5px;width:38.5px;height:13.0px;line-height:13.0px;background:#222;color:#d0d0d0;font-size:11px;font-weight:normal;font-family:'Liberation Sans', sans-serif;text-align:center;white-space:nowrap;">-19.4</div><svg style="left:1205.0px;top:752.1px" width="14" height="14"><path d="M0.5 0.5 L13 7 L0.5 13.5Z" fill="#bdbdbd"/></svg><div style="left:1218.7px;top:652.0px;width:13.5px;height:253.0px;background:#1b1b1b;"></div><div style="left:1219.2px;top:781.0px;width:6.0px;height:1.5px;background:#22e56a;"></div><div style="left:1219.2px;top:797.0px;width:6.0px;height:31.8px;background:#1a9a4a;"></div><div style="left:1219.2px;top:828.8px;width:6.0px;height:76.2px;background:#22e56a;"></div><div style="left:1225.7px;top:783.5px;width:6.0px;height:1.5px;background:#22e56a;"></div><div style="left:1225.7px;top:792.4px;width:6.0px;height:35.6px;background:#1a9a4a;"></div><div style="left:1225.7px;top:828.0px;width:6.0px;height:77.0px;background:#22e56a;"></div><div style="left:1225.0px;top:652.0px;width:1.0px;height:253.0px;background:#2e2e2e;"></div><div style="left:1218.7px;top:677.2px;width:13.5px;height:1.0px;background:#8a8a8a;"></div><svg style="left:1166.7px;top:808.5px" width="32" height="34"><path d="M8.48 30.57 A13.8 13.8 0 1 1 23.52 30.57" fill="none" stroke="#141414" stroke-width="2.4"/><path d="M16 4.5 V21" stroke="#141414" stroke-width="1.8"/><path d="M12.2 0.8 H19.8 L16 4.5Z" fill="#141414"/></svg><div style="left:1170.7px;top:844.5px;width:24.5px;height:24.0px;line-height:24.0px;background:#f8a85a;color:#1a1a1a;font-size:14px;font-weight:bold;font-family:'Liberation Sans', sans-serif;text-align:center;white-space:nowrap;">19</div><div style="left:1170.7px;top:873.0px;width:24.5px;height:14.0px;line-height:14.0px;background:#222;color:#d0d0d0;font-size:11px;font-weight:normal;font-family:'Liberation Sans', sans-serif;text-align:center;white-space:nowrap;">S</div><div style="left:1170.7px;top:892.0px;width:24.5px;height:13.5px;background:#222;"></div><svg style="left:1177.4px;top:893.3px" width="11" height="11"><circle cx="5.5" cy="5.5" r="4.4" fill="#c8c8c8"/><path d="M5.5 2.5 V5.8 L3.5 7.5" stroke="#262626" stroke-width="1.3" fill="none"/></svg><div style="left:1144.7px;top:914px;width:92.8px;height:6.5px;background:#d96de6;border-radius:0"></div><div style="left:1240.3px;top:625.5px;width:101.4px;height:286.0px;background:#353535;"></div><div style="left:1240.3px;top:625.5px;width:101.4px;height:18.5px;background:#d3d3d3;"></div><div style="left:1244.3px;top:630.0px;color:#2a2a2a;font-size:11px;font-weight:bold;font-family:'Liberation Sans', sans-serif;line-height:1;white-space:nowrap;">A Reverb</div><div style="left:1247.5px;top:652px;width:38px;height:13px;border-radius:6.5px;background:#222;color:#d0d0d0;font-size:11px;line-height:13px;text-align:center;font-family:'Liberation Sans',sans-serif">-50.9</div><div style="left:1247.5px;top:671.5px;width:38.5px;height:13.0px;line-height:13.0px;background:#222;color:#d0d0d0;font-size:11px;font-weight:normal;font-family:'Liberation Sans', sans-serif;text-align:center;white-space:nowrap;">0</div><svg style="left:1289.6px;top:670.7px" width="14" height="14"><path d="M0.5 0.5 L13 7 L0.5 13.5Z" fill="#bdbdbd"/></svg><div style="left:1303.3px;top:652.0px;width:13.5px;height:253.0px;background:#1b1b1b;"></div><div style="left:1303.8px;top:868.3px;width:6.0px;height:1.5px;background:#22e56a;"></div><div style="left:1303.8px;top:877.0px;width:6.0px;height:15.5px;background:#1a9a4a;"></div><div style="left:1303.8px;top:892.5px;width:6.0px;height:12.5px;background:#22e56a;"></div><div style="left:1310.3px;top:873.4px;width:6.0px;height:1.5px;background:#22e56a;"></div><div style="left:1310.3px;top:874.9px;width:6.0px;height:19.6px;background:#1a9a4a;"></div><div style="left:1310.3px;top:894.5px;width:6.0px;height:10.5px;background:#22e56a;"></div><div style="left:1309.5px;top:652.0px;width:1.0px;height:253.0px;background:#2e2e2e;"></div><div style="left:1303.3px;top:677.2px;width:13.5px;height:1.0px;background:#8a8a8a;"></div><div style="left:1320.3px;top:651.5px;color:#a8a8a8;font-size:11px;font-weight:normal;font-family:'Liberation Sans', sans-serif;line-height:1;white-space:nowrap;">6</div><div style="left:1298.3px;top:656.5px;width:3.0px;height:1.0px;background:#5a5a5a;"></div><div style="left:1320.3px;top:672.2px;color:#a8a8a8;font-size:11px;font-weight:normal;font-family:'Liberation Sans', sans-serif;line-height:1;white-space:nowrap;">0</div><div style="left:1298.3px;top:677.2px;width:3.0px;height:1.0px;background:#5a5a5a;"></div><div style="left:1320.3px;top:697.2px;color:#a8a8a8;font-size:11px;font-weight:normal;font-family:'Liberation Sans', sans-serif;line-height:1;white-space:nowrap;">6</div><div style="left:1298.3px;top:702.2px;width:3.0px;height:1.0px;background:#5a5a5a;"></div><div style="left:1320.3px;top:722.1px;color:#a8a8a8;font-size:11px;font-weight:normal;font-family:'Liberation Sans', sans-serif;line-height:1;white-space:nowrap;">12</div><div style="left:1298.3px;top:727.1px;width:3.0px;height:1.0px;background:#5a5a5a;"></div><div style="left:1320.3px;top:747.0px;color:#a8a8a8;font-size:11px;font-weight:normal;font-family:'Liberation Sans', sans-serif;line-height:1;white-space:nowrap;">18</div><div style="left:1298.3px;top:752.0px;width:3.0px;height:1.0px;background:#5a5a5a;"></div><div style="left:1320.3px;top:771.1px;color:#a8a8a8;font-size:11px;font-weight:normal;font-family:'Liberation Sans', sans-serif;line-height:1;white-space:nowrap;">24</div><div style="left:1298.3px;top:776.1px;width:3.0px;height:1.0px;background:#5a5a5a;"></div><div style="left:1320.3px;top:797.5px;color:#a8a8a8;font-size:11px;font-weight:normal;font-family:'Liberation Sans', sans-serif;line-height:1;white-space:nowrap;">30</div><div style="left:1298.3px;top:802.5px;width:3.0px;height:1.0px;background:#5a5a5a;"></div><div style="left:1320.3px;top:819.5px;color:#a8a8a8;font-size:11px;font-weight:normal;font-family:'Liberation Sans', sans-serif;line-height:1;white-space:nowrap;">36</div><div style="left:1298.3px;top:824.5px;width:3.0px;height:1.0px;background:#5a5a5a;"></div><div style="left:1320.3px;top:838.5px;color:#a8a8a8;font-size:11px;font-weight:normal;font-family:'Liberation Sans', sans-serif;line-height:1;white-space:nowrap;">42</div><div style="left:1298.3px;top:843.5px;width:3.0px;height:1.0px;background:#5a5a5a;"></div><div style="left:1320.3px;top:855.5px;color:#a8a8a8;font-size:11px;font-weight:normal;font-family:'Liberation Sans', sans-serif;line-height:1;white-space:nowrap;">48</div><div style="left:1298.3px;top:860.5px;width:3.0px;height:1.0px;background:#5a5a5a;"></div><div style="left:1320.3px;top:870.5px;color:#a8a8a8;font-size:11px;font-weight:normal;font-family:'Liberation Sans', sans-serif;line-height:1;white-space:nowrap;">54</div><div style="left:1298.3px;top:875.5px;width:3.0px;height:1.0px;background:#5a5a5a;"></div><div style="left:1320.3px;top:884.5px;color:#a8a8a8;font-size:11px;font-weight:normal;font-family:'Liberation Sans', sans-serif;line-height:1;white-space:nowrap;">60</div><div style="left:1298.3px;top:889.5px;width:3.0px;height:1.0px;background:#5a5a5a;"></div><svg style="left:1251.3px;top:808.5px" width="32" height="34"><path d="M8.48 30.57 A13.8 13.8 0 1 1 23.52 30.57" fill="none" stroke="#141414" stroke-width="2.4"/><path d="M16 4.5 V21" stroke="#141414" stroke-width="1.8"/><path d="M12.2 0.8 H19.8 L16 4.5Z" fill="#141414"/></svg><div style="left:1255.3px;top:844.5px;width:24.5px;height:24.0px;line-height:24.0px;background:#f8a85a;color:#1a1a1a;font-size:14px;font-weight:bold;font-family:'Liberation Sans', sans-serif;text-align:center;white-space:nowrap;">A</div><div style="left:1255.3px;top:873.0px;width:24.5px;height:14.0px;line-height:14.0px;background:#222;color:#d0d0d0;font-size:11px;font-weight:normal;font-family:'Liberation Sans', sans-serif;text-align:center;white-space:nowrap;">S</div><div style="left:1240.3px;top:914px;width:101.4px;height:6.5px;background:#d3d3d3;border-radius:0"></div><div style="left:1343.7px;top:625.5px;width:100.8px;height:286.0px;background:#353535;"></div><div style="left:1343.7px;top:625.5px;width:100.8px;height:18.5px;background:#d3d3d3;"></div><div style="left:1347.7px;top:630.0px;color:#2a2a2a;font-size:11px;font-weight:bold;font-family:'Liberation Sans', sans-serif;line-height:1;white-space:nowrap;">B Delay</div><div style="left:1350.9px;top:652px;width:38px;height:13px;border-radius:6.5px;background:#222;color:#d0d0d0;font-size:11px;line-height:13px;text-align:center;font-family:'Liberation Sans',sans-serif">-55.2</div><div style="left:1350.9px;top:671.5px;width:38.5px;height:13.0px;line-height:13.0px;background:#222;color:#d0d0d0;font-size:11px;font-weight:normal;font-family:'Liberation Sans', sans-serif;text-align:center;white-space:nowrap;">0</div><svg style="left:1393.0px;top:670.7px" width="14" height="14"><path d="M0.5 0.5 L13 7 L0.5 13.5Z" fill="#bdbdbd"/></svg><div style="left:1406.7px;top:652.0px;width:13.5px;height:253.0px;background:#1b1b1b;"></div><div style="left:1407.2px;top:881.3px;width:6.0px;height:1.5px;background:#22e56a;"></div><div style="left:1407.2px;top:898.7px;width:6.0px;height:6.3px;background:#22e56a;"></div><div style="left:1413.7px;top:879.0px;width:6.0px;height:1.5px;background:#22e56a;"></div><div style="left:1413.7px;top:888.3px;width:6.0px;height:16.7px;background:#22e56a;"></div><div style="left:1413.0px;top:652.0px;width:1.0px;height:253.0px;background:#2e2e2e;"></div><div style="left:1406.7px;top:677.2px;width:13.5px;height:1.0px;background:#8a8a8a;"></div><div style="left:1423.7px;top:651.5px;color:#a8a8a8;font-size:11px;font-weight:normal;font-family:'Liberation Sans', sans-serif;line-height:1;white-space:nowrap;">6</div><div style="left:1401.7px;top:656.5px;width:3.0px;height:1.0px;background:#5a5a5a;"></div><div style="left:1423.7px;top:672.2px;color:#a8a8a8;font-size:11px;font-weight:normal;font-family:'Liberation Sans', sans-serif;line-height:1;white-space:nowrap;">0</div><div style="left:1401.7px;top:677.2px;width:3.0px;height:1.0px;background:#5a5a5a;"></div><div style="left:1423.7px;top:697.2px;color:#a8a8a8;font-size:11px;font-weight:normal;font-family:'Liberation Sans', sans-serif;line-height:1;white-space:nowrap;">6</div><div style="left:1401.7px;top:702.2px;width:3.0px;height:1.0px;background:#5a5a5a;"></div><div style="left:1423.7px;top:722.1px;color:#a8a8a8;font-size:11px;font-weight:normal;font-family:'Liberation Sans', sans-serif;line-height:1;white-space:nowrap;">12</div><div style="left:1401.7px;top:727.1px;width:3.0px;height:1.0px;background:#5a5a5a;"></div><div style="left:1423.7px;top:747.0px;color:#a8a8a8;font-size:11px;font-weight:normal;font-family:'Liberation Sans', sans-serif;line-height:1;white-space:nowrap;">18</div><div style="left:1401.7px;top:752.0px;width:3.0px;height:1.0px;background:#5a5a5a;"></div><div style="left:1423.7px;top:771.1px;color:#a8a8a8;font-size:11px;font-weight:normal;font-family:'Liberation Sans', sans-serif;line-height:1;white-space:nowrap;">24</div><div style="left:1401.7px;top:776.1px;width:3.0px;height:1.0px;background:#5a5a5a;"></div><div style="left:1423.7px;top:797.5px;color:#a8a8a8;font-size:11px;font-weight:normal;font-family:'Liberation Sans', sans-serif;line-height:1;white-space:nowrap;">30</div><div style="left:1401.7px;top:802.5px;width:3.0px;height:1.0px;background:#5a5a5a;"></div><div style="left:1423.7px;top:819.5px;color:#a8a8a8;font-size:11px;font-weight:normal;font-family:'Liberation Sans', sans-serif;line-height:1;white-space:nowrap;">36</div><div style="left:1401.7px;top:824.5px;width:3.0px;height:1.0px;background:#5a5a5a;"></div><div style="left:1423.7px;top:838.5px;color:#a8a8a8;font-size:11px;font-weight:normal;font-family:'Liberation Sans', sans-serif;line-height:1;white-space:nowrap;">42</div><div style="left:1401.7px;top:843.5px;width:3.0px;height:1.0px;background:#5a5a5a;"></div><div style="left:1423.7px;top:855.5px;color:#a8a8a8;font-size:11px;font-weight:normal;font-family:'Liberation Sans', sans-serif;line-height:1;white-space:nowrap;">48</div><div style="left:1401.7px;top:860.5px;width:3.0px;height:1.0px;background:#5a5a5a;"></div><div style="left:1423.7px;top:870.5px;color:#a8a8a8;font-size:11px;font-weight:normal;font-family:'Liberation Sans', sans-serif;line-height:1;white-space:nowrap;">54</div><div style="left:1401.7px;top:875.5px;width:3.0px;height:1.0px;background:#5a5a5a;"></div><div style="left:1423.7px;top:884.5px;color:#a8a8a8;font-size:11px;font-weight:normal;font-family:'Liberation Sans', sans-serif;line-height:1;white-space:nowrap;">60</div><div style="left:1401.7px;top:889.5px;width:3.0px;height:1.0px;background:#5a5a5a;"></div><svg style="left:1354.7px;top:808.5px" width="32" height="34"><path d="M8.48 30.57 A13.8 13.8 0 1 1 23.52 30.57" fill="none" stroke="#141414" stroke-width="2.4"/><path d="M16 4.5 V21" stroke="#141414" stroke-width="1.8"/><path d="M12.2 0.8 H19.8 L16 4.5Z" fill="#141414"/></svg><div style="left:1358.7px;top:844.5px;width:24.5px;height:24.0px;line-height:24.0px;background:#f8a85a;color:#1a1a1a;font-size:14px;font-weight:bold;font-family:'Liberation Sans', sans-serif;text-align:center;white-space:nowrap;">B</div><div style="left:1358.7px;top:873.0px;width:24.5px;height:14.0px;line-height:14.0px;background:#222;color:#d0d0d0;font-size:11px;font-weight:normal;font-family:'Liberation Sans', sans-serif;text-align:center;white-space:nowrap;">S</div><div style="left:1343.7px;top:914px;width:100.8px;height:6.5px;background:#d3d3d3;border-radius:0"></div><div style="left:1446.5px;top:625.5px;width:105.2px;height:286.0px;background:#353535;"></div><div style="left:1446.5px;top:625.5px;width:105.2px;height:18.5px;background:#f6f6f6;"></div><div style="left:1450.5px;top:630.0px;color:#202020;font-size:11px;font-weight:bold;font-family:'Liberation Sans', sans-serif;line-height:1;white-space:nowrap;">Main</div><div style="left:1457.7px;top:652px;width:38px;height:13px;border-radius:6.5px;background:#222;color:#d0d0d0;font-size:11px;line-height:13px;text-align:center;font-family:'Liberation Sans',sans-serif">-0.30</div><div style="left:1457.7px;top:671.5px;width:38.5px;height:13.0px;line-height:13.0px;background:#222;color:#d0d0d0;font-size:11px;font-weight:normal;font-family:'Liberation Sans', sans-serif;text-align:center;white-space:nowrap;">0</div><svg style="left:1499.8px;top:670.7px" width="14" height="14"><path d="M0.5 0.5 L13 7 L0.5 13.5Z" fill="#bdbdbd"/></svg><div style="left:1513.5px;top:652.0px;width:13.5px;height:253.0px;background:#1b1b1b;"></div><div style="left:1514.0px;top:677.0px;width:6.0px;height:2.5px;background:#b03030;"></div><div style="left:1514.0px;top:739.8px;width:6.0px;height:11.2px;background:#a8e020;"></div><div style="left:1514.0px;top:751.0px;width:6.0px;height:154.0px;background:#22e56a;"></div><div style="left:1520.5px;top:677.0px;width:6.0px;height:2.5px;background:#b03030;"></div><div style="left:1520.5px;top:739.8px;width:6.0px;height:11.2px;background:#a8e020;"></div><div style="left:1520.5px;top:751.0px;width:6.0px;height:154.0px;background:#22e56a;"></div><div style="left:1519.8px;top:652.0px;width:1.0px;height:253.0px;background:#2e2e2e;"></div><div style="left:1513.5px;top:677.2px;width:13.5px;height:1.0px;background:#8a8a8a;"></div><div style="left:1530.5px;top:651.5px;color:#a8a8a8;font-size:11px;font-weight:normal;font-family:'Liberation Sans', sans-serif;line-height:1;white-space:nowrap;">6</div><div style="left:1508.5px;top:656.5px;width:3.0px;height:1.0px;background:#5a5a5a;"></div><div style="left:1530.5px;top:672.2px;color:#a8a8a8;font-size:11px;font-weight:normal;font-family:'Liberation Sans', sans-serif;line-height:1;white-space:nowrap;">0</div><div style="left:1508.5px;top:677.2px;width:3.0px;height:1.0px;background:#5a5a5a;"></div><div style="left:1530.5px;top:697.2px;color:#a8a8a8;font-size:11px;font-weight:normal;font-family:'Liberation Sans', sans-serif;line-height:1;white-space:nowrap;">6</div><div style="left:1508.5px;top:702.2px;width:3.0px;height:1.0px;background:#5a5a5a;"></div><div style="left:1530.5px;top:722.1px;color:#a8a8a8;font-size:11px;font-weight:normal;font-family:'Liberation Sans', sans-serif;line-height:1;white-space:nowrap;">12</div><div style="left:1508.5px;top:727.1px;width:3.0px;height:1.0px;background:#5a5a5a;"></div><div style="left:1530.5px;top:747.0px;color:#a8a8a8;font-size:11px;font-weight:normal;font-family:'Liberation Sans', sans-serif;line-height:1;white-space:nowrap;">18</div><div style="left:1508.5px;top:752.0px;width:3.0px;height:1.0px;background:#5a5a5a;"></div><div style="left:1530.5px;top:771.1px;color:#a8a8a8;font-size:11px;font-weight:normal;font-family:'Liberation Sans', sans-serif;line-height:1;white-space:nowrap;">24</div><div style="left:1508.5px;top:776.1px;width:3.0px;height:1.0px;background:#5a5a5a;"></div><div style="left:1530.5px;top:797.5px;color:#a8a8a8;font-size:11px;font-weight:normal;font-family:'Liberation Sans', sans-serif;line-height:1;white-space:nowrap;">30</div><div style="left:1508.5px;top:802.5px;width:3.0px;height:1.0px;background:#5a5a5a;"></div><div style="left:1530.5px;top:819.5px;color:#a8a8a8;font-size:11px;font-weight:normal;font-family:'Liberation Sans', sans-serif;line-height:1;white-space:nowrap;">36</div><div style="left:1508.5px;top:824.5px;width:3.0px;height:1.0px;background:#5a5a5a;"></div><div style="left:1530.5px;top:838.5px;color:#a8a8a8;font-size:11px;font-weight:normal;font-family:'Liberation Sans', sans-serif;line-height:1;white-space:nowrap;">42</div><div style="left:1508.5px;top:843.5px;width:3.0px;height:1.0px;background:#5a5a5a;"></div><div style="left:1530.5px;top:855.5px;color:#a8a8a8;font-size:11px;font-weight:normal;font-family:'Liberation Sans', sans-serif;line-height:1;white-space:nowrap;">48</div><div style="left:1508.5px;top:860.5px;width:3.0px;height:1.0px;background:#5a5a5a;"></div><div style="left:1530.5px;top:870.5px;color:#a8a8a8;font-size:11px;font-weight:normal;font-family:'Liberation Sans', sans-serif;line-height:1;white-space:nowrap;">54</div><div style="left:1508.5px;top:875.5px;width:3.0px;height:1.0px;background:#5a5a5a;"></div><div style="left:1530.5px;top:884.5px;color:#a8a8a8;font-size:11px;font-weight:normal;font-family:'Liberation Sans', sans-serif;line-height:1;white-space:nowrap;">60</div><div style="left:1508.5px;top:889.5px;width:3.0px;height:1.0px;background:#5a5a5a;"></div><svg style="left:1461.5px;top:808.5px" width="32" height="34"><path d="M8.48 30.57 A13.8 13.8 0 1 1 23.52 30.57" fill="none" stroke="#141414" stroke-width="2.4"/><path d="M16 4.5 V21" stroke="#141414" stroke-width="1.8"/><path d="M12.2 0.8 H19.8 L16 4.5Z" fill="#141414"/></svg><div style="left:1463.7px;top:856.0px;width:25.7px;height:12.2px;line-height:12.2px;background:#6a6a6a;color:#2a2a2a;font-size:11px;font-weight:normal;font-family:'Liberation Sans', sans-serif;text-align:center;white-space:nowrap;">Solo</div><svg style="left:1460.5px;top:873px" width="32" height="32"><path d="M7 26 A13.5 13.5 0 1 1 26 25" fill="none" stroke="#4a78c8" stroke-width="2.2"/><path d="M16 16 L26 20 M22 24 L27 20" stroke="#141414" stroke-width="2"/><path d="M12 30 V27 A4 4 0 0 1 20 27 V30" fill="none" stroke="#c8c8c8" stroke-width="1.5"/></svg><div style="left:1446.5px;top:914px;width:105.2px;height:6.5px;background:#f6f6f6;border-radius:0 0 4px 0"></div><svg style="left:11px;top:931px" width="18" height="18"><circle cx="9" cy="9" r="8" fill="#3e3e3e"/><rect x="8" y="5" width="2" height="8" fill="#262626"/></svg><div style="left:46px;top:931px;width:978px;height:20px;background:#2e2e2e;border-radius:3px"></div><div style="left:1034.5px;top:931.0px;width:19.5px;height:20.0px;background:#2e2e2e;"></div><svg style="left:1040px;top:936px" width="10" height="10"><path d="M1 0.5 L9 5 L1 9.5Z" fill="#c0c0c0"/></svg><div style="left:1055.0px;top:931.0px;width:217.0px;height:20.0px;background:#2e2e2e;"></div><svg style="left:1055px;top:931px" width="217" height="20" fill="#5a5a5a"><rect x="3" y="4" width="6" height="1.2"/><rect x="20" y="13" width="5" height="1.2"/><rect x="35" y="15" width="4" height="1.2"/><rect x="50" y="6" width="5" height="1.2"/><rect x="62" y="13" width="7" height="1.2"/><rect x="80" y="16" width="4" height="1.2"/><rect x="96" y="8" width="4" height="1.2"/><rect x="110" y="14" width="6" height="1.2"/><rect x="128" y="5" width="6" height="1.2"/><rect x="140" y="13" width="5" height="1.2"/><rect x="156" y="16" width="6" height="1.2"/><rect x="175" y="7" width="4" height="1.2"/><rect x="190" y="14" width="6" height="1.2"/><rect x="204" y="16" width="5" height="1.2"/><rect x="10" y="15" width="4" height="1.2"/><rect x="70" y="4" width="3" height="1.2"/><rect x="120" y="15" width="4" height="1.2"/><rect x="165" y="13" width="4" height="1.2"/><rect x="182" y="5" width="3" height="1.2"/></svg><div style="left:1225.0px;top:932.0px;width:1.5px;height:18.0px;background:#e8e8e8;"></div><div style="left:1283.0px;top:931.0px;width:19.5px;height:20.0px;background:#2e2e2e;"></div><svg style="left:1289px;top:936px" width="10" height="10"><path d="M1 0.5 L9 5 L1 9.5Z" fill="#c0c0c0"/></svg><div style="left:1304.0px;top:931.0px;width:38.0px;height:20.0px;line-height:20.0px;background:#2e2e2e;color:#c8c8c8;font-size:11px;font-weight:bold;font-family:'Liberation Sans', sans-serif;text-align:center;white-space:nowrap;">Bass</div><svg style="left:1343px;top:930px" width="160" height="22"><rect width="160" height="22" fill="#262a2e"/><rect x="0" y="2" width="12" height="19" fill="#15191c"/><rect x="14" y="2" width="20" height="19" fill="#15191c"/><rect x="36" y="2" width="42" height="19" fill="#15191c"/><rect x="80" y="2" width="14" height="19" fill="#15191c"/><rect x="96" y="2" width="28" height="19" fill="#15191c"/><rect x="126" y="2" width="10" height="19" fill="#15191c"/><rect x="138" y="2" width="22" height="19" fill="#15191c"/><rect x="37.6" y="11.8" width="2.5" height="1.3" fill="#2a3a44"/><rect x="91.8" y="12.9" width="4.6" height="1.2" fill="#101418"/><rect x="37.0" y="19.9" width="2.9" height="1.5" fill="#505a60"/><rect x="62.7" y="17.5" width="1.9" height="0.9" fill="#101418"/><rect x="61.6" y="2.3" width="4.1" height="0.9" fill="#101418"/><rect x="6.8" y="16.0" width="4.3" height="1.0" fill="#101418"/><rect x="113.6" y="17.8" width="3.9" height="1.5" fill="#505a60"/><rect x="115.0" y="12.4" width="4.9" height="0.9" fill="#404850"/><rect x="15.4" y="4.4" width="1.9" height="1.6" fill="#505a60"/><rect x="123.1" y="17.4" width="2.7" height="1.5" fill="#101418"/><rect x="55.4" y="12.5" width="3.3" height="1.5" fill="#2a3a44"/><rect x="144.7" y="2.5" width="2.1" height="1.3" fill="#2a3a44"/><rect x="25.8" y="17.5" width="4.9" height="1.5" fill="#101418"/><rect x="16.4" y="13.8" width="3.5" height="1.6" fill="#404850"/><rect x="45.0" y="3.1" width="4.4" height="1.6" fill="#2a7a90"/><rect x="54.4" y="3.2" width="4.6" height="0.8" fill="#505a60"/><rect x="121.5" y="17.7" width="1.2" height="1.3" fill="#2a7a90"/><rect x="59.7" y="12.6" width="3.2" height="1.5" fill="#404850"/><rect x="79.9" y="20.0" width="2.2" height="0.9" fill="#101418"/><rect x="84.6" y="19.1" width="4.9" height="1.0" fill="#404850"/><rect x="24.7" y="2.8" width="4.5" height="1.1" fill="#3a8aa0"/><rect x="141.7" y="8.8" width="2.8" height="1.2" fill="#2a3a44"/><rect x="137.0" y="14.3" width="1.4" height="1.6" fill="#101418"/><rect x="42.9" y="13.4" width="3.9" height="1.5" fill="#505a60"/><rect x="154.5" y="11.4" width="3.2" height="0.8" fill="#505a60"/><rect x="156.0" y="7.7" width="2.5" height="1.3" fill="#3a8aa0"/><rect x="9.5" y="13.3" width="2.9" height="1.3" fill="#404850"/><rect x="96.2" y="7.0" width="3.0" height="1.3" fill="#2a3a44"/><rect x="3.4" y="8.6" width="3.5" height="1.0" fill="#101418"/><rect x="50.6" y="8.6" width="2.3" height="1.1" fill="#101418"/><rect x="41.7" y="16.2" width="1.4" height="1.5" fill="#101418"/><rect x="108.0" y="4.4" width="3.0" height="1.3" fill="#404850"/><rect x="37.7" y="5.4" width="2.7" height="1.4" fill="#2a7a90"/><rect x="94.9" y="19.1" width="3.7" height="1.0" fill="#3a8aa0"/><rect x="12.6" y="15.4" width="1.9" height="1.3" fill="#404850"/><rect x="35.6" y="4.2" width="3.1" height="1.0" fill="#101418"/><rect x="29.0" y="7.0" width="4.2" height="1.3" fill="#101418"/><rect x="54.6" y="4.3" width="2.2" height="1.4" fill="#404850"/><rect x="73.4" y="13.4" width="2.2" height="1.3" fill="#2a7a90"/><rect x="145.5" y="4.8" width="1.0" height="1.6" fill="#101418"/><rect x="155.9" y="9.8" width="4.8" height="1.5" fill="#3a8aa0"/><rect x="5.1" y="10.2" width="4.0" height="1.4" fill="#404850"/><rect x="85.9" y="18.0" width="4.4" height="1.5" fill="#404850"/><rect x="19.0" y="6.4" width="1.1" height="1.4" fill="#101418"/><rect x="146.0" y="18.1" width="4.6" height="1.3" fill="#2a7a90"/><rect x="76.0" y="4.2" width="3.0" height="1.0" fill="#2a7a90"/><rect x="82.9" y="9.4" width="4.8" height="1.3" fill="#404850"/><rect x="19.8" y="19.5" width="3.2" height="1.4" fill="#2a7a90"/><rect x="55.6" y="5.6" width="3.1" height="1.5" fill="#3a8aa0"/><rect x="37.8" y="6.9" width="4.6" height="0.9" fill="#2a7a90"/><rect x="77.0" y="12.3" width="2.6" height="1.4" fill="#3a8aa0"/><rect x="42.4" y="11.5" width="2.7" height="1.2" fill="#2a7a90"/><rect x="135.4" y="16.0" width="1.2" height="0.8" fill="#505a60"/><rect x="154.0" y="17.4" width="1.3" height="1.2" fill="#404850"/><rect x="24.8" y="3.3" width="2.5" height="1.1" fill="#404850"/><rect x="57.0" y="5.4" width="2.3" height="0.9" fill="#101418"/><rect x="0.6" y="15.0" width="4.2" height="1.3" fill="#2a7a90"/><rect x="59.0" y="12.9" width="4.1" height="1.1" fill="#2a7a90"/><rect x="98.4" y="9.8" width="2.5" height="1.2" fill="#2a3a44"/><rect x="49.8" y="19.1" width="2.7" height="0.8" fill="#3a8aa0"/><rect x="84.7" y="14.5" width="1.3" height="1.1" fill="#505a60"/><rect x="20.6" y="2.5" width="2.3" height="1.6" fill="#101418"/><rect x="125.0" y="6.7" width="2.9" height="0.9" fill="#2a3a44"/><rect x="104.6" y="18.0" width="4.2" height="1.3" fill="#2a3a44"/><rect x="50.3" y="11.6" width="4.2" height="1.4" fill="#505a60"/><rect x="22.7" y="15.9" width="1.2" height="0.9" fill="#2a7a90"/><rect x="104.2" y="8.8" width="4.3" height="1.1" fill="#2a7a90"/><rect x="4.0" y="4.1" width="2.9" height="1.4" fill="#404850"/><rect x="91.5" y="16.4" width="1.1" height="1.4" fill="#101418"/><rect x="83.6" y="6.3" width="3.2" height="0.9" fill="#101418"/><rect x="1" y="3" width="10" height="1.5" fill="#3ab0c8"/><rect x="42" y="3" width="12" height="1.5" fill="#3ab0c8"/><rect x="2" y="13" width="7" height="1.5" fill="#e09040"/><rect x="98" y="4" width="5" height="2.5" fill="#e09040"/><rect x="130" y="10" width="4" height="1.5" fill="#e09040"/><rect x="150" y="5" width="6" height="1.5" fill="#e09040"/><rect x="48" y="8" width="28" height="8" fill="none" stroke="#1e5a70" stroke-width="0.8"/></svg><svg style="left:1520px;top:933px" width="30" height="16"><path d="M2 6 V15 M6 2 V15 M10 8 V15 M14 5 V15" stroke="#f0a050" stroke-width="2"/><path d="M24 7 L30 7 L27 11Z" fill="#4a4a4a"/></svg></body></html>
